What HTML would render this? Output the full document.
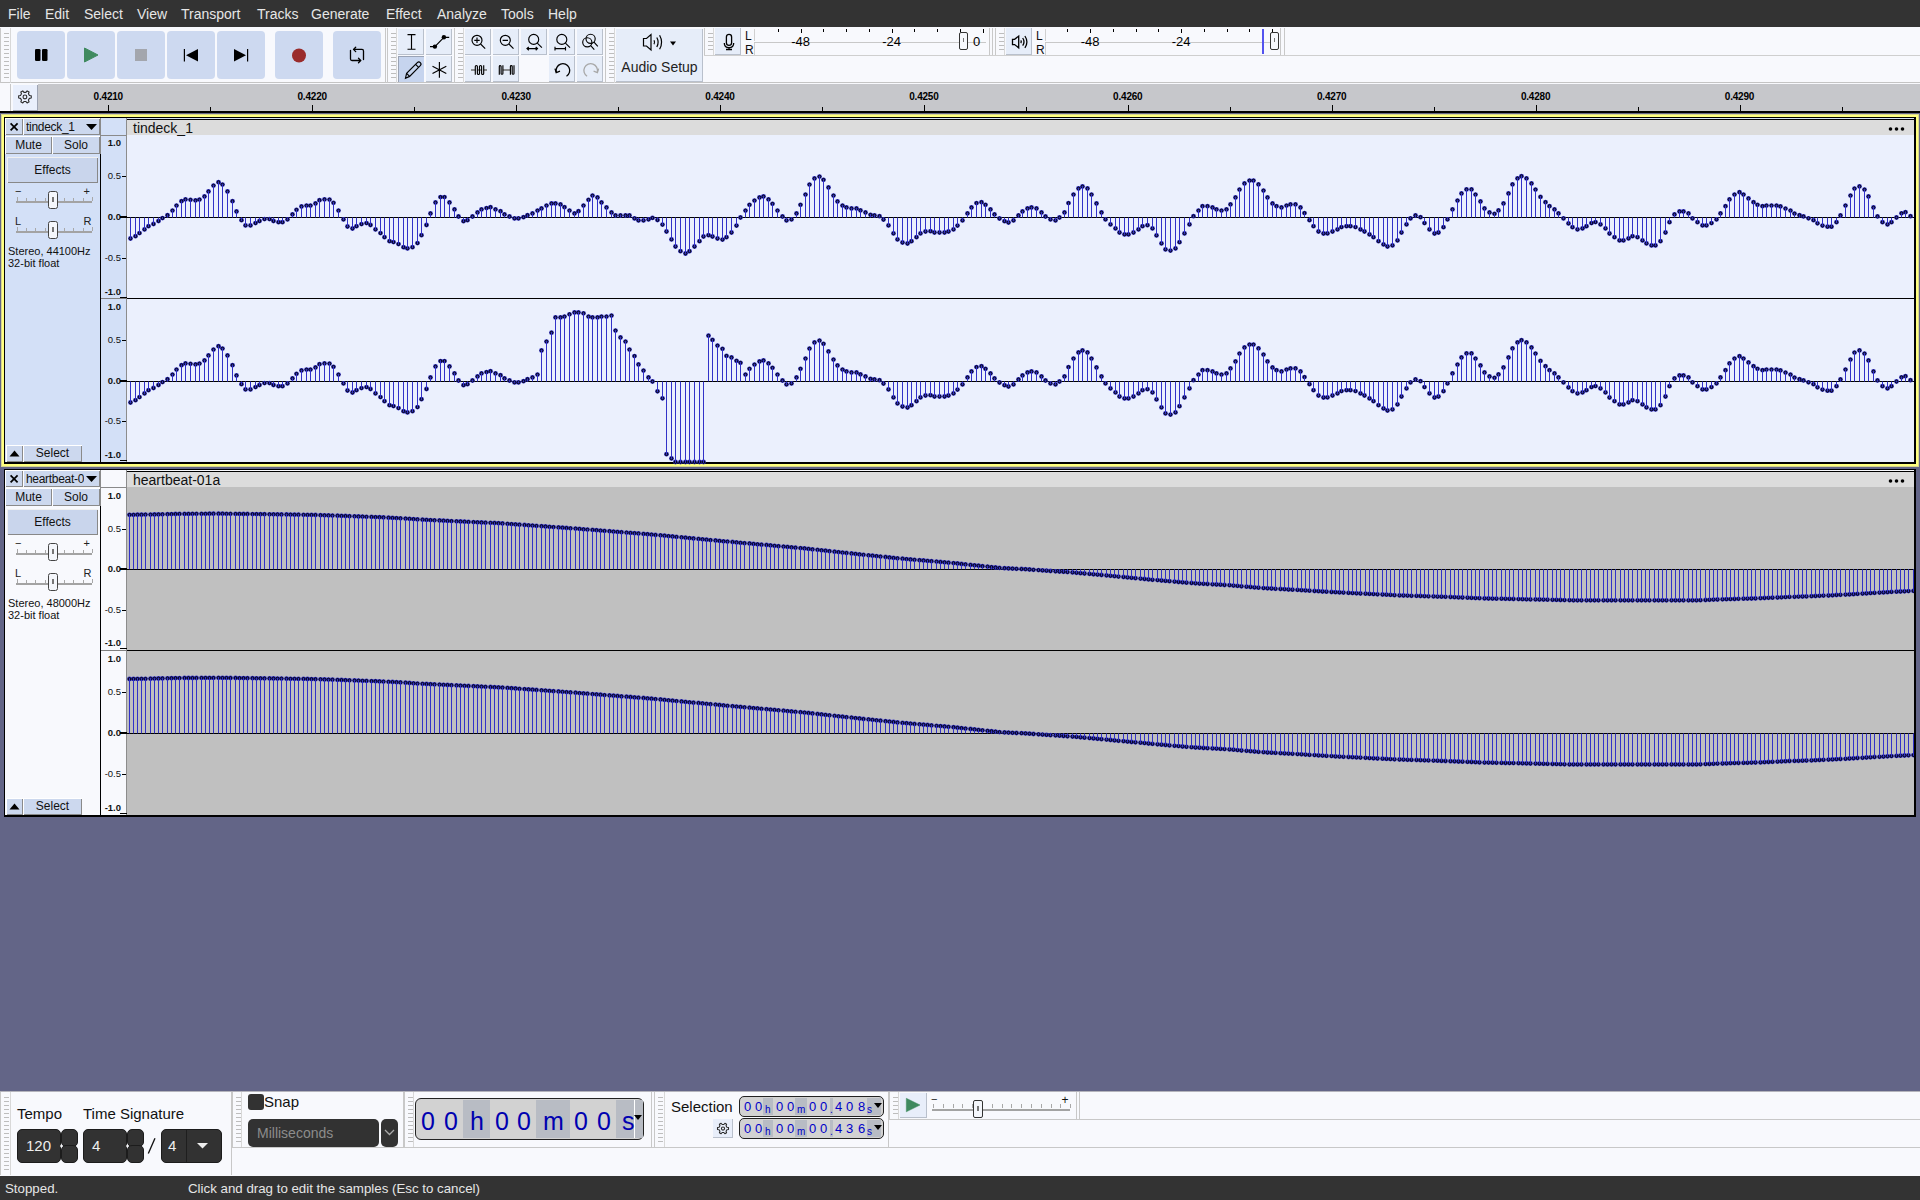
<!DOCTYPE html>
<html><head><meta charset="utf-8"><style>
html,body{margin:0;padding:0;width:1920px;height:1200px;overflow:hidden;background:#636587;position:relative}
body div{position:absolute}
.t{font-family:"Liberation Sans",sans-serif;white-space:nowrap}
svg{position:absolute}
</style></head><body>
<div style="left:0px;top:0px;width:1920px;height:27px;background:#333333"></div>
<div class="t" style="left:8px;top:1px;font-size:14px;color:#e6e6e6;height:27px;line-height:27px;">File</div>
<div class="t" style="left:45px;top:1px;font-size:14px;color:#e6e6e6;height:27px;line-height:27px;">Edit</div>
<div class="t" style="left:84px;top:1px;font-size:14px;color:#e6e6e6;height:27px;line-height:27px;">Select</div>
<div class="t" style="left:137px;top:1px;font-size:14px;color:#e6e6e6;height:27px;line-height:27px;">View</div>
<div class="t" style="left:181px;top:1px;font-size:14px;color:#e6e6e6;height:27px;line-height:27px;">Transport</div>
<div class="t" style="left:257px;top:1px;font-size:14px;color:#e6e6e6;height:27px;line-height:27px;">Tracks</div>
<div class="t" style="left:311px;top:1px;font-size:14px;color:#e6e6e6;height:27px;line-height:27px;">Generate</div>
<div class="t" style="left:386px;top:1px;font-size:14px;color:#e6e6e6;height:27px;line-height:27px;">Effect</div>
<div class="t" style="left:437px;top:1px;font-size:14px;color:#e6e6e6;height:27px;line-height:27px;">Analyze</div>
<div class="t" style="left:501px;top:1px;font-size:14px;color:#e6e6e6;height:27px;line-height:27px;">Tools</div>
<div class="t" style="left:548px;top:1px;font-size:14px;color:#e6e6e6;height:27px;line-height:27px;">Help</div>
<div style="left:0px;top:27px;width:1920px;height:57px;background:#f8f9fd"></div>
<div style="left:0px;top:82px;width:1920px;height:1px;background:#c4c4c4"></div>
<div style="left:0px;top:28px;width:1px;height:55px;background:#c8c8c8"></div>
<div style="left:4px;top:33px;width:5px;height:1px;background:#bdbdbd"></div><div style="left:4px;top:37px;width:5px;height:1px;background:#bdbdbd"></div><div style="left:4px;top:41px;width:5px;height:1px;background:#bdbdbd"></div><div style="left:4px;top:45px;width:5px;height:1px;background:#bdbdbd"></div><div style="left:4px;top:49px;width:5px;height:1px;background:#bdbdbd"></div><div style="left:4px;top:53px;width:5px;height:1px;background:#bdbdbd"></div><div style="left:4px;top:57px;width:5px;height:1px;background:#bdbdbd"></div><div style="left:4px;top:61px;width:5px;height:1px;background:#bdbdbd"></div><div style="left:4px;top:65px;width:5px;height:1px;background:#bdbdbd"></div><div style="left:4px;top:69px;width:5px;height:1px;background:#bdbdbd"></div><div style="left:4px;top:73px;width:5px;height:1px;background:#bdbdbd"></div><div style="left:4px;top:77px;width:5px;height:1px;background:#bdbdbd"></div>
<div style="left:10px;top:28px;width:1px;height:55px;background:#d8d8d8"></div>
<div style="left:17px;top:31px;width:48px;height:48px;background:#cdd9f0;border-radius:4px"></div>
<div style="left:67px;top:31px;width:48px;height:48px;background:#cdd9f0;border-radius:4px"></div>
<div style="left:117px;top:31px;width:48px;height:48px;background:#cdd9f0;border-radius:4px"></div>
<div style="left:167px;top:31px;width:48px;height:48px;background:#cdd9f0;border-radius:4px"></div>
<div style="left:217px;top:31px;width:48px;height:48px;background:#cdd9f0;border-radius:4px"></div>
<div style="left:275px;top:31px;width:48px;height:48px;background:#cdd9f0;border-radius:4px"></div>
<div style="left:333px;top:31px;width:48px;height:48px;background:#cdd9f0;border-radius:4px"></div>
<svg style="position:absolute;left:0;top:0" width="400" height="84">
<rect x="35" y="49" width="5.5" height="12" rx="1.3" fill="#000"/>
<rect x="42" y="49" width="5.5" height="12" rx="1.3" fill="#000"/>
<path d="M84.5 48 L84.5 62 L98 55 Z" fill="#3f8a5f" stroke="#3f8a5f" stroke-width="1" stroke-linejoin="round"/>
<rect x="135" y="49" width="12" height="12" fill="#a3a6ad"/>
<rect x="183.8" y="49" width="1.2" height="12.5" fill="#000"/>
<path d="M186 55.2 L198 49 L198 61.5 Z" fill="#000"/>
<path d="M234 49 L246 55.2 L234 61.5 Z" fill="#000"/>
<rect x="247" y="49" width="1.2" height="12.5" fill="#000"/>
<circle cx="299" cy="55.5" r="7" fill="#9a2c2c"/>
<path d="M350.5 50.3 V59 Q350.5 60.5 352 60.5 H360.8 M358.5 58.3 L360.8 60.5 L358.5 62.7" fill="none" stroke="#000" stroke-width="1.3" stroke-linecap="round" stroke-linejoin="round"/>
<path d="M353.5 49.4 H362 Q363.5 49.4 363.5 51 V59.6 M355.7 47.2 L353.5 49.4 L355.7 51.6" fill="none" stroke="#000" stroke-width="1.3" stroke-linecap="round" stroke-linejoin="round"/>
</svg>
<div style="left:385px;top:28px;width:1px;height:55px;background:#c8c8c8"></div>
<div style="left:387px;top:28px;width:1px;height:55px;background:#c8c8c8"></div>
<div style="left:391px;top:33px;width:5px;height:1px;background:#bdbdbd"></div><div style="left:391px;top:37px;width:5px;height:1px;background:#bdbdbd"></div><div style="left:391px;top:41px;width:5px;height:1px;background:#bdbdbd"></div><div style="left:391px;top:45px;width:5px;height:1px;background:#bdbdbd"></div><div style="left:391px;top:49px;width:5px;height:1px;background:#bdbdbd"></div><div style="left:391px;top:53px;width:5px;height:1px;background:#bdbdbd"></div><div style="left:391px;top:57px;width:5px;height:1px;background:#bdbdbd"></div><div style="left:391px;top:61px;width:5px;height:1px;background:#bdbdbd"></div><div style="left:391px;top:65px;width:5px;height:1px;background:#bdbdbd"></div><div style="left:391px;top:69px;width:5px;height:1px;background:#bdbdbd"></div><div style="left:391px;top:73px;width:5px;height:1px;background:#bdbdbd"></div><div style="left:391px;top:77px;width:5px;height:1px;background:#bdbdbd"></div>
<div style="left:396px;top:28px;width:1px;height:55px;background:#d8d8d8"></div>
<div style="left:398px;top:29px;width:26px;height:26px;background:#e6edf9;box-shadow:inset -1px -1px 0 #b9c0cc"></div>
<div style="left:426px;top:29px;width:26px;height:26px;background:#e6edf9;box-shadow:inset -1px -1px 0 #b9c0cc"></div>
<div style="left:398px;top:56px;width:26px;height:26px;background:#c6d4ee;box-shadow:inset 1px 1px 0 #9aa3b5"></div>
<div style="left:426px;top:56px;width:26px;height:26px;background:#e6edf9;box-shadow:inset -1px -1px 0 #b9c0cc"></div>
<div style="left:454px;top:28px;width:1px;height:55px;background:#c8c8c8"></div>
<div style="left:458px;top:33px;width:5px;height:1px;background:#bdbdbd"></div><div style="left:458px;top:37px;width:5px;height:1px;background:#bdbdbd"></div><div style="left:458px;top:41px;width:5px;height:1px;background:#bdbdbd"></div><div style="left:458px;top:45px;width:5px;height:1px;background:#bdbdbd"></div><div style="left:458px;top:49px;width:5px;height:1px;background:#bdbdbd"></div><div style="left:458px;top:53px;width:5px;height:1px;background:#bdbdbd"></div><div style="left:458px;top:57px;width:5px;height:1px;background:#bdbdbd"></div><div style="left:458px;top:61px;width:5px;height:1px;background:#bdbdbd"></div><div style="left:458px;top:65px;width:5px;height:1px;background:#bdbdbd"></div><div style="left:458px;top:69px;width:5px;height:1px;background:#bdbdbd"></div><div style="left:458px;top:73px;width:5px;height:1px;background:#bdbdbd"></div><div style="left:458px;top:77px;width:5px;height:1px;background:#bdbdbd"></div>
<div style="left:463px;top:28px;width:1px;height:55px;background:#d8d8d8"></div>
<div style="left:465px;top:29px;width:26px;height:26px;background:#e6edf9;box-shadow:inset -1px -1px 0 #b9c0cc"></div>
<div style="left:493px;top:29px;width:26px;height:26px;background:#e6edf9;box-shadow:inset -1px -1px 0 #b9c0cc"></div>
<div style="left:521px;top:29px;width:26px;height:26px;background:#e6edf9;box-shadow:inset -1px -1px 0 #b9c0cc"></div>
<div style="left:549px;top:29px;width:26px;height:26px;background:#e6edf9;box-shadow:inset -1px -1px 0 #b9c0cc"></div>
<div style="left:577px;top:29px;width:26px;height:26px;background:#e6edf9;box-shadow:inset -1px -1px 0 #b9c0cc"></div>
<div style="left:465px;top:56px;width:26px;height:26px;background:#e6edf9;box-shadow:inset -1px -1px 0 #b9c0cc"></div>
<div style="left:493px;top:56px;width:26px;height:26px;background:#e6edf9;box-shadow:inset -1px -1px 0 #b9c0cc"></div>
<div style="left:549px;top:56px;width:26px;height:26px;background:#e6edf9;box-shadow:inset -1px -1px 0 #b9c0cc"></div>
<div style="left:577px;top:56px;width:26px;height:26px;background:#e6edf9;box-shadow:inset -1px -1px 0 #b9c0cc"></div>
<div style="left:605px;top:28px;width:1px;height:55px;background:#c8c8c8"></div>
<div style="left:609px;top:33px;width:5px;height:1px;background:#bdbdbd"></div><div style="left:609px;top:37px;width:5px;height:1px;background:#bdbdbd"></div><div style="left:609px;top:41px;width:5px;height:1px;background:#bdbdbd"></div><div style="left:609px;top:45px;width:5px;height:1px;background:#bdbdbd"></div><div style="left:609px;top:49px;width:5px;height:1px;background:#bdbdbd"></div><div style="left:609px;top:53px;width:5px;height:1px;background:#bdbdbd"></div><div style="left:609px;top:57px;width:5px;height:1px;background:#bdbdbd"></div><div style="left:609px;top:61px;width:5px;height:1px;background:#bdbdbd"></div><div style="left:609px;top:65px;width:5px;height:1px;background:#bdbdbd"></div><div style="left:609px;top:69px;width:5px;height:1px;background:#bdbdbd"></div><div style="left:609px;top:73px;width:5px;height:1px;background:#bdbdbd"></div><div style="left:609px;top:77px;width:5px;height:1px;background:#bdbdbd"></div>
<div style="left:614px;top:28px;width:1px;height:55px;background:#d8d8d8"></div>
<div style="left:616px;top:29px;width:87px;height:53px;background:#e6edf9;box-shadow:inset -1px -1px 0 #b9c0cc"></div>
<div class="t" style="left:616px;top:56px;font-size:14px;color:#222;width:87px;height:22px;line-height:22px;text-align:center">Audio Setup</div>
<svg style="position:absolute;left:0;top:0" width="710" height="84">
<g fill="none" stroke="#000" stroke-width="1.15">
<path d="M407.5 34.6 H415.5 M411.5 34.6 V49.2 M407.5 49.2 H415.5"/>
<path d="M434.9 46.6 L443.9 37.3 M430 46.6 H434.9 M443.9 37.3 H449.2"/>
</g>
<circle cx="434.9" cy="46.6" r="2.2"/><circle cx="443.9" cy="37.3" r="2.2"/>
<g fill="none" stroke="#000" stroke-width="1.15">
<path d="M405.5 78.2 L406.6 73.4 L417.3 62.7 A1.7 1.7 0 0 1 420.3 65.7 L409.6 76.4 Z M406.6 73.4 L409.6 76.4 M415.6 64.4 L418.6 67.4"/>
<path d="M439.4 62 V77.8 M432.5 66.3 L446.3 73.5 M432.5 73.5 L446.3 66.3"/>
</g>
<g fill="none" stroke="#000" stroke-width="1.15">
<circle cx="477" cy="40.3" r="5"/><path d="M480.6 44 L485.2 48.6 M474.3 40.3 H479.7 M477 37.6 V43"/>
<circle cx="505.3" cy="40.3" r="5"/><path d="M508.9 44 L513.5 48.6 M502.6 40.3 H508"/>
<circle cx="533.7" cy="39.4" r="5"/><path d="M537.3 43.1 L541.9 47.7 M527 48.6 H537.5 M528.8 47 L527 48.6 L528.8 50.2 M535.7 47 L537.5 48.6 L535.7 50.2"/>
<circle cx="561.8" cy="39.4" r="5"/><path d="M565.4 43.1 L570 47.7 M555 48.6 H565.5 M555 46.8 V50.4 M565.5 46.8 V50.4"/>
<circle cx="587.3" cy="42.3" r="4.6"/><circle cx="590.6" cy="38.8" r="4.6"/><path d="M594 42.2 L597.8 46.3 M590.7 45.6 L594.3 49.6"/>
</g>
<path d="M471 70 H487" stroke="#6e6e6e" stroke-width="1.5"/>
<path d="M475.3 74.7 V66.5 A1.05 1.05 0 0 1 477.4 66.5 V73.4 A1.05 1.05 0 0 0 479.5 73.4 V66.5 A1.05 1.05 0 0 1 481.6 66.5 V73.4 A1.05 1.05 0 0 0 483.7 73.4 V65.3" fill="#e6edf9" stroke="#000" stroke-width="1.15"/>
<path d="M502.8 70 H510" stroke="#6e6e6e" stroke-width="1.5"/>
<path d="M499.3 74.7 V66.5 A0.9 0.9 0 0 1 501.1 66.5 V73.4 A0.9 0.9 0 0 0 502.9 73.4 V65.3" fill="none" stroke="#000" stroke-width="1.15"/>
<path d="M510.4 74.7 V66.5 A0.9 0.9 0 0 1 512.2 66.5 V73.4 A0.9 0.9 0 0 0 514 73.4 V65.3" fill="none" stroke="#000" stroke-width="1.15"/>
<path d="M556.3 72.2 A6.8 6.8 0 1 1 566.5 76.3" fill="none" stroke="#000" stroke-width="1.3"/>
<path d="M555 68.6 L556.2 72.6 L560 71.2" fill="none" stroke="#000" stroke-width="1.3"/>
<path d="M597.3 72.2 A6.8 6.8 0 1 0 587.1 76.3" fill="none" stroke="#a8a8a8" stroke-width="1.3"/>
<path d="M598.6 68.6 L597.4 72.6 L593.6 71.2" fill="none" stroke="#a8a8a8" stroke-width="1.3"/>
<g fill="none" stroke="#000" stroke-width="1.2">
<path d="M643.5 38.5 H646.5 L651 34.5 V50 L646.5 46 H643.5 Z"/>
<path d="M654 40.3 Q655.2 42.3 654 44.3"/>
<path d="M656.8 37.5 Q659.5 42.3 656.8 47"/>
<path d="M659.6 35.2 Q663.6 42.3 659.6 49.3"/>
</g>
<path d="M670 41.5 H676 L673 45.5 Z" fill="#000"/>
</svg>
<div style="left:704px;top:28px;width:1px;height:27px;background:#c8c8c8"></div>
<div style="left:708px;top:33px;width:5px;height:1px;background:#bdbdbd"></div><div style="left:708px;top:37px;width:5px;height:1px;background:#bdbdbd"></div><div style="left:708px;top:41px;width:5px;height:1px;background:#bdbdbd"></div><div style="left:708px;top:45px;width:5px;height:1px;background:#bdbdbd"></div><div style="left:708px;top:49px;width:5px;height:1px;background:#bdbdbd"></div>
<div style="left:713px;top:28px;width:1px;height:27px;background:#d8d8d8"></div>
<div style="left:715px;top:28px;width:26px;height:27px;background:#e6edf9;box-shadow:inset -1px -1px 0 #b9c0cc"></div>
<svg style="position:absolute;left:715px;top:28px" width="26" height="27"><g fill="none" stroke="#000" stroke-width="1.3"><rect x="11.4" y="6.3" width="5.2" height="11" rx="2.6"/><path d="M9.3 15 Q9.3 19.7 14 19.7 Q18.7 19.7 18.7 15 M14 19.7 V21.5 M11 21.5 H17"/></g></svg>
<div class="t" style="left:745px;top:30px;font-size:12px;color:#111;height:13px;line-height:13px;">L</div>
<div class="t" style="left:745px;top:44px;font-size:12px;color:#111;height:13px;line-height:13px;">R</div>
<div style="left:995px;top:28px;width:1px;height:27px;background:#c8c8c8"></div>
<div style="left:999px;top:33px;width:5px;height:1px;background:#bdbdbd"></div><div style="left:999px;top:37px;width:5px;height:1px;background:#bdbdbd"></div><div style="left:999px;top:41px;width:5px;height:1px;background:#bdbdbd"></div><div style="left:999px;top:45px;width:5px;height:1px;background:#bdbdbd"></div><div style="left:999px;top:49px;width:5px;height:1px;background:#bdbdbd"></div>
<div style="left:1004px;top:28px;width:1px;height:27px;background:#d8d8d8"></div>
<div style="left:1006px;top:28px;width:26px;height:27px;background:#e6edf9;box-shadow:inset -1px -1px 0 #b9c0cc"></div>
<svg style="position:absolute;left:1006px;top:28px" width="26" height="27"><g fill="none" stroke="#000" stroke-width="1.3"><path d="M6.5 11.3 H8.6 L12.7 8.1 V19.8 L8.6 16.6 H6.5 Z"/><path d="M14.8 12.4 Q15.8 13.8 14.8 15.2"/><path d="M16.7 10 Q19.3 13.85 16.7 17.7"/><path d="M18.9 8 Q22.9 13.95 18.9 19.9"/></g></svg>
<div class="t" style="left:1036px;top:30px;font-size:12px;color:#111;height:13px;line-height:13px;">L</div>
<div class="t" style="left:1036px;top:44px;font-size:12px;color:#111;height:13px;line-height:13px;">R</div>
<div style="left:754px;top:29px;width:1px;height:12px;background:#d0d0d0"></div>
<div style="left:754px;top:43px;width:1px;height:12px;background:#d0d0d0"></div>
<div style="left:754px;top:42px;width:232px;height:1px;background:#c8c8c8"></div>
<div style="left:777.8px;top:29px;width:1px;height:3px;background:#000"></div><div style="left:800.6px;top:29px;width:1px;height:4px;background:#000"></div><div style="left:823.3px;top:29px;width:1px;height:3px;background:#000"></div><div style="left:846.1px;top:29px;width:1px;height:3px;background:#000"></div><div style="left:868.8px;top:29px;width:1px;height:3px;background:#000"></div><div style="left:891.5px;top:29px;width:1px;height:4px;background:#000"></div><div style="left:914.3px;top:29px;width:1px;height:3px;background:#000"></div><div style="left:937.0px;top:29px;width:1px;height:3px;background:#000"></div><div style="left:959.8px;top:29px;width:1px;height:3px;background:#000"></div><div style="left:982.5px;top:29px;width:1px;height:4px;background:#000"></div>
<div class="t" style="left:785.5799999999999px;top:34px;font-size:13px;color:#000;width:30px;height:16px;line-height:16px;text-align:center">-48</div>
<div class="t" style="left:876.54px;top:34px;font-size:13px;color:#000;width:30px;height:16px;line-height:16px;text-align:center">-24</div>
<div style="left:959px;top:32px;width:9px;height:18px;background:#f6f8fd;border:1px solid #333;border-radius:2px;box-sizing:border-box"></div>
<div style="left:963px;top:38px;width:1px;height:4px;background:#777"></div>
<div class="t" style="left:973px;top:34px;font-size:13px;color:#000;width:10px;height:16px;line-height:16px;">0</div>
<div style="left:989px;top:28px;width:1px;height:27px;background:#c8c8c8"></div>
<div style="left:992px;top:28px;width:1px;height:27px;background:#c8c8c8"></div>
<div style="left:1045px;top:29px;width:1px;height:12px;background:#d0d0d0"></div>
<div style="left:1045px;top:43px;width:1px;height:12px;background:#d0d0d0"></div>
<div style="left:1045px;top:42px;width:232px;height:1px;background:#c8c8c8"></div>
<div style="left:1067.3px;top:29px;width:1px;height:3px;background:#000"></div><div style="left:1090.1px;top:29px;width:1px;height:4px;background:#000"></div><div style="left:1112.8px;top:29px;width:1px;height:3px;background:#000"></div><div style="left:1135.6px;top:29px;width:1px;height:3px;background:#000"></div><div style="left:1158.3px;top:29px;width:1px;height:3px;background:#000"></div><div style="left:1181.0px;top:29px;width:1px;height:4px;background:#000"></div><div style="left:1203.8px;top:29px;width:1px;height:3px;background:#000"></div><div style="left:1226.5px;top:29px;width:1px;height:3px;background:#000"></div><div style="left:1249.3px;top:29px;width:1px;height:3px;background:#000"></div><div style="left:1272.0px;top:29px;width:1px;height:4px;background:#000"></div>
<div class="t" style="left:1075.08px;top:34px;font-size:13px;color:#000;width:30px;height:16px;line-height:16px;text-align:center">-48</div>
<div class="t" style="left:1166.04px;top:34px;font-size:13px;color:#000;width:30px;height:16px;line-height:16px;text-align:center">-24</div>
<div style="left:1262px;top:29px;width:2px;height:25px;background:#5353ef"></div>
<div style="left:1270px;top:32px;width:9px;height:18px;background:#f6f8fd;border:1px solid #333;border-radius:2px;box-sizing:border-box"></div>
<div style="left:1274px;top:38px;width:1px;height:4px;background:#777"></div>
<div style="left:1280px;top:28px;width:1px;height:27px;background:#c8c8c8"></div>
<div style="left:1284px;top:28px;width:1px;height:27px;background:#c8c8c8"></div>
<div style="left:704px;top:55px;width:1216px;height:1px;background:#cfcfcf"></div>
<div style="left:0px;top:84px;width:1920px;height:29px;background:#f8f9fd"></div>
<div style="left:10px;top:84px;width:1px;height:29px;background:#c8c8c8"></div>
<div style="left:13px;top:85px;width:25px;height:26px;background:#e9effc;box-shadow:inset -1px -1px 0 #9ea4b4"></div>
<svg style="position:absolute;left:13px;top:85px" width="25" height="26"><path d="M16.42 10.50 L18.25 10.82 L18.25 13.08 L16.42 13.40 L15.44 15.09 L16.08 16.84 L14.12 17.97 L12.93 16.55 L10.97 16.55 L9.78 17.97 L7.82 16.84 L8.46 15.09 L7.48 13.40 L5.65 13.08 L5.65 10.82 L7.48 10.50 L8.46 8.81 L7.82 7.06 L9.78 5.93 L10.97 7.35 L12.93 7.35 L14.12 5.93 L16.08 7.06 L15.44 8.81 Z" fill="none" stroke="#2a2a2a" stroke-width="1.1" stroke-linejoin="round"/><circle cx="11.95" cy="11.95" r="1.9" fill="none" stroke="#2a2a2a" stroke-width="1.1"/></svg>
<div style="left:38px;top:84px;width:1882px;height:28px;background:#c6c7cb"></div>
<div style="left:0px;top:111px;width:1920px;height:2px;background:#000"></div>
<div style="left:108.3px;top:105px;width:1px;height:6px;background:#000"></div><div style="left:210.2px;top:107px;width:1px;height:4px;background:#000"></div><div style="left:312.2px;top:105px;width:1px;height:6px;background:#000"></div><div style="left:414.1px;top:107px;width:1px;height:4px;background:#000"></div><div style="left:516.1px;top:105px;width:1px;height:6px;background:#000"></div><div style="left:618.1px;top:107px;width:1px;height:4px;background:#000"></div><div style="left:720.0px;top:105px;width:1px;height:6px;background:#000"></div><div style="left:822.0px;top:107px;width:1px;height:4px;background:#000"></div><div style="left:923.9px;top:105px;width:1px;height:6px;background:#000"></div><div style="left:1025.8px;top:107px;width:1px;height:4px;background:#000"></div><div style="left:1127.8px;top:105px;width:1px;height:6px;background:#000"></div><div style="left:1229.8px;top:107px;width:1px;height:4px;background:#000"></div><div style="left:1331.7px;top:105px;width:1px;height:6px;background:#000"></div><div style="left:1433.7px;top:107px;width:1px;height:4px;background:#000"></div><div style="left:1535.6px;top:105px;width:1px;height:6px;background:#000"></div><div style="left:1637.5px;top:107px;width:1px;height:4px;background:#000"></div><div style="left:1739.5px;top:105px;width:1px;height:6px;background:#000"></div><div style="left:1841.5px;top:107px;width:1px;height:4px;background:#000"></div><div style="left:1943.4px;top:105px;width:1px;height:6px;background:#000"></div>
<div class="t" style="left:88.3px;top:90px;font-size:10px;color:#000;width:40px;height:14px;line-height:14px;text-align:center;font-weight:bold;letter-spacing:-0.2px">0.4210</div>
<div class="t" style="left:292.2px;top:90px;font-size:10px;color:#000;width:40px;height:14px;line-height:14px;text-align:center;font-weight:bold;letter-spacing:-0.2px">0.4220</div>
<div class="t" style="left:496.1px;top:90px;font-size:10px;color:#000;width:40px;height:14px;line-height:14px;text-align:center;font-weight:bold;letter-spacing:-0.2px">0.4230</div>
<div class="t" style="left:700.0px;top:90px;font-size:10px;color:#000;width:40px;height:14px;line-height:14px;text-align:center;font-weight:bold;letter-spacing:-0.2px">0.4240</div>
<div class="t" style="left:903.9px;top:90px;font-size:10px;color:#000;width:40px;height:14px;line-height:14px;text-align:center;font-weight:bold;letter-spacing:-0.2px">0.4250</div>
<div class="t" style="left:1107.8px;top:90px;font-size:10px;color:#000;width:40px;height:14px;line-height:14px;text-align:center;font-weight:bold;letter-spacing:-0.2px">0.4260</div>
<div class="t" style="left:1311.7px;top:90px;font-size:10px;color:#000;width:40px;height:14px;line-height:14px;text-align:center;font-weight:bold;letter-spacing:-0.2px">0.4270</div>
<div class="t" style="left:1515.6px;top:90px;font-size:10px;color:#000;width:40px;height:14px;line-height:14px;text-align:center;font-weight:bold;letter-spacing:-0.2px">0.4280</div>
<div class="t" style="left:1719.5px;top:90px;font-size:10px;color:#000;width:40px;height:14px;line-height:14px;text-align:center;font-weight:bold;letter-spacing:-0.2px">0.4290</div>
<div style="left:0px;top:113px;width:1920px;height:978px;background:#636587"></div>
<div style="left:1px;top:114px;width:1918px;height:353px;background:#d6d68e"></div>
<div style="left:2px;top:115px;width:1916px;height:351px;background:#ffff80"></div>
<div style="left:4px;top:117px;width:1912px;height:347px;background:#000"></div>
<div style="left:5px;top:118px;width:1909px;height:344px;background:#d3e0f7"></div>
<div style="left:101px;top:118px;width:26px;height:344px;background:#d3e0f7"></div>
<div style="left:100px;top:154px;width:1px;height:308px;background:#000"></div>
<div style="left:100px;top:118px;width:1px;height:36px;background:#8a8a8a"></div>
<div style="left:101px;top:135px;width:26px;height:1px;background:#8a8a8a"></div>
<div style="left:126px;top:118px;width:1px;height:344px;background:#8c8c8c"></div>
<div style="left:127px;top:119px;width:1787px;height:1px;background:#000"></div>
<div style="left:127px;top:120px;width:1787px;height:15px;background:#dcdcdc"></div>
<svg style="position:absolute;left:1886px;top:126px" width="20" height="6"><circle cx="4.5" cy="3" r="1.8"/><circle cx="10.5" cy="3" r="1.8"/><circle cx="16.5" cy="3" r="1.8"/></svg>
<div style="left:127px;top:135px;width:1787px;height:327px;background:#ebf0fd"></div>
<div class="t" style="left:133px;top:120px;font-size:14px;color:#111;height:17px;line-height:17px;">tindeck_1</div>
<div style="left:5px;top:118px;width:18px;height:17px;background:#ccd8ee;box-shadow:inset 1px 1px 0 #fff, inset -1px -1px 0 #8a8a8a"></div>
<svg style="position:absolute;left:5px;top:118px" width="18" height="17"><path d="M5.6 5.3 L12.6 12.3 M12.6 5.3 L5.6 12.3" stroke="#000" stroke-width="1.7"/></svg>
<div style="left:23px;top:118px;width:77px;height:17px;background:#ccd8ee;box-shadow:inset 1px 1px 0 #fff, inset -1px -1px 0 #8a8a8a"></div>
<div class="t" style="left:26px;top:119px;font-size:12px;color:#111;width:58px;height:17px;line-height:17px;overflow:hidden;white-space:nowrap;letter-spacing:-0.3px">tindeck_1</div>
<svg style="position:absolute;left:85px;top:123px" width="14" height="8"><path d="M1 1 H12 L6.5 7 Z" fill="#000"/></svg>
<div style="left:5px;top:136px;width:47px;height:18px;background:#ccd8ee;box-shadow:inset 1px 1px 0 #fff, inset -1px -1px 0 #8a8a8a"></div>
<div class="t" style="left:5px;top:136px;font-size:12px;color:#111;width:47px;height:18px;line-height:18px;text-align:center">Mute</div>
<div style="left:52px;top:136px;width:48px;height:18px;background:#ccd8ee;box-shadow:inset 1px 1px 0 #fff, inset -1px -1px 0 #8a8a8a"></div>
<div class="t" style="left:52px;top:136px;font-size:12px;color:#111;width:48px;height:18px;line-height:18px;text-align:center">Solo</div>
<div style="left:7px;top:157px;width:91px;height:26px;background:#c9d5ec;box-shadow:inset 1px 1px 0 #f0f0f0, inset -1px -1px 0 #888, 0 0 0 0 #000"></div>
<div class="t" style="left:7px;top:157px;font-size:12px;color:#111;width:91px;height:26px;line-height:26px;text-align:center">Effects</div>
<div class="t" style="left:15px;top:185px;font-size:11px;color:#222;height:12px;line-height:12px;">&minus;</div>
<div class="t" style="left:83.5px;top:185px;font-size:11px;color:#222;height:12px;line-height:12px;">+</div>
<div style="left:16px;top:201px;width:76px;height:2px;background:#a3a3a3"></div>
<div style="left:16.5px;top:197px;width:1px;height:4px;background:#a8a8a8"></div><div style="left:25.9px;top:198px;width:1px;height:3px;background:#a8a8a8"></div><div style="left:35.4px;top:198px;width:1px;height:3px;background:#a8a8a8"></div><div style="left:44.8px;top:198px;width:1px;height:3px;background:#a8a8a8"></div><div style="left:54.3px;top:198px;width:1px;height:3px;background:#a8a8a8"></div><div style="left:63.8px;top:198px;width:1px;height:3px;background:#a8a8a8"></div><div style="left:73.2px;top:198px;width:1px;height:3px;background:#a8a8a8"></div><div style="left:82.6px;top:198px;width:1px;height:3px;background:#a8a8a8"></div><div style="left:92.1px;top:197px;width:1px;height:4px;background:#a8a8a8"></div>
<div style="left:48px;top:191px;width:10px;height:18px;background:#f4f6fb;border:1px solid #444;border-radius:2.5px;box-sizing:border-box"></div>
<div style="left:52px;top:197px;width:2px;height:5px;background:#777"></div>
<div class="t" style="left:15px;top:215px;font-size:11px;color:#222;height:12px;line-height:12px;">L</div>
<div class="t" style="left:83.5px;top:215px;font-size:11px;color:#222;height:12px;line-height:12px;">R</div>
<div style="left:16px;top:231px;width:76px;height:2px;background:#a3a3a3"></div>
<div style="left:16.5px;top:227px;width:1px;height:4px;background:#a8a8a8"></div><div style="left:25.9px;top:228px;width:1px;height:3px;background:#a8a8a8"></div><div style="left:35.4px;top:228px;width:1px;height:3px;background:#a8a8a8"></div><div style="left:44.8px;top:228px;width:1px;height:3px;background:#a8a8a8"></div><div style="left:54.3px;top:228px;width:1px;height:3px;background:#a8a8a8"></div><div style="left:63.8px;top:228px;width:1px;height:3px;background:#a8a8a8"></div><div style="left:73.2px;top:228px;width:1px;height:3px;background:#a8a8a8"></div><div style="left:82.6px;top:228px;width:1px;height:3px;background:#a8a8a8"></div><div style="left:92.1px;top:227px;width:1px;height:4px;background:#a8a8a8"></div>
<div style="left:48px;top:221px;width:10px;height:18px;background:#f4f6fb;border:1px solid #444;border-radius:2.5px;box-sizing:border-box"></div>
<div style="left:52px;top:227px;width:2px;height:5px;background:#777"></div>
<div class="t" style="left:8px;top:245px;font-size:11px;color:#111;height:13px;line-height:13px;">Stereo, 44100Hz</div>
<div class="t" style="left:8px;top:257px;font-size:11px;color:#111;height:13px;line-height:13px;">32-bit float</div>
<div style="left:6px;top:445px;width:17px;height:17px;background:#ccd8ee;box-shadow:inset 1px 1px 0 #fff, inset -1px -1px 0 #8a8a8a"></div>
<svg style="position:absolute;left:8px;top:448px" width="14" height="10"><path d="M1.5 8.5 L6.5 2.5 L11.5 8.5 Z" fill="#000"/></svg>
<div style="left:23px;top:445px;width:59px;height:17px;background:#ccd8ee;box-shadow:inset 1px 1px 0 #fff, inset -1px -1px 0 #8a8a8a"></div>
<div class="t" style="left:23px;top:445px;font-size:12px;color:#111;width:59px;height:17px;line-height:17px;text-align:center">Select</div>
<div class="t" style="left:99px;top:136.0px;width:22px;height:14px;line-height:14px;font-size:9.5px;text-align:right;font-weight:bold;color:#111">1.0</div><div class="t" style="left:99px;top:169.2px;width:22px;height:14px;line-height:14px;font-size:9.5px;text-align:right;font-weight:normal;color:#111">0.5</div><div style="left:122px;top:176.2px;width:4px;height:1px;background:#000"></div><div class="t" style="left:99px;top:210.0px;width:22px;height:14px;line-height:14px;font-size:9.5px;text-align:right;font-weight:bold;color:#111">0.0</div><div style="left:120px;top:216.0px;width:7px;height:2px;background:#000"></div><div class="t" style="left:99px;top:250.8px;width:22px;height:14px;line-height:14px;font-size:9.5px;text-align:right;font-weight:normal;color:#111">-0.5</div><div style="left:122px;top:257.8px;width:4px;height:1px;background:#000"></div><div class="t" style="left:99px;top:284.5px;width:22px;height:14px;line-height:14px;font-size:9.5px;text-align:right;font-weight:bold;color:#111">-1.0</div><div style="left:120px;top:296.5px;width:7px;height:1px;background:#000"></div>
<div class="t" style="left:99px;top:300.0px;width:22px;height:14px;line-height:14px;font-size:9.5px;text-align:right;font-weight:bold;color:#111">1.0</div><div class="t" style="left:99px;top:333.1px;width:22px;height:14px;line-height:14px;font-size:9.5px;text-align:right;font-weight:normal;color:#111">0.5</div><div style="left:122px;top:340.1px;width:4px;height:1px;background:#000"></div><div class="t" style="left:99px;top:373.8px;width:22px;height:14px;line-height:14px;font-size:9.5px;text-align:right;font-weight:bold;color:#111">0.0</div><div style="left:120px;top:379.8px;width:7px;height:2px;background:#000"></div><div class="t" style="left:99px;top:414.4px;width:22px;height:14px;line-height:14px;font-size:9.5px;text-align:right;font-weight:normal;color:#111">-0.5</div><div style="left:122px;top:421.4px;width:4px;height:1px;background:#000"></div><div class="t" style="left:99px;top:448.0px;width:22px;height:14px;line-height:14px;font-size:9.5px;text-align:right;font-weight:bold;color:#111">-1.0</div><div style="left:120px;top:460.0px;width:7px;height:1px;background:#000"></div>
<div style="left:101px;top:298px;width:26px;height:1px;background:#808080"></div>
<div style="left:127px;top:298px;width:1787px;height:1px;background:#000"></div>
<div style="left:4px;top:469px;width:1912px;height:348px;background:#000"></div>
<div style="left:5px;top:470px;width:1909px;height:345px;background:#f8f9fd"></div>
<div style="left:101px;top:470px;width:26px;height:345px;background:#f8f9fd"></div>
<div style="left:100px;top:506px;width:1px;height:309px;background:#000"></div>
<div style="left:100px;top:470px;width:1px;height:36px;background:#8a8a8a"></div>
<div style="left:101px;top:487px;width:26px;height:1px;background:#8a8a8a"></div>
<div style="left:126px;top:470px;width:1px;height:345px;background:#8c8c8c"></div>
<div style="left:127px;top:471px;width:1787px;height:1px;background:#000"></div>
<div style="left:127px;top:472px;width:1787px;height:15px;background:#dcdcdc"></div>
<svg style="position:absolute;left:1886px;top:478px" width="20" height="6"><circle cx="4.5" cy="3" r="1.8"/><circle cx="10.5" cy="3" r="1.8"/><circle cx="16.5" cy="3" r="1.8"/></svg>
<div style="left:127px;top:487px;width:1787px;height:328px;background:#c0c0c0"></div>
<div class="t" style="left:133px;top:472px;font-size:14px;color:#111;height:17px;line-height:17px;">heartbeat-01a</div>
<div style="left:5px;top:470px;width:18px;height:17px;background:#ccd8ee;box-shadow:inset 1px 1px 0 #fff, inset -1px -1px 0 #8a8a8a"></div>
<svg style="position:absolute;left:5px;top:470px" width="18" height="17"><path d="M5.6 5.3 L12.6 12.3 M12.6 5.3 L5.6 12.3" stroke="#000" stroke-width="1.7"/></svg>
<div style="left:23px;top:470px;width:77px;height:17px;background:#ccd8ee;box-shadow:inset 1px 1px 0 #fff, inset -1px -1px 0 #8a8a8a"></div>
<div class="t" style="left:26px;top:471px;font-size:12px;color:#111;width:58px;height:17px;line-height:17px;overflow:hidden;white-space:nowrap;letter-spacing:-0.3px">heartbeat-01a</div>
<svg style="position:absolute;left:85px;top:475px" width="14" height="8"><path d="M1 1 H12 L6.5 7 Z" fill="#000"/></svg>
<div style="left:5px;top:488px;width:47px;height:18px;background:#ccd8ee;box-shadow:inset 1px 1px 0 #fff, inset -1px -1px 0 #8a8a8a"></div>
<div class="t" style="left:5px;top:488px;font-size:12px;color:#111;width:47px;height:18px;line-height:18px;text-align:center">Mute</div>
<div style="left:52px;top:488px;width:48px;height:18px;background:#ccd8ee;box-shadow:inset 1px 1px 0 #fff, inset -1px -1px 0 #8a8a8a"></div>
<div class="t" style="left:52px;top:488px;font-size:12px;color:#111;width:48px;height:18px;line-height:18px;text-align:center">Solo</div>
<div style="left:7px;top:509px;width:91px;height:26px;background:#c9d5ec;box-shadow:inset 1px 1px 0 #f0f0f0, inset -1px -1px 0 #888, 0 0 0 0 #000"></div>
<div class="t" style="left:7px;top:509px;font-size:12px;color:#111;width:91px;height:26px;line-height:26px;text-align:center">Effects</div>
<div class="t" style="left:15px;top:537px;font-size:11px;color:#222;height:12px;line-height:12px;">&minus;</div>
<div class="t" style="left:83.5px;top:537px;font-size:11px;color:#222;height:12px;line-height:12px;">+</div>
<div style="left:16px;top:553px;width:76px;height:2px;background:#a3a3a3"></div>
<div style="left:16.5px;top:549px;width:1px;height:4px;background:#a8a8a8"></div><div style="left:25.9px;top:550px;width:1px;height:3px;background:#a8a8a8"></div><div style="left:35.4px;top:550px;width:1px;height:3px;background:#a8a8a8"></div><div style="left:44.8px;top:550px;width:1px;height:3px;background:#a8a8a8"></div><div style="left:54.3px;top:550px;width:1px;height:3px;background:#a8a8a8"></div><div style="left:63.8px;top:550px;width:1px;height:3px;background:#a8a8a8"></div><div style="left:73.2px;top:550px;width:1px;height:3px;background:#a8a8a8"></div><div style="left:82.6px;top:550px;width:1px;height:3px;background:#a8a8a8"></div><div style="left:92.1px;top:549px;width:1px;height:4px;background:#a8a8a8"></div>
<div style="left:48px;top:543px;width:10px;height:18px;background:#f4f6fb;border:1px solid #444;border-radius:2.5px;box-sizing:border-box"></div>
<div style="left:52px;top:549px;width:2px;height:5px;background:#777"></div>
<div class="t" style="left:15px;top:567px;font-size:11px;color:#222;height:12px;line-height:12px;">L</div>
<div class="t" style="left:83.5px;top:567px;font-size:11px;color:#222;height:12px;line-height:12px;">R</div>
<div style="left:16px;top:583px;width:76px;height:2px;background:#a3a3a3"></div>
<div style="left:16.5px;top:579px;width:1px;height:4px;background:#a8a8a8"></div><div style="left:25.9px;top:580px;width:1px;height:3px;background:#a8a8a8"></div><div style="left:35.4px;top:580px;width:1px;height:3px;background:#a8a8a8"></div><div style="left:44.8px;top:580px;width:1px;height:3px;background:#a8a8a8"></div><div style="left:54.3px;top:580px;width:1px;height:3px;background:#a8a8a8"></div><div style="left:63.8px;top:580px;width:1px;height:3px;background:#a8a8a8"></div><div style="left:73.2px;top:580px;width:1px;height:3px;background:#a8a8a8"></div><div style="left:82.6px;top:580px;width:1px;height:3px;background:#a8a8a8"></div><div style="left:92.1px;top:579px;width:1px;height:4px;background:#a8a8a8"></div>
<div style="left:48px;top:573px;width:10px;height:18px;background:#f4f6fb;border:1px solid #444;border-radius:2.5px;box-sizing:border-box"></div>
<div style="left:52px;top:579px;width:2px;height:5px;background:#777"></div>
<div class="t" style="left:8px;top:597px;font-size:11px;color:#111;height:13px;line-height:13px;">Stereo, 48000Hz</div>
<div class="t" style="left:8px;top:609px;font-size:11px;color:#111;height:13px;line-height:13px;">32-bit float</div>
<div style="left:6px;top:798px;width:17px;height:17px;background:#ccd8ee;box-shadow:inset 1px 1px 0 #fff, inset -1px -1px 0 #8a8a8a"></div>
<svg style="position:absolute;left:8px;top:801px" width="14" height="10"><path d="M1.5 8.5 L6.5 2.5 L11.5 8.5 Z" fill="#000"/></svg>
<div style="left:23px;top:798px;width:59px;height:17px;background:#ccd8ee;box-shadow:inset 1px 1px 0 #fff, inset -1px -1px 0 #8a8a8a"></div>
<div class="t" style="left:23px;top:798px;font-size:12px;color:#111;width:59px;height:17px;line-height:17px;text-align:center">Select</div>
<div class="t" style="left:99px;top:488.5px;width:22px;height:14px;line-height:14px;font-size:9.5px;text-align:right;font-weight:bold;color:#111">1.0</div><div class="t" style="left:99px;top:521.5px;width:22px;height:14px;line-height:14px;font-size:9.5px;text-align:right;font-weight:normal;color:#111">0.5</div><div style="left:122px;top:528.5px;width:4px;height:1px;background:#000"></div><div class="t" style="left:99px;top:562.0px;width:22px;height:14px;line-height:14px;font-size:9.5px;text-align:right;font-weight:bold;color:#111">0.0</div><div style="left:120px;top:568.0px;width:7px;height:2px;background:#000"></div><div class="t" style="left:99px;top:602.5px;width:22px;height:14px;line-height:14px;font-size:9.5px;text-align:right;font-weight:normal;color:#111">-0.5</div><div style="left:122px;top:609.5px;width:4px;height:1px;background:#000"></div><div class="t" style="left:99px;top:636.0px;width:22px;height:14px;line-height:14px;font-size:9.5px;text-align:right;font-weight:bold;color:#111">-1.0</div><div style="left:120px;top:648.0px;width:7px;height:1px;background:#000"></div>
<div class="t" style="left:99px;top:651.5px;width:22px;height:14px;line-height:14px;font-size:9.5px;text-align:right;font-weight:bold;color:#111">1.0</div><div class="t" style="left:99px;top:685.0px;width:22px;height:14px;line-height:14px;font-size:9.5px;text-align:right;font-weight:normal;color:#111">0.5</div><div style="left:122px;top:692.0px;width:4px;height:1px;background:#000"></div><div class="t" style="left:99px;top:726.0px;width:22px;height:14px;line-height:14px;font-size:9.5px;text-align:right;font-weight:bold;color:#111">0.0</div><div style="left:120px;top:732.0px;width:7px;height:2px;background:#000"></div><div class="t" style="left:99px;top:767.0px;width:22px;height:14px;line-height:14px;font-size:9.5px;text-align:right;font-weight:normal;color:#111">-0.5</div><div style="left:122px;top:774.0px;width:4px;height:1px;background:#000"></div><div class="t" style="left:99px;top:801.0px;width:22px;height:14px;line-height:14px;font-size:9.5px;text-align:right;font-weight:bold;color:#111">-1.0</div><div style="left:120px;top:813.0px;width:7px;height:1px;background:#000"></div>
<div style="left:101px;top:650px;width:26px;height:1px;background:#808080"></div>
<div style="left:127px;top:650px;width:1787px;height:1px;background:#000"></div>
<svg style="position:absolute;left:0;top:0" width="1920" height="830"><defs><clipPath id="wc"><rect x="127" y="118" width="1787" height="700"/></clipPath></defs><g clip-path="url(#wc)"><rect x="127" y="217" width="1787" height="1" fill="#000"/><path d="M128.10 238.5a2.4 2.4 0 1 0 4.8 0a2.4 2.4 0 1 0 -4.8 0M133.10 236.2a2.4 2.4 0 1 0 4.8 0a2.4 2.4 0 1 0 -4.8 0M137.10 233.1a2.4 2.4 0 1 0 4.8 0a2.4 2.4 0 1 0 -4.8 0M142.10 229.4a2.4 2.4 0 1 0 4.8 0a2.4 2.4 0 1 0 -4.8 0M146.10 226.2a2.4 2.4 0 1 0 4.8 0a2.4 2.4 0 1 0 -4.8 0M151.10 224.0a2.4 2.4 0 1 0 4.8 0a2.4 2.4 0 1 0 -4.8 0M156.10 221.0a2.4 2.4 0 1 0 4.8 0a2.4 2.4 0 1 0 -4.8 0M160.10 218.1a2.4 2.4 0 1 0 4.8 0a2.4 2.4 0 1 0 -4.8 0M165.10 215.2a2.4 2.4 0 1 0 4.8 0a2.4 2.4 0 1 0 -4.8 0M170.10 210.6a2.4 2.4 0 1 0 4.8 0a2.4 2.4 0 1 0 -4.8 0M174.10 205.6a2.4 2.4 0 1 0 4.8 0a2.4 2.4 0 1 0 -4.8 0M179.10 201.2a2.4 2.4 0 1 0 4.8 0a2.4 2.4 0 1 0 -4.8 0M183.10 199.4a2.4 2.4 0 1 0 4.8 0a2.4 2.4 0 1 0 -4.8 0M188.10 199.8a2.4 2.4 0 1 0 4.8 0a2.4 2.4 0 1 0 -4.8 0M193.10 200.4a2.4 2.4 0 1 0 4.8 0a2.4 2.4 0 1 0 -4.8 0M197.10 199.6a2.4 2.4 0 1 0 4.8 0a2.4 2.4 0 1 0 -4.8 0M202.10 196.5a2.4 2.4 0 1 0 4.8 0a2.4 2.4 0 1 0 -4.8 0M206.10 191.5a2.4 2.4 0 1 0 4.8 0a2.4 2.4 0 1 0 -4.8 0M211.10 185.6a2.4 2.4 0 1 0 4.8 0a2.4 2.4 0 1 0 -4.8 0M216.10 182.2a2.4 2.4 0 1 0 4.8 0a2.4 2.4 0 1 0 -4.8 0M220.10 184.6a2.4 2.4 0 1 0 4.8 0a2.4 2.4 0 1 0 -4.8 0M225.10 191.5a2.4 2.4 0 1 0 4.8 0a2.4 2.4 0 1 0 -4.8 0M230.10 201.2a2.4 2.4 0 1 0 4.8 0a2.4 2.4 0 1 0 -4.8 0M234.10 211.5a2.4 2.4 0 1 0 4.8 0a2.4 2.4 0 1 0 -4.8 0M239.10 220.2a2.4 2.4 0 1 0 4.8 0a2.4 2.4 0 1 0 -4.8 0M243.10 225.4a2.4 2.4 0 1 0 4.8 0a2.4 2.4 0 1 0 -4.8 0M248.10 225.4a2.4 2.4 0 1 0 4.8 0a2.4 2.4 0 1 0 -4.8 0M253.10 223.1a2.4 2.4 0 1 0 4.8 0a2.4 2.4 0 1 0 -4.8 0M257.10 221.0a2.4 2.4 0 1 0 4.8 0a2.4 2.4 0 1 0 -4.8 0M262.10 219.1a2.4 2.4 0 1 0 4.8 0a2.4 2.4 0 1 0 -4.8 0M267.10 219.1a2.4 2.4 0 1 0 4.8 0a2.4 2.4 0 1 0 -4.8 0M271.10 221.0a2.4 2.4 0 1 0 4.8 0a2.4 2.4 0 1 0 -4.8 0M276.10 222.2a2.4 2.4 0 1 0 4.8 0a2.4 2.4 0 1 0 -4.8 0M280.10 222.2a2.4 2.4 0 1 0 4.8 0a2.4 2.4 0 1 0 -4.8 0M285.10 219.4a2.4 2.4 0 1 0 4.8 0a2.4 2.4 0 1 0 -4.8 0M290.10 214.4a2.4 2.4 0 1 0 4.8 0a2.4 2.4 0 1 0 -4.8 0M294.10 209.8a2.4 2.4 0 1 0 4.8 0a2.4 2.4 0 1 0 -4.8 0M299.10 206.5a2.4 2.4 0 1 0 4.8 0a2.4 2.4 0 1 0 -4.8 0M304.10 205.6a2.4 2.4 0 1 0 4.8 0a2.4 2.4 0 1 0 -4.8 0M308.10 205.6a2.4 2.4 0 1 0 4.8 0a2.4 2.4 0 1 0 -4.8 0M313.10 203.5a2.4 2.4 0 1 0 4.8 0a2.4 2.4 0 1 0 -4.8 0M317.10 200.2a2.4 2.4 0 1 0 4.8 0a2.4 2.4 0 1 0 -4.8 0M322.10 199.4a2.4 2.4 0 1 0 4.8 0a2.4 2.4 0 1 0 -4.8 0M327.10 199.6a2.4 2.4 0 1 0 4.8 0a2.4 2.4 0 1 0 -4.8 0M331.10 202.8a2.4 2.4 0 1 0 4.8 0a2.4 2.4 0 1 0 -4.8 0M336.10 210.6a2.4 2.4 0 1 0 4.8 0a2.4 2.4 0 1 0 -4.8 0M341.10 219.4a2.4 2.4 0 1 0 4.8 0a2.4 2.4 0 1 0 -4.8 0M345.10 226.5a2.4 2.4 0 1 0 4.8 0a2.4 2.4 0 1 0 -4.8 0M350.10 228.5a2.4 2.4 0 1 0 4.8 0a2.4 2.4 0 1 0 -4.8 0M354.10 226.2a2.4 2.4 0 1 0 4.8 0a2.4 2.4 0 1 0 -4.8 0M359.10 224.1a2.4 2.4 0 1 0 4.8 0a2.4 2.4 0 1 0 -4.8 0M364.10 223.1a2.4 2.4 0 1 0 4.8 0a2.4 2.4 0 1 0 -4.8 0M368.10 225.0a2.4 2.4 0 1 0 4.8 0a2.4 2.4 0 1 0 -4.8 0M373.10 229.4a2.4 2.4 0 1 0 4.8 0a2.4 2.4 0 1 0 -4.8 0M378.10 233.1a2.4 2.4 0 1 0 4.8 0a2.4 2.4 0 1 0 -4.8 0M382.10 237.2a2.4 2.4 0 1 0 4.8 0a2.4 2.4 0 1 0 -4.8 0M387.10 241.2a2.4 2.4 0 1 0 4.8 0a2.4 2.4 0 1 0 -4.8 0M391.10 242.1a2.4 2.4 0 1 0 4.8 0a2.4 2.4 0 1 0 -4.8 0M396.10 244.1a2.4 2.4 0 1 0 4.8 0a2.4 2.4 0 1 0 -4.8 0M401.10 247.2a2.4 2.4 0 1 0 4.8 0a2.4 2.4 0 1 0 -4.8 0M405.10 248.4a2.4 2.4 0 1 0 4.8 0a2.4 2.4 0 1 0 -4.8 0M410.10 247.2a2.4 2.4 0 1 0 4.8 0a2.4 2.4 0 1 0 -4.8 0M415.10 243.1a2.4 2.4 0 1 0 4.8 0a2.4 2.4 0 1 0 -4.8 0M419.10 235.2a2.4 2.4 0 1 0 4.8 0a2.4 2.4 0 1 0 -4.8 0M424.10 225.0a2.4 2.4 0 1 0 4.8 0a2.4 2.4 0 1 0 -4.8 0M428.10 213.5a2.4 2.4 0 1 0 4.8 0a2.4 2.4 0 1 0 -4.8 0M433.10 202.5a2.4 2.4 0 1 0 4.8 0a2.4 2.4 0 1 0 -4.8 0M438.10 197.1a2.4 2.4 0 1 0 4.8 0a2.4 2.4 0 1 0 -4.8 0M442.10 197.1a2.4 2.4 0 1 0 4.8 0a2.4 2.4 0 1 0 -4.8 0M447.10 202.5a2.4 2.4 0 1 0 4.8 0a2.4 2.4 0 1 0 -4.8 0M452.10 209.4a2.4 2.4 0 1 0 4.8 0a2.4 2.4 0 1 0 -4.8 0M456.10 216.5a2.4 2.4 0 1 0 4.8 0a2.4 2.4 0 1 0 -4.8 0M461.10 221.2a2.4 2.4 0 1 0 4.8 0a2.4 2.4 0 1 0 -4.8 0M465.10 220.2a2.4 2.4 0 1 0 4.8 0a2.4 2.4 0 1 0 -4.8 0M470.10 216.5a2.4 2.4 0 1 0 4.8 0a2.4 2.4 0 1 0 -4.8 0M475.10 212.5a2.4 2.4 0 1 0 4.8 0a2.4 2.4 0 1 0 -4.8 0M479.10 209.4a2.4 2.4 0 1 0 4.8 0a2.4 2.4 0 1 0 -4.8 0M484.10 208.1a2.4 2.4 0 1 0 4.8 0a2.4 2.4 0 1 0 -4.8 0M488.10 207.2a2.4 2.4 0 1 0 4.8 0a2.4 2.4 0 1 0 -4.8 0M493.10 209.4a2.4 2.4 0 1 0 4.8 0a2.4 2.4 0 1 0 -4.8 0M498.10 211.2a2.4 2.4 0 1 0 4.8 0a2.4 2.4 0 1 0 -4.8 0M502.10 214.4a2.4 2.4 0 1 0 4.8 0a2.4 2.4 0 1 0 -4.8 0M507.10 216.5a2.4 2.4 0 1 0 4.8 0a2.4 2.4 0 1 0 -4.8 0M512.10 218.4a2.4 2.4 0 1 0 4.8 0a2.4 2.4 0 1 0 -4.8 0M516.10 218.4a2.4 2.4 0 1 0 4.8 0a2.4 2.4 0 1 0 -4.8 0M521.10 217.2a2.4 2.4 0 1 0 4.8 0a2.4 2.4 0 1 0 -4.8 0M525.10 215.2a2.4 2.4 0 1 0 4.8 0a2.4 2.4 0 1 0 -4.8 0M530.10 213.5a2.4 2.4 0 1 0 4.8 0a2.4 2.4 0 1 0 -4.8 0M535.10 210.6a2.4 2.4 0 1 0 4.8 0a2.4 2.4 0 1 0 -4.8 0M539.10 208.5a2.4 2.4 0 1 0 4.8 0a2.4 2.4 0 1 0 -4.8 0M544.10 205.6a2.4 2.4 0 1 0 4.8 0a2.4 2.4 0 1 0 -4.8 0M549.10 203.5a2.4 2.4 0 1 0 4.8 0a2.4 2.4 0 1 0 -4.8 0M553.10 203.5a2.4 2.4 0 1 0 4.8 0a2.4 2.4 0 1 0 -4.8 0M558.10 204.4a2.4 2.4 0 1 0 4.8 0a2.4 2.4 0 1 0 -4.8 0M562.10 207.2a2.4 2.4 0 1 0 4.8 0a2.4 2.4 0 1 0 -4.8 0M567.10 210.6a2.4 2.4 0 1 0 4.8 0a2.4 2.4 0 1 0 -4.8 0M572.10 213.5a2.4 2.4 0 1 0 4.8 0a2.4 2.4 0 1 0 -4.8 0M576.10 211.2a2.4 2.4 0 1 0 4.8 0a2.4 2.4 0 1 0 -4.8 0M581.10 205.6a2.4 2.4 0 1 0 4.8 0a2.4 2.4 0 1 0 -4.8 0M586.10 199.8a2.4 2.4 0 1 0 4.8 0a2.4 2.4 0 1 0 -4.8 0M590.10 195.6a2.4 2.4 0 1 0 4.8 0a2.4 2.4 0 1 0 -4.8 0M595.10 197.5a2.4 2.4 0 1 0 4.8 0a2.4 2.4 0 1 0 -4.8 0M599.10 202.5a2.4 2.4 0 1 0 4.8 0a2.4 2.4 0 1 0 -4.8 0M604.10 207.5a2.4 2.4 0 1 0 4.8 0a2.4 2.4 0 1 0 -4.8 0M609.10 212.5a2.4 2.4 0 1 0 4.8 0a2.4 2.4 0 1 0 -4.8 0M613.10 215.4a2.4 2.4 0 1 0 4.8 0a2.4 2.4 0 1 0 -4.8 0M618.10 215.4a2.4 2.4 0 1 0 4.8 0a2.4 2.4 0 1 0 -4.8 0M623.10 215.4a2.4 2.4 0 1 0 4.8 0a2.4 2.4 0 1 0 -4.8 0M627.10 215.4a2.4 2.4 0 1 0 4.8 0a2.4 2.4 0 1 0 -4.8 0M632.10 218.4a2.4 2.4 0 1 0 4.8 0a2.4 2.4 0 1 0 -4.8 0M636.10 220.4a2.4 2.4 0 1 0 4.8 0a2.4 2.4 0 1 0 -4.8 0M641.10 220.4a2.4 2.4 0 1 0 4.8 0a2.4 2.4 0 1 0 -4.8 0M646.10 219.4a2.4 2.4 0 1 0 4.8 0a2.4 2.4 0 1 0 -4.8 0M650.10 217.9a2.4 2.4 0 1 0 4.8 0a2.4 2.4 0 1 0 -4.8 0M655.10 220.0a2.4 2.4 0 1 0 4.8 0a2.4 2.4 0 1 0 -4.8 0M660.10 224.6a2.4 2.4 0 1 0 4.8 0a2.4 2.4 0 1 0 -4.8 0M664.10 231.5a2.4 2.4 0 1 0 4.8 0a2.4 2.4 0 1 0 -4.8 0M669.10 239.4a2.4 2.4 0 1 0 4.8 0a2.4 2.4 0 1 0 -4.8 0M673.10 246.5a2.4 2.4 0 1 0 4.8 0a2.4 2.4 0 1 0 -4.8 0M678.10 251.2a2.4 2.4 0 1 0 4.8 0a2.4 2.4 0 1 0 -4.8 0M683.10 253.5a2.4 2.4 0 1 0 4.8 0a2.4 2.4 0 1 0 -4.8 0M687.10 251.2a2.4 2.4 0 1 0 4.8 0a2.4 2.4 0 1 0 -4.8 0M692.10 246.5a2.4 2.4 0 1 0 4.8 0a2.4 2.4 0 1 0 -4.8 0M697.10 241.2a2.4 2.4 0 1 0 4.8 0a2.4 2.4 0 1 0 -4.8 0M701.10 236.5a2.4 2.4 0 1 0 4.8 0a2.4 2.4 0 1 0 -4.8 0M706.10 235.2a2.4 2.4 0 1 0 4.8 0a2.4 2.4 0 1 0 -4.8 0M710.10 236.5a2.4 2.4 0 1 0 4.8 0a2.4 2.4 0 1 0 -4.8 0M715.10 238.5a2.4 2.4 0 1 0 4.8 0a2.4 2.4 0 1 0 -4.8 0M720.10 239.6a2.4 2.4 0 1 0 4.8 0a2.4 2.4 0 1 0 -4.8 0M724.10 237.2a2.4 2.4 0 1 0 4.8 0a2.4 2.4 0 1 0 -4.8 0M729.10 232.5a2.4 2.4 0 1 0 4.8 0a2.4 2.4 0 1 0 -4.8 0M734.10 225.6a2.4 2.4 0 1 0 4.8 0a2.4 2.4 0 1 0 -4.8 0M738.10 217.5a2.4 2.4 0 1 0 4.8 0a2.4 2.4 0 1 0 -4.8 0M743.10 210.6a2.4 2.4 0 1 0 4.8 0a2.4 2.4 0 1 0 -4.8 0M747.10 204.8a2.4 2.4 0 1 0 4.8 0a2.4 2.4 0 1 0 -4.8 0M752.10 200.6a2.4 2.4 0 1 0 4.8 0a2.4 2.4 0 1 0 -4.8 0M757.10 197.5a2.4 2.4 0 1 0 4.8 0a2.4 2.4 0 1 0 -4.8 0M761.10 196.5a2.4 2.4 0 1 0 4.8 0a2.4 2.4 0 1 0 -4.8 0M766.10 199.4a2.4 2.4 0 1 0 4.8 0a2.4 2.4 0 1 0 -4.8 0M770.10 203.8a2.4 2.4 0 1 0 4.8 0a2.4 2.4 0 1 0 -4.8 0M775.10 210.6a2.4 2.4 0 1 0 4.8 0a2.4 2.4 0 1 0 -4.8 0M780.10 216.5a2.4 2.4 0 1 0 4.8 0a2.4 2.4 0 1 0 -4.8 0M784.10 220.4a2.4 2.4 0 1 0 4.8 0a2.4 2.4 0 1 0 -4.8 0M789.10 219.4a2.4 2.4 0 1 0 4.8 0a2.4 2.4 0 1 0 -4.8 0M794.10 213.5a2.4 2.4 0 1 0 4.8 0a2.4 2.4 0 1 0 -4.8 0M798.10 204.8a2.4 2.4 0 1 0 4.8 0a2.4 2.4 0 1 0 -4.8 0M803.10 194.6a2.4 2.4 0 1 0 4.8 0a2.4 2.4 0 1 0 -4.8 0M807.10 184.6a2.4 2.4 0 1 0 4.8 0a2.4 2.4 0 1 0 -4.8 0M812.10 178.5a2.4 2.4 0 1 0 4.8 0a2.4 2.4 0 1 0 -4.8 0M817.10 176.6a2.4 2.4 0 1 0 4.8 0a2.4 2.4 0 1 0 -4.8 0M821.10 179.8a2.4 2.4 0 1 0 4.8 0a2.4 2.4 0 1 0 -4.8 0M826.10 187.5a2.4 2.4 0 1 0 4.8 0a2.4 2.4 0 1 0 -4.8 0M831.10 195.6a2.4 2.4 0 1 0 4.8 0a2.4 2.4 0 1 0 -4.8 0M835.10 201.5a2.4 2.4 0 1 0 4.8 0a2.4 2.4 0 1 0 -4.8 0M840.10 205.6a2.4 2.4 0 1 0 4.8 0a2.4 2.4 0 1 0 -4.8 0M844.10 207.5a2.4 2.4 0 1 0 4.8 0a2.4 2.4 0 1 0 -4.8 0M849.10 208.5a2.4 2.4 0 1 0 4.8 0a2.4 2.4 0 1 0 -4.8 0M854.10 208.5a2.4 2.4 0 1 0 4.8 0a2.4 2.4 0 1 0 -4.8 0M858.10 210.4a2.4 2.4 0 1 0 4.8 0a2.4 2.4 0 1 0 -4.8 0M863.10 212.5a2.4 2.4 0 1 0 4.8 0a2.4 2.4 0 1 0 -4.8 0M868.10 214.8a2.4 2.4 0 1 0 4.8 0a2.4 2.4 0 1 0 -4.8 0M872.10 215.4a2.4 2.4 0 1 0 4.8 0a2.4 2.4 0 1 0 -4.8 0M877.10 216.2a2.4 2.4 0 1 0 4.8 0a2.4 2.4 0 1 0 -4.8 0M881.10 219.6a2.4 2.4 0 1 0 4.8 0a2.4 2.4 0 1 0 -4.8 0M886.10 225.4a2.4 2.4 0 1 0 4.8 0a2.4 2.4 0 1 0 -4.8 0M891.10 233.4a2.4 2.4 0 1 0 4.8 0a2.4 2.4 0 1 0 -4.8 0M895.10 239.4a2.4 2.4 0 1 0 4.8 0a2.4 2.4 0 1 0 -4.8 0M900.10 242.5a2.4 2.4 0 1 0 4.8 0a2.4 2.4 0 1 0 -4.8 0M905.10 243.5a2.4 2.4 0 1 0 4.8 0a2.4 2.4 0 1 0 -4.8 0M909.10 241.2a2.4 2.4 0 1 0 4.8 0a2.4 2.4 0 1 0 -4.8 0M914.10 237.2a2.4 2.4 0 1 0 4.8 0a2.4 2.4 0 1 0 -4.8 0M918.10 233.4a2.4 2.4 0 1 0 4.8 0a2.4 2.4 0 1 0 -4.8 0M923.10 231.5a2.4 2.4 0 1 0 4.8 0a2.4 2.4 0 1 0 -4.8 0M928.10 231.2a2.4 2.4 0 1 0 4.8 0a2.4 2.4 0 1 0 -4.8 0M932.10 232.5a2.4 2.4 0 1 0 4.8 0a2.4 2.4 0 1 0 -4.8 0M937.10 232.5a2.4 2.4 0 1 0 4.8 0a2.4 2.4 0 1 0 -4.8 0M942.10 232.5a2.4 2.4 0 1 0 4.8 0a2.4 2.4 0 1 0 -4.8 0M946.10 231.5a2.4 2.4 0 1 0 4.8 0a2.4 2.4 0 1 0 -4.8 0M951.10 229.4a2.4 2.4 0 1 0 4.8 0a2.4 2.4 0 1 0 -4.8 0M955.10 225.6a2.4 2.4 0 1 0 4.8 0a2.4 2.4 0 1 0 -4.8 0M960.10 220.4a2.4 2.4 0 1 0 4.8 0a2.4 2.4 0 1 0 -4.8 0M965.10 213.4a2.4 2.4 0 1 0 4.8 0a2.4 2.4 0 1 0 -4.8 0M969.10 207.5a2.4 2.4 0 1 0 4.8 0a2.4 2.4 0 1 0 -4.8 0M974.10 203.1a2.4 2.4 0 1 0 4.8 0a2.4 2.4 0 1 0 -4.8 0M979.10 202.2a2.4 2.4 0 1 0 4.8 0a2.4 2.4 0 1 0 -4.8 0M983.10 204.8a2.4 2.4 0 1 0 4.8 0a2.4 2.4 0 1 0 -4.8 0M988.10 209.4a2.4 2.4 0 1 0 4.8 0a2.4 2.4 0 1 0 -4.8 0M992.10 214.4a2.4 2.4 0 1 0 4.8 0a2.4 2.4 0 1 0 -4.8 0M997.10 218.5a2.4 2.4 0 1 0 4.8 0a2.4 2.4 0 1 0 -4.8 0M1002.10 221.2a2.4 2.4 0 1 0 4.8 0a2.4 2.4 0 1 0 -4.8 0M1006.10 222.5a2.4 2.4 0 1 0 4.8 0a2.4 2.4 0 1 0 -4.8 0M1011.10 220.4a2.4 2.4 0 1 0 4.8 0a2.4 2.4 0 1 0 -4.8 0M1016.10 215.4a2.4 2.4 0 1 0 4.8 0a2.4 2.4 0 1 0 -4.8 0M1020.10 211.5a2.4 2.4 0 1 0 4.8 0a2.4 2.4 0 1 0 -4.8 0M1025.10 208.5a2.4 2.4 0 1 0 4.8 0a2.4 2.4 0 1 0 -4.8 0M1029.10 207.5a2.4 2.4 0 1 0 4.8 0a2.4 2.4 0 1 0 -4.8 0M1034.10 208.5a2.4 2.4 0 1 0 4.8 0a2.4 2.4 0 1 0 -4.8 0M1039.10 212.5a2.4 2.4 0 1 0 4.8 0a2.4 2.4 0 1 0 -4.8 0M1043.10 216.5a2.4 2.4 0 1 0 4.8 0a2.4 2.4 0 1 0 -4.8 0M1048.10 219.4a2.4 2.4 0 1 0 4.8 0a2.4 2.4 0 1 0 -4.8 0M1053.10 220.4a2.4 2.4 0 1 0 4.8 0a2.4 2.4 0 1 0 -4.8 0M1057.10 217.5a2.4 2.4 0 1 0 4.8 0a2.4 2.4 0 1 0 -4.8 0M1062.10 212.5a2.4 2.4 0 1 0 4.8 0a2.4 2.4 0 1 0 -4.8 0M1066.10 203.1a2.4 2.4 0 1 0 4.8 0a2.4 2.4 0 1 0 -4.8 0M1071.10 194.6a2.4 2.4 0 1 0 4.8 0a2.4 2.4 0 1 0 -4.8 0M1076.10 188.5a2.4 2.4 0 1 0 4.8 0a2.4 2.4 0 1 0 -4.8 0M1080.10 186.5a2.4 2.4 0 1 0 4.8 0a2.4 2.4 0 1 0 -4.8 0M1085.10 188.5a2.4 2.4 0 1 0 4.8 0a2.4 2.4 0 1 0 -4.8 0M1089.10 194.6a2.4 2.4 0 1 0 4.8 0a2.4 2.4 0 1 0 -4.8 0M1094.10 203.5a2.4 2.4 0 1 0 4.8 0a2.4 2.4 0 1 0 -4.8 0M1099.10 212.5a2.4 2.4 0 1 0 4.8 0a2.4 2.4 0 1 0 -4.8 0M1103.10 219.4a2.4 2.4 0 1 0 4.8 0a2.4 2.4 0 1 0 -4.8 0M1108.10 224.4a2.4 2.4 0 1 0 4.8 0a2.4 2.4 0 1 0 -4.8 0M1113.10 228.4a2.4 2.4 0 1 0 4.8 0a2.4 2.4 0 1 0 -4.8 0M1117.10 232.5a2.4 2.4 0 1 0 4.8 0a2.4 2.4 0 1 0 -4.8 0M1122.10 234.4a2.4 2.4 0 1 0 4.8 0a2.4 2.4 0 1 0 -4.8 0M1126.10 234.4a2.4 2.4 0 1 0 4.8 0a2.4 2.4 0 1 0 -4.8 0M1131.10 232.5a2.4 2.4 0 1 0 4.8 0a2.4 2.4 0 1 0 -4.8 0M1136.10 229.4a2.4 2.4 0 1 0 4.8 0a2.4 2.4 0 1 0 -4.8 0M1140.10 226.2a2.4 2.4 0 1 0 4.8 0a2.4 2.4 0 1 0 -4.8 0M1145.10 225.2a2.4 2.4 0 1 0 4.8 0a2.4 2.4 0 1 0 -4.8 0M1150.10 228.4a2.4 2.4 0 1 0 4.8 0a2.4 2.4 0 1 0 -4.8 0M1154.10 235.4a2.4 2.4 0 1 0 4.8 0a2.4 2.4 0 1 0 -4.8 0M1159.10 243.4a2.4 2.4 0 1 0 4.8 0a2.4 2.4 0 1 0 -4.8 0M1163.10 249.4a2.4 2.4 0 1 0 4.8 0a2.4 2.4 0 1 0 -4.8 0M1168.10 250.6a2.4 2.4 0 1 0 4.8 0a2.4 2.4 0 1 0 -4.8 0M1173.10 248.4a2.4 2.4 0 1 0 4.8 0a2.4 2.4 0 1 0 -4.8 0M1177.10 242.2a2.4 2.4 0 1 0 4.8 0a2.4 2.4 0 1 0 -4.8 0M1182.10 233.4a2.4 2.4 0 1 0 4.8 0a2.4 2.4 0 1 0 -4.8 0M1187.10 224.4a2.4 2.4 0 1 0 4.8 0a2.4 2.4 0 1 0 -4.8 0M1191.10 216.2a2.4 2.4 0 1 0 4.8 0a2.4 2.4 0 1 0 -4.8 0M1196.10 210.6a2.4 2.4 0 1 0 4.8 0a2.4 2.4 0 1 0 -4.8 0M1200.10 206.2a2.4 2.4 0 1 0 4.8 0a2.4 2.4 0 1 0 -4.8 0M1205.10 206.2a2.4 2.4 0 1 0 4.8 0a2.4 2.4 0 1 0 -4.8 0M1210.10 207.5a2.4 2.4 0 1 0 4.8 0a2.4 2.4 0 1 0 -4.8 0M1214.10 209.4a2.4 2.4 0 1 0 4.8 0a2.4 2.4 0 1 0 -4.8 0M1219.10 210.6a2.4 2.4 0 1 0 4.8 0a2.4 2.4 0 1 0 -4.8 0M1224.10 209.4a2.4 2.4 0 1 0 4.8 0a2.4 2.4 0 1 0 -4.8 0M1228.10 204.4a2.4 2.4 0 1 0 4.8 0a2.4 2.4 0 1 0 -4.8 0M1233.10 197.5a2.4 2.4 0 1 0 4.8 0a2.4 2.4 0 1 0 -4.8 0M1237.10 189.6a2.4 2.4 0 1 0 4.8 0a2.4 2.4 0 1 0 -4.8 0M1242.10 183.5a2.4 2.4 0 1 0 4.8 0a2.4 2.4 0 1 0 -4.8 0M1247.10 180.6a2.4 2.4 0 1 0 4.8 0a2.4 2.4 0 1 0 -4.8 0M1251.10 180.6a2.4 2.4 0 1 0 4.8 0a2.4 2.4 0 1 0 -4.8 0M1256.10 184.4a2.4 2.4 0 1 0 4.8 0a2.4 2.4 0 1 0 -4.8 0M1261.10 190.6a2.4 2.4 0 1 0 4.8 0a2.4 2.4 0 1 0 -4.8 0M1265.10 197.5a2.4 2.4 0 1 0 4.8 0a2.4 2.4 0 1 0 -4.8 0M1270.10 203.5a2.4 2.4 0 1 0 4.8 0a2.4 2.4 0 1 0 -4.8 0M1274.10 206.2a2.4 2.4 0 1 0 4.8 0a2.4 2.4 0 1 0 -4.8 0M1279.10 207.5a2.4 2.4 0 1 0 4.8 0a2.4 2.4 0 1 0 -4.8 0M1284.10 205.6a2.4 2.4 0 1 0 4.8 0a2.4 2.4 0 1 0 -4.8 0M1288.10 204.4a2.4 2.4 0 1 0 4.8 0a2.4 2.4 0 1 0 -4.8 0M1293.10 204.4a2.4 2.4 0 1 0 4.8 0a2.4 2.4 0 1 0 -4.8 0M1298.10 207.5a2.4 2.4 0 1 0 4.8 0a2.4 2.4 0 1 0 -4.8 0M1302.10 213.1a2.4 2.4 0 1 0 4.8 0a2.4 2.4 0 1 0 -4.8 0M1307.10 220.2a2.4 2.4 0 1 0 4.8 0a2.4 2.4 0 1 0 -4.8 0M1311.10 226.2a2.4 2.4 0 1 0 4.8 0a2.4 2.4 0 1 0 -4.8 0M1316.10 231.5a2.4 2.4 0 1 0 4.8 0a2.4 2.4 0 1 0 -4.8 0M1321.10 233.5a2.4 2.4 0 1 0 4.8 0a2.4 2.4 0 1 0 -4.8 0M1325.10 233.4a2.4 2.4 0 1 0 4.8 0a2.4 2.4 0 1 0 -4.8 0M1330.10 231.5a2.4 2.4 0 1 0 4.8 0a2.4 2.4 0 1 0 -4.8 0M1335.10 229.4a2.4 2.4 0 1 0 4.8 0a2.4 2.4 0 1 0 -4.8 0M1339.10 227.1a2.4 2.4 0 1 0 4.8 0a2.4 2.4 0 1 0 -4.8 0M1344.10 226.2a2.4 2.4 0 1 0 4.8 0a2.4 2.4 0 1 0 -4.8 0M1348.10 226.2a2.4 2.4 0 1 0 4.8 0a2.4 2.4 0 1 0 -4.8 0M1353.10 227.1a2.4 2.4 0 1 0 4.8 0a2.4 2.4 0 1 0 -4.8 0M1358.10 229.4a2.4 2.4 0 1 0 4.8 0a2.4 2.4 0 1 0 -4.8 0M1362.10 231.5a2.4 2.4 0 1 0 4.8 0a2.4 2.4 0 1 0 -4.8 0M1367.10 234.4a2.4 2.4 0 1 0 4.8 0a2.4 2.4 0 1 0 -4.8 0M1371.10 237.2a2.4 2.4 0 1 0 4.8 0a2.4 2.4 0 1 0 -4.8 0M1376.10 241.2a2.4 2.4 0 1 0 4.8 0a2.4 2.4 0 1 0 -4.8 0M1381.10 244.4a2.4 2.4 0 1 0 4.8 0a2.4 2.4 0 1 0 -4.8 0M1385.10 246.5a2.4 2.4 0 1 0 4.8 0a2.4 2.4 0 1 0 -4.8 0M1390.10 245.4a2.4 2.4 0 1 0 4.8 0a2.4 2.4 0 1 0 -4.8 0M1395.10 240.4a2.4 2.4 0 1 0 4.8 0a2.4 2.4 0 1 0 -4.8 0M1399.10 232.5a2.4 2.4 0 1 0 4.8 0a2.4 2.4 0 1 0 -4.8 0M1404.10 224.4a2.4 2.4 0 1 0 4.8 0a2.4 2.4 0 1 0 -4.8 0M1408.10 218.4a2.4 2.4 0 1 0 4.8 0a2.4 2.4 0 1 0 -4.8 0M1413.10 215.4a2.4 2.4 0 1 0 4.8 0a2.4 2.4 0 1 0 -4.8 0M1418.10 217.2a2.4 2.4 0 1 0 4.8 0a2.4 2.4 0 1 0 -4.8 0M1422.10 223.1a2.4 2.4 0 1 0 4.8 0a2.4 2.4 0 1 0 -4.8 0M1427.10 229.4a2.4 2.4 0 1 0 4.8 0a2.4 2.4 0 1 0 -4.8 0M1432.10 233.5a2.4 2.4 0 1 0 4.8 0a2.4 2.4 0 1 0 -4.8 0M1436.10 232.5a2.4 2.4 0 1 0 4.8 0a2.4 2.4 0 1 0 -4.8 0M1441.10 227.2a2.4 2.4 0 1 0 4.8 0a2.4 2.4 0 1 0 -4.8 0M1445.10 219.4a2.4 2.4 0 1 0 4.8 0a2.4 2.4 0 1 0 -4.8 0M1450.10 209.4a2.4 2.4 0 1 0 4.8 0a2.4 2.4 0 1 0 -4.8 0M1455.10 200.6a2.4 2.4 0 1 0 4.8 0a2.4 2.4 0 1 0 -4.8 0M1459.10 193.5a2.4 2.4 0 1 0 4.8 0a2.4 2.4 0 1 0 -4.8 0M1464.10 189.4a2.4 2.4 0 1 0 4.8 0a2.4 2.4 0 1 0 -4.8 0M1469.10 189.4a2.4 2.4 0 1 0 4.8 0a2.4 2.4 0 1 0 -4.8 0M1473.10 194.6a2.4 2.4 0 1 0 4.8 0a2.4 2.4 0 1 0 -4.8 0M1478.10 201.5a2.4 2.4 0 1 0 4.8 0a2.4 2.4 0 1 0 -4.8 0M1482.10 208.5a2.4 2.4 0 1 0 4.8 0a2.4 2.4 0 1 0 -4.8 0M1487.10 212.5a2.4 2.4 0 1 0 4.8 0a2.4 2.4 0 1 0 -4.8 0M1492.10 213.8a2.4 2.4 0 1 0 4.8 0a2.4 2.4 0 1 0 -4.8 0M1496.10 210.4a2.4 2.4 0 1 0 4.8 0a2.4 2.4 0 1 0 -4.8 0M1501.10 203.5a2.4 2.4 0 1 0 4.8 0a2.4 2.4 0 1 0 -4.8 0M1506.10 193.5a2.4 2.4 0 1 0 4.8 0a2.4 2.4 0 1 0 -4.8 0M1510.10 184.4a2.4 2.4 0 1 0 4.8 0a2.4 2.4 0 1 0 -4.8 0M1515.10 178.4a2.4 2.4 0 1 0 4.8 0a2.4 2.4 0 1 0 -4.8 0M1519.10 176.2a2.4 2.4 0 1 0 4.8 0a2.4 2.4 0 1 0 -4.8 0M1524.10 178.4a2.4 2.4 0 1 0 4.8 0a2.4 2.4 0 1 0 -4.8 0M1529.10 183.5a2.4 2.4 0 1 0 4.8 0a2.4 2.4 0 1 0 -4.8 0M1533.10 189.6a2.4 2.4 0 1 0 4.8 0a2.4 2.4 0 1 0 -4.8 0M1538.10 196.9a2.4 2.4 0 1 0 4.8 0a2.4 2.4 0 1 0 -4.8 0M1543.10 202.2a2.4 2.4 0 1 0 4.8 0a2.4 2.4 0 1 0 -4.8 0M1547.10 206.2a2.4 2.4 0 1 0 4.8 0a2.4 2.4 0 1 0 -4.8 0M1552.10 209.4a2.4 2.4 0 1 0 4.8 0a2.4 2.4 0 1 0 -4.8 0M1556.10 213.4a2.4 2.4 0 1 0 4.8 0a2.4 2.4 0 1 0 -4.8 0M1561.10 218.4a2.4 2.4 0 1 0 4.8 0a2.4 2.4 0 1 0 -4.8 0M1566.10 223.4a2.4 2.4 0 1 0 4.8 0a2.4 2.4 0 1 0 -4.8 0M1570.10 227.2a2.4 2.4 0 1 0 4.8 0a2.4 2.4 0 1 0 -4.8 0M1575.10 229.4a2.4 2.4 0 1 0 4.8 0a2.4 2.4 0 1 0 -4.8 0M1580.10 228.4a2.4 2.4 0 1 0 4.8 0a2.4 2.4 0 1 0 -4.8 0M1584.10 226.2a2.4 2.4 0 1 0 4.8 0a2.4 2.4 0 1 0 -4.8 0M1589.10 223.1a2.4 2.4 0 1 0 4.8 0a2.4 2.4 0 1 0 -4.8 0M1593.10 222.1a2.4 2.4 0 1 0 4.8 0a2.4 2.4 0 1 0 -4.8 0M1598.10 224.4a2.4 2.4 0 1 0 4.8 0a2.4 2.4 0 1 0 -4.8 0M1603.10 228.4a2.4 2.4 0 1 0 4.8 0a2.4 2.4 0 1 0 -4.8 0M1607.10 233.5a2.4 2.4 0 1 0 4.8 0a2.4 2.4 0 1 0 -4.8 0M1612.10 237.2a2.4 2.4 0 1 0 4.8 0a2.4 2.4 0 1 0 -4.8 0M1617.10 240.4a2.4 2.4 0 1 0 4.8 0a2.4 2.4 0 1 0 -4.8 0M1621.10 240.4a2.4 2.4 0 1 0 4.8 0a2.4 2.4 0 1 0 -4.8 0M1626.10 238.4a2.4 2.4 0 1 0 4.8 0a2.4 2.4 0 1 0 -4.8 0M1630.10 236.2a2.4 2.4 0 1 0 4.8 0a2.4 2.4 0 1 0 -4.8 0M1635.10 237.2a2.4 2.4 0 1 0 4.8 0a2.4 2.4 0 1 0 -4.8 0M1640.10 240.4a2.4 2.4 0 1 0 4.8 0a2.4 2.4 0 1 0 -4.8 0M1644.10 243.4a2.4 2.4 0 1 0 4.8 0a2.4 2.4 0 1 0 -4.8 0M1649.10 245.4a2.4 2.4 0 1 0 4.8 0a2.4 2.4 0 1 0 -4.8 0M1653.10 245.4a2.4 2.4 0 1 0 4.8 0a2.4 2.4 0 1 0 -4.8 0M1658.10 241.2a2.4 2.4 0 1 0 4.8 0a2.4 2.4 0 1 0 -4.8 0M1663.10 232.5a2.4 2.4 0 1 0 4.8 0a2.4 2.4 0 1 0 -4.8 0M1667.10 222.2a2.4 2.4 0 1 0 4.8 0a2.4 2.4 0 1 0 -4.8 0M1672.10 214.4a2.4 2.4 0 1 0 4.8 0a2.4 2.4 0 1 0 -4.8 0M1677.10 211.5a2.4 2.4 0 1 0 4.8 0a2.4 2.4 0 1 0 -4.8 0M1681.10 211.5a2.4 2.4 0 1 0 4.8 0a2.4 2.4 0 1 0 -4.8 0M1686.10 213.4a2.4 2.4 0 1 0 4.8 0a2.4 2.4 0 1 0 -4.8 0M1690.10 218.4a2.4 2.4 0 1 0 4.8 0a2.4 2.4 0 1 0 -4.8 0M1695.10 222.2a2.4 2.4 0 1 0 4.8 0a2.4 2.4 0 1 0 -4.8 0M1700.10 225.4a2.4 2.4 0 1 0 4.8 0a2.4 2.4 0 1 0 -4.8 0M1704.10 225.4a2.4 2.4 0 1 0 4.8 0a2.4 2.4 0 1 0 -4.8 0M1709.10 223.1a2.4 2.4 0 1 0 4.8 0a2.4 2.4 0 1 0 -4.8 0M1714.10 219.4a2.4 2.4 0 1 0 4.8 0a2.4 2.4 0 1 0 -4.8 0M1718.10 213.4a2.4 2.4 0 1 0 4.8 0a2.4 2.4 0 1 0 -4.8 0M1723.10 206.2a2.4 2.4 0 1 0 4.8 0a2.4 2.4 0 1 0 -4.8 0M1727.10 199.4a2.4 2.4 0 1 0 4.8 0a2.4 2.4 0 1 0 -4.8 0M1732.10 194.6a2.4 2.4 0 1 0 4.8 0a2.4 2.4 0 1 0 -4.8 0M1737.10 192.2a2.4 2.4 0 1 0 4.8 0a2.4 2.4 0 1 0 -4.8 0M1741.10 194.6a2.4 2.4 0 1 0 4.8 0a2.4 2.4 0 1 0 -4.8 0M1746.10 198.5a2.4 2.4 0 1 0 4.8 0a2.4 2.4 0 1 0 -4.8 0M1751.10 202.2a2.4 2.4 0 1 0 4.8 0a2.4 2.4 0 1 0 -4.8 0M1755.10 204.8a2.4 2.4 0 1 0 4.8 0a2.4 2.4 0 1 0 -4.8 0M1760.10 206.2a2.4 2.4 0 1 0 4.8 0a2.4 2.4 0 1 0 -4.8 0M1764.10 205.6a2.4 2.4 0 1 0 4.8 0a2.4 2.4 0 1 0 -4.8 0M1769.10 205.6a2.4 2.4 0 1 0 4.8 0a2.4 2.4 0 1 0 -4.8 0M1774.10 205.6a2.4 2.4 0 1 0 4.8 0a2.4 2.4 0 1 0 -4.8 0M1778.10 206.4a2.4 2.4 0 1 0 4.8 0a2.4 2.4 0 1 0 -4.8 0M1783.10 208.6a2.4 2.4 0 1 0 4.8 0a2.4 2.4 0 1 0 -4.8 0M1788.10 210.6a2.4 2.4 0 1 0 4.8 0a2.4 2.4 0 1 0 -4.8 0M1792.10 213.6a2.4 2.4 0 1 0 4.8 0a2.4 2.4 0 1 0 -4.8 0M1797.10 215.2a2.4 2.4 0 1 0 4.8 0a2.4 2.4 0 1 0 -4.8 0M1801.10 216.4a2.4 2.4 0 1 0 4.8 0a2.4 2.4 0 1 0 -4.8 0M1806.10 218.3a2.4 2.4 0 1 0 4.8 0a2.4 2.4 0 1 0 -4.8 0M1811.10 220.2a2.4 2.4 0 1 0 4.8 0a2.4 2.4 0 1 0 -4.8 0M1815.10 223.3a2.4 2.4 0 1 0 4.8 0a2.4 2.4 0 1 0 -4.8 0M1820.10 225.6a2.4 2.4 0 1 0 4.8 0a2.4 2.4 0 1 0 -4.8 0M1825.10 226.7a2.4 2.4 0 1 0 4.8 0a2.4 2.4 0 1 0 -4.8 0M1829.10 226.7a2.4 2.4 0 1 0 4.8 0a2.4 2.4 0 1 0 -4.8 0M1834.10 222.2a2.4 2.4 0 1 0 4.8 0a2.4 2.4 0 1 0 -4.8 0M1838.10 215.4a2.4 2.4 0 1 0 4.8 0a2.4 2.4 0 1 0 -4.8 0M1843.10 205.6a2.4 2.4 0 1 0 4.8 0a2.4 2.4 0 1 0 -4.8 0M1848.10 195.6a2.4 2.4 0 1 0 4.8 0a2.4 2.4 0 1 0 -4.8 0M1852.10 188.6a2.4 2.4 0 1 0 4.8 0a2.4 2.4 0 1 0 -4.8 0M1857.10 186.4a2.4 2.4 0 1 0 4.8 0a2.4 2.4 0 1 0 -4.8 0M1862.10 189.6a2.4 2.4 0 1 0 4.8 0a2.4 2.4 0 1 0 -4.8 0M1866.10 196.5a2.4 2.4 0 1 0 4.8 0a2.4 2.4 0 1 0 -4.8 0M1871.10 207.5a2.4 2.4 0 1 0 4.8 0a2.4 2.4 0 1 0 -4.8 0M1875.10 216.4a2.4 2.4 0 1 0 4.8 0a2.4 2.4 0 1 0 -4.8 0M1880.10 222.2a2.4 2.4 0 1 0 4.8 0a2.4 2.4 0 1 0 -4.8 0M1885.10 224.4a2.4 2.4 0 1 0 4.8 0a2.4 2.4 0 1 0 -4.8 0M1889.10 222.2a2.4 2.4 0 1 0 4.8 0a2.4 2.4 0 1 0 -4.8 0M1894.10 217.5a2.4 2.4 0 1 0 4.8 0a2.4 2.4 0 1 0 -4.8 0M1899.10 213.3a2.4 2.4 0 1 0 4.8 0a2.4 2.4 0 1 0 -4.8 0M1903.10 212.2a2.4 2.4 0 1 0 4.8 0a2.4 2.4 0 1 0 -4.8 0M1908.10 216.2a2.4 2.4 0 1 0 4.8 0a2.4 2.4 0 1 0 -4.8 0" fill="#3232c8"/><path d="M129.10 238.5a1.4 1.4 0 1 0 2.8 0a1.4 1.4 0 1 0 -2.8 0M134.10 236.2a1.4 1.4 0 1 0 2.8 0a1.4 1.4 0 1 0 -2.8 0M138.10 233.1a1.4 1.4 0 1 0 2.8 0a1.4 1.4 0 1 0 -2.8 0M143.10 229.4a1.4 1.4 0 1 0 2.8 0a1.4 1.4 0 1 0 -2.8 0M147.10 226.2a1.4 1.4 0 1 0 2.8 0a1.4 1.4 0 1 0 -2.8 0M152.10 224.0a1.4 1.4 0 1 0 2.8 0a1.4 1.4 0 1 0 -2.8 0M157.10 221.0a1.4 1.4 0 1 0 2.8 0a1.4 1.4 0 1 0 -2.8 0M161.10 218.1a1.4 1.4 0 1 0 2.8 0a1.4 1.4 0 1 0 -2.8 0M166.10 215.2a1.4 1.4 0 1 0 2.8 0a1.4 1.4 0 1 0 -2.8 0M171.10 210.6a1.4 1.4 0 1 0 2.8 0a1.4 1.4 0 1 0 -2.8 0M175.10 205.6a1.4 1.4 0 1 0 2.8 0a1.4 1.4 0 1 0 -2.8 0M180.10 201.2a1.4 1.4 0 1 0 2.8 0a1.4 1.4 0 1 0 -2.8 0M184.10 199.4a1.4 1.4 0 1 0 2.8 0a1.4 1.4 0 1 0 -2.8 0M189.10 199.8a1.4 1.4 0 1 0 2.8 0a1.4 1.4 0 1 0 -2.8 0M194.10 200.4a1.4 1.4 0 1 0 2.8 0a1.4 1.4 0 1 0 -2.8 0M198.10 199.6a1.4 1.4 0 1 0 2.8 0a1.4 1.4 0 1 0 -2.8 0M203.10 196.5a1.4 1.4 0 1 0 2.8 0a1.4 1.4 0 1 0 -2.8 0M207.10 191.5a1.4 1.4 0 1 0 2.8 0a1.4 1.4 0 1 0 -2.8 0M212.10 185.6a1.4 1.4 0 1 0 2.8 0a1.4 1.4 0 1 0 -2.8 0M217.10 182.2a1.4 1.4 0 1 0 2.8 0a1.4 1.4 0 1 0 -2.8 0M221.10 184.6a1.4 1.4 0 1 0 2.8 0a1.4 1.4 0 1 0 -2.8 0M226.10 191.5a1.4 1.4 0 1 0 2.8 0a1.4 1.4 0 1 0 -2.8 0M231.10 201.2a1.4 1.4 0 1 0 2.8 0a1.4 1.4 0 1 0 -2.8 0M235.10 211.5a1.4 1.4 0 1 0 2.8 0a1.4 1.4 0 1 0 -2.8 0M240.10 220.2a1.4 1.4 0 1 0 2.8 0a1.4 1.4 0 1 0 -2.8 0M244.10 225.4a1.4 1.4 0 1 0 2.8 0a1.4 1.4 0 1 0 -2.8 0M249.10 225.4a1.4 1.4 0 1 0 2.8 0a1.4 1.4 0 1 0 -2.8 0M254.10 223.1a1.4 1.4 0 1 0 2.8 0a1.4 1.4 0 1 0 -2.8 0M258.10 221.0a1.4 1.4 0 1 0 2.8 0a1.4 1.4 0 1 0 -2.8 0M263.10 219.1a1.4 1.4 0 1 0 2.8 0a1.4 1.4 0 1 0 -2.8 0M268.10 219.1a1.4 1.4 0 1 0 2.8 0a1.4 1.4 0 1 0 -2.8 0M272.10 221.0a1.4 1.4 0 1 0 2.8 0a1.4 1.4 0 1 0 -2.8 0M277.10 222.2a1.4 1.4 0 1 0 2.8 0a1.4 1.4 0 1 0 -2.8 0M281.10 222.2a1.4 1.4 0 1 0 2.8 0a1.4 1.4 0 1 0 -2.8 0M286.10 219.4a1.4 1.4 0 1 0 2.8 0a1.4 1.4 0 1 0 -2.8 0M291.10 214.4a1.4 1.4 0 1 0 2.8 0a1.4 1.4 0 1 0 -2.8 0M295.10 209.8a1.4 1.4 0 1 0 2.8 0a1.4 1.4 0 1 0 -2.8 0M300.10 206.5a1.4 1.4 0 1 0 2.8 0a1.4 1.4 0 1 0 -2.8 0M305.10 205.6a1.4 1.4 0 1 0 2.8 0a1.4 1.4 0 1 0 -2.8 0M309.10 205.6a1.4 1.4 0 1 0 2.8 0a1.4 1.4 0 1 0 -2.8 0M314.10 203.5a1.4 1.4 0 1 0 2.8 0a1.4 1.4 0 1 0 -2.8 0M318.10 200.2a1.4 1.4 0 1 0 2.8 0a1.4 1.4 0 1 0 -2.8 0M323.10 199.4a1.4 1.4 0 1 0 2.8 0a1.4 1.4 0 1 0 -2.8 0M328.10 199.6a1.4 1.4 0 1 0 2.8 0a1.4 1.4 0 1 0 -2.8 0M332.10 202.8a1.4 1.4 0 1 0 2.8 0a1.4 1.4 0 1 0 -2.8 0M337.10 210.6a1.4 1.4 0 1 0 2.8 0a1.4 1.4 0 1 0 -2.8 0M342.10 219.4a1.4 1.4 0 1 0 2.8 0a1.4 1.4 0 1 0 -2.8 0M346.10 226.5a1.4 1.4 0 1 0 2.8 0a1.4 1.4 0 1 0 -2.8 0M351.10 228.5a1.4 1.4 0 1 0 2.8 0a1.4 1.4 0 1 0 -2.8 0M355.10 226.2a1.4 1.4 0 1 0 2.8 0a1.4 1.4 0 1 0 -2.8 0M360.10 224.1a1.4 1.4 0 1 0 2.8 0a1.4 1.4 0 1 0 -2.8 0M365.10 223.1a1.4 1.4 0 1 0 2.8 0a1.4 1.4 0 1 0 -2.8 0M369.10 225.0a1.4 1.4 0 1 0 2.8 0a1.4 1.4 0 1 0 -2.8 0M374.10 229.4a1.4 1.4 0 1 0 2.8 0a1.4 1.4 0 1 0 -2.8 0M379.10 233.1a1.4 1.4 0 1 0 2.8 0a1.4 1.4 0 1 0 -2.8 0M383.10 237.2a1.4 1.4 0 1 0 2.8 0a1.4 1.4 0 1 0 -2.8 0M388.10 241.2a1.4 1.4 0 1 0 2.8 0a1.4 1.4 0 1 0 -2.8 0M392.10 242.1a1.4 1.4 0 1 0 2.8 0a1.4 1.4 0 1 0 -2.8 0M397.10 244.1a1.4 1.4 0 1 0 2.8 0a1.4 1.4 0 1 0 -2.8 0M402.10 247.2a1.4 1.4 0 1 0 2.8 0a1.4 1.4 0 1 0 -2.8 0M406.10 248.4a1.4 1.4 0 1 0 2.8 0a1.4 1.4 0 1 0 -2.8 0M411.10 247.2a1.4 1.4 0 1 0 2.8 0a1.4 1.4 0 1 0 -2.8 0M416.10 243.1a1.4 1.4 0 1 0 2.8 0a1.4 1.4 0 1 0 -2.8 0M420.10 235.2a1.4 1.4 0 1 0 2.8 0a1.4 1.4 0 1 0 -2.8 0M425.10 225.0a1.4 1.4 0 1 0 2.8 0a1.4 1.4 0 1 0 -2.8 0M429.10 213.5a1.4 1.4 0 1 0 2.8 0a1.4 1.4 0 1 0 -2.8 0M434.10 202.5a1.4 1.4 0 1 0 2.8 0a1.4 1.4 0 1 0 -2.8 0M439.10 197.1a1.4 1.4 0 1 0 2.8 0a1.4 1.4 0 1 0 -2.8 0M443.10 197.1a1.4 1.4 0 1 0 2.8 0a1.4 1.4 0 1 0 -2.8 0M448.10 202.5a1.4 1.4 0 1 0 2.8 0a1.4 1.4 0 1 0 -2.8 0M453.10 209.4a1.4 1.4 0 1 0 2.8 0a1.4 1.4 0 1 0 -2.8 0M457.10 216.5a1.4 1.4 0 1 0 2.8 0a1.4 1.4 0 1 0 -2.8 0M462.10 221.2a1.4 1.4 0 1 0 2.8 0a1.4 1.4 0 1 0 -2.8 0M466.10 220.2a1.4 1.4 0 1 0 2.8 0a1.4 1.4 0 1 0 -2.8 0M471.10 216.5a1.4 1.4 0 1 0 2.8 0a1.4 1.4 0 1 0 -2.8 0M476.10 212.5a1.4 1.4 0 1 0 2.8 0a1.4 1.4 0 1 0 -2.8 0M480.10 209.4a1.4 1.4 0 1 0 2.8 0a1.4 1.4 0 1 0 -2.8 0M485.10 208.1a1.4 1.4 0 1 0 2.8 0a1.4 1.4 0 1 0 -2.8 0M489.10 207.2a1.4 1.4 0 1 0 2.8 0a1.4 1.4 0 1 0 -2.8 0M494.10 209.4a1.4 1.4 0 1 0 2.8 0a1.4 1.4 0 1 0 -2.8 0M499.10 211.2a1.4 1.4 0 1 0 2.8 0a1.4 1.4 0 1 0 -2.8 0M503.10 214.4a1.4 1.4 0 1 0 2.8 0a1.4 1.4 0 1 0 -2.8 0M508.10 216.5a1.4 1.4 0 1 0 2.8 0a1.4 1.4 0 1 0 -2.8 0M513.10 218.4a1.4 1.4 0 1 0 2.8 0a1.4 1.4 0 1 0 -2.8 0M517.10 218.4a1.4 1.4 0 1 0 2.8 0a1.4 1.4 0 1 0 -2.8 0M522.10 217.2a1.4 1.4 0 1 0 2.8 0a1.4 1.4 0 1 0 -2.8 0M526.10 215.2a1.4 1.4 0 1 0 2.8 0a1.4 1.4 0 1 0 -2.8 0M531.10 213.5a1.4 1.4 0 1 0 2.8 0a1.4 1.4 0 1 0 -2.8 0M536.10 210.6a1.4 1.4 0 1 0 2.8 0a1.4 1.4 0 1 0 -2.8 0M540.10 208.5a1.4 1.4 0 1 0 2.8 0a1.4 1.4 0 1 0 -2.8 0M545.10 205.6a1.4 1.4 0 1 0 2.8 0a1.4 1.4 0 1 0 -2.8 0M550.10 203.5a1.4 1.4 0 1 0 2.8 0a1.4 1.4 0 1 0 -2.8 0M554.10 203.5a1.4 1.4 0 1 0 2.8 0a1.4 1.4 0 1 0 -2.8 0M559.10 204.4a1.4 1.4 0 1 0 2.8 0a1.4 1.4 0 1 0 -2.8 0M563.10 207.2a1.4 1.4 0 1 0 2.8 0a1.4 1.4 0 1 0 -2.8 0M568.10 210.6a1.4 1.4 0 1 0 2.8 0a1.4 1.4 0 1 0 -2.8 0M573.10 213.5a1.4 1.4 0 1 0 2.8 0a1.4 1.4 0 1 0 -2.8 0M577.10 211.2a1.4 1.4 0 1 0 2.8 0a1.4 1.4 0 1 0 -2.8 0M582.10 205.6a1.4 1.4 0 1 0 2.8 0a1.4 1.4 0 1 0 -2.8 0M587.10 199.8a1.4 1.4 0 1 0 2.8 0a1.4 1.4 0 1 0 -2.8 0M591.10 195.6a1.4 1.4 0 1 0 2.8 0a1.4 1.4 0 1 0 -2.8 0M596.10 197.5a1.4 1.4 0 1 0 2.8 0a1.4 1.4 0 1 0 -2.8 0M600.10 202.5a1.4 1.4 0 1 0 2.8 0a1.4 1.4 0 1 0 -2.8 0M605.10 207.5a1.4 1.4 0 1 0 2.8 0a1.4 1.4 0 1 0 -2.8 0M610.10 212.5a1.4 1.4 0 1 0 2.8 0a1.4 1.4 0 1 0 -2.8 0M614.10 215.4a1.4 1.4 0 1 0 2.8 0a1.4 1.4 0 1 0 -2.8 0M619.10 215.4a1.4 1.4 0 1 0 2.8 0a1.4 1.4 0 1 0 -2.8 0M624.10 215.4a1.4 1.4 0 1 0 2.8 0a1.4 1.4 0 1 0 -2.8 0M628.10 215.4a1.4 1.4 0 1 0 2.8 0a1.4 1.4 0 1 0 -2.8 0M633.10 218.4a1.4 1.4 0 1 0 2.8 0a1.4 1.4 0 1 0 -2.8 0M637.10 220.4a1.4 1.4 0 1 0 2.8 0a1.4 1.4 0 1 0 -2.8 0M642.10 220.4a1.4 1.4 0 1 0 2.8 0a1.4 1.4 0 1 0 -2.8 0M647.10 219.4a1.4 1.4 0 1 0 2.8 0a1.4 1.4 0 1 0 -2.8 0M651.10 217.9a1.4 1.4 0 1 0 2.8 0a1.4 1.4 0 1 0 -2.8 0M656.10 220.0a1.4 1.4 0 1 0 2.8 0a1.4 1.4 0 1 0 -2.8 0M661.10 224.6a1.4 1.4 0 1 0 2.8 0a1.4 1.4 0 1 0 -2.8 0M665.10 231.5a1.4 1.4 0 1 0 2.8 0a1.4 1.4 0 1 0 -2.8 0M670.10 239.4a1.4 1.4 0 1 0 2.8 0a1.4 1.4 0 1 0 -2.8 0M674.10 246.5a1.4 1.4 0 1 0 2.8 0a1.4 1.4 0 1 0 -2.8 0M679.10 251.2a1.4 1.4 0 1 0 2.8 0a1.4 1.4 0 1 0 -2.8 0M684.10 253.5a1.4 1.4 0 1 0 2.8 0a1.4 1.4 0 1 0 -2.8 0M688.10 251.2a1.4 1.4 0 1 0 2.8 0a1.4 1.4 0 1 0 -2.8 0M693.10 246.5a1.4 1.4 0 1 0 2.8 0a1.4 1.4 0 1 0 -2.8 0M698.10 241.2a1.4 1.4 0 1 0 2.8 0a1.4 1.4 0 1 0 -2.8 0M702.10 236.5a1.4 1.4 0 1 0 2.8 0a1.4 1.4 0 1 0 -2.8 0M707.10 235.2a1.4 1.4 0 1 0 2.8 0a1.4 1.4 0 1 0 -2.8 0M711.10 236.5a1.4 1.4 0 1 0 2.8 0a1.4 1.4 0 1 0 -2.8 0M716.10 238.5a1.4 1.4 0 1 0 2.8 0a1.4 1.4 0 1 0 -2.8 0M721.10 239.6a1.4 1.4 0 1 0 2.8 0a1.4 1.4 0 1 0 -2.8 0M725.10 237.2a1.4 1.4 0 1 0 2.8 0a1.4 1.4 0 1 0 -2.8 0M730.10 232.5a1.4 1.4 0 1 0 2.8 0a1.4 1.4 0 1 0 -2.8 0M735.10 225.6a1.4 1.4 0 1 0 2.8 0a1.4 1.4 0 1 0 -2.8 0M739.10 217.5a1.4 1.4 0 1 0 2.8 0a1.4 1.4 0 1 0 -2.8 0M744.10 210.6a1.4 1.4 0 1 0 2.8 0a1.4 1.4 0 1 0 -2.8 0M748.10 204.8a1.4 1.4 0 1 0 2.8 0a1.4 1.4 0 1 0 -2.8 0M753.10 200.6a1.4 1.4 0 1 0 2.8 0a1.4 1.4 0 1 0 -2.8 0M758.10 197.5a1.4 1.4 0 1 0 2.8 0a1.4 1.4 0 1 0 -2.8 0M762.10 196.5a1.4 1.4 0 1 0 2.8 0a1.4 1.4 0 1 0 -2.8 0M767.10 199.4a1.4 1.4 0 1 0 2.8 0a1.4 1.4 0 1 0 -2.8 0M771.10 203.8a1.4 1.4 0 1 0 2.8 0a1.4 1.4 0 1 0 -2.8 0M776.10 210.6a1.4 1.4 0 1 0 2.8 0a1.4 1.4 0 1 0 -2.8 0M781.10 216.5a1.4 1.4 0 1 0 2.8 0a1.4 1.4 0 1 0 -2.8 0M785.10 220.4a1.4 1.4 0 1 0 2.8 0a1.4 1.4 0 1 0 -2.8 0M790.10 219.4a1.4 1.4 0 1 0 2.8 0a1.4 1.4 0 1 0 -2.8 0M795.10 213.5a1.4 1.4 0 1 0 2.8 0a1.4 1.4 0 1 0 -2.8 0M799.10 204.8a1.4 1.4 0 1 0 2.8 0a1.4 1.4 0 1 0 -2.8 0M804.10 194.6a1.4 1.4 0 1 0 2.8 0a1.4 1.4 0 1 0 -2.8 0M808.10 184.6a1.4 1.4 0 1 0 2.8 0a1.4 1.4 0 1 0 -2.8 0M813.10 178.5a1.4 1.4 0 1 0 2.8 0a1.4 1.4 0 1 0 -2.8 0M818.10 176.6a1.4 1.4 0 1 0 2.8 0a1.4 1.4 0 1 0 -2.8 0M822.10 179.8a1.4 1.4 0 1 0 2.8 0a1.4 1.4 0 1 0 -2.8 0M827.10 187.5a1.4 1.4 0 1 0 2.8 0a1.4 1.4 0 1 0 -2.8 0M832.10 195.6a1.4 1.4 0 1 0 2.8 0a1.4 1.4 0 1 0 -2.8 0M836.10 201.5a1.4 1.4 0 1 0 2.8 0a1.4 1.4 0 1 0 -2.8 0M841.10 205.6a1.4 1.4 0 1 0 2.8 0a1.4 1.4 0 1 0 -2.8 0M845.10 207.5a1.4 1.4 0 1 0 2.8 0a1.4 1.4 0 1 0 -2.8 0M850.10 208.5a1.4 1.4 0 1 0 2.8 0a1.4 1.4 0 1 0 -2.8 0M855.10 208.5a1.4 1.4 0 1 0 2.8 0a1.4 1.4 0 1 0 -2.8 0M859.10 210.4a1.4 1.4 0 1 0 2.8 0a1.4 1.4 0 1 0 -2.8 0M864.10 212.5a1.4 1.4 0 1 0 2.8 0a1.4 1.4 0 1 0 -2.8 0M869.10 214.8a1.4 1.4 0 1 0 2.8 0a1.4 1.4 0 1 0 -2.8 0M873.10 215.4a1.4 1.4 0 1 0 2.8 0a1.4 1.4 0 1 0 -2.8 0M878.10 216.2a1.4 1.4 0 1 0 2.8 0a1.4 1.4 0 1 0 -2.8 0M882.10 219.6a1.4 1.4 0 1 0 2.8 0a1.4 1.4 0 1 0 -2.8 0M887.10 225.4a1.4 1.4 0 1 0 2.8 0a1.4 1.4 0 1 0 -2.8 0M892.10 233.4a1.4 1.4 0 1 0 2.8 0a1.4 1.4 0 1 0 -2.8 0M896.10 239.4a1.4 1.4 0 1 0 2.8 0a1.4 1.4 0 1 0 -2.8 0M901.10 242.5a1.4 1.4 0 1 0 2.8 0a1.4 1.4 0 1 0 -2.8 0M906.10 243.5a1.4 1.4 0 1 0 2.8 0a1.4 1.4 0 1 0 -2.8 0M910.10 241.2a1.4 1.4 0 1 0 2.8 0a1.4 1.4 0 1 0 -2.8 0M915.10 237.2a1.4 1.4 0 1 0 2.8 0a1.4 1.4 0 1 0 -2.8 0M919.10 233.4a1.4 1.4 0 1 0 2.8 0a1.4 1.4 0 1 0 -2.8 0M924.10 231.5a1.4 1.4 0 1 0 2.8 0a1.4 1.4 0 1 0 -2.8 0M929.10 231.2a1.4 1.4 0 1 0 2.8 0a1.4 1.4 0 1 0 -2.8 0M933.10 232.5a1.4 1.4 0 1 0 2.8 0a1.4 1.4 0 1 0 -2.8 0M938.10 232.5a1.4 1.4 0 1 0 2.8 0a1.4 1.4 0 1 0 -2.8 0M943.10 232.5a1.4 1.4 0 1 0 2.8 0a1.4 1.4 0 1 0 -2.8 0M947.10 231.5a1.4 1.4 0 1 0 2.8 0a1.4 1.4 0 1 0 -2.8 0M952.10 229.4a1.4 1.4 0 1 0 2.8 0a1.4 1.4 0 1 0 -2.8 0M956.10 225.6a1.4 1.4 0 1 0 2.8 0a1.4 1.4 0 1 0 -2.8 0M961.10 220.4a1.4 1.4 0 1 0 2.8 0a1.4 1.4 0 1 0 -2.8 0M966.10 213.4a1.4 1.4 0 1 0 2.8 0a1.4 1.4 0 1 0 -2.8 0M970.10 207.5a1.4 1.4 0 1 0 2.8 0a1.4 1.4 0 1 0 -2.8 0M975.10 203.1a1.4 1.4 0 1 0 2.8 0a1.4 1.4 0 1 0 -2.8 0M980.10 202.2a1.4 1.4 0 1 0 2.8 0a1.4 1.4 0 1 0 -2.8 0M984.10 204.8a1.4 1.4 0 1 0 2.8 0a1.4 1.4 0 1 0 -2.8 0M989.10 209.4a1.4 1.4 0 1 0 2.8 0a1.4 1.4 0 1 0 -2.8 0M993.10 214.4a1.4 1.4 0 1 0 2.8 0a1.4 1.4 0 1 0 -2.8 0M998.10 218.5a1.4 1.4 0 1 0 2.8 0a1.4 1.4 0 1 0 -2.8 0M1003.10 221.2a1.4 1.4 0 1 0 2.8 0a1.4 1.4 0 1 0 -2.8 0M1007.10 222.5a1.4 1.4 0 1 0 2.8 0a1.4 1.4 0 1 0 -2.8 0M1012.10 220.4a1.4 1.4 0 1 0 2.8 0a1.4 1.4 0 1 0 -2.8 0M1017.10 215.4a1.4 1.4 0 1 0 2.8 0a1.4 1.4 0 1 0 -2.8 0M1021.10 211.5a1.4 1.4 0 1 0 2.8 0a1.4 1.4 0 1 0 -2.8 0M1026.10 208.5a1.4 1.4 0 1 0 2.8 0a1.4 1.4 0 1 0 -2.8 0M1030.10 207.5a1.4 1.4 0 1 0 2.8 0a1.4 1.4 0 1 0 -2.8 0M1035.10 208.5a1.4 1.4 0 1 0 2.8 0a1.4 1.4 0 1 0 -2.8 0M1040.10 212.5a1.4 1.4 0 1 0 2.8 0a1.4 1.4 0 1 0 -2.8 0M1044.10 216.5a1.4 1.4 0 1 0 2.8 0a1.4 1.4 0 1 0 -2.8 0M1049.10 219.4a1.4 1.4 0 1 0 2.8 0a1.4 1.4 0 1 0 -2.8 0M1054.10 220.4a1.4 1.4 0 1 0 2.8 0a1.4 1.4 0 1 0 -2.8 0M1058.10 217.5a1.4 1.4 0 1 0 2.8 0a1.4 1.4 0 1 0 -2.8 0M1063.10 212.5a1.4 1.4 0 1 0 2.8 0a1.4 1.4 0 1 0 -2.8 0M1067.10 203.1a1.4 1.4 0 1 0 2.8 0a1.4 1.4 0 1 0 -2.8 0M1072.10 194.6a1.4 1.4 0 1 0 2.8 0a1.4 1.4 0 1 0 -2.8 0M1077.10 188.5a1.4 1.4 0 1 0 2.8 0a1.4 1.4 0 1 0 -2.8 0M1081.10 186.5a1.4 1.4 0 1 0 2.8 0a1.4 1.4 0 1 0 -2.8 0M1086.10 188.5a1.4 1.4 0 1 0 2.8 0a1.4 1.4 0 1 0 -2.8 0M1090.10 194.6a1.4 1.4 0 1 0 2.8 0a1.4 1.4 0 1 0 -2.8 0M1095.10 203.5a1.4 1.4 0 1 0 2.8 0a1.4 1.4 0 1 0 -2.8 0M1100.10 212.5a1.4 1.4 0 1 0 2.8 0a1.4 1.4 0 1 0 -2.8 0M1104.10 219.4a1.4 1.4 0 1 0 2.8 0a1.4 1.4 0 1 0 -2.8 0M1109.10 224.4a1.4 1.4 0 1 0 2.8 0a1.4 1.4 0 1 0 -2.8 0M1114.10 228.4a1.4 1.4 0 1 0 2.8 0a1.4 1.4 0 1 0 -2.8 0M1118.10 232.5a1.4 1.4 0 1 0 2.8 0a1.4 1.4 0 1 0 -2.8 0M1123.10 234.4a1.4 1.4 0 1 0 2.8 0a1.4 1.4 0 1 0 -2.8 0M1127.10 234.4a1.4 1.4 0 1 0 2.8 0a1.4 1.4 0 1 0 -2.8 0M1132.10 232.5a1.4 1.4 0 1 0 2.8 0a1.4 1.4 0 1 0 -2.8 0M1137.10 229.4a1.4 1.4 0 1 0 2.8 0a1.4 1.4 0 1 0 -2.8 0M1141.10 226.2a1.4 1.4 0 1 0 2.8 0a1.4 1.4 0 1 0 -2.8 0M1146.10 225.2a1.4 1.4 0 1 0 2.8 0a1.4 1.4 0 1 0 -2.8 0M1151.10 228.4a1.4 1.4 0 1 0 2.8 0a1.4 1.4 0 1 0 -2.8 0M1155.10 235.4a1.4 1.4 0 1 0 2.8 0a1.4 1.4 0 1 0 -2.8 0M1160.10 243.4a1.4 1.4 0 1 0 2.8 0a1.4 1.4 0 1 0 -2.8 0M1164.10 249.4a1.4 1.4 0 1 0 2.8 0a1.4 1.4 0 1 0 -2.8 0M1169.10 250.6a1.4 1.4 0 1 0 2.8 0a1.4 1.4 0 1 0 -2.8 0M1174.10 248.4a1.4 1.4 0 1 0 2.8 0a1.4 1.4 0 1 0 -2.8 0M1178.10 242.2a1.4 1.4 0 1 0 2.8 0a1.4 1.4 0 1 0 -2.8 0M1183.10 233.4a1.4 1.4 0 1 0 2.8 0a1.4 1.4 0 1 0 -2.8 0M1188.10 224.4a1.4 1.4 0 1 0 2.8 0a1.4 1.4 0 1 0 -2.8 0M1192.10 216.2a1.4 1.4 0 1 0 2.8 0a1.4 1.4 0 1 0 -2.8 0M1197.10 210.6a1.4 1.4 0 1 0 2.8 0a1.4 1.4 0 1 0 -2.8 0M1201.10 206.2a1.4 1.4 0 1 0 2.8 0a1.4 1.4 0 1 0 -2.8 0M1206.10 206.2a1.4 1.4 0 1 0 2.8 0a1.4 1.4 0 1 0 -2.8 0M1211.10 207.5a1.4 1.4 0 1 0 2.8 0a1.4 1.4 0 1 0 -2.8 0M1215.10 209.4a1.4 1.4 0 1 0 2.8 0a1.4 1.4 0 1 0 -2.8 0M1220.10 210.6a1.4 1.4 0 1 0 2.8 0a1.4 1.4 0 1 0 -2.8 0M1225.10 209.4a1.4 1.4 0 1 0 2.8 0a1.4 1.4 0 1 0 -2.8 0M1229.10 204.4a1.4 1.4 0 1 0 2.8 0a1.4 1.4 0 1 0 -2.8 0M1234.10 197.5a1.4 1.4 0 1 0 2.8 0a1.4 1.4 0 1 0 -2.8 0M1238.10 189.6a1.4 1.4 0 1 0 2.8 0a1.4 1.4 0 1 0 -2.8 0M1243.10 183.5a1.4 1.4 0 1 0 2.8 0a1.4 1.4 0 1 0 -2.8 0M1248.10 180.6a1.4 1.4 0 1 0 2.8 0a1.4 1.4 0 1 0 -2.8 0M1252.10 180.6a1.4 1.4 0 1 0 2.8 0a1.4 1.4 0 1 0 -2.8 0M1257.10 184.4a1.4 1.4 0 1 0 2.8 0a1.4 1.4 0 1 0 -2.8 0M1262.10 190.6a1.4 1.4 0 1 0 2.8 0a1.4 1.4 0 1 0 -2.8 0M1266.10 197.5a1.4 1.4 0 1 0 2.8 0a1.4 1.4 0 1 0 -2.8 0M1271.10 203.5a1.4 1.4 0 1 0 2.8 0a1.4 1.4 0 1 0 -2.8 0M1275.10 206.2a1.4 1.4 0 1 0 2.8 0a1.4 1.4 0 1 0 -2.8 0M1280.10 207.5a1.4 1.4 0 1 0 2.8 0a1.4 1.4 0 1 0 -2.8 0M1285.10 205.6a1.4 1.4 0 1 0 2.8 0a1.4 1.4 0 1 0 -2.8 0M1289.10 204.4a1.4 1.4 0 1 0 2.8 0a1.4 1.4 0 1 0 -2.8 0M1294.10 204.4a1.4 1.4 0 1 0 2.8 0a1.4 1.4 0 1 0 -2.8 0M1299.10 207.5a1.4 1.4 0 1 0 2.8 0a1.4 1.4 0 1 0 -2.8 0M1303.10 213.1a1.4 1.4 0 1 0 2.8 0a1.4 1.4 0 1 0 -2.8 0M1308.10 220.2a1.4 1.4 0 1 0 2.8 0a1.4 1.4 0 1 0 -2.8 0M1312.10 226.2a1.4 1.4 0 1 0 2.8 0a1.4 1.4 0 1 0 -2.8 0M1317.10 231.5a1.4 1.4 0 1 0 2.8 0a1.4 1.4 0 1 0 -2.8 0M1322.10 233.5a1.4 1.4 0 1 0 2.8 0a1.4 1.4 0 1 0 -2.8 0M1326.10 233.4a1.4 1.4 0 1 0 2.8 0a1.4 1.4 0 1 0 -2.8 0M1331.10 231.5a1.4 1.4 0 1 0 2.8 0a1.4 1.4 0 1 0 -2.8 0M1336.10 229.4a1.4 1.4 0 1 0 2.8 0a1.4 1.4 0 1 0 -2.8 0M1340.10 227.1a1.4 1.4 0 1 0 2.8 0a1.4 1.4 0 1 0 -2.8 0M1345.10 226.2a1.4 1.4 0 1 0 2.8 0a1.4 1.4 0 1 0 -2.8 0M1349.10 226.2a1.4 1.4 0 1 0 2.8 0a1.4 1.4 0 1 0 -2.8 0M1354.10 227.1a1.4 1.4 0 1 0 2.8 0a1.4 1.4 0 1 0 -2.8 0M1359.10 229.4a1.4 1.4 0 1 0 2.8 0a1.4 1.4 0 1 0 -2.8 0M1363.10 231.5a1.4 1.4 0 1 0 2.8 0a1.4 1.4 0 1 0 -2.8 0M1368.10 234.4a1.4 1.4 0 1 0 2.8 0a1.4 1.4 0 1 0 -2.8 0M1372.10 237.2a1.4 1.4 0 1 0 2.8 0a1.4 1.4 0 1 0 -2.8 0M1377.10 241.2a1.4 1.4 0 1 0 2.8 0a1.4 1.4 0 1 0 -2.8 0M1382.10 244.4a1.4 1.4 0 1 0 2.8 0a1.4 1.4 0 1 0 -2.8 0M1386.10 246.5a1.4 1.4 0 1 0 2.8 0a1.4 1.4 0 1 0 -2.8 0M1391.10 245.4a1.4 1.4 0 1 0 2.8 0a1.4 1.4 0 1 0 -2.8 0M1396.10 240.4a1.4 1.4 0 1 0 2.8 0a1.4 1.4 0 1 0 -2.8 0M1400.10 232.5a1.4 1.4 0 1 0 2.8 0a1.4 1.4 0 1 0 -2.8 0M1405.10 224.4a1.4 1.4 0 1 0 2.8 0a1.4 1.4 0 1 0 -2.8 0M1409.10 218.4a1.4 1.4 0 1 0 2.8 0a1.4 1.4 0 1 0 -2.8 0M1414.10 215.4a1.4 1.4 0 1 0 2.8 0a1.4 1.4 0 1 0 -2.8 0M1419.10 217.2a1.4 1.4 0 1 0 2.8 0a1.4 1.4 0 1 0 -2.8 0M1423.10 223.1a1.4 1.4 0 1 0 2.8 0a1.4 1.4 0 1 0 -2.8 0M1428.10 229.4a1.4 1.4 0 1 0 2.8 0a1.4 1.4 0 1 0 -2.8 0M1433.10 233.5a1.4 1.4 0 1 0 2.8 0a1.4 1.4 0 1 0 -2.8 0M1437.10 232.5a1.4 1.4 0 1 0 2.8 0a1.4 1.4 0 1 0 -2.8 0M1442.10 227.2a1.4 1.4 0 1 0 2.8 0a1.4 1.4 0 1 0 -2.8 0M1446.10 219.4a1.4 1.4 0 1 0 2.8 0a1.4 1.4 0 1 0 -2.8 0M1451.10 209.4a1.4 1.4 0 1 0 2.8 0a1.4 1.4 0 1 0 -2.8 0M1456.10 200.6a1.4 1.4 0 1 0 2.8 0a1.4 1.4 0 1 0 -2.8 0M1460.10 193.5a1.4 1.4 0 1 0 2.8 0a1.4 1.4 0 1 0 -2.8 0M1465.10 189.4a1.4 1.4 0 1 0 2.8 0a1.4 1.4 0 1 0 -2.8 0M1470.10 189.4a1.4 1.4 0 1 0 2.8 0a1.4 1.4 0 1 0 -2.8 0M1474.10 194.6a1.4 1.4 0 1 0 2.8 0a1.4 1.4 0 1 0 -2.8 0M1479.10 201.5a1.4 1.4 0 1 0 2.8 0a1.4 1.4 0 1 0 -2.8 0M1483.10 208.5a1.4 1.4 0 1 0 2.8 0a1.4 1.4 0 1 0 -2.8 0M1488.10 212.5a1.4 1.4 0 1 0 2.8 0a1.4 1.4 0 1 0 -2.8 0M1493.10 213.8a1.4 1.4 0 1 0 2.8 0a1.4 1.4 0 1 0 -2.8 0M1497.10 210.4a1.4 1.4 0 1 0 2.8 0a1.4 1.4 0 1 0 -2.8 0M1502.10 203.5a1.4 1.4 0 1 0 2.8 0a1.4 1.4 0 1 0 -2.8 0M1507.10 193.5a1.4 1.4 0 1 0 2.8 0a1.4 1.4 0 1 0 -2.8 0M1511.10 184.4a1.4 1.4 0 1 0 2.8 0a1.4 1.4 0 1 0 -2.8 0M1516.10 178.4a1.4 1.4 0 1 0 2.8 0a1.4 1.4 0 1 0 -2.8 0M1520.10 176.2a1.4 1.4 0 1 0 2.8 0a1.4 1.4 0 1 0 -2.8 0M1525.10 178.4a1.4 1.4 0 1 0 2.8 0a1.4 1.4 0 1 0 -2.8 0M1530.10 183.5a1.4 1.4 0 1 0 2.8 0a1.4 1.4 0 1 0 -2.8 0M1534.10 189.6a1.4 1.4 0 1 0 2.8 0a1.4 1.4 0 1 0 -2.8 0M1539.10 196.9a1.4 1.4 0 1 0 2.8 0a1.4 1.4 0 1 0 -2.8 0M1544.10 202.2a1.4 1.4 0 1 0 2.8 0a1.4 1.4 0 1 0 -2.8 0M1548.10 206.2a1.4 1.4 0 1 0 2.8 0a1.4 1.4 0 1 0 -2.8 0M1553.10 209.4a1.4 1.4 0 1 0 2.8 0a1.4 1.4 0 1 0 -2.8 0M1557.10 213.4a1.4 1.4 0 1 0 2.8 0a1.4 1.4 0 1 0 -2.8 0M1562.10 218.4a1.4 1.4 0 1 0 2.8 0a1.4 1.4 0 1 0 -2.8 0M1567.10 223.4a1.4 1.4 0 1 0 2.8 0a1.4 1.4 0 1 0 -2.8 0M1571.10 227.2a1.4 1.4 0 1 0 2.8 0a1.4 1.4 0 1 0 -2.8 0M1576.10 229.4a1.4 1.4 0 1 0 2.8 0a1.4 1.4 0 1 0 -2.8 0M1581.10 228.4a1.4 1.4 0 1 0 2.8 0a1.4 1.4 0 1 0 -2.8 0M1585.10 226.2a1.4 1.4 0 1 0 2.8 0a1.4 1.4 0 1 0 -2.8 0M1590.10 223.1a1.4 1.4 0 1 0 2.8 0a1.4 1.4 0 1 0 -2.8 0M1594.10 222.1a1.4 1.4 0 1 0 2.8 0a1.4 1.4 0 1 0 -2.8 0M1599.10 224.4a1.4 1.4 0 1 0 2.8 0a1.4 1.4 0 1 0 -2.8 0M1604.10 228.4a1.4 1.4 0 1 0 2.8 0a1.4 1.4 0 1 0 -2.8 0M1608.10 233.5a1.4 1.4 0 1 0 2.8 0a1.4 1.4 0 1 0 -2.8 0M1613.10 237.2a1.4 1.4 0 1 0 2.8 0a1.4 1.4 0 1 0 -2.8 0M1618.10 240.4a1.4 1.4 0 1 0 2.8 0a1.4 1.4 0 1 0 -2.8 0M1622.10 240.4a1.4 1.4 0 1 0 2.8 0a1.4 1.4 0 1 0 -2.8 0M1627.10 238.4a1.4 1.4 0 1 0 2.8 0a1.4 1.4 0 1 0 -2.8 0M1631.10 236.2a1.4 1.4 0 1 0 2.8 0a1.4 1.4 0 1 0 -2.8 0M1636.10 237.2a1.4 1.4 0 1 0 2.8 0a1.4 1.4 0 1 0 -2.8 0M1641.10 240.4a1.4 1.4 0 1 0 2.8 0a1.4 1.4 0 1 0 -2.8 0M1645.10 243.4a1.4 1.4 0 1 0 2.8 0a1.4 1.4 0 1 0 -2.8 0M1650.10 245.4a1.4 1.4 0 1 0 2.8 0a1.4 1.4 0 1 0 -2.8 0M1654.10 245.4a1.4 1.4 0 1 0 2.8 0a1.4 1.4 0 1 0 -2.8 0M1659.10 241.2a1.4 1.4 0 1 0 2.8 0a1.4 1.4 0 1 0 -2.8 0M1664.10 232.5a1.4 1.4 0 1 0 2.8 0a1.4 1.4 0 1 0 -2.8 0M1668.10 222.2a1.4 1.4 0 1 0 2.8 0a1.4 1.4 0 1 0 -2.8 0M1673.10 214.4a1.4 1.4 0 1 0 2.8 0a1.4 1.4 0 1 0 -2.8 0M1678.10 211.5a1.4 1.4 0 1 0 2.8 0a1.4 1.4 0 1 0 -2.8 0M1682.10 211.5a1.4 1.4 0 1 0 2.8 0a1.4 1.4 0 1 0 -2.8 0M1687.10 213.4a1.4 1.4 0 1 0 2.8 0a1.4 1.4 0 1 0 -2.8 0M1691.10 218.4a1.4 1.4 0 1 0 2.8 0a1.4 1.4 0 1 0 -2.8 0M1696.10 222.2a1.4 1.4 0 1 0 2.8 0a1.4 1.4 0 1 0 -2.8 0M1701.10 225.4a1.4 1.4 0 1 0 2.8 0a1.4 1.4 0 1 0 -2.8 0M1705.10 225.4a1.4 1.4 0 1 0 2.8 0a1.4 1.4 0 1 0 -2.8 0M1710.10 223.1a1.4 1.4 0 1 0 2.8 0a1.4 1.4 0 1 0 -2.8 0M1715.10 219.4a1.4 1.4 0 1 0 2.8 0a1.4 1.4 0 1 0 -2.8 0M1719.10 213.4a1.4 1.4 0 1 0 2.8 0a1.4 1.4 0 1 0 -2.8 0M1724.10 206.2a1.4 1.4 0 1 0 2.8 0a1.4 1.4 0 1 0 -2.8 0M1728.10 199.4a1.4 1.4 0 1 0 2.8 0a1.4 1.4 0 1 0 -2.8 0M1733.10 194.6a1.4 1.4 0 1 0 2.8 0a1.4 1.4 0 1 0 -2.8 0M1738.10 192.2a1.4 1.4 0 1 0 2.8 0a1.4 1.4 0 1 0 -2.8 0M1742.10 194.6a1.4 1.4 0 1 0 2.8 0a1.4 1.4 0 1 0 -2.8 0M1747.10 198.5a1.4 1.4 0 1 0 2.8 0a1.4 1.4 0 1 0 -2.8 0M1752.10 202.2a1.4 1.4 0 1 0 2.8 0a1.4 1.4 0 1 0 -2.8 0M1756.10 204.8a1.4 1.4 0 1 0 2.8 0a1.4 1.4 0 1 0 -2.8 0M1761.10 206.2a1.4 1.4 0 1 0 2.8 0a1.4 1.4 0 1 0 -2.8 0M1765.10 205.6a1.4 1.4 0 1 0 2.8 0a1.4 1.4 0 1 0 -2.8 0M1770.10 205.6a1.4 1.4 0 1 0 2.8 0a1.4 1.4 0 1 0 -2.8 0M1775.10 205.6a1.4 1.4 0 1 0 2.8 0a1.4 1.4 0 1 0 -2.8 0M1779.10 206.4a1.4 1.4 0 1 0 2.8 0a1.4 1.4 0 1 0 -2.8 0M1784.10 208.6a1.4 1.4 0 1 0 2.8 0a1.4 1.4 0 1 0 -2.8 0M1789.10 210.6a1.4 1.4 0 1 0 2.8 0a1.4 1.4 0 1 0 -2.8 0M1793.10 213.6a1.4 1.4 0 1 0 2.8 0a1.4 1.4 0 1 0 -2.8 0M1798.10 215.2a1.4 1.4 0 1 0 2.8 0a1.4 1.4 0 1 0 -2.8 0M1802.10 216.4a1.4 1.4 0 1 0 2.8 0a1.4 1.4 0 1 0 -2.8 0M1807.10 218.3a1.4 1.4 0 1 0 2.8 0a1.4 1.4 0 1 0 -2.8 0M1812.10 220.2a1.4 1.4 0 1 0 2.8 0a1.4 1.4 0 1 0 -2.8 0M1816.10 223.3a1.4 1.4 0 1 0 2.8 0a1.4 1.4 0 1 0 -2.8 0M1821.10 225.6a1.4 1.4 0 1 0 2.8 0a1.4 1.4 0 1 0 -2.8 0M1826.10 226.7a1.4 1.4 0 1 0 2.8 0a1.4 1.4 0 1 0 -2.8 0M1830.10 226.7a1.4 1.4 0 1 0 2.8 0a1.4 1.4 0 1 0 -2.8 0M1835.10 222.2a1.4 1.4 0 1 0 2.8 0a1.4 1.4 0 1 0 -2.8 0M1839.10 215.4a1.4 1.4 0 1 0 2.8 0a1.4 1.4 0 1 0 -2.8 0M1844.10 205.6a1.4 1.4 0 1 0 2.8 0a1.4 1.4 0 1 0 -2.8 0M1849.10 195.6a1.4 1.4 0 1 0 2.8 0a1.4 1.4 0 1 0 -2.8 0M1853.10 188.6a1.4 1.4 0 1 0 2.8 0a1.4 1.4 0 1 0 -2.8 0M1858.10 186.4a1.4 1.4 0 1 0 2.8 0a1.4 1.4 0 1 0 -2.8 0M1863.10 189.6a1.4 1.4 0 1 0 2.8 0a1.4 1.4 0 1 0 -2.8 0M1867.10 196.5a1.4 1.4 0 1 0 2.8 0a1.4 1.4 0 1 0 -2.8 0M1872.10 207.5a1.4 1.4 0 1 0 2.8 0a1.4 1.4 0 1 0 -2.8 0M1876.10 216.4a1.4 1.4 0 1 0 2.8 0a1.4 1.4 0 1 0 -2.8 0M1881.10 222.2a1.4 1.4 0 1 0 2.8 0a1.4 1.4 0 1 0 -2.8 0M1886.10 224.4a1.4 1.4 0 1 0 2.8 0a1.4 1.4 0 1 0 -2.8 0M1890.10 222.2a1.4 1.4 0 1 0 2.8 0a1.4 1.4 0 1 0 -2.8 0M1895.10 217.5a1.4 1.4 0 1 0 2.8 0a1.4 1.4 0 1 0 -2.8 0M1900.10 213.3a1.4 1.4 0 1 0 2.8 0a1.4 1.4 0 1 0 -2.8 0M1904.10 212.2a1.4 1.4 0 1 0 2.8 0a1.4 1.4 0 1 0 -2.8 0M1909.10 216.2a1.4 1.4 0 1 0 2.8 0a1.4 1.4 0 1 0 -2.8 0" fill="none" stroke="#000" stroke-width="1"/><path d="M130.5 217.5V238.5M135.5 217.5V236.2M139.5 217.5V233.1M144.5 217.5V229.4M148.5 217.5V226.2M153.5 217.5V224.0M158.5 217.5V221.0M162.5 217.5V218.1M167.5 215.2V217.5M172.5 210.6V217.5M176.5 205.6V217.5M181.5 201.2V217.5M185.5 199.4V217.5M190.5 199.8V217.5M195.5 200.4V217.5M199.5 199.6V217.5M204.5 196.5V217.5M208.5 191.5V217.5M213.5 185.6V217.5M218.5 182.2V217.5M222.5 184.6V217.5M227.5 191.5V217.5M232.5 201.2V217.5M236.5 211.5V217.5M241.5 217.5V220.2M245.5 217.5V225.4M250.5 217.5V225.4M255.5 217.5V223.1M259.5 217.5V221.0M264.5 217.5V219.1M269.5 217.5V219.1M273.5 217.5V221.0M278.5 217.5V222.2M282.5 217.5V222.2M287.5 217.5V219.4M292.5 214.4V217.5M296.5 209.8V217.5M301.5 206.5V217.5M306.5 205.6V217.5M310.5 205.6V217.5M315.5 203.5V217.5M319.5 200.2V217.5M324.5 199.4V217.5M329.5 199.6V217.5M333.5 202.8V217.5M338.5 210.6V217.5M343.5 217.5V219.4M347.5 217.5V226.5M352.5 217.5V228.5M356.5 217.5V226.2M361.5 217.5V224.1M366.5 217.5V223.1M370.5 217.5V225.0M375.5 217.5V229.4M380.5 217.5V233.1M384.5 217.5V237.2M389.5 217.5V241.2M393.5 217.5V242.1M398.5 217.5V244.1M403.5 217.5V247.2M407.5 217.5V248.4M412.5 217.5V247.2M417.5 217.5V243.1M421.5 217.5V235.2M426.5 217.5V225.0M430.5 213.5V217.5M435.5 202.5V217.5M440.5 197.1V217.5M444.5 197.1V217.5M449.5 202.5V217.5M454.5 209.4V217.5M458.5 216.5V217.5M463.5 217.5V221.2M467.5 217.5V220.2M472.5 216.5V217.5M477.5 212.5V217.5M481.5 209.4V217.5M486.5 208.1V217.5M490.5 207.2V217.5M495.5 209.4V217.5M500.5 211.2V217.5M504.5 214.4V217.5M509.5 216.5V217.5M514.5 217.5V218.4M518.5 217.5V218.4M523.5 217.2V217.5M527.5 215.2V217.5M532.5 213.5V217.5M537.5 210.6V217.5M541.5 208.5V217.5M546.5 205.6V217.5M551.5 203.5V217.5M555.5 203.5V217.5M560.5 204.4V217.5M564.5 207.2V217.5M569.5 210.6V217.5M574.5 213.5V217.5M578.5 211.2V217.5M583.5 205.6V217.5M588.5 199.8V217.5M592.5 195.6V217.5M597.5 197.5V217.5M601.5 202.5V217.5M606.5 207.5V217.5M611.5 212.5V217.5M615.5 215.4V217.5M620.5 215.4V217.5M625.5 215.4V217.5M629.5 215.4V217.5M634.5 217.5V218.4M638.5 217.5V220.4M643.5 217.5V220.4M648.5 217.5V219.4M652.5 217.5V217.9M657.5 217.5V220.0M662.5 217.5V224.6M666.5 217.5V231.5M671.5 217.5V239.4M675.5 217.5V246.5M680.5 217.5V251.2M685.5 217.5V253.5M689.5 217.5V251.2M694.5 217.5V246.5M699.5 217.5V241.2M703.5 217.5V236.5M708.5 217.5V235.2M712.5 217.5V236.5M717.5 217.5V238.5M722.5 217.5V239.6M726.5 217.5V237.2M731.5 217.5V232.5M736.5 217.5V225.6M740.5 217.5V217.5M745.5 210.6V217.5M749.5 204.8V217.5M754.5 200.6V217.5M759.5 197.5V217.5M763.5 196.5V217.5M768.5 199.4V217.5M772.5 203.8V217.5M777.5 210.6V217.5M782.5 216.5V217.5M786.5 217.5V220.4M791.5 217.5V219.4M796.5 213.5V217.5M800.5 204.8V217.5M805.5 194.6V217.5M809.5 184.6V217.5M814.5 178.5V217.5M819.5 176.6V217.5M823.5 179.8V217.5M828.5 187.5V217.5M833.5 195.6V217.5M837.5 201.5V217.5M842.5 205.6V217.5M846.5 207.5V217.5M851.5 208.5V217.5M856.5 208.5V217.5M860.5 210.4V217.5M865.5 212.5V217.5M870.5 214.8V217.5M874.5 215.4V217.5M879.5 216.2V217.5M883.5 217.5V219.6M888.5 217.5V225.4M893.5 217.5V233.4M897.5 217.5V239.4M902.5 217.5V242.5M907.5 217.5V243.5M911.5 217.5V241.2M916.5 217.5V237.2M920.5 217.5V233.4M925.5 217.5V231.5M930.5 217.5V231.2M934.5 217.5V232.5M939.5 217.5V232.5M944.5 217.5V232.5M948.5 217.5V231.5M953.5 217.5V229.4M957.5 217.5V225.6M962.5 217.5V220.4M967.5 213.4V217.5M971.5 207.5V217.5M976.5 203.1V217.5M981.5 202.2V217.5M985.5 204.8V217.5M990.5 209.4V217.5M994.5 214.4V217.5M999.5 217.5V218.5M1004.5 217.5V221.2M1008.5 217.5V222.5M1013.5 217.5V220.4M1018.5 215.4V217.5M1022.5 211.5V217.5M1027.5 208.5V217.5M1031.5 207.5V217.5M1036.5 208.5V217.5M1041.5 212.5V217.5M1045.5 216.5V217.5M1050.5 217.5V219.4M1055.5 217.5V220.4M1059.5 217.5V217.5M1064.5 212.5V217.5M1068.5 203.1V217.5M1073.5 194.6V217.5M1078.5 188.5V217.5M1082.5 186.5V217.5M1087.5 188.5V217.5M1091.5 194.6V217.5M1096.5 203.5V217.5M1101.5 212.5V217.5M1105.5 217.5V219.4M1110.5 217.5V224.4M1115.5 217.5V228.4M1119.5 217.5V232.5M1124.5 217.5V234.4M1128.5 217.5V234.4M1133.5 217.5V232.5M1138.5 217.5V229.4M1142.5 217.5V226.2M1147.5 217.5V225.2M1152.5 217.5V228.4M1156.5 217.5V235.4M1161.5 217.5V243.4M1165.5 217.5V249.4M1170.5 217.5V250.6M1175.5 217.5V248.4M1179.5 217.5V242.2M1184.5 217.5V233.4M1189.5 217.5V224.4M1193.5 216.2V217.5M1198.5 210.6V217.5M1202.5 206.2V217.5M1207.5 206.2V217.5M1212.5 207.5V217.5M1216.5 209.4V217.5M1221.5 210.6V217.5M1226.5 209.4V217.5M1230.5 204.4V217.5M1235.5 197.5V217.5M1239.5 189.6V217.5M1244.5 183.5V217.5M1249.5 180.6V217.5M1253.5 180.6V217.5M1258.5 184.4V217.5M1263.5 190.6V217.5M1267.5 197.5V217.5M1272.5 203.5V217.5M1276.5 206.2V217.5M1281.5 207.5V217.5M1286.5 205.6V217.5M1290.5 204.4V217.5M1295.5 204.4V217.5M1300.5 207.5V217.5M1304.5 213.1V217.5M1309.5 217.5V220.2M1313.5 217.5V226.2M1318.5 217.5V231.5M1323.5 217.5V233.5M1327.5 217.5V233.4M1332.5 217.5V231.5M1337.5 217.5V229.4M1341.5 217.5V227.1M1346.5 217.5V226.2M1350.5 217.5V226.2M1355.5 217.5V227.1M1360.5 217.5V229.4M1364.5 217.5V231.5M1369.5 217.5V234.4M1373.5 217.5V237.2M1378.5 217.5V241.2M1383.5 217.5V244.4M1387.5 217.5V246.5M1392.5 217.5V245.4M1397.5 217.5V240.4M1401.5 217.5V232.5M1406.5 217.5V224.4M1410.5 217.5V218.4M1415.5 215.4V217.5M1420.5 217.2V217.5M1424.5 217.5V223.1M1429.5 217.5V229.4M1434.5 217.5V233.5M1438.5 217.5V232.5M1443.5 217.5V227.2M1447.5 217.5V219.4M1452.5 209.4V217.5M1457.5 200.6V217.5M1461.5 193.5V217.5M1466.5 189.4V217.5M1471.5 189.4V217.5M1475.5 194.6V217.5M1480.5 201.5V217.5M1484.5 208.5V217.5M1489.5 212.5V217.5M1494.5 213.8V217.5M1498.5 210.4V217.5M1503.5 203.5V217.5M1508.5 193.5V217.5M1512.5 184.4V217.5M1517.5 178.4V217.5M1521.5 176.2V217.5M1526.5 178.4V217.5M1531.5 183.5V217.5M1535.5 189.6V217.5M1540.5 196.9V217.5M1545.5 202.2V217.5M1549.5 206.2V217.5M1554.5 209.4V217.5M1558.5 213.4V217.5M1563.5 217.5V218.4M1568.5 217.5V223.4M1572.5 217.5V227.2M1577.5 217.5V229.4M1582.5 217.5V228.4M1586.5 217.5V226.2M1591.5 217.5V223.1M1595.5 217.5V222.1M1600.5 217.5V224.4M1605.5 217.5V228.4M1609.5 217.5V233.5M1614.5 217.5V237.2M1619.5 217.5V240.4M1623.5 217.5V240.4M1628.5 217.5V238.4M1632.5 217.5V236.2M1637.5 217.5V237.2M1642.5 217.5V240.4M1646.5 217.5V243.4M1651.5 217.5V245.4M1655.5 217.5V245.4M1660.5 217.5V241.2M1665.5 217.5V232.5M1669.5 217.5V222.2M1674.5 214.4V217.5M1679.5 211.5V217.5M1683.5 211.5V217.5M1688.5 213.4V217.5M1692.5 217.5V218.4M1697.5 217.5V222.2M1702.5 217.5V225.4M1706.5 217.5V225.4M1711.5 217.5V223.1M1716.5 217.5V219.4M1720.5 213.4V217.5M1725.5 206.2V217.5M1729.5 199.4V217.5M1734.5 194.6V217.5M1739.5 192.2V217.5M1743.5 194.6V217.5M1748.5 198.5V217.5M1753.5 202.2V217.5M1757.5 204.8V217.5M1762.5 206.2V217.5M1766.5 205.6V217.5M1771.5 205.6V217.5M1776.5 205.6V217.5M1780.5 206.4V217.5M1785.5 208.6V217.5M1790.5 210.6V217.5M1794.5 213.6V217.5M1799.5 215.2V217.5M1803.5 216.4V217.5M1808.5 217.5V218.3M1813.5 217.5V220.2M1817.5 217.5V223.3M1822.5 217.5V225.6M1827.5 217.5V226.7M1831.5 217.5V226.7M1836.5 217.5V222.2M1840.5 215.4V217.5M1845.5 205.6V217.5M1850.5 195.6V217.5M1854.5 188.6V217.5M1859.5 186.4V217.5M1864.5 189.6V217.5M1868.5 196.5V217.5M1873.5 207.5V217.5M1877.5 216.4V217.5M1882.5 217.5V222.2M1887.5 217.5V224.4M1891.5 217.5V222.2M1896.5 217.5V217.5M1901.5 213.3V217.5M1905.5 212.2V217.5M1910.5 216.2V217.5" stroke="#3232c8" stroke-width="1" fill="none"/><rect x="127" y="381" width="1787" height="1" fill="#000"/><path d="M128.10 402.5a2.4 2.4 0 1 0 4.8 0a2.4 2.4 0 1 0 -4.8 0M133.10 400.2a2.4 2.4 0 1 0 4.8 0a2.4 2.4 0 1 0 -4.8 0M137.10 397.1a2.4 2.4 0 1 0 4.8 0a2.4 2.4 0 1 0 -4.8 0M142.10 393.4a2.4 2.4 0 1 0 4.8 0a2.4 2.4 0 1 0 -4.8 0M146.10 390.2a2.4 2.4 0 1 0 4.8 0a2.4 2.4 0 1 0 -4.8 0M151.10 388.0a2.4 2.4 0 1 0 4.8 0a2.4 2.4 0 1 0 -4.8 0M156.10 385.0a2.4 2.4 0 1 0 4.8 0a2.4 2.4 0 1 0 -4.8 0M160.10 382.1a2.4 2.4 0 1 0 4.8 0a2.4 2.4 0 1 0 -4.8 0M165.10 379.2a2.4 2.4 0 1 0 4.8 0a2.4 2.4 0 1 0 -4.8 0M170.10 374.6a2.4 2.4 0 1 0 4.8 0a2.4 2.4 0 1 0 -4.8 0M174.10 369.6a2.4 2.4 0 1 0 4.8 0a2.4 2.4 0 1 0 -4.8 0M179.10 365.2a2.4 2.4 0 1 0 4.8 0a2.4 2.4 0 1 0 -4.8 0M183.10 363.4a2.4 2.4 0 1 0 4.8 0a2.4 2.4 0 1 0 -4.8 0M188.10 363.8a2.4 2.4 0 1 0 4.8 0a2.4 2.4 0 1 0 -4.8 0M193.10 364.4a2.4 2.4 0 1 0 4.8 0a2.4 2.4 0 1 0 -4.8 0M197.10 363.6a2.4 2.4 0 1 0 4.8 0a2.4 2.4 0 1 0 -4.8 0M202.10 360.5a2.4 2.4 0 1 0 4.8 0a2.4 2.4 0 1 0 -4.8 0M206.10 355.5a2.4 2.4 0 1 0 4.8 0a2.4 2.4 0 1 0 -4.8 0M211.10 349.6a2.4 2.4 0 1 0 4.8 0a2.4 2.4 0 1 0 -4.8 0M216.10 346.2a2.4 2.4 0 1 0 4.8 0a2.4 2.4 0 1 0 -4.8 0M220.10 348.6a2.4 2.4 0 1 0 4.8 0a2.4 2.4 0 1 0 -4.8 0M225.10 355.5a2.4 2.4 0 1 0 4.8 0a2.4 2.4 0 1 0 -4.8 0M230.10 365.2a2.4 2.4 0 1 0 4.8 0a2.4 2.4 0 1 0 -4.8 0M234.10 375.5a2.4 2.4 0 1 0 4.8 0a2.4 2.4 0 1 0 -4.8 0M239.10 384.2a2.4 2.4 0 1 0 4.8 0a2.4 2.4 0 1 0 -4.8 0M243.10 389.4a2.4 2.4 0 1 0 4.8 0a2.4 2.4 0 1 0 -4.8 0M248.10 389.4a2.4 2.4 0 1 0 4.8 0a2.4 2.4 0 1 0 -4.8 0M253.10 387.1a2.4 2.4 0 1 0 4.8 0a2.4 2.4 0 1 0 -4.8 0M257.10 385.0a2.4 2.4 0 1 0 4.8 0a2.4 2.4 0 1 0 -4.8 0M262.10 383.1a2.4 2.4 0 1 0 4.8 0a2.4 2.4 0 1 0 -4.8 0M267.10 383.1a2.4 2.4 0 1 0 4.8 0a2.4 2.4 0 1 0 -4.8 0M271.10 385.0a2.4 2.4 0 1 0 4.8 0a2.4 2.4 0 1 0 -4.8 0M276.10 386.2a2.4 2.4 0 1 0 4.8 0a2.4 2.4 0 1 0 -4.8 0M280.10 386.2a2.4 2.4 0 1 0 4.8 0a2.4 2.4 0 1 0 -4.8 0M285.10 383.4a2.4 2.4 0 1 0 4.8 0a2.4 2.4 0 1 0 -4.8 0M290.10 378.4a2.4 2.4 0 1 0 4.8 0a2.4 2.4 0 1 0 -4.8 0M294.10 373.8a2.4 2.4 0 1 0 4.8 0a2.4 2.4 0 1 0 -4.8 0M299.10 370.5a2.4 2.4 0 1 0 4.8 0a2.4 2.4 0 1 0 -4.8 0M304.10 369.6a2.4 2.4 0 1 0 4.8 0a2.4 2.4 0 1 0 -4.8 0M308.10 369.6a2.4 2.4 0 1 0 4.8 0a2.4 2.4 0 1 0 -4.8 0M313.10 367.5a2.4 2.4 0 1 0 4.8 0a2.4 2.4 0 1 0 -4.8 0M317.10 364.2a2.4 2.4 0 1 0 4.8 0a2.4 2.4 0 1 0 -4.8 0M322.10 363.4a2.4 2.4 0 1 0 4.8 0a2.4 2.4 0 1 0 -4.8 0M327.10 363.6a2.4 2.4 0 1 0 4.8 0a2.4 2.4 0 1 0 -4.8 0M331.10 366.8a2.4 2.4 0 1 0 4.8 0a2.4 2.4 0 1 0 -4.8 0M336.10 374.6a2.4 2.4 0 1 0 4.8 0a2.4 2.4 0 1 0 -4.8 0M341.10 383.4a2.4 2.4 0 1 0 4.8 0a2.4 2.4 0 1 0 -4.8 0M345.10 390.5a2.4 2.4 0 1 0 4.8 0a2.4 2.4 0 1 0 -4.8 0M350.10 392.5a2.4 2.4 0 1 0 4.8 0a2.4 2.4 0 1 0 -4.8 0M354.10 390.2a2.4 2.4 0 1 0 4.8 0a2.4 2.4 0 1 0 -4.8 0M359.10 388.1a2.4 2.4 0 1 0 4.8 0a2.4 2.4 0 1 0 -4.8 0M364.10 387.1a2.4 2.4 0 1 0 4.8 0a2.4 2.4 0 1 0 -4.8 0M368.10 389.0a2.4 2.4 0 1 0 4.8 0a2.4 2.4 0 1 0 -4.8 0M373.10 393.4a2.4 2.4 0 1 0 4.8 0a2.4 2.4 0 1 0 -4.8 0M378.10 397.1a2.4 2.4 0 1 0 4.8 0a2.4 2.4 0 1 0 -4.8 0M382.10 401.2a2.4 2.4 0 1 0 4.8 0a2.4 2.4 0 1 0 -4.8 0M387.10 405.2a2.4 2.4 0 1 0 4.8 0a2.4 2.4 0 1 0 -4.8 0M391.10 406.1a2.4 2.4 0 1 0 4.8 0a2.4 2.4 0 1 0 -4.8 0M396.10 408.1a2.4 2.4 0 1 0 4.8 0a2.4 2.4 0 1 0 -4.8 0M401.10 411.2a2.4 2.4 0 1 0 4.8 0a2.4 2.4 0 1 0 -4.8 0M405.10 412.4a2.4 2.4 0 1 0 4.8 0a2.4 2.4 0 1 0 -4.8 0M410.10 411.2a2.4 2.4 0 1 0 4.8 0a2.4 2.4 0 1 0 -4.8 0M415.10 407.1a2.4 2.4 0 1 0 4.8 0a2.4 2.4 0 1 0 -4.8 0M419.10 399.2a2.4 2.4 0 1 0 4.8 0a2.4 2.4 0 1 0 -4.8 0M424.10 389.0a2.4 2.4 0 1 0 4.8 0a2.4 2.4 0 1 0 -4.8 0M428.10 377.5a2.4 2.4 0 1 0 4.8 0a2.4 2.4 0 1 0 -4.8 0M433.10 366.5a2.4 2.4 0 1 0 4.8 0a2.4 2.4 0 1 0 -4.8 0M438.10 361.1a2.4 2.4 0 1 0 4.8 0a2.4 2.4 0 1 0 -4.8 0M442.10 361.1a2.4 2.4 0 1 0 4.8 0a2.4 2.4 0 1 0 -4.8 0M447.10 366.5a2.4 2.4 0 1 0 4.8 0a2.4 2.4 0 1 0 -4.8 0M452.10 373.4a2.4 2.4 0 1 0 4.8 0a2.4 2.4 0 1 0 -4.8 0M456.10 380.5a2.4 2.4 0 1 0 4.8 0a2.4 2.4 0 1 0 -4.8 0M461.10 385.2a2.4 2.4 0 1 0 4.8 0a2.4 2.4 0 1 0 -4.8 0M465.10 384.2a2.4 2.4 0 1 0 4.8 0a2.4 2.4 0 1 0 -4.8 0M470.10 380.5a2.4 2.4 0 1 0 4.8 0a2.4 2.4 0 1 0 -4.8 0M475.10 376.5a2.4 2.4 0 1 0 4.8 0a2.4 2.4 0 1 0 -4.8 0M479.10 373.4a2.4 2.4 0 1 0 4.8 0a2.4 2.4 0 1 0 -4.8 0M484.10 372.1a2.4 2.4 0 1 0 4.8 0a2.4 2.4 0 1 0 -4.8 0M488.10 371.2a2.4 2.4 0 1 0 4.8 0a2.4 2.4 0 1 0 -4.8 0M493.10 373.4a2.4 2.4 0 1 0 4.8 0a2.4 2.4 0 1 0 -4.8 0M498.10 375.2a2.4 2.4 0 1 0 4.8 0a2.4 2.4 0 1 0 -4.8 0M502.10 378.4a2.4 2.4 0 1 0 4.8 0a2.4 2.4 0 1 0 -4.8 0M507.10 380.5a2.4 2.4 0 1 0 4.8 0a2.4 2.4 0 1 0 -4.8 0M512.10 382.4a2.4 2.4 0 1 0 4.8 0a2.4 2.4 0 1 0 -4.8 0M516.10 382.4a2.4 2.4 0 1 0 4.8 0a2.4 2.4 0 1 0 -4.8 0M521.10 381.2a2.4 2.4 0 1 0 4.8 0a2.4 2.4 0 1 0 -4.8 0M525.10 379.2a2.4 2.4 0 1 0 4.8 0a2.4 2.4 0 1 0 -4.8 0M530.10 377.5a2.4 2.4 0 1 0 4.8 0a2.4 2.4 0 1 0 -4.8 0M535.10 374.6a2.4 2.4 0 1 0 4.8 0a2.4 2.4 0 1 0 -4.8 0M539.10 350.5a2.4 2.4 0 1 0 4.8 0a2.4 2.4 0 1 0 -4.8 0M544.10 341.6a2.4 2.4 0 1 0 4.8 0a2.4 2.4 0 1 0 -4.8 0M549.10 332.7a2.4 2.4 0 1 0 4.8 0a2.4 2.4 0 1 0 -4.8 0M553.10 317.4a2.4 2.4 0 1 0 4.8 0a2.4 2.4 0 1 0 -4.8 0M558.10 317.4a2.4 2.4 0 1 0 4.8 0a2.4 2.4 0 1 0 -4.8 0M562.10 316.6a2.4 2.4 0 1 0 4.8 0a2.4 2.4 0 1 0 -4.8 0M567.10 314.3a2.4 2.4 0 1 0 4.8 0a2.4 2.4 0 1 0 -4.8 0M572.10 312.5a2.4 2.4 0 1 0 4.8 0a2.4 2.4 0 1 0 -4.8 0M576.10 312.5a2.4 2.4 0 1 0 4.8 0a2.4 2.4 0 1 0 -4.8 0M581.10 313.3a2.4 2.4 0 1 0 4.8 0a2.4 2.4 0 1 0 -4.8 0M586.10 316.6a2.4 2.4 0 1 0 4.8 0a2.4 2.4 0 1 0 -4.8 0M590.10 317.4a2.4 2.4 0 1 0 4.8 0a2.4 2.4 0 1 0 -4.8 0M595.10 317.4a2.4 2.4 0 1 0 4.8 0a2.4 2.4 0 1 0 -4.8 0M599.10 316.6a2.4 2.4 0 1 0 4.8 0a2.4 2.4 0 1 0 -4.8 0M604.10 316.6a2.4 2.4 0 1 0 4.8 0a2.4 2.4 0 1 0 -4.8 0M609.10 315.6a2.4 2.4 0 1 0 4.8 0a2.4 2.4 0 1 0 -4.8 0M613.10 330.6a2.4 2.4 0 1 0 4.8 0a2.4 2.4 0 1 0 -4.8 0M618.10 337.5a2.4 2.4 0 1 0 4.8 0a2.4 2.4 0 1 0 -4.8 0M623.10 341.6a2.4 2.4 0 1 0 4.8 0a2.4 2.4 0 1 0 -4.8 0M627.10 349.6a2.4 2.4 0 1 0 4.8 0a2.4 2.4 0 1 0 -4.8 0M632.10 356.1a2.4 2.4 0 1 0 4.8 0a2.4 2.4 0 1 0 -4.8 0M636.10 364.5a2.4 2.4 0 1 0 4.8 0a2.4 2.4 0 1 0 -4.8 0M641.10 370.6a2.4 2.4 0 1 0 4.8 0a2.4 2.4 0 1 0 -4.8 0M646.10 377.4a2.4 2.4 0 1 0 4.8 0a2.4 2.4 0 1 0 -4.8 0M650.10 381.5a2.4 2.4 0 1 0 4.8 0a2.4 2.4 0 1 0 -4.8 0M655.10 391.3a2.4 2.4 0 1 0 4.8 0a2.4 2.4 0 1 0 -4.8 0M660.10 398.3a2.4 2.4 0 1 0 4.8 0a2.4 2.4 0 1 0 -4.8 0M664.10 454.2a2.4 2.4 0 1 0 4.8 0a2.4 2.4 0 1 0 -4.8 0M669.10 458.4a2.4 2.4 0 1 0 4.8 0a2.4 2.4 0 1 0 -4.8 0M673.10 462.0a2.4 2.4 0 1 0 4.8 0a2.4 2.4 0 1 0 -4.8 0M678.10 462.0a2.4 2.4 0 1 0 4.8 0a2.4 2.4 0 1 0 -4.8 0M683.10 462.0a2.4 2.4 0 1 0 4.8 0a2.4 2.4 0 1 0 -4.8 0M687.10 462.0a2.4 2.4 0 1 0 4.8 0a2.4 2.4 0 1 0 -4.8 0M692.10 462.0a2.4 2.4 0 1 0 4.8 0a2.4 2.4 0 1 0 -4.8 0M697.10 462.0a2.4 2.4 0 1 0 4.8 0a2.4 2.4 0 1 0 -4.8 0M701.10 462.0a2.4 2.4 0 1 0 4.8 0a2.4 2.4 0 1 0 -4.8 0M706.10 335.7a2.4 2.4 0 1 0 4.8 0a2.4 2.4 0 1 0 -4.8 0M710.10 339.9a2.4 2.4 0 1 0 4.8 0a2.4 2.4 0 1 0 -4.8 0M715.10 345.6a2.4 2.4 0 1 0 4.8 0a2.4 2.4 0 1 0 -4.8 0M720.10 348.8a2.4 2.4 0 1 0 4.8 0a2.4 2.4 0 1 0 -4.8 0M724.10 355.9a2.4 2.4 0 1 0 4.8 0a2.4 2.4 0 1 0 -4.8 0M729.10 357.5a2.4 2.4 0 1 0 4.8 0a2.4 2.4 0 1 0 -4.8 0M734.10 360.8a2.4 2.4 0 1 0 4.8 0a2.4 2.4 0 1 0 -4.8 0M738.10 362.8a2.4 2.4 0 1 0 4.8 0a2.4 2.4 0 1 0 -4.8 0M743.10 374.6a2.4 2.4 0 1 0 4.8 0a2.4 2.4 0 1 0 -4.8 0M747.10 368.8a2.4 2.4 0 1 0 4.8 0a2.4 2.4 0 1 0 -4.8 0M752.10 364.6a2.4 2.4 0 1 0 4.8 0a2.4 2.4 0 1 0 -4.8 0M757.10 361.5a2.4 2.4 0 1 0 4.8 0a2.4 2.4 0 1 0 -4.8 0M761.10 360.5a2.4 2.4 0 1 0 4.8 0a2.4 2.4 0 1 0 -4.8 0M766.10 363.4a2.4 2.4 0 1 0 4.8 0a2.4 2.4 0 1 0 -4.8 0M770.10 367.8a2.4 2.4 0 1 0 4.8 0a2.4 2.4 0 1 0 -4.8 0M775.10 374.6a2.4 2.4 0 1 0 4.8 0a2.4 2.4 0 1 0 -4.8 0M780.10 380.5a2.4 2.4 0 1 0 4.8 0a2.4 2.4 0 1 0 -4.8 0M784.10 384.4a2.4 2.4 0 1 0 4.8 0a2.4 2.4 0 1 0 -4.8 0M789.10 383.4a2.4 2.4 0 1 0 4.8 0a2.4 2.4 0 1 0 -4.8 0M794.10 377.5a2.4 2.4 0 1 0 4.8 0a2.4 2.4 0 1 0 -4.8 0M798.10 368.8a2.4 2.4 0 1 0 4.8 0a2.4 2.4 0 1 0 -4.8 0M803.10 358.6a2.4 2.4 0 1 0 4.8 0a2.4 2.4 0 1 0 -4.8 0M807.10 348.6a2.4 2.4 0 1 0 4.8 0a2.4 2.4 0 1 0 -4.8 0M812.10 342.5a2.4 2.4 0 1 0 4.8 0a2.4 2.4 0 1 0 -4.8 0M817.10 340.6a2.4 2.4 0 1 0 4.8 0a2.4 2.4 0 1 0 -4.8 0M821.10 343.8a2.4 2.4 0 1 0 4.8 0a2.4 2.4 0 1 0 -4.8 0M826.10 351.5a2.4 2.4 0 1 0 4.8 0a2.4 2.4 0 1 0 -4.8 0M831.10 359.6a2.4 2.4 0 1 0 4.8 0a2.4 2.4 0 1 0 -4.8 0M835.10 365.5a2.4 2.4 0 1 0 4.8 0a2.4 2.4 0 1 0 -4.8 0M840.10 369.6a2.4 2.4 0 1 0 4.8 0a2.4 2.4 0 1 0 -4.8 0M844.10 371.5a2.4 2.4 0 1 0 4.8 0a2.4 2.4 0 1 0 -4.8 0M849.10 372.5a2.4 2.4 0 1 0 4.8 0a2.4 2.4 0 1 0 -4.8 0M854.10 372.5a2.4 2.4 0 1 0 4.8 0a2.4 2.4 0 1 0 -4.8 0M858.10 374.4a2.4 2.4 0 1 0 4.8 0a2.4 2.4 0 1 0 -4.8 0M863.10 376.5a2.4 2.4 0 1 0 4.8 0a2.4 2.4 0 1 0 -4.8 0M868.10 378.8a2.4 2.4 0 1 0 4.8 0a2.4 2.4 0 1 0 -4.8 0M872.10 379.4a2.4 2.4 0 1 0 4.8 0a2.4 2.4 0 1 0 -4.8 0M877.10 380.2a2.4 2.4 0 1 0 4.8 0a2.4 2.4 0 1 0 -4.8 0M881.10 383.6a2.4 2.4 0 1 0 4.8 0a2.4 2.4 0 1 0 -4.8 0M886.10 389.4a2.4 2.4 0 1 0 4.8 0a2.4 2.4 0 1 0 -4.8 0M891.10 397.4a2.4 2.4 0 1 0 4.8 0a2.4 2.4 0 1 0 -4.8 0M895.10 403.4a2.4 2.4 0 1 0 4.8 0a2.4 2.4 0 1 0 -4.8 0M900.10 406.5a2.4 2.4 0 1 0 4.8 0a2.4 2.4 0 1 0 -4.8 0M905.10 407.5a2.4 2.4 0 1 0 4.8 0a2.4 2.4 0 1 0 -4.8 0M909.10 405.2a2.4 2.4 0 1 0 4.8 0a2.4 2.4 0 1 0 -4.8 0M914.10 401.2a2.4 2.4 0 1 0 4.8 0a2.4 2.4 0 1 0 -4.8 0M918.10 397.4a2.4 2.4 0 1 0 4.8 0a2.4 2.4 0 1 0 -4.8 0M923.10 395.5a2.4 2.4 0 1 0 4.8 0a2.4 2.4 0 1 0 -4.8 0M928.10 395.2a2.4 2.4 0 1 0 4.8 0a2.4 2.4 0 1 0 -4.8 0M932.10 396.5a2.4 2.4 0 1 0 4.8 0a2.4 2.4 0 1 0 -4.8 0M937.10 396.5a2.4 2.4 0 1 0 4.8 0a2.4 2.4 0 1 0 -4.8 0M942.10 396.5a2.4 2.4 0 1 0 4.8 0a2.4 2.4 0 1 0 -4.8 0M946.10 395.5a2.4 2.4 0 1 0 4.8 0a2.4 2.4 0 1 0 -4.8 0M951.10 393.4a2.4 2.4 0 1 0 4.8 0a2.4 2.4 0 1 0 -4.8 0M955.10 389.6a2.4 2.4 0 1 0 4.8 0a2.4 2.4 0 1 0 -4.8 0M960.10 384.4a2.4 2.4 0 1 0 4.8 0a2.4 2.4 0 1 0 -4.8 0M965.10 377.4a2.4 2.4 0 1 0 4.8 0a2.4 2.4 0 1 0 -4.8 0M969.10 371.5a2.4 2.4 0 1 0 4.8 0a2.4 2.4 0 1 0 -4.8 0M974.10 367.1a2.4 2.4 0 1 0 4.8 0a2.4 2.4 0 1 0 -4.8 0M979.10 366.2a2.4 2.4 0 1 0 4.8 0a2.4 2.4 0 1 0 -4.8 0M983.10 368.8a2.4 2.4 0 1 0 4.8 0a2.4 2.4 0 1 0 -4.8 0M988.10 373.4a2.4 2.4 0 1 0 4.8 0a2.4 2.4 0 1 0 -4.8 0M992.10 378.4a2.4 2.4 0 1 0 4.8 0a2.4 2.4 0 1 0 -4.8 0M997.10 382.5a2.4 2.4 0 1 0 4.8 0a2.4 2.4 0 1 0 -4.8 0M1002.10 385.2a2.4 2.4 0 1 0 4.8 0a2.4 2.4 0 1 0 -4.8 0M1006.10 386.5a2.4 2.4 0 1 0 4.8 0a2.4 2.4 0 1 0 -4.8 0M1011.10 384.4a2.4 2.4 0 1 0 4.8 0a2.4 2.4 0 1 0 -4.8 0M1016.10 379.4a2.4 2.4 0 1 0 4.8 0a2.4 2.4 0 1 0 -4.8 0M1020.10 375.5a2.4 2.4 0 1 0 4.8 0a2.4 2.4 0 1 0 -4.8 0M1025.10 372.5a2.4 2.4 0 1 0 4.8 0a2.4 2.4 0 1 0 -4.8 0M1029.10 371.5a2.4 2.4 0 1 0 4.8 0a2.4 2.4 0 1 0 -4.8 0M1034.10 372.5a2.4 2.4 0 1 0 4.8 0a2.4 2.4 0 1 0 -4.8 0M1039.10 376.5a2.4 2.4 0 1 0 4.8 0a2.4 2.4 0 1 0 -4.8 0M1043.10 380.5a2.4 2.4 0 1 0 4.8 0a2.4 2.4 0 1 0 -4.8 0M1048.10 383.4a2.4 2.4 0 1 0 4.8 0a2.4 2.4 0 1 0 -4.8 0M1053.10 384.4a2.4 2.4 0 1 0 4.8 0a2.4 2.4 0 1 0 -4.8 0M1057.10 381.5a2.4 2.4 0 1 0 4.8 0a2.4 2.4 0 1 0 -4.8 0M1062.10 376.5a2.4 2.4 0 1 0 4.8 0a2.4 2.4 0 1 0 -4.8 0M1066.10 367.1a2.4 2.4 0 1 0 4.8 0a2.4 2.4 0 1 0 -4.8 0M1071.10 358.6a2.4 2.4 0 1 0 4.8 0a2.4 2.4 0 1 0 -4.8 0M1076.10 352.5a2.4 2.4 0 1 0 4.8 0a2.4 2.4 0 1 0 -4.8 0M1080.10 350.5a2.4 2.4 0 1 0 4.8 0a2.4 2.4 0 1 0 -4.8 0M1085.10 352.5a2.4 2.4 0 1 0 4.8 0a2.4 2.4 0 1 0 -4.8 0M1089.10 358.6a2.4 2.4 0 1 0 4.8 0a2.4 2.4 0 1 0 -4.8 0M1094.10 367.5a2.4 2.4 0 1 0 4.8 0a2.4 2.4 0 1 0 -4.8 0M1099.10 376.5a2.4 2.4 0 1 0 4.8 0a2.4 2.4 0 1 0 -4.8 0M1103.10 383.4a2.4 2.4 0 1 0 4.8 0a2.4 2.4 0 1 0 -4.8 0M1108.10 388.4a2.4 2.4 0 1 0 4.8 0a2.4 2.4 0 1 0 -4.8 0M1113.10 392.4a2.4 2.4 0 1 0 4.8 0a2.4 2.4 0 1 0 -4.8 0M1117.10 396.5a2.4 2.4 0 1 0 4.8 0a2.4 2.4 0 1 0 -4.8 0M1122.10 398.4a2.4 2.4 0 1 0 4.8 0a2.4 2.4 0 1 0 -4.8 0M1126.10 398.4a2.4 2.4 0 1 0 4.8 0a2.4 2.4 0 1 0 -4.8 0M1131.10 396.5a2.4 2.4 0 1 0 4.8 0a2.4 2.4 0 1 0 -4.8 0M1136.10 393.4a2.4 2.4 0 1 0 4.8 0a2.4 2.4 0 1 0 -4.8 0M1140.10 390.2a2.4 2.4 0 1 0 4.8 0a2.4 2.4 0 1 0 -4.8 0M1145.10 389.2a2.4 2.4 0 1 0 4.8 0a2.4 2.4 0 1 0 -4.8 0M1150.10 392.4a2.4 2.4 0 1 0 4.8 0a2.4 2.4 0 1 0 -4.8 0M1154.10 399.4a2.4 2.4 0 1 0 4.8 0a2.4 2.4 0 1 0 -4.8 0M1159.10 407.4a2.4 2.4 0 1 0 4.8 0a2.4 2.4 0 1 0 -4.8 0M1163.10 413.4a2.4 2.4 0 1 0 4.8 0a2.4 2.4 0 1 0 -4.8 0M1168.10 414.6a2.4 2.4 0 1 0 4.8 0a2.4 2.4 0 1 0 -4.8 0M1173.10 412.4a2.4 2.4 0 1 0 4.8 0a2.4 2.4 0 1 0 -4.8 0M1177.10 406.2a2.4 2.4 0 1 0 4.8 0a2.4 2.4 0 1 0 -4.8 0M1182.10 397.4a2.4 2.4 0 1 0 4.8 0a2.4 2.4 0 1 0 -4.8 0M1187.10 388.4a2.4 2.4 0 1 0 4.8 0a2.4 2.4 0 1 0 -4.8 0M1191.10 380.2a2.4 2.4 0 1 0 4.8 0a2.4 2.4 0 1 0 -4.8 0M1196.10 374.6a2.4 2.4 0 1 0 4.8 0a2.4 2.4 0 1 0 -4.8 0M1200.10 370.2a2.4 2.4 0 1 0 4.8 0a2.4 2.4 0 1 0 -4.8 0M1205.10 370.2a2.4 2.4 0 1 0 4.8 0a2.4 2.4 0 1 0 -4.8 0M1210.10 371.5a2.4 2.4 0 1 0 4.8 0a2.4 2.4 0 1 0 -4.8 0M1214.10 373.4a2.4 2.4 0 1 0 4.8 0a2.4 2.4 0 1 0 -4.8 0M1219.10 374.6a2.4 2.4 0 1 0 4.8 0a2.4 2.4 0 1 0 -4.8 0M1224.10 373.4a2.4 2.4 0 1 0 4.8 0a2.4 2.4 0 1 0 -4.8 0M1228.10 368.4a2.4 2.4 0 1 0 4.8 0a2.4 2.4 0 1 0 -4.8 0M1233.10 361.5a2.4 2.4 0 1 0 4.8 0a2.4 2.4 0 1 0 -4.8 0M1237.10 353.6a2.4 2.4 0 1 0 4.8 0a2.4 2.4 0 1 0 -4.8 0M1242.10 347.5a2.4 2.4 0 1 0 4.8 0a2.4 2.4 0 1 0 -4.8 0M1247.10 344.6a2.4 2.4 0 1 0 4.8 0a2.4 2.4 0 1 0 -4.8 0M1251.10 344.6a2.4 2.4 0 1 0 4.8 0a2.4 2.4 0 1 0 -4.8 0M1256.10 348.4a2.4 2.4 0 1 0 4.8 0a2.4 2.4 0 1 0 -4.8 0M1261.10 354.6a2.4 2.4 0 1 0 4.8 0a2.4 2.4 0 1 0 -4.8 0M1265.10 361.5a2.4 2.4 0 1 0 4.8 0a2.4 2.4 0 1 0 -4.8 0M1270.10 367.5a2.4 2.4 0 1 0 4.8 0a2.4 2.4 0 1 0 -4.8 0M1274.10 370.2a2.4 2.4 0 1 0 4.8 0a2.4 2.4 0 1 0 -4.8 0M1279.10 371.5a2.4 2.4 0 1 0 4.8 0a2.4 2.4 0 1 0 -4.8 0M1284.10 369.6a2.4 2.4 0 1 0 4.8 0a2.4 2.4 0 1 0 -4.8 0M1288.10 368.4a2.4 2.4 0 1 0 4.8 0a2.4 2.4 0 1 0 -4.8 0M1293.10 368.4a2.4 2.4 0 1 0 4.8 0a2.4 2.4 0 1 0 -4.8 0M1298.10 371.5a2.4 2.4 0 1 0 4.8 0a2.4 2.4 0 1 0 -4.8 0M1302.10 377.1a2.4 2.4 0 1 0 4.8 0a2.4 2.4 0 1 0 -4.8 0M1307.10 384.2a2.4 2.4 0 1 0 4.8 0a2.4 2.4 0 1 0 -4.8 0M1311.10 390.2a2.4 2.4 0 1 0 4.8 0a2.4 2.4 0 1 0 -4.8 0M1316.10 395.5a2.4 2.4 0 1 0 4.8 0a2.4 2.4 0 1 0 -4.8 0M1321.10 397.5a2.4 2.4 0 1 0 4.8 0a2.4 2.4 0 1 0 -4.8 0M1325.10 397.4a2.4 2.4 0 1 0 4.8 0a2.4 2.4 0 1 0 -4.8 0M1330.10 395.5a2.4 2.4 0 1 0 4.8 0a2.4 2.4 0 1 0 -4.8 0M1335.10 393.4a2.4 2.4 0 1 0 4.8 0a2.4 2.4 0 1 0 -4.8 0M1339.10 391.1a2.4 2.4 0 1 0 4.8 0a2.4 2.4 0 1 0 -4.8 0M1344.10 390.2a2.4 2.4 0 1 0 4.8 0a2.4 2.4 0 1 0 -4.8 0M1348.10 390.2a2.4 2.4 0 1 0 4.8 0a2.4 2.4 0 1 0 -4.8 0M1353.10 391.1a2.4 2.4 0 1 0 4.8 0a2.4 2.4 0 1 0 -4.8 0M1358.10 393.4a2.4 2.4 0 1 0 4.8 0a2.4 2.4 0 1 0 -4.8 0M1362.10 395.5a2.4 2.4 0 1 0 4.8 0a2.4 2.4 0 1 0 -4.8 0M1367.10 398.4a2.4 2.4 0 1 0 4.8 0a2.4 2.4 0 1 0 -4.8 0M1371.10 401.2a2.4 2.4 0 1 0 4.8 0a2.4 2.4 0 1 0 -4.8 0M1376.10 405.2a2.4 2.4 0 1 0 4.8 0a2.4 2.4 0 1 0 -4.8 0M1381.10 408.4a2.4 2.4 0 1 0 4.8 0a2.4 2.4 0 1 0 -4.8 0M1385.10 410.5a2.4 2.4 0 1 0 4.8 0a2.4 2.4 0 1 0 -4.8 0M1390.10 409.4a2.4 2.4 0 1 0 4.8 0a2.4 2.4 0 1 0 -4.8 0M1395.10 404.4a2.4 2.4 0 1 0 4.8 0a2.4 2.4 0 1 0 -4.8 0M1399.10 396.5a2.4 2.4 0 1 0 4.8 0a2.4 2.4 0 1 0 -4.8 0M1404.10 388.4a2.4 2.4 0 1 0 4.8 0a2.4 2.4 0 1 0 -4.8 0M1408.10 382.4a2.4 2.4 0 1 0 4.8 0a2.4 2.4 0 1 0 -4.8 0M1413.10 379.4a2.4 2.4 0 1 0 4.8 0a2.4 2.4 0 1 0 -4.8 0M1418.10 381.2a2.4 2.4 0 1 0 4.8 0a2.4 2.4 0 1 0 -4.8 0M1422.10 387.1a2.4 2.4 0 1 0 4.8 0a2.4 2.4 0 1 0 -4.8 0M1427.10 393.4a2.4 2.4 0 1 0 4.8 0a2.4 2.4 0 1 0 -4.8 0M1432.10 397.5a2.4 2.4 0 1 0 4.8 0a2.4 2.4 0 1 0 -4.8 0M1436.10 396.5a2.4 2.4 0 1 0 4.8 0a2.4 2.4 0 1 0 -4.8 0M1441.10 391.2a2.4 2.4 0 1 0 4.8 0a2.4 2.4 0 1 0 -4.8 0M1445.10 383.4a2.4 2.4 0 1 0 4.8 0a2.4 2.4 0 1 0 -4.8 0M1450.10 373.4a2.4 2.4 0 1 0 4.8 0a2.4 2.4 0 1 0 -4.8 0M1455.10 364.6a2.4 2.4 0 1 0 4.8 0a2.4 2.4 0 1 0 -4.8 0M1459.10 357.5a2.4 2.4 0 1 0 4.8 0a2.4 2.4 0 1 0 -4.8 0M1464.10 353.4a2.4 2.4 0 1 0 4.8 0a2.4 2.4 0 1 0 -4.8 0M1469.10 353.4a2.4 2.4 0 1 0 4.8 0a2.4 2.4 0 1 0 -4.8 0M1473.10 358.6a2.4 2.4 0 1 0 4.8 0a2.4 2.4 0 1 0 -4.8 0M1478.10 365.5a2.4 2.4 0 1 0 4.8 0a2.4 2.4 0 1 0 -4.8 0M1482.10 372.5a2.4 2.4 0 1 0 4.8 0a2.4 2.4 0 1 0 -4.8 0M1487.10 376.5a2.4 2.4 0 1 0 4.8 0a2.4 2.4 0 1 0 -4.8 0M1492.10 377.8a2.4 2.4 0 1 0 4.8 0a2.4 2.4 0 1 0 -4.8 0M1496.10 374.4a2.4 2.4 0 1 0 4.8 0a2.4 2.4 0 1 0 -4.8 0M1501.10 367.5a2.4 2.4 0 1 0 4.8 0a2.4 2.4 0 1 0 -4.8 0M1506.10 357.5a2.4 2.4 0 1 0 4.8 0a2.4 2.4 0 1 0 -4.8 0M1510.10 348.4a2.4 2.4 0 1 0 4.8 0a2.4 2.4 0 1 0 -4.8 0M1515.10 342.4a2.4 2.4 0 1 0 4.8 0a2.4 2.4 0 1 0 -4.8 0M1519.10 340.2a2.4 2.4 0 1 0 4.8 0a2.4 2.4 0 1 0 -4.8 0M1524.10 342.4a2.4 2.4 0 1 0 4.8 0a2.4 2.4 0 1 0 -4.8 0M1529.10 347.5a2.4 2.4 0 1 0 4.8 0a2.4 2.4 0 1 0 -4.8 0M1533.10 353.6a2.4 2.4 0 1 0 4.8 0a2.4 2.4 0 1 0 -4.8 0M1538.10 360.9a2.4 2.4 0 1 0 4.8 0a2.4 2.4 0 1 0 -4.8 0M1543.10 366.2a2.4 2.4 0 1 0 4.8 0a2.4 2.4 0 1 0 -4.8 0M1547.10 370.2a2.4 2.4 0 1 0 4.8 0a2.4 2.4 0 1 0 -4.8 0M1552.10 373.4a2.4 2.4 0 1 0 4.8 0a2.4 2.4 0 1 0 -4.8 0M1556.10 377.4a2.4 2.4 0 1 0 4.8 0a2.4 2.4 0 1 0 -4.8 0M1561.10 382.4a2.4 2.4 0 1 0 4.8 0a2.4 2.4 0 1 0 -4.8 0M1566.10 387.4a2.4 2.4 0 1 0 4.8 0a2.4 2.4 0 1 0 -4.8 0M1570.10 391.2a2.4 2.4 0 1 0 4.8 0a2.4 2.4 0 1 0 -4.8 0M1575.10 393.4a2.4 2.4 0 1 0 4.8 0a2.4 2.4 0 1 0 -4.8 0M1580.10 392.4a2.4 2.4 0 1 0 4.8 0a2.4 2.4 0 1 0 -4.8 0M1584.10 390.2a2.4 2.4 0 1 0 4.8 0a2.4 2.4 0 1 0 -4.8 0M1589.10 387.1a2.4 2.4 0 1 0 4.8 0a2.4 2.4 0 1 0 -4.8 0M1593.10 386.1a2.4 2.4 0 1 0 4.8 0a2.4 2.4 0 1 0 -4.8 0M1598.10 388.4a2.4 2.4 0 1 0 4.8 0a2.4 2.4 0 1 0 -4.8 0M1603.10 392.4a2.4 2.4 0 1 0 4.8 0a2.4 2.4 0 1 0 -4.8 0M1607.10 397.5a2.4 2.4 0 1 0 4.8 0a2.4 2.4 0 1 0 -4.8 0M1612.10 401.2a2.4 2.4 0 1 0 4.8 0a2.4 2.4 0 1 0 -4.8 0M1617.10 404.4a2.4 2.4 0 1 0 4.8 0a2.4 2.4 0 1 0 -4.8 0M1621.10 404.4a2.4 2.4 0 1 0 4.8 0a2.4 2.4 0 1 0 -4.8 0M1626.10 402.4a2.4 2.4 0 1 0 4.8 0a2.4 2.4 0 1 0 -4.8 0M1630.10 400.2a2.4 2.4 0 1 0 4.8 0a2.4 2.4 0 1 0 -4.8 0M1635.10 401.2a2.4 2.4 0 1 0 4.8 0a2.4 2.4 0 1 0 -4.8 0M1640.10 404.4a2.4 2.4 0 1 0 4.8 0a2.4 2.4 0 1 0 -4.8 0M1644.10 407.4a2.4 2.4 0 1 0 4.8 0a2.4 2.4 0 1 0 -4.8 0M1649.10 409.4a2.4 2.4 0 1 0 4.8 0a2.4 2.4 0 1 0 -4.8 0M1653.10 409.4a2.4 2.4 0 1 0 4.8 0a2.4 2.4 0 1 0 -4.8 0M1658.10 405.2a2.4 2.4 0 1 0 4.8 0a2.4 2.4 0 1 0 -4.8 0M1663.10 396.5a2.4 2.4 0 1 0 4.8 0a2.4 2.4 0 1 0 -4.8 0M1667.10 386.2a2.4 2.4 0 1 0 4.8 0a2.4 2.4 0 1 0 -4.8 0M1672.10 378.4a2.4 2.4 0 1 0 4.8 0a2.4 2.4 0 1 0 -4.8 0M1677.10 375.5a2.4 2.4 0 1 0 4.8 0a2.4 2.4 0 1 0 -4.8 0M1681.10 375.5a2.4 2.4 0 1 0 4.8 0a2.4 2.4 0 1 0 -4.8 0M1686.10 377.4a2.4 2.4 0 1 0 4.8 0a2.4 2.4 0 1 0 -4.8 0M1690.10 382.4a2.4 2.4 0 1 0 4.8 0a2.4 2.4 0 1 0 -4.8 0M1695.10 386.2a2.4 2.4 0 1 0 4.8 0a2.4 2.4 0 1 0 -4.8 0M1700.10 389.4a2.4 2.4 0 1 0 4.8 0a2.4 2.4 0 1 0 -4.8 0M1704.10 389.4a2.4 2.4 0 1 0 4.8 0a2.4 2.4 0 1 0 -4.8 0M1709.10 387.1a2.4 2.4 0 1 0 4.8 0a2.4 2.4 0 1 0 -4.8 0M1714.10 383.4a2.4 2.4 0 1 0 4.8 0a2.4 2.4 0 1 0 -4.8 0M1718.10 377.4a2.4 2.4 0 1 0 4.8 0a2.4 2.4 0 1 0 -4.8 0M1723.10 370.2a2.4 2.4 0 1 0 4.8 0a2.4 2.4 0 1 0 -4.8 0M1727.10 363.4a2.4 2.4 0 1 0 4.8 0a2.4 2.4 0 1 0 -4.8 0M1732.10 358.6a2.4 2.4 0 1 0 4.8 0a2.4 2.4 0 1 0 -4.8 0M1737.10 356.2a2.4 2.4 0 1 0 4.8 0a2.4 2.4 0 1 0 -4.8 0M1741.10 358.6a2.4 2.4 0 1 0 4.8 0a2.4 2.4 0 1 0 -4.8 0M1746.10 362.5a2.4 2.4 0 1 0 4.8 0a2.4 2.4 0 1 0 -4.8 0M1751.10 366.2a2.4 2.4 0 1 0 4.8 0a2.4 2.4 0 1 0 -4.8 0M1755.10 368.8a2.4 2.4 0 1 0 4.8 0a2.4 2.4 0 1 0 -4.8 0M1760.10 370.2a2.4 2.4 0 1 0 4.8 0a2.4 2.4 0 1 0 -4.8 0M1764.10 369.6a2.4 2.4 0 1 0 4.8 0a2.4 2.4 0 1 0 -4.8 0M1769.10 369.6a2.4 2.4 0 1 0 4.8 0a2.4 2.4 0 1 0 -4.8 0M1774.10 369.6a2.4 2.4 0 1 0 4.8 0a2.4 2.4 0 1 0 -4.8 0M1778.10 370.4a2.4 2.4 0 1 0 4.8 0a2.4 2.4 0 1 0 -4.8 0M1783.10 372.6a2.4 2.4 0 1 0 4.8 0a2.4 2.4 0 1 0 -4.8 0M1788.10 374.6a2.4 2.4 0 1 0 4.8 0a2.4 2.4 0 1 0 -4.8 0M1792.10 377.6a2.4 2.4 0 1 0 4.8 0a2.4 2.4 0 1 0 -4.8 0M1797.10 379.2a2.4 2.4 0 1 0 4.8 0a2.4 2.4 0 1 0 -4.8 0M1801.10 380.4a2.4 2.4 0 1 0 4.8 0a2.4 2.4 0 1 0 -4.8 0M1806.10 382.3a2.4 2.4 0 1 0 4.8 0a2.4 2.4 0 1 0 -4.8 0M1811.10 384.2a2.4 2.4 0 1 0 4.8 0a2.4 2.4 0 1 0 -4.8 0M1815.10 387.3a2.4 2.4 0 1 0 4.8 0a2.4 2.4 0 1 0 -4.8 0M1820.10 389.6a2.4 2.4 0 1 0 4.8 0a2.4 2.4 0 1 0 -4.8 0M1825.10 390.7a2.4 2.4 0 1 0 4.8 0a2.4 2.4 0 1 0 -4.8 0M1829.10 390.7a2.4 2.4 0 1 0 4.8 0a2.4 2.4 0 1 0 -4.8 0M1834.10 386.2a2.4 2.4 0 1 0 4.8 0a2.4 2.4 0 1 0 -4.8 0M1838.10 379.4a2.4 2.4 0 1 0 4.8 0a2.4 2.4 0 1 0 -4.8 0M1843.10 369.6a2.4 2.4 0 1 0 4.8 0a2.4 2.4 0 1 0 -4.8 0M1848.10 359.6a2.4 2.4 0 1 0 4.8 0a2.4 2.4 0 1 0 -4.8 0M1852.10 352.6a2.4 2.4 0 1 0 4.8 0a2.4 2.4 0 1 0 -4.8 0M1857.10 350.4a2.4 2.4 0 1 0 4.8 0a2.4 2.4 0 1 0 -4.8 0M1862.10 353.6a2.4 2.4 0 1 0 4.8 0a2.4 2.4 0 1 0 -4.8 0M1866.10 360.5a2.4 2.4 0 1 0 4.8 0a2.4 2.4 0 1 0 -4.8 0M1871.10 371.5a2.4 2.4 0 1 0 4.8 0a2.4 2.4 0 1 0 -4.8 0M1875.10 380.4a2.4 2.4 0 1 0 4.8 0a2.4 2.4 0 1 0 -4.8 0M1880.10 386.2a2.4 2.4 0 1 0 4.8 0a2.4 2.4 0 1 0 -4.8 0M1885.10 388.4a2.4 2.4 0 1 0 4.8 0a2.4 2.4 0 1 0 -4.8 0M1889.10 386.2a2.4 2.4 0 1 0 4.8 0a2.4 2.4 0 1 0 -4.8 0M1894.10 381.5a2.4 2.4 0 1 0 4.8 0a2.4 2.4 0 1 0 -4.8 0M1899.10 377.3a2.4 2.4 0 1 0 4.8 0a2.4 2.4 0 1 0 -4.8 0M1903.10 376.2a2.4 2.4 0 1 0 4.8 0a2.4 2.4 0 1 0 -4.8 0M1908.10 380.2a2.4 2.4 0 1 0 4.8 0a2.4 2.4 0 1 0 -4.8 0" fill="#3232c8"/><path d="M129.10 402.5a1.4 1.4 0 1 0 2.8 0a1.4 1.4 0 1 0 -2.8 0M134.10 400.2a1.4 1.4 0 1 0 2.8 0a1.4 1.4 0 1 0 -2.8 0M138.10 397.1a1.4 1.4 0 1 0 2.8 0a1.4 1.4 0 1 0 -2.8 0M143.10 393.4a1.4 1.4 0 1 0 2.8 0a1.4 1.4 0 1 0 -2.8 0M147.10 390.2a1.4 1.4 0 1 0 2.8 0a1.4 1.4 0 1 0 -2.8 0M152.10 388.0a1.4 1.4 0 1 0 2.8 0a1.4 1.4 0 1 0 -2.8 0M157.10 385.0a1.4 1.4 0 1 0 2.8 0a1.4 1.4 0 1 0 -2.8 0M161.10 382.1a1.4 1.4 0 1 0 2.8 0a1.4 1.4 0 1 0 -2.8 0M166.10 379.2a1.4 1.4 0 1 0 2.8 0a1.4 1.4 0 1 0 -2.8 0M171.10 374.6a1.4 1.4 0 1 0 2.8 0a1.4 1.4 0 1 0 -2.8 0M175.10 369.6a1.4 1.4 0 1 0 2.8 0a1.4 1.4 0 1 0 -2.8 0M180.10 365.2a1.4 1.4 0 1 0 2.8 0a1.4 1.4 0 1 0 -2.8 0M184.10 363.4a1.4 1.4 0 1 0 2.8 0a1.4 1.4 0 1 0 -2.8 0M189.10 363.8a1.4 1.4 0 1 0 2.8 0a1.4 1.4 0 1 0 -2.8 0M194.10 364.4a1.4 1.4 0 1 0 2.8 0a1.4 1.4 0 1 0 -2.8 0M198.10 363.6a1.4 1.4 0 1 0 2.8 0a1.4 1.4 0 1 0 -2.8 0M203.10 360.5a1.4 1.4 0 1 0 2.8 0a1.4 1.4 0 1 0 -2.8 0M207.10 355.5a1.4 1.4 0 1 0 2.8 0a1.4 1.4 0 1 0 -2.8 0M212.10 349.6a1.4 1.4 0 1 0 2.8 0a1.4 1.4 0 1 0 -2.8 0M217.10 346.2a1.4 1.4 0 1 0 2.8 0a1.4 1.4 0 1 0 -2.8 0M221.10 348.6a1.4 1.4 0 1 0 2.8 0a1.4 1.4 0 1 0 -2.8 0M226.10 355.5a1.4 1.4 0 1 0 2.8 0a1.4 1.4 0 1 0 -2.8 0M231.10 365.2a1.4 1.4 0 1 0 2.8 0a1.4 1.4 0 1 0 -2.8 0M235.10 375.5a1.4 1.4 0 1 0 2.8 0a1.4 1.4 0 1 0 -2.8 0M240.10 384.2a1.4 1.4 0 1 0 2.8 0a1.4 1.4 0 1 0 -2.8 0M244.10 389.4a1.4 1.4 0 1 0 2.8 0a1.4 1.4 0 1 0 -2.8 0M249.10 389.4a1.4 1.4 0 1 0 2.8 0a1.4 1.4 0 1 0 -2.8 0M254.10 387.1a1.4 1.4 0 1 0 2.8 0a1.4 1.4 0 1 0 -2.8 0M258.10 385.0a1.4 1.4 0 1 0 2.8 0a1.4 1.4 0 1 0 -2.8 0M263.10 383.1a1.4 1.4 0 1 0 2.8 0a1.4 1.4 0 1 0 -2.8 0M268.10 383.1a1.4 1.4 0 1 0 2.8 0a1.4 1.4 0 1 0 -2.8 0M272.10 385.0a1.4 1.4 0 1 0 2.8 0a1.4 1.4 0 1 0 -2.8 0M277.10 386.2a1.4 1.4 0 1 0 2.8 0a1.4 1.4 0 1 0 -2.8 0M281.10 386.2a1.4 1.4 0 1 0 2.8 0a1.4 1.4 0 1 0 -2.8 0M286.10 383.4a1.4 1.4 0 1 0 2.8 0a1.4 1.4 0 1 0 -2.8 0M291.10 378.4a1.4 1.4 0 1 0 2.8 0a1.4 1.4 0 1 0 -2.8 0M295.10 373.8a1.4 1.4 0 1 0 2.8 0a1.4 1.4 0 1 0 -2.8 0M300.10 370.5a1.4 1.4 0 1 0 2.8 0a1.4 1.4 0 1 0 -2.8 0M305.10 369.6a1.4 1.4 0 1 0 2.8 0a1.4 1.4 0 1 0 -2.8 0M309.10 369.6a1.4 1.4 0 1 0 2.8 0a1.4 1.4 0 1 0 -2.8 0M314.10 367.5a1.4 1.4 0 1 0 2.8 0a1.4 1.4 0 1 0 -2.8 0M318.10 364.2a1.4 1.4 0 1 0 2.8 0a1.4 1.4 0 1 0 -2.8 0M323.10 363.4a1.4 1.4 0 1 0 2.8 0a1.4 1.4 0 1 0 -2.8 0M328.10 363.6a1.4 1.4 0 1 0 2.8 0a1.4 1.4 0 1 0 -2.8 0M332.10 366.8a1.4 1.4 0 1 0 2.8 0a1.4 1.4 0 1 0 -2.8 0M337.10 374.6a1.4 1.4 0 1 0 2.8 0a1.4 1.4 0 1 0 -2.8 0M342.10 383.4a1.4 1.4 0 1 0 2.8 0a1.4 1.4 0 1 0 -2.8 0M346.10 390.5a1.4 1.4 0 1 0 2.8 0a1.4 1.4 0 1 0 -2.8 0M351.10 392.5a1.4 1.4 0 1 0 2.8 0a1.4 1.4 0 1 0 -2.8 0M355.10 390.2a1.4 1.4 0 1 0 2.8 0a1.4 1.4 0 1 0 -2.8 0M360.10 388.1a1.4 1.4 0 1 0 2.8 0a1.4 1.4 0 1 0 -2.8 0M365.10 387.1a1.4 1.4 0 1 0 2.8 0a1.4 1.4 0 1 0 -2.8 0M369.10 389.0a1.4 1.4 0 1 0 2.8 0a1.4 1.4 0 1 0 -2.8 0M374.10 393.4a1.4 1.4 0 1 0 2.8 0a1.4 1.4 0 1 0 -2.8 0M379.10 397.1a1.4 1.4 0 1 0 2.8 0a1.4 1.4 0 1 0 -2.8 0M383.10 401.2a1.4 1.4 0 1 0 2.8 0a1.4 1.4 0 1 0 -2.8 0M388.10 405.2a1.4 1.4 0 1 0 2.8 0a1.4 1.4 0 1 0 -2.8 0M392.10 406.1a1.4 1.4 0 1 0 2.8 0a1.4 1.4 0 1 0 -2.8 0M397.10 408.1a1.4 1.4 0 1 0 2.8 0a1.4 1.4 0 1 0 -2.8 0M402.10 411.2a1.4 1.4 0 1 0 2.8 0a1.4 1.4 0 1 0 -2.8 0M406.10 412.4a1.4 1.4 0 1 0 2.8 0a1.4 1.4 0 1 0 -2.8 0M411.10 411.2a1.4 1.4 0 1 0 2.8 0a1.4 1.4 0 1 0 -2.8 0M416.10 407.1a1.4 1.4 0 1 0 2.8 0a1.4 1.4 0 1 0 -2.8 0M420.10 399.2a1.4 1.4 0 1 0 2.8 0a1.4 1.4 0 1 0 -2.8 0M425.10 389.0a1.4 1.4 0 1 0 2.8 0a1.4 1.4 0 1 0 -2.8 0M429.10 377.5a1.4 1.4 0 1 0 2.8 0a1.4 1.4 0 1 0 -2.8 0M434.10 366.5a1.4 1.4 0 1 0 2.8 0a1.4 1.4 0 1 0 -2.8 0M439.10 361.1a1.4 1.4 0 1 0 2.8 0a1.4 1.4 0 1 0 -2.8 0M443.10 361.1a1.4 1.4 0 1 0 2.8 0a1.4 1.4 0 1 0 -2.8 0M448.10 366.5a1.4 1.4 0 1 0 2.8 0a1.4 1.4 0 1 0 -2.8 0M453.10 373.4a1.4 1.4 0 1 0 2.8 0a1.4 1.4 0 1 0 -2.8 0M457.10 380.5a1.4 1.4 0 1 0 2.8 0a1.4 1.4 0 1 0 -2.8 0M462.10 385.2a1.4 1.4 0 1 0 2.8 0a1.4 1.4 0 1 0 -2.8 0M466.10 384.2a1.4 1.4 0 1 0 2.8 0a1.4 1.4 0 1 0 -2.8 0M471.10 380.5a1.4 1.4 0 1 0 2.8 0a1.4 1.4 0 1 0 -2.8 0M476.10 376.5a1.4 1.4 0 1 0 2.8 0a1.4 1.4 0 1 0 -2.8 0M480.10 373.4a1.4 1.4 0 1 0 2.8 0a1.4 1.4 0 1 0 -2.8 0M485.10 372.1a1.4 1.4 0 1 0 2.8 0a1.4 1.4 0 1 0 -2.8 0M489.10 371.2a1.4 1.4 0 1 0 2.8 0a1.4 1.4 0 1 0 -2.8 0M494.10 373.4a1.4 1.4 0 1 0 2.8 0a1.4 1.4 0 1 0 -2.8 0M499.10 375.2a1.4 1.4 0 1 0 2.8 0a1.4 1.4 0 1 0 -2.8 0M503.10 378.4a1.4 1.4 0 1 0 2.8 0a1.4 1.4 0 1 0 -2.8 0M508.10 380.5a1.4 1.4 0 1 0 2.8 0a1.4 1.4 0 1 0 -2.8 0M513.10 382.4a1.4 1.4 0 1 0 2.8 0a1.4 1.4 0 1 0 -2.8 0M517.10 382.4a1.4 1.4 0 1 0 2.8 0a1.4 1.4 0 1 0 -2.8 0M522.10 381.2a1.4 1.4 0 1 0 2.8 0a1.4 1.4 0 1 0 -2.8 0M526.10 379.2a1.4 1.4 0 1 0 2.8 0a1.4 1.4 0 1 0 -2.8 0M531.10 377.5a1.4 1.4 0 1 0 2.8 0a1.4 1.4 0 1 0 -2.8 0M536.10 374.6a1.4 1.4 0 1 0 2.8 0a1.4 1.4 0 1 0 -2.8 0M540.10 350.5a1.4 1.4 0 1 0 2.8 0a1.4 1.4 0 1 0 -2.8 0M545.10 341.6a1.4 1.4 0 1 0 2.8 0a1.4 1.4 0 1 0 -2.8 0M550.10 332.7a1.4 1.4 0 1 0 2.8 0a1.4 1.4 0 1 0 -2.8 0M554.10 317.4a1.4 1.4 0 1 0 2.8 0a1.4 1.4 0 1 0 -2.8 0M559.10 317.4a1.4 1.4 0 1 0 2.8 0a1.4 1.4 0 1 0 -2.8 0M563.10 316.6a1.4 1.4 0 1 0 2.8 0a1.4 1.4 0 1 0 -2.8 0M568.10 314.3a1.4 1.4 0 1 0 2.8 0a1.4 1.4 0 1 0 -2.8 0M573.10 312.5a1.4 1.4 0 1 0 2.8 0a1.4 1.4 0 1 0 -2.8 0M577.10 312.5a1.4 1.4 0 1 0 2.8 0a1.4 1.4 0 1 0 -2.8 0M582.10 313.3a1.4 1.4 0 1 0 2.8 0a1.4 1.4 0 1 0 -2.8 0M587.10 316.6a1.4 1.4 0 1 0 2.8 0a1.4 1.4 0 1 0 -2.8 0M591.10 317.4a1.4 1.4 0 1 0 2.8 0a1.4 1.4 0 1 0 -2.8 0M596.10 317.4a1.4 1.4 0 1 0 2.8 0a1.4 1.4 0 1 0 -2.8 0M600.10 316.6a1.4 1.4 0 1 0 2.8 0a1.4 1.4 0 1 0 -2.8 0M605.10 316.6a1.4 1.4 0 1 0 2.8 0a1.4 1.4 0 1 0 -2.8 0M610.10 315.6a1.4 1.4 0 1 0 2.8 0a1.4 1.4 0 1 0 -2.8 0M614.10 330.6a1.4 1.4 0 1 0 2.8 0a1.4 1.4 0 1 0 -2.8 0M619.10 337.5a1.4 1.4 0 1 0 2.8 0a1.4 1.4 0 1 0 -2.8 0M624.10 341.6a1.4 1.4 0 1 0 2.8 0a1.4 1.4 0 1 0 -2.8 0M628.10 349.6a1.4 1.4 0 1 0 2.8 0a1.4 1.4 0 1 0 -2.8 0M633.10 356.1a1.4 1.4 0 1 0 2.8 0a1.4 1.4 0 1 0 -2.8 0M637.10 364.5a1.4 1.4 0 1 0 2.8 0a1.4 1.4 0 1 0 -2.8 0M642.10 370.6a1.4 1.4 0 1 0 2.8 0a1.4 1.4 0 1 0 -2.8 0M647.10 377.4a1.4 1.4 0 1 0 2.8 0a1.4 1.4 0 1 0 -2.8 0M651.10 381.5a1.4 1.4 0 1 0 2.8 0a1.4 1.4 0 1 0 -2.8 0M656.10 391.3a1.4 1.4 0 1 0 2.8 0a1.4 1.4 0 1 0 -2.8 0M661.10 398.3a1.4 1.4 0 1 0 2.8 0a1.4 1.4 0 1 0 -2.8 0M665.10 454.2a1.4 1.4 0 1 0 2.8 0a1.4 1.4 0 1 0 -2.8 0M670.10 458.4a1.4 1.4 0 1 0 2.8 0a1.4 1.4 0 1 0 -2.8 0M674.10 462.0a1.4 1.4 0 1 0 2.8 0a1.4 1.4 0 1 0 -2.8 0M679.10 462.0a1.4 1.4 0 1 0 2.8 0a1.4 1.4 0 1 0 -2.8 0M684.10 462.0a1.4 1.4 0 1 0 2.8 0a1.4 1.4 0 1 0 -2.8 0M688.10 462.0a1.4 1.4 0 1 0 2.8 0a1.4 1.4 0 1 0 -2.8 0M693.10 462.0a1.4 1.4 0 1 0 2.8 0a1.4 1.4 0 1 0 -2.8 0M698.10 462.0a1.4 1.4 0 1 0 2.8 0a1.4 1.4 0 1 0 -2.8 0M702.10 462.0a1.4 1.4 0 1 0 2.8 0a1.4 1.4 0 1 0 -2.8 0M707.10 335.7a1.4 1.4 0 1 0 2.8 0a1.4 1.4 0 1 0 -2.8 0M711.10 339.9a1.4 1.4 0 1 0 2.8 0a1.4 1.4 0 1 0 -2.8 0M716.10 345.6a1.4 1.4 0 1 0 2.8 0a1.4 1.4 0 1 0 -2.8 0M721.10 348.8a1.4 1.4 0 1 0 2.8 0a1.4 1.4 0 1 0 -2.8 0M725.10 355.9a1.4 1.4 0 1 0 2.8 0a1.4 1.4 0 1 0 -2.8 0M730.10 357.5a1.4 1.4 0 1 0 2.8 0a1.4 1.4 0 1 0 -2.8 0M735.10 360.8a1.4 1.4 0 1 0 2.8 0a1.4 1.4 0 1 0 -2.8 0M739.10 362.8a1.4 1.4 0 1 0 2.8 0a1.4 1.4 0 1 0 -2.8 0M744.10 374.6a1.4 1.4 0 1 0 2.8 0a1.4 1.4 0 1 0 -2.8 0M748.10 368.8a1.4 1.4 0 1 0 2.8 0a1.4 1.4 0 1 0 -2.8 0M753.10 364.6a1.4 1.4 0 1 0 2.8 0a1.4 1.4 0 1 0 -2.8 0M758.10 361.5a1.4 1.4 0 1 0 2.8 0a1.4 1.4 0 1 0 -2.8 0M762.10 360.5a1.4 1.4 0 1 0 2.8 0a1.4 1.4 0 1 0 -2.8 0M767.10 363.4a1.4 1.4 0 1 0 2.8 0a1.4 1.4 0 1 0 -2.8 0M771.10 367.8a1.4 1.4 0 1 0 2.8 0a1.4 1.4 0 1 0 -2.8 0M776.10 374.6a1.4 1.4 0 1 0 2.8 0a1.4 1.4 0 1 0 -2.8 0M781.10 380.5a1.4 1.4 0 1 0 2.8 0a1.4 1.4 0 1 0 -2.8 0M785.10 384.4a1.4 1.4 0 1 0 2.8 0a1.4 1.4 0 1 0 -2.8 0M790.10 383.4a1.4 1.4 0 1 0 2.8 0a1.4 1.4 0 1 0 -2.8 0M795.10 377.5a1.4 1.4 0 1 0 2.8 0a1.4 1.4 0 1 0 -2.8 0M799.10 368.8a1.4 1.4 0 1 0 2.8 0a1.4 1.4 0 1 0 -2.8 0M804.10 358.6a1.4 1.4 0 1 0 2.8 0a1.4 1.4 0 1 0 -2.8 0M808.10 348.6a1.4 1.4 0 1 0 2.8 0a1.4 1.4 0 1 0 -2.8 0M813.10 342.5a1.4 1.4 0 1 0 2.8 0a1.4 1.4 0 1 0 -2.8 0M818.10 340.6a1.4 1.4 0 1 0 2.8 0a1.4 1.4 0 1 0 -2.8 0M822.10 343.8a1.4 1.4 0 1 0 2.8 0a1.4 1.4 0 1 0 -2.8 0M827.10 351.5a1.4 1.4 0 1 0 2.8 0a1.4 1.4 0 1 0 -2.8 0M832.10 359.6a1.4 1.4 0 1 0 2.8 0a1.4 1.4 0 1 0 -2.8 0M836.10 365.5a1.4 1.4 0 1 0 2.8 0a1.4 1.4 0 1 0 -2.8 0M841.10 369.6a1.4 1.4 0 1 0 2.8 0a1.4 1.4 0 1 0 -2.8 0M845.10 371.5a1.4 1.4 0 1 0 2.8 0a1.4 1.4 0 1 0 -2.8 0M850.10 372.5a1.4 1.4 0 1 0 2.8 0a1.4 1.4 0 1 0 -2.8 0M855.10 372.5a1.4 1.4 0 1 0 2.8 0a1.4 1.4 0 1 0 -2.8 0M859.10 374.4a1.4 1.4 0 1 0 2.8 0a1.4 1.4 0 1 0 -2.8 0M864.10 376.5a1.4 1.4 0 1 0 2.8 0a1.4 1.4 0 1 0 -2.8 0M869.10 378.8a1.4 1.4 0 1 0 2.8 0a1.4 1.4 0 1 0 -2.8 0M873.10 379.4a1.4 1.4 0 1 0 2.8 0a1.4 1.4 0 1 0 -2.8 0M878.10 380.2a1.4 1.4 0 1 0 2.8 0a1.4 1.4 0 1 0 -2.8 0M882.10 383.6a1.4 1.4 0 1 0 2.8 0a1.4 1.4 0 1 0 -2.8 0M887.10 389.4a1.4 1.4 0 1 0 2.8 0a1.4 1.4 0 1 0 -2.8 0M892.10 397.4a1.4 1.4 0 1 0 2.8 0a1.4 1.4 0 1 0 -2.8 0M896.10 403.4a1.4 1.4 0 1 0 2.8 0a1.4 1.4 0 1 0 -2.8 0M901.10 406.5a1.4 1.4 0 1 0 2.8 0a1.4 1.4 0 1 0 -2.8 0M906.10 407.5a1.4 1.4 0 1 0 2.8 0a1.4 1.4 0 1 0 -2.8 0M910.10 405.2a1.4 1.4 0 1 0 2.8 0a1.4 1.4 0 1 0 -2.8 0M915.10 401.2a1.4 1.4 0 1 0 2.8 0a1.4 1.4 0 1 0 -2.8 0M919.10 397.4a1.4 1.4 0 1 0 2.8 0a1.4 1.4 0 1 0 -2.8 0M924.10 395.5a1.4 1.4 0 1 0 2.8 0a1.4 1.4 0 1 0 -2.8 0M929.10 395.2a1.4 1.4 0 1 0 2.8 0a1.4 1.4 0 1 0 -2.8 0M933.10 396.5a1.4 1.4 0 1 0 2.8 0a1.4 1.4 0 1 0 -2.8 0M938.10 396.5a1.4 1.4 0 1 0 2.8 0a1.4 1.4 0 1 0 -2.8 0M943.10 396.5a1.4 1.4 0 1 0 2.8 0a1.4 1.4 0 1 0 -2.8 0M947.10 395.5a1.4 1.4 0 1 0 2.8 0a1.4 1.4 0 1 0 -2.8 0M952.10 393.4a1.4 1.4 0 1 0 2.8 0a1.4 1.4 0 1 0 -2.8 0M956.10 389.6a1.4 1.4 0 1 0 2.8 0a1.4 1.4 0 1 0 -2.8 0M961.10 384.4a1.4 1.4 0 1 0 2.8 0a1.4 1.4 0 1 0 -2.8 0M966.10 377.4a1.4 1.4 0 1 0 2.8 0a1.4 1.4 0 1 0 -2.8 0M970.10 371.5a1.4 1.4 0 1 0 2.8 0a1.4 1.4 0 1 0 -2.8 0M975.10 367.1a1.4 1.4 0 1 0 2.8 0a1.4 1.4 0 1 0 -2.8 0M980.10 366.2a1.4 1.4 0 1 0 2.8 0a1.4 1.4 0 1 0 -2.8 0M984.10 368.8a1.4 1.4 0 1 0 2.8 0a1.4 1.4 0 1 0 -2.8 0M989.10 373.4a1.4 1.4 0 1 0 2.8 0a1.4 1.4 0 1 0 -2.8 0M993.10 378.4a1.4 1.4 0 1 0 2.8 0a1.4 1.4 0 1 0 -2.8 0M998.10 382.5a1.4 1.4 0 1 0 2.8 0a1.4 1.4 0 1 0 -2.8 0M1003.10 385.2a1.4 1.4 0 1 0 2.8 0a1.4 1.4 0 1 0 -2.8 0M1007.10 386.5a1.4 1.4 0 1 0 2.8 0a1.4 1.4 0 1 0 -2.8 0M1012.10 384.4a1.4 1.4 0 1 0 2.8 0a1.4 1.4 0 1 0 -2.8 0M1017.10 379.4a1.4 1.4 0 1 0 2.8 0a1.4 1.4 0 1 0 -2.8 0M1021.10 375.5a1.4 1.4 0 1 0 2.8 0a1.4 1.4 0 1 0 -2.8 0M1026.10 372.5a1.4 1.4 0 1 0 2.8 0a1.4 1.4 0 1 0 -2.8 0M1030.10 371.5a1.4 1.4 0 1 0 2.8 0a1.4 1.4 0 1 0 -2.8 0M1035.10 372.5a1.4 1.4 0 1 0 2.8 0a1.4 1.4 0 1 0 -2.8 0M1040.10 376.5a1.4 1.4 0 1 0 2.8 0a1.4 1.4 0 1 0 -2.8 0M1044.10 380.5a1.4 1.4 0 1 0 2.8 0a1.4 1.4 0 1 0 -2.8 0M1049.10 383.4a1.4 1.4 0 1 0 2.8 0a1.4 1.4 0 1 0 -2.8 0M1054.10 384.4a1.4 1.4 0 1 0 2.8 0a1.4 1.4 0 1 0 -2.8 0M1058.10 381.5a1.4 1.4 0 1 0 2.8 0a1.4 1.4 0 1 0 -2.8 0M1063.10 376.5a1.4 1.4 0 1 0 2.8 0a1.4 1.4 0 1 0 -2.8 0M1067.10 367.1a1.4 1.4 0 1 0 2.8 0a1.4 1.4 0 1 0 -2.8 0M1072.10 358.6a1.4 1.4 0 1 0 2.8 0a1.4 1.4 0 1 0 -2.8 0M1077.10 352.5a1.4 1.4 0 1 0 2.8 0a1.4 1.4 0 1 0 -2.8 0M1081.10 350.5a1.4 1.4 0 1 0 2.8 0a1.4 1.4 0 1 0 -2.8 0M1086.10 352.5a1.4 1.4 0 1 0 2.8 0a1.4 1.4 0 1 0 -2.8 0M1090.10 358.6a1.4 1.4 0 1 0 2.8 0a1.4 1.4 0 1 0 -2.8 0M1095.10 367.5a1.4 1.4 0 1 0 2.8 0a1.4 1.4 0 1 0 -2.8 0M1100.10 376.5a1.4 1.4 0 1 0 2.8 0a1.4 1.4 0 1 0 -2.8 0M1104.10 383.4a1.4 1.4 0 1 0 2.8 0a1.4 1.4 0 1 0 -2.8 0M1109.10 388.4a1.4 1.4 0 1 0 2.8 0a1.4 1.4 0 1 0 -2.8 0M1114.10 392.4a1.4 1.4 0 1 0 2.8 0a1.4 1.4 0 1 0 -2.8 0M1118.10 396.5a1.4 1.4 0 1 0 2.8 0a1.4 1.4 0 1 0 -2.8 0M1123.10 398.4a1.4 1.4 0 1 0 2.8 0a1.4 1.4 0 1 0 -2.8 0M1127.10 398.4a1.4 1.4 0 1 0 2.8 0a1.4 1.4 0 1 0 -2.8 0M1132.10 396.5a1.4 1.4 0 1 0 2.8 0a1.4 1.4 0 1 0 -2.8 0M1137.10 393.4a1.4 1.4 0 1 0 2.8 0a1.4 1.4 0 1 0 -2.8 0M1141.10 390.2a1.4 1.4 0 1 0 2.8 0a1.4 1.4 0 1 0 -2.8 0M1146.10 389.2a1.4 1.4 0 1 0 2.8 0a1.4 1.4 0 1 0 -2.8 0M1151.10 392.4a1.4 1.4 0 1 0 2.8 0a1.4 1.4 0 1 0 -2.8 0M1155.10 399.4a1.4 1.4 0 1 0 2.8 0a1.4 1.4 0 1 0 -2.8 0M1160.10 407.4a1.4 1.4 0 1 0 2.8 0a1.4 1.4 0 1 0 -2.8 0M1164.10 413.4a1.4 1.4 0 1 0 2.8 0a1.4 1.4 0 1 0 -2.8 0M1169.10 414.6a1.4 1.4 0 1 0 2.8 0a1.4 1.4 0 1 0 -2.8 0M1174.10 412.4a1.4 1.4 0 1 0 2.8 0a1.4 1.4 0 1 0 -2.8 0M1178.10 406.2a1.4 1.4 0 1 0 2.8 0a1.4 1.4 0 1 0 -2.8 0M1183.10 397.4a1.4 1.4 0 1 0 2.8 0a1.4 1.4 0 1 0 -2.8 0M1188.10 388.4a1.4 1.4 0 1 0 2.8 0a1.4 1.4 0 1 0 -2.8 0M1192.10 380.2a1.4 1.4 0 1 0 2.8 0a1.4 1.4 0 1 0 -2.8 0M1197.10 374.6a1.4 1.4 0 1 0 2.8 0a1.4 1.4 0 1 0 -2.8 0M1201.10 370.2a1.4 1.4 0 1 0 2.8 0a1.4 1.4 0 1 0 -2.8 0M1206.10 370.2a1.4 1.4 0 1 0 2.8 0a1.4 1.4 0 1 0 -2.8 0M1211.10 371.5a1.4 1.4 0 1 0 2.8 0a1.4 1.4 0 1 0 -2.8 0M1215.10 373.4a1.4 1.4 0 1 0 2.8 0a1.4 1.4 0 1 0 -2.8 0M1220.10 374.6a1.4 1.4 0 1 0 2.8 0a1.4 1.4 0 1 0 -2.8 0M1225.10 373.4a1.4 1.4 0 1 0 2.8 0a1.4 1.4 0 1 0 -2.8 0M1229.10 368.4a1.4 1.4 0 1 0 2.8 0a1.4 1.4 0 1 0 -2.8 0M1234.10 361.5a1.4 1.4 0 1 0 2.8 0a1.4 1.4 0 1 0 -2.8 0M1238.10 353.6a1.4 1.4 0 1 0 2.8 0a1.4 1.4 0 1 0 -2.8 0M1243.10 347.5a1.4 1.4 0 1 0 2.8 0a1.4 1.4 0 1 0 -2.8 0M1248.10 344.6a1.4 1.4 0 1 0 2.8 0a1.4 1.4 0 1 0 -2.8 0M1252.10 344.6a1.4 1.4 0 1 0 2.8 0a1.4 1.4 0 1 0 -2.8 0M1257.10 348.4a1.4 1.4 0 1 0 2.8 0a1.4 1.4 0 1 0 -2.8 0M1262.10 354.6a1.4 1.4 0 1 0 2.8 0a1.4 1.4 0 1 0 -2.8 0M1266.10 361.5a1.4 1.4 0 1 0 2.8 0a1.4 1.4 0 1 0 -2.8 0M1271.10 367.5a1.4 1.4 0 1 0 2.8 0a1.4 1.4 0 1 0 -2.8 0M1275.10 370.2a1.4 1.4 0 1 0 2.8 0a1.4 1.4 0 1 0 -2.8 0M1280.10 371.5a1.4 1.4 0 1 0 2.8 0a1.4 1.4 0 1 0 -2.8 0M1285.10 369.6a1.4 1.4 0 1 0 2.8 0a1.4 1.4 0 1 0 -2.8 0M1289.10 368.4a1.4 1.4 0 1 0 2.8 0a1.4 1.4 0 1 0 -2.8 0M1294.10 368.4a1.4 1.4 0 1 0 2.8 0a1.4 1.4 0 1 0 -2.8 0M1299.10 371.5a1.4 1.4 0 1 0 2.8 0a1.4 1.4 0 1 0 -2.8 0M1303.10 377.1a1.4 1.4 0 1 0 2.8 0a1.4 1.4 0 1 0 -2.8 0M1308.10 384.2a1.4 1.4 0 1 0 2.8 0a1.4 1.4 0 1 0 -2.8 0M1312.10 390.2a1.4 1.4 0 1 0 2.8 0a1.4 1.4 0 1 0 -2.8 0M1317.10 395.5a1.4 1.4 0 1 0 2.8 0a1.4 1.4 0 1 0 -2.8 0M1322.10 397.5a1.4 1.4 0 1 0 2.8 0a1.4 1.4 0 1 0 -2.8 0M1326.10 397.4a1.4 1.4 0 1 0 2.8 0a1.4 1.4 0 1 0 -2.8 0M1331.10 395.5a1.4 1.4 0 1 0 2.8 0a1.4 1.4 0 1 0 -2.8 0M1336.10 393.4a1.4 1.4 0 1 0 2.8 0a1.4 1.4 0 1 0 -2.8 0M1340.10 391.1a1.4 1.4 0 1 0 2.8 0a1.4 1.4 0 1 0 -2.8 0M1345.10 390.2a1.4 1.4 0 1 0 2.8 0a1.4 1.4 0 1 0 -2.8 0M1349.10 390.2a1.4 1.4 0 1 0 2.8 0a1.4 1.4 0 1 0 -2.8 0M1354.10 391.1a1.4 1.4 0 1 0 2.8 0a1.4 1.4 0 1 0 -2.8 0M1359.10 393.4a1.4 1.4 0 1 0 2.8 0a1.4 1.4 0 1 0 -2.8 0M1363.10 395.5a1.4 1.4 0 1 0 2.8 0a1.4 1.4 0 1 0 -2.8 0M1368.10 398.4a1.4 1.4 0 1 0 2.8 0a1.4 1.4 0 1 0 -2.8 0M1372.10 401.2a1.4 1.4 0 1 0 2.8 0a1.4 1.4 0 1 0 -2.8 0M1377.10 405.2a1.4 1.4 0 1 0 2.8 0a1.4 1.4 0 1 0 -2.8 0M1382.10 408.4a1.4 1.4 0 1 0 2.8 0a1.4 1.4 0 1 0 -2.8 0M1386.10 410.5a1.4 1.4 0 1 0 2.8 0a1.4 1.4 0 1 0 -2.8 0M1391.10 409.4a1.4 1.4 0 1 0 2.8 0a1.4 1.4 0 1 0 -2.8 0M1396.10 404.4a1.4 1.4 0 1 0 2.8 0a1.4 1.4 0 1 0 -2.8 0M1400.10 396.5a1.4 1.4 0 1 0 2.8 0a1.4 1.4 0 1 0 -2.8 0M1405.10 388.4a1.4 1.4 0 1 0 2.8 0a1.4 1.4 0 1 0 -2.8 0M1409.10 382.4a1.4 1.4 0 1 0 2.8 0a1.4 1.4 0 1 0 -2.8 0M1414.10 379.4a1.4 1.4 0 1 0 2.8 0a1.4 1.4 0 1 0 -2.8 0M1419.10 381.2a1.4 1.4 0 1 0 2.8 0a1.4 1.4 0 1 0 -2.8 0M1423.10 387.1a1.4 1.4 0 1 0 2.8 0a1.4 1.4 0 1 0 -2.8 0M1428.10 393.4a1.4 1.4 0 1 0 2.8 0a1.4 1.4 0 1 0 -2.8 0M1433.10 397.5a1.4 1.4 0 1 0 2.8 0a1.4 1.4 0 1 0 -2.8 0M1437.10 396.5a1.4 1.4 0 1 0 2.8 0a1.4 1.4 0 1 0 -2.8 0M1442.10 391.2a1.4 1.4 0 1 0 2.8 0a1.4 1.4 0 1 0 -2.8 0M1446.10 383.4a1.4 1.4 0 1 0 2.8 0a1.4 1.4 0 1 0 -2.8 0M1451.10 373.4a1.4 1.4 0 1 0 2.8 0a1.4 1.4 0 1 0 -2.8 0M1456.10 364.6a1.4 1.4 0 1 0 2.8 0a1.4 1.4 0 1 0 -2.8 0M1460.10 357.5a1.4 1.4 0 1 0 2.8 0a1.4 1.4 0 1 0 -2.8 0M1465.10 353.4a1.4 1.4 0 1 0 2.8 0a1.4 1.4 0 1 0 -2.8 0M1470.10 353.4a1.4 1.4 0 1 0 2.8 0a1.4 1.4 0 1 0 -2.8 0M1474.10 358.6a1.4 1.4 0 1 0 2.8 0a1.4 1.4 0 1 0 -2.8 0M1479.10 365.5a1.4 1.4 0 1 0 2.8 0a1.4 1.4 0 1 0 -2.8 0M1483.10 372.5a1.4 1.4 0 1 0 2.8 0a1.4 1.4 0 1 0 -2.8 0M1488.10 376.5a1.4 1.4 0 1 0 2.8 0a1.4 1.4 0 1 0 -2.8 0M1493.10 377.8a1.4 1.4 0 1 0 2.8 0a1.4 1.4 0 1 0 -2.8 0M1497.10 374.4a1.4 1.4 0 1 0 2.8 0a1.4 1.4 0 1 0 -2.8 0M1502.10 367.5a1.4 1.4 0 1 0 2.8 0a1.4 1.4 0 1 0 -2.8 0M1507.10 357.5a1.4 1.4 0 1 0 2.8 0a1.4 1.4 0 1 0 -2.8 0M1511.10 348.4a1.4 1.4 0 1 0 2.8 0a1.4 1.4 0 1 0 -2.8 0M1516.10 342.4a1.4 1.4 0 1 0 2.8 0a1.4 1.4 0 1 0 -2.8 0M1520.10 340.2a1.4 1.4 0 1 0 2.8 0a1.4 1.4 0 1 0 -2.8 0M1525.10 342.4a1.4 1.4 0 1 0 2.8 0a1.4 1.4 0 1 0 -2.8 0M1530.10 347.5a1.4 1.4 0 1 0 2.8 0a1.4 1.4 0 1 0 -2.8 0M1534.10 353.6a1.4 1.4 0 1 0 2.8 0a1.4 1.4 0 1 0 -2.8 0M1539.10 360.9a1.4 1.4 0 1 0 2.8 0a1.4 1.4 0 1 0 -2.8 0M1544.10 366.2a1.4 1.4 0 1 0 2.8 0a1.4 1.4 0 1 0 -2.8 0M1548.10 370.2a1.4 1.4 0 1 0 2.8 0a1.4 1.4 0 1 0 -2.8 0M1553.10 373.4a1.4 1.4 0 1 0 2.8 0a1.4 1.4 0 1 0 -2.8 0M1557.10 377.4a1.4 1.4 0 1 0 2.8 0a1.4 1.4 0 1 0 -2.8 0M1562.10 382.4a1.4 1.4 0 1 0 2.8 0a1.4 1.4 0 1 0 -2.8 0M1567.10 387.4a1.4 1.4 0 1 0 2.8 0a1.4 1.4 0 1 0 -2.8 0M1571.10 391.2a1.4 1.4 0 1 0 2.8 0a1.4 1.4 0 1 0 -2.8 0M1576.10 393.4a1.4 1.4 0 1 0 2.8 0a1.4 1.4 0 1 0 -2.8 0M1581.10 392.4a1.4 1.4 0 1 0 2.8 0a1.4 1.4 0 1 0 -2.8 0M1585.10 390.2a1.4 1.4 0 1 0 2.8 0a1.4 1.4 0 1 0 -2.8 0M1590.10 387.1a1.4 1.4 0 1 0 2.8 0a1.4 1.4 0 1 0 -2.8 0M1594.10 386.1a1.4 1.4 0 1 0 2.8 0a1.4 1.4 0 1 0 -2.8 0M1599.10 388.4a1.4 1.4 0 1 0 2.8 0a1.4 1.4 0 1 0 -2.8 0M1604.10 392.4a1.4 1.4 0 1 0 2.8 0a1.4 1.4 0 1 0 -2.8 0M1608.10 397.5a1.4 1.4 0 1 0 2.8 0a1.4 1.4 0 1 0 -2.8 0M1613.10 401.2a1.4 1.4 0 1 0 2.8 0a1.4 1.4 0 1 0 -2.8 0M1618.10 404.4a1.4 1.4 0 1 0 2.8 0a1.4 1.4 0 1 0 -2.8 0M1622.10 404.4a1.4 1.4 0 1 0 2.8 0a1.4 1.4 0 1 0 -2.8 0M1627.10 402.4a1.4 1.4 0 1 0 2.8 0a1.4 1.4 0 1 0 -2.8 0M1631.10 400.2a1.4 1.4 0 1 0 2.8 0a1.4 1.4 0 1 0 -2.8 0M1636.10 401.2a1.4 1.4 0 1 0 2.8 0a1.4 1.4 0 1 0 -2.8 0M1641.10 404.4a1.4 1.4 0 1 0 2.8 0a1.4 1.4 0 1 0 -2.8 0M1645.10 407.4a1.4 1.4 0 1 0 2.8 0a1.4 1.4 0 1 0 -2.8 0M1650.10 409.4a1.4 1.4 0 1 0 2.8 0a1.4 1.4 0 1 0 -2.8 0M1654.10 409.4a1.4 1.4 0 1 0 2.8 0a1.4 1.4 0 1 0 -2.8 0M1659.10 405.2a1.4 1.4 0 1 0 2.8 0a1.4 1.4 0 1 0 -2.8 0M1664.10 396.5a1.4 1.4 0 1 0 2.8 0a1.4 1.4 0 1 0 -2.8 0M1668.10 386.2a1.4 1.4 0 1 0 2.8 0a1.4 1.4 0 1 0 -2.8 0M1673.10 378.4a1.4 1.4 0 1 0 2.8 0a1.4 1.4 0 1 0 -2.8 0M1678.10 375.5a1.4 1.4 0 1 0 2.8 0a1.4 1.4 0 1 0 -2.8 0M1682.10 375.5a1.4 1.4 0 1 0 2.8 0a1.4 1.4 0 1 0 -2.8 0M1687.10 377.4a1.4 1.4 0 1 0 2.8 0a1.4 1.4 0 1 0 -2.8 0M1691.10 382.4a1.4 1.4 0 1 0 2.8 0a1.4 1.4 0 1 0 -2.8 0M1696.10 386.2a1.4 1.4 0 1 0 2.8 0a1.4 1.4 0 1 0 -2.8 0M1701.10 389.4a1.4 1.4 0 1 0 2.8 0a1.4 1.4 0 1 0 -2.8 0M1705.10 389.4a1.4 1.4 0 1 0 2.8 0a1.4 1.4 0 1 0 -2.8 0M1710.10 387.1a1.4 1.4 0 1 0 2.8 0a1.4 1.4 0 1 0 -2.8 0M1715.10 383.4a1.4 1.4 0 1 0 2.8 0a1.4 1.4 0 1 0 -2.8 0M1719.10 377.4a1.4 1.4 0 1 0 2.8 0a1.4 1.4 0 1 0 -2.8 0M1724.10 370.2a1.4 1.4 0 1 0 2.8 0a1.4 1.4 0 1 0 -2.8 0M1728.10 363.4a1.4 1.4 0 1 0 2.8 0a1.4 1.4 0 1 0 -2.8 0M1733.10 358.6a1.4 1.4 0 1 0 2.8 0a1.4 1.4 0 1 0 -2.8 0M1738.10 356.2a1.4 1.4 0 1 0 2.8 0a1.4 1.4 0 1 0 -2.8 0M1742.10 358.6a1.4 1.4 0 1 0 2.8 0a1.4 1.4 0 1 0 -2.8 0M1747.10 362.5a1.4 1.4 0 1 0 2.8 0a1.4 1.4 0 1 0 -2.8 0M1752.10 366.2a1.4 1.4 0 1 0 2.8 0a1.4 1.4 0 1 0 -2.8 0M1756.10 368.8a1.4 1.4 0 1 0 2.8 0a1.4 1.4 0 1 0 -2.8 0M1761.10 370.2a1.4 1.4 0 1 0 2.8 0a1.4 1.4 0 1 0 -2.8 0M1765.10 369.6a1.4 1.4 0 1 0 2.8 0a1.4 1.4 0 1 0 -2.8 0M1770.10 369.6a1.4 1.4 0 1 0 2.8 0a1.4 1.4 0 1 0 -2.8 0M1775.10 369.6a1.4 1.4 0 1 0 2.8 0a1.4 1.4 0 1 0 -2.8 0M1779.10 370.4a1.4 1.4 0 1 0 2.8 0a1.4 1.4 0 1 0 -2.8 0M1784.10 372.6a1.4 1.4 0 1 0 2.8 0a1.4 1.4 0 1 0 -2.8 0M1789.10 374.6a1.4 1.4 0 1 0 2.8 0a1.4 1.4 0 1 0 -2.8 0M1793.10 377.6a1.4 1.4 0 1 0 2.8 0a1.4 1.4 0 1 0 -2.8 0M1798.10 379.2a1.4 1.4 0 1 0 2.8 0a1.4 1.4 0 1 0 -2.8 0M1802.10 380.4a1.4 1.4 0 1 0 2.8 0a1.4 1.4 0 1 0 -2.8 0M1807.10 382.3a1.4 1.4 0 1 0 2.8 0a1.4 1.4 0 1 0 -2.8 0M1812.10 384.2a1.4 1.4 0 1 0 2.8 0a1.4 1.4 0 1 0 -2.8 0M1816.10 387.3a1.4 1.4 0 1 0 2.8 0a1.4 1.4 0 1 0 -2.8 0M1821.10 389.6a1.4 1.4 0 1 0 2.8 0a1.4 1.4 0 1 0 -2.8 0M1826.10 390.7a1.4 1.4 0 1 0 2.8 0a1.4 1.4 0 1 0 -2.8 0M1830.10 390.7a1.4 1.4 0 1 0 2.8 0a1.4 1.4 0 1 0 -2.8 0M1835.10 386.2a1.4 1.4 0 1 0 2.8 0a1.4 1.4 0 1 0 -2.8 0M1839.10 379.4a1.4 1.4 0 1 0 2.8 0a1.4 1.4 0 1 0 -2.8 0M1844.10 369.6a1.4 1.4 0 1 0 2.8 0a1.4 1.4 0 1 0 -2.8 0M1849.10 359.6a1.4 1.4 0 1 0 2.8 0a1.4 1.4 0 1 0 -2.8 0M1853.10 352.6a1.4 1.4 0 1 0 2.8 0a1.4 1.4 0 1 0 -2.8 0M1858.10 350.4a1.4 1.4 0 1 0 2.8 0a1.4 1.4 0 1 0 -2.8 0M1863.10 353.6a1.4 1.4 0 1 0 2.8 0a1.4 1.4 0 1 0 -2.8 0M1867.10 360.5a1.4 1.4 0 1 0 2.8 0a1.4 1.4 0 1 0 -2.8 0M1872.10 371.5a1.4 1.4 0 1 0 2.8 0a1.4 1.4 0 1 0 -2.8 0M1876.10 380.4a1.4 1.4 0 1 0 2.8 0a1.4 1.4 0 1 0 -2.8 0M1881.10 386.2a1.4 1.4 0 1 0 2.8 0a1.4 1.4 0 1 0 -2.8 0M1886.10 388.4a1.4 1.4 0 1 0 2.8 0a1.4 1.4 0 1 0 -2.8 0M1890.10 386.2a1.4 1.4 0 1 0 2.8 0a1.4 1.4 0 1 0 -2.8 0M1895.10 381.5a1.4 1.4 0 1 0 2.8 0a1.4 1.4 0 1 0 -2.8 0M1900.10 377.3a1.4 1.4 0 1 0 2.8 0a1.4 1.4 0 1 0 -2.8 0M1904.10 376.2a1.4 1.4 0 1 0 2.8 0a1.4 1.4 0 1 0 -2.8 0M1909.10 380.2a1.4 1.4 0 1 0 2.8 0a1.4 1.4 0 1 0 -2.8 0" fill="none" stroke="#000" stroke-width="1"/><path d="M130.5 381.5V402.5M135.5 381.5V400.2M139.5 381.5V397.1M144.5 381.5V393.4M148.5 381.5V390.2M153.5 381.5V388.0M158.5 381.5V385.0M162.5 381.5V382.1M167.5 379.2V381.5M172.5 374.6V381.5M176.5 369.6V381.5M181.5 365.2V381.5M185.5 363.4V381.5M190.5 363.8V381.5M195.5 364.4V381.5M199.5 363.6V381.5M204.5 360.5V381.5M208.5 355.5V381.5M213.5 349.6V381.5M218.5 346.2V381.5M222.5 348.6V381.5M227.5 355.5V381.5M232.5 365.2V381.5M236.5 375.5V381.5M241.5 381.5V384.2M245.5 381.5V389.4M250.5 381.5V389.4M255.5 381.5V387.1M259.5 381.5V385.0M264.5 381.5V383.1M269.5 381.5V383.1M273.5 381.5V385.0M278.5 381.5V386.2M282.5 381.5V386.2M287.5 381.5V383.4M292.5 378.4V381.5M296.5 373.8V381.5M301.5 370.5V381.5M306.5 369.6V381.5M310.5 369.6V381.5M315.5 367.5V381.5M319.5 364.2V381.5M324.5 363.4V381.5M329.5 363.6V381.5M333.5 366.8V381.5M338.5 374.6V381.5M343.5 381.5V383.4M347.5 381.5V390.5M352.5 381.5V392.5M356.5 381.5V390.2M361.5 381.5V388.1M366.5 381.5V387.1M370.5 381.5V389.0M375.5 381.5V393.4M380.5 381.5V397.1M384.5 381.5V401.2M389.5 381.5V405.2M393.5 381.5V406.1M398.5 381.5V408.1M403.5 381.5V411.2M407.5 381.5V412.4M412.5 381.5V411.2M417.5 381.5V407.1M421.5 381.5V399.2M426.5 381.5V389.0M430.5 377.5V381.5M435.5 366.5V381.5M440.5 361.1V381.5M444.5 361.1V381.5M449.5 366.5V381.5M454.5 373.4V381.5M458.5 380.5V381.5M463.5 381.5V385.2M467.5 381.5V384.2M472.5 380.5V381.5M477.5 376.5V381.5M481.5 373.4V381.5M486.5 372.1V381.5M490.5 371.2V381.5M495.5 373.4V381.5M500.5 375.2V381.5M504.5 378.4V381.5M509.5 380.5V381.5M514.5 381.5V382.4M518.5 381.5V382.4M523.5 381.2V381.5M527.5 379.2V381.5M532.5 377.5V381.5M537.5 374.6V381.5M541.5 350.5V381.5M546.5 341.6V381.5M551.5 332.7V381.5M555.5 317.4V381.5M560.5 317.4V381.5M564.5 316.6V381.5M569.5 314.3V381.5M574.5 312.5V381.5M578.5 312.5V381.5M583.5 313.3V381.5M588.5 316.6V381.5M592.5 317.4V381.5M597.5 317.4V381.5M601.5 316.6V381.5M606.5 316.6V381.5M611.5 315.6V381.5M615.5 330.6V381.5M620.5 337.5V381.5M625.5 341.6V381.5M629.5 349.6V381.5M634.5 356.1V381.5M638.5 364.5V381.5M643.5 370.6V381.5M648.5 377.4V381.5M652.5 381.5V381.5M657.5 381.5V391.3M662.5 381.5V398.3M666.5 381.5V454.2M671.5 381.5V458.4M675.5 381.5V462.0M680.5 381.5V462.0M685.5 381.5V462.0M689.5 381.5V462.0M694.5 381.5V462.0M699.5 381.5V462.0M703.5 381.5V462.0M708.5 335.7V381.5M712.5 339.9V381.5M717.5 345.6V381.5M722.5 348.8V381.5M726.5 355.9V381.5M731.5 357.5V381.5M736.5 360.8V381.5M740.5 362.8V381.5M745.5 374.6V381.5M749.5 368.8V381.5M754.5 364.6V381.5M759.5 361.5V381.5M763.5 360.5V381.5M768.5 363.4V381.5M772.5 367.8V381.5M777.5 374.6V381.5M782.5 380.5V381.5M786.5 381.5V384.4M791.5 381.5V383.4M796.5 377.5V381.5M800.5 368.8V381.5M805.5 358.6V381.5M809.5 348.6V381.5M814.5 342.5V381.5M819.5 340.6V381.5M823.5 343.8V381.5M828.5 351.5V381.5M833.5 359.6V381.5M837.5 365.5V381.5M842.5 369.6V381.5M846.5 371.5V381.5M851.5 372.5V381.5M856.5 372.5V381.5M860.5 374.4V381.5M865.5 376.5V381.5M870.5 378.8V381.5M874.5 379.4V381.5M879.5 380.2V381.5M883.5 381.5V383.6M888.5 381.5V389.4M893.5 381.5V397.4M897.5 381.5V403.4M902.5 381.5V406.5M907.5 381.5V407.5M911.5 381.5V405.2M916.5 381.5V401.2M920.5 381.5V397.4M925.5 381.5V395.5M930.5 381.5V395.2M934.5 381.5V396.5M939.5 381.5V396.5M944.5 381.5V396.5M948.5 381.5V395.5M953.5 381.5V393.4M957.5 381.5V389.6M962.5 381.5V384.4M967.5 377.4V381.5M971.5 371.5V381.5M976.5 367.1V381.5M981.5 366.2V381.5M985.5 368.8V381.5M990.5 373.4V381.5M994.5 378.4V381.5M999.5 381.5V382.5M1004.5 381.5V385.2M1008.5 381.5V386.5M1013.5 381.5V384.4M1018.5 379.4V381.5M1022.5 375.5V381.5M1027.5 372.5V381.5M1031.5 371.5V381.5M1036.5 372.5V381.5M1041.5 376.5V381.5M1045.5 380.5V381.5M1050.5 381.5V383.4M1055.5 381.5V384.4M1059.5 381.5V381.5M1064.5 376.5V381.5M1068.5 367.1V381.5M1073.5 358.6V381.5M1078.5 352.5V381.5M1082.5 350.5V381.5M1087.5 352.5V381.5M1091.5 358.6V381.5M1096.5 367.5V381.5M1101.5 376.5V381.5M1105.5 381.5V383.4M1110.5 381.5V388.4M1115.5 381.5V392.4M1119.5 381.5V396.5M1124.5 381.5V398.4M1128.5 381.5V398.4M1133.5 381.5V396.5M1138.5 381.5V393.4M1142.5 381.5V390.2M1147.5 381.5V389.2M1152.5 381.5V392.4M1156.5 381.5V399.4M1161.5 381.5V407.4M1165.5 381.5V413.4M1170.5 381.5V414.6M1175.5 381.5V412.4M1179.5 381.5V406.2M1184.5 381.5V397.4M1189.5 381.5V388.4M1193.5 380.2V381.5M1198.5 374.6V381.5M1202.5 370.2V381.5M1207.5 370.2V381.5M1212.5 371.5V381.5M1216.5 373.4V381.5M1221.5 374.6V381.5M1226.5 373.4V381.5M1230.5 368.4V381.5M1235.5 361.5V381.5M1239.5 353.6V381.5M1244.5 347.5V381.5M1249.5 344.6V381.5M1253.5 344.6V381.5M1258.5 348.4V381.5M1263.5 354.6V381.5M1267.5 361.5V381.5M1272.5 367.5V381.5M1276.5 370.2V381.5M1281.5 371.5V381.5M1286.5 369.6V381.5M1290.5 368.4V381.5M1295.5 368.4V381.5M1300.5 371.5V381.5M1304.5 377.1V381.5M1309.5 381.5V384.2M1313.5 381.5V390.2M1318.5 381.5V395.5M1323.5 381.5V397.5M1327.5 381.5V397.4M1332.5 381.5V395.5M1337.5 381.5V393.4M1341.5 381.5V391.1M1346.5 381.5V390.2M1350.5 381.5V390.2M1355.5 381.5V391.1M1360.5 381.5V393.4M1364.5 381.5V395.5M1369.5 381.5V398.4M1373.5 381.5V401.2M1378.5 381.5V405.2M1383.5 381.5V408.4M1387.5 381.5V410.5M1392.5 381.5V409.4M1397.5 381.5V404.4M1401.5 381.5V396.5M1406.5 381.5V388.4M1410.5 381.5V382.4M1415.5 379.4V381.5M1420.5 381.2V381.5M1424.5 381.5V387.1M1429.5 381.5V393.4M1434.5 381.5V397.5M1438.5 381.5V396.5M1443.5 381.5V391.2M1447.5 381.5V383.4M1452.5 373.4V381.5M1457.5 364.6V381.5M1461.5 357.5V381.5M1466.5 353.4V381.5M1471.5 353.4V381.5M1475.5 358.6V381.5M1480.5 365.5V381.5M1484.5 372.5V381.5M1489.5 376.5V381.5M1494.5 377.8V381.5M1498.5 374.4V381.5M1503.5 367.5V381.5M1508.5 357.5V381.5M1512.5 348.4V381.5M1517.5 342.4V381.5M1521.5 340.2V381.5M1526.5 342.4V381.5M1531.5 347.5V381.5M1535.5 353.6V381.5M1540.5 360.9V381.5M1545.5 366.2V381.5M1549.5 370.2V381.5M1554.5 373.4V381.5M1558.5 377.4V381.5M1563.5 381.5V382.4M1568.5 381.5V387.4M1572.5 381.5V391.2M1577.5 381.5V393.4M1582.5 381.5V392.4M1586.5 381.5V390.2M1591.5 381.5V387.1M1595.5 381.5V386.1M1600.5 381.5V388.4M1605.5 381.5V392.4M1609.5 381.5V397.5M1614.5 381.5V401.2M1619.5 381.5V404.4M1623.5 381.5V404.4M1628.5 381.5V402.4M1632.5 381.5V400.2M1637.5 381.5V401.2M1642.5 381.5V404.4M1646.5 381.5V407.4M1651.5 381.5V409.4M1655.5 381.5V409.4M1660.5 381.5V405.2M1665.5 381.5V396.5M1669.5 381.5V386.2M1674.5 378.4V381.5M1679.5 375.5V381.5M1683.5 375.5V381.5M1688.5 377.4V381.5M1692.5 381.5V382.4M1697.5 381.5V386.2M1702.5 381.5V389.4M1706.5 381.5V389.4M1711.5 381.5V387.1M1716.5 381.5V383.4M1720.5 377.4V381.5M1725.5 370.2V381.5M1729.5 363.4V381.5M1734.5 358.6V381.5M1739.5 356.2V381.5M1743.5 358.6V381.5M1748.5 362.5V381.5M1753.5 366.2V381.5M1757.5 368.8V381.5M1762.5 370.2V381.5M1766.5 369.6V381.5M1771.5 369.6V381.5M1776.5 369.6V381.5M1780.5 370.4V381.5M1785.5 372.6V381.5M1790.5 374.6V381.5M1794.5 377.6V381.5M1799.5 379.2V381.5M1803.5 380.4V381.5M1808.5 381.5V382.3M1813.5 381.5V384.2M1817.5 381.5V387.3M1822.5 381.5V389.6M1827.5 381.5V390.7M1831.5 381.5V390.7M1836.5 381.5V386.2M1840.5 379.4V381.5M1845.5 369.6V381.5M1850.5 359.6V381.5M1854.5 352.6V381.5M1859.5 350.4V381.5M1864.5 353.6V381.5M1868.5 360.5V381.5M1873.5 371.5V381.5M1877.5 380.4V381.5M1882.5 381.5V386.2M1887.5 381.5V388.4M1891.5 381.5V386.2M1896.5 381.5V381.5M1901.5 377.3V381.5M1905.5 376.2V381.5M1910.5 380.2V381.5" stroke="#3232c8" stroke-width="1" fill="none"/><rect x="127" y="569" width="1787" height="1" fill="#000"/><path d="M127.10 514.8a2.4 2.4 0 1 0 4.8 0a2.4 2.4 0 1 0 -4.8 0M131.10 514.8a2.4 2.4 0 1 0 4.8 0a2.4 2.4 0 1 0 -4.8 0M135.10 514.7a2.4 2.4 0 1 0 4.8 0a2.4 2.4 0 1 0 -4.8 0M139.10 514.7a2.4 2.4 0 1 0 4.8 0a2.4 2.4 0 1 0 -4.8 0M143.10 514.6a2.4 2.4 0 1 0 4.8 0a2.4 2.4 0 1 0 -4.8 0M148.10 514.6a2.4 2.4 0 1 0 4.8 0a2.4 2.4 0 1 0 -4.8 0M152.10 514.5a2.4 2.4 0 1 0 4.8 0a2.4 2.4 0 1 0 -4.8 0M156.10 514.4a2.4 2.4 0 1 0 4.8 0a2.4 2.4 0 1 0 -4.8 0M160.10 514.3a2.4 2.4 0 1 0 4.8 0a2.4 2.4 0 1 0 -4.8 0M165.10 514.2a2.4 2.4 0 1 0 4.8 0a2.4 2.4 0 1 0 -4.8 0M169.10 514.1a2.4 2.4 0 1 0 4.8 0a2.4 2.4 0 1 0 -4.8 0M173.10 514.0a2.4 2.4 0 1 0 4.8 0a2.4 2.4 0 1 0 -4.8 0M177.10 513.9a2.4 2.4 0 1 0 4.8 0a2.4 2.4 0 1 0 -4.8 0M182.10 513.9a2.4 2.4 0 1 0 4.8 0a2.4 2.4 0 1 0 -4.8 0M186.10 513.9a2.4 2.4 0 1 0 4.8 0a2.4 2.4 0 1 0 -4.8 0M190.10 513.8a2.4 2.4 0 1 0 4.8 0a2.4 2.4 0 1 0 -4.8 0M194.10 513.8a2.4 2.4 0 1 0 4.8 0a2.4 2.4 0 1 0 -4.8 0M199.10 513.8a2.4 2.4 0 1 0 4.8 0a2.4 2.4 0 1 0 -4.8 0M203.10 513.8a2.4 2.4 0 1 0 4.8 0a2.4 2.4 0 1 0 -4.8 0M207.10 513.7a2.4 2.4 0 1 0 4.8 0a2.4 2.4 0 1 0 -4.8 0M211.10 513.7a2.4 2.4 0 1 0 4.8 0a2.4 2.4 0 1 0 -4.8 0M216.10 513.7a2.4 2.4 0 1 0 4.8 0a2.4 2.4 0 1 0 -4.8 0M220.10 513.7a2.4 2.4 0 1 0 4.8 0a2.4 2.4 0 1 0 -4.8 0M224.10 513.8a2.4 2.4 0 1 0 4.8 0a2.4 2.4 0 1 0 -4.8 0M228.10 513.8a2.4 2.4 0 1 0 4.8 0a2.4 2.4 0 1 0 -4.8 0M233.10 513.9a2.4 2.4 0 1 0 4.8 0a2.4 2.4 0 1 0 -4.8 0M237.10 513.9a2.4 2.4 0 1 0 4.8 0a2.4 2.4 0 1 0 -4.8 0M241.10 514.0a2.4 2.4 0 1 0 4.8 0a2.4 2.4 0 1 0 -4.8 0M245.10 514.0a2.4 2.4 0 1 0 4.8 0a2.4 2.4 0 1 0 -4.8 0M250.10 514.1a2.4 2.4 0 1 0 4.8 0a2.4 2.4 0 1 0 -4.8 0M254.10 514.1a2.4 2.4 0 1 0 4.8 0a2.4 2.4 0 1 0 -4.8 0M258.10 514.2a2.4 2.4 0 1 0 4.8 0a2.4 2.4 0 1 0 -4.8 0M262.10 514.2a2.4 2.4 0 1 0 4.8 0a2.4 2.4 0 1 0 -4.8 0M267.10 514.3a2.4 2.4 0 1 0 4.8 0a2.4 2.4 0 1 0 -4.8 0M271.10 514.3a2.4 2.4 0 1 0 4.8 0a2.4 2.4 0 1 0 -4.8 0M275.10 514.4a2.4 2.4 0 1 0 4.8 0a2.4 2.4 0 1 0 -4.8 0M279.10 514.5a2.4 2.4 0 1 0 4.8 0a2.4 2.4 0 1 0 -4.8 0M284.10 514.5a2.4 2.4 0 1 0 4.8 0a2.4 2.4 0 1 0 -4.8 0M288.10 514.6a2.4 2.4 0 1 0 4.8 0a2.4 2.4 0 1 0 -4.8 0M292.10 514.7a2.4 2.4 0 1 0 4.8 0a2.4 2.4 0 1 0 -4.8 0M296.10 514.7a2.4 2.4 0 1 0 4.8 0a2.4 2.4 0 1 0 -4.8 0M301.10 514.8a2.4 2.4 0 1 0 4.8 0a2.4 2.4 0 1 0 -4.8 0M305.10 514.9a2.4 2.4 0 1 0 4.8 0a2.4 2.4 0 1 0 -4.8 0M309.10 514.9a2.4 2.4 0 1 0 4.8 0a2.4 2.4 0 1 0 -4.8 0M313.10 515.0a2.4 2.4 0 1 0 4.8 0a2.4 2.4 0 1 0 -4.8 0M318.10 515.2a2.4 2.4 0 1 0 4.8 0a2.4 2.4 0 1 0 -4.8 0M322.10 515.3a2.4 2.4 0 1 0 4.8 0a2.4 2.4 0 1 0 -4.8 0M326.10 515.4a2.4 2.4 0 1 0 4.8 0a2.4 2.4 0 1 0 -4.8 0M330.10 515.6a2.4 2.4 0 1 0 4.8 0a2.4 2.4 0 1 0 -4.8 0M335.10 515.7a2.4 2.4 0 1 0 4.8 0a2.4 2.4 0 1 0 -4.8 0M339.10 515.9a2.4 2.4 0 1 0 4.8 0a2.4 2.4 0 1 0 -4.8 0M343.10 516.0a2.4 2.4 0 1 0 4.8 0a2.4 2.4 0 1 0 -4.8 0M347.10 516.2a2.4 2.4 0 1 0 4.8 0a2.4 2.4 0 1 0 -4.8 0M352.10 516.3a2.4 2.4 0 1 0 4.8 0a2.4 2.4 0 1 0 -4.8 0M356.10 516.5a2.4 2.4 0 1 0 4.8 0a2.4 2.4 0 1 0 -4.8 0M360.10 516.6a2.4 2.4 0 1 0 4.8 0a2.4 2.4 0 1 0 -4.8 0M364.10 516.8a2.4 2.4 0 1 0 4.8 0a2.4 2.4 0 1 0 -4.8 0M369.10 516.9a2.4 2.4 0 1 0 4.8 0a2.4 2.4 0 1 0 -4.8 0M373.10 517.1a2.4 2.4 0 1 0 4.8 0a2.4 2.4 0 1 0 -4.8 0M377.10 517.2a2.4 2.4 0 1 0 4.8 0a2.4 2.4 0 1 0 -4.8 0M381.10 517.4a2.4 2.4 0 1 0 4.8 0a2.4 2.4 0 1 0 -4.8 0M386.10 517.7a2.4 2.4 0 1 0 4.8 0a2.4 2.4 0 1 0 -4.8 0M390.10 517.9a2.4 2.4 0 1 0 4.8 0a2.4 2.4 0 1 0 -4.8 0M394.10 518.1a2.4 2.4 0 1 0 4.8 0a2.4 2.4 0 1 0 -4.8 0M398.10 518.3a2.4 2.4 0 1 0 4.8 0a2.4 2.4 0 1 0 -4.8 0M403.10 518.6a2.4 2.4 0 1 0 4.8 0a2.4 2.4 0 1 0 -4.8 0M407.10 518.8a2.4 2.4 0 1 0 4.8 0a2.4 2.4 0 1 0 -4.8 0M411.10 519.1a2.4 2.4 0 1 0 4.8 0a2.4 2.4 0 1 0 -4.8 0M415.10 519.4a2.4 2.4 0 1 0 4.8 0a2.4 2.4 0 1 0 -4.8 0M420.10 519.7a2.4 2.4 0 1 0 4.8 0a2.4 2.4 0 1 0 -4.8 0M424.10 519.9a2.4 2.4 0 1 0 4.8 0a2.4 2.4 0 1 0 -4.8 0M428.10 520.1a2.4 2.4 0 1 0 4.8 0a2.4 2.4 0 1 0 -4.8 0M432.10 520.3a2.4 2.4 0 1 0 4.8 0a2.4 2.4 0 1 0 -4.8 0M437.10 520.5a2.4 2.4 0 1 0 4.8 0a2.4 2.4 0 1 0 -4.8 0M441.10 520.7a2.4 2.4 0 1 0 4.8 0a2.4 2.4 0 1 0 -4.8 0M445.10 520.9a2.4 2.4 0 1 0 4.8 0a2.4 2.4 0 1 0 -4.8 0M449.10 521.1a2.4 2.4 0 1 0 4.8 0a2.4 2.4 0 1 0 -4.8 0M454.10 521.3a2.4 2.4 0 1 0 4.8 0a2.4 2.4 0 1 0 -4.8 0M458.10 521.5a2.4 2.4 0 1 0 4.8 0a2.4 2.4 0 1 0 -4.8 0M462.10 521.7a2.4 2.4 0 1 0 4.8 0a2.4 2.4 0 1 0 -4.8 0M466.10 521.9a2.4 2.4 0 1 0 4.8 0a2.4 2.4 0 1 0 -4.8 0M471.10 522.1a2.4 2.4 0 1 0 4.8 0a2.4 2.4 0 1 0 -4.8 0M475.10 522.3a2.4 2.4 0 1 0 4.8 0a2.4 2.4 0 1 0 -4.8 0M479.10 522.5a2.4 2.4 0 1 0 4.8 0a2.4 2.4 0 1 0 -4.8 0M483.10 522.7a2.4 2.4 0 1 0 4.8 0a2.4 2.4 0 1 0 -4.8 0M488.10 522.8a2.4 2.4 0 1 0 4.8 0a2.4 2.4 0 1 0 -4.8 0M492.10 523.0a2.4 2.4 0 1 0 4.8 0a2.4 2.4 0 1 0 -4.8 0M496.10 523.2a2.4 2.4 0 1 0 4.8 0a2.4 2.4 0 1 0 -4.8 0M500.10 523.5a2.4 2.4 0 1 0 4.8 0a2.4 2.4 0 1 0 -4.8 0M505.10 523.8a2.4 2.4 0 1 0 4.8 0a2.4 2.4 0 1 0 -4.8 0M509.10 524.1a2.4 2.4 0 1 0 4.8 0a2.4 2.4 0 1 0 -4.8 0M513.10 524.4a2.4 2.4 0 1 0 4.8 0a2.4 2.4 0 1 0 -4.8 0M517.10 524.7a2.4 2.4 0 1 0 4.8 0a2.4 2.4 0 1 0 -4.8 0M522.10 525.0a2.4 2.4 0 1 0 4.8 0a2.4 2.4 0 1 0 -4.8 0M526.10 525.3a2.4 2.4 0 1 0 4.8 0a2.4 2.4 0 1 0 -4.8 0M530.10 525.6a2.4 2.4 0 1 0 4.8 0a2.4 2.4 0 1 0 -4.8 0M534.10 525.9a2.4 2.4 0 1 0 4.8 0a2.4 2.4 0 1 0 -4.8 0M539.10 526.2a2.4 2.4 0 1 0 4.8 0a2.4 2.4 0 1 0 -4.8 0M543.10 526.5a2.4 2.4 0 1 0 4.8 0a2.4 2.4 0 1 0 -4.8 0M547.10 526.8a2.4 2.4 0 1 0 4.8 0a2.4 2.4 0 1 0 -4.8 0M551.10 527.1a2.4 2.4 0 1 0 4.8 0a2.4 2.4 0 1 0 -4.8 0M556.10 527.4a2.4 2.4 0 1 0 4.8 0a2.4 2.4 0 1 0 -4.8 0M560.10 527.7a2.4 2.4 0 1 0 4.8 0a2.4 2.4 0 1 0 -4.8 0M564.10 528.0a2.4 2.4 0 1 0 4.8 0a2.4 2.4 0 1 0 -4.8 0M568.10 528.3a2.4 2.4 0 1 0 4.8 0a2.4 2.4 0 1 0 -4.8 0M573.10 528.6a2.4 2.4 0 1 0 4.8 0a2.4 2.4 0 1 0 -4.8 0M577.10 528.9a2.4 2.4 0 1 0 4.8 0a2.4 2.4 0 1 0 -4.8 0M581.10 529.3a2.4 2.4 0 1 0 4.8 0a2.4 2.4 0 1 0 -4.8 0M585.10 529.6a2.4 2.4 0 1 0 4.8 0a2.4 2.4 0 1 0 -4.8 0M590.10 529.9a2.4 2.4 0 1 0 4.8 0a2.4 2.4 0 1 0 -4.8 0M594.10 530.2a2.4 2.4 0 1 0 4.8 0a2.4 2.4 0 1 0 -4.8 0M598.10 530.6a2.4 2.4 0 1 0 4.8 0a2.4 2.4 0 1 0 -4.8 0M602.10 530.9a2.4 2.4 0 1 0 4.8 0a2.4 2.4 0 1 0 -4.8 0M607.10 531.2a2.4 2.4 0 1 0 4.8 0a2.4 2.4 0 1 0 -4.8 0M611.10 531.6a2.4 2.4 0 1 0 4.8 0a2.4 2.4 0 1 0 -4.8 0M615.10 531.9a2.4 2.4 0 1 0 4.8 0a2.4 2.4 0 1 0 -4.8 0M619.10 532.2a2.4 2.4 0 1 0 4.8 0a2.4 2.4 0 1 0 -4.8 0M624.10 532.6a2.4 2.4 0 1 0 4.8 0a2.4 2.4 0 1 0 -4.8 0M628.10 532.9a2.4 2.4 0 1 0 4.8 0a2.4 2.4 0 1 0 -4.8 0M632.10 533.2a2.4 2.4 0 1 0 4.8 0a2.4 2.4 0 1 0 -4.8 0M636.10 533.5a2.4 2.4 0 1 0 4.8 0a2.4 2.4 0 1 0 -4.8 0M641.10 533.9a2.4 2.4 0 1 0 4.8 0a2.4 2.4 0 1 0 -4.8 0M645.10 534.2a2.4 2.4 0 1 0 4.8 0a2.4 2.4 0 1 0 -4.8 0M649.10 534.6a2.4 2.4 0 1 0 4.8 0a2.4 2.4 0 1 0 -4.8 0M653.10 535.0a2.4 2.4 0 1 0 4.8 0a2.4 2.4 0 1 0 -4.8 0M658.10 535.3a2.4 2.4 0 1 0 4.8 0a2.4 2.4 0 1 0 -4.8 0M662.10 535.7a2.4 2.4 0 1 0 4.8 0a2.4 2.4 0 1 0 -4.8 0M666.10 536.1a2.4 2.4 0 1 0 4.8 0a2.4 2.4 0 1 0 -4.8 0M670.10 536.5a2.4 2.4 0 1 0 4.8 0a2.4 2.4 0 1 0 -4.8 0M674.10 536.9a2.4 2.4 0 1 0 4.8 0a2.4 2.4 0 1 0 -4.8 0M679.10 537.3a2.4 2.4 0 1 0 4.8 0a2.4 2.4 0 1 0 -4.8 0M683.10 537.7a2.4 2.4 0 1 0 4.8 0a2.4 2.4 0 1 0 -4.8 0M687.10 538.1a2.4 2.4 0 1 0 4.8 0a2.4 2.4 0 1 0 -4.8 0M691.10 538.5a2.4 2.4 0 1 0 4.8 0a2.4 2.4 0 1 0 -4.8 0M696.10 538.9a2.4 2.4 0 1 0 4.8 0a2.4 2.4 0 1 0 -4.8 0M700.10 539.3a2.4 2.4 0 1 0 4.8 0a2.4 2.4 0 1 0 -4.8 0M704.10 539.7a2.4 2.4 0 1 0 4.8 0a2.4 2.4 0 1 0 -4.8 0M708.10 540.1a2.4 2.4 0 1 0 4.8 0a2.4 2.4 0 1 0 -4.8 0M713.10 540.5a2.4 2.4 0 1 0 4.8 0a2.4 2.4 0 1 0 -4.8 0M717.10 540.9a2.4 2.4 0 1 0 4.8 0a2.4 2.4 0 1 0 -4.8 0M721.10 541.3a2.4 2.4 0 1 0 4.8 0a2.4 2.4 0 1 0 -4.8 0M725.10 541.6a2.4 2.4 0 1 0 4.8 0a2.4 2.4 0 1 0 -4.8 0M730.10 542.0a2.4 2.4 0 1 0 4.8 0a2.4 2.4 0 1 0 -4.8 0M734.10 542.4a2.4 2.4 0 1 0 4.8 0a2.4 2.4 0 1 0 -4.8 0M738.10 542.8a2.4 2.4 0 1 0 4.8 0a2.4 2.4 0 1 0 -4.8 0M742.10 543.2a2.4 2.4 0 1 0 4.8 0a2.4 2.4 0 1 0 -4.8 0M747.10 543.5a2.4 2.4 0 1 0 4.8 0a2.4 2.4 0 1 0 -4.8 0M751.10 543.9a2.4 2.4 0 1 0 4.8 0a2.4 2.4 0 1 0 -4.8 0M755.10 544.3a2.4 2.4 0 1 0 4.8 0a2.4 2.4 0 1 0 -4.8 0M759.10 544.7a2.4 2.4 0 1 0 4.8 0a2.4 2.4 0 1 0 -4.8 0M764.10 545.0a2.4 2.4 0 1 0 4.8 0a2.4 2.4 0 1 0 -4.8 0M768.10 545.4a2.4 2.4 0 1 0 4.8 0a2.4 2.4 0 1 0 -4.8 0M772.10 545.8a2.4 2.4 0 1 0 4.8 0a2.4 2.4 0 1 0 -4.8 0M776.10 546.2a2.4 2.4 0 1 0 4.8 0a2.4 2.4 0 1 0 -4.8 0M781.10 546.6a2.4 2.4 0 1 0 4.8 0a2.4 2.4 0 1 0 -4.8 0M785.10 546.9a2.4 2.4 0 1 0 4.8 0a2.4 2.4 0 1 0 -4.8 0M789.10 547.3a2.4 2.4 0 1 0 4.8 0a2.4 2.4 0 1 0 -4.8 0M793.10 547.7a2.4 2.4 0 1 0 4.8 0a2.4 2.4 0 1 0 -4.8 0M798.10 548.1a2.4 2.4 0 1 0 4.8 0a2.4 2.4 0 1 0 -4.8 0M802.10 548.4a2.4 2.4 0 1 0 4.8 0a2.4 2.4 0 1 0 -4.8 0M806.10 548.9a2.4 2.4 0 1 0 4.8 0a2.4 2.4 0 1 0 -4.8 0M810.10 549.4a2.4 2.4 0 1 0 4.8 0a2.4 2.4 0 1 0 -4.8 0M815.10 549.8a2.4 2.4 0 1 0 4.8 0a2.4 2.4 0 1 0 -4.8 0M819.10 550.3a2.4 2.4 0 1 0 4.8 0a2.4 2.4 0 1 0 -4.8 0M823.10 550.7a2.4 2.4 0 1 0 4.8 0a2.4 2.4 0 1 0 -4.8 0M827.10 551.2a2.4 2.4 0 1 0 4.8 0a2.4 2.4 0 1 0 -4.8 0M832.10 551.7a2.4 2.4 0 1 0 4.8 0a2.4 2.4 0 1 0 -4.8 0M836.10 552.1a2.4 2.4 0 1 0 4.8 0a2.4 2.4 0 1 0 -4.8 0M840.10 552.6a2.4 2.4 0 1 0 4.8 0a2.4 2.4 0 1 0 -4.8 0M844.10 553.0a2.4 2.4 0 1 0 4.8 0a2.4 2.4 0 1 0 -4.8 0M849.10 553.5a2.4 2.4 0 1 0 4.8 0a2.4 2.4 0 1 0 -4.8 0M853.10 553.9a2.4 2.4 0 1 0 4.8 0a2.4 2.4 0 1 0 -4.8 0M857.10 554.4a2.4 2.4 0 1 0 4.8 0a2.4 2.4 0 1 0 -4.8 0M861.10 554.8a2.4 2.4 0 1 0 4.8 0a2.4 2.4 0 1 0 -4.8 0M866.10 555.3a2.4 2.4 0 1 0 4.8 0a2.4 2.4 0 1 0 -4.8 0M870.10 555.7a2.4 2.4 0 1 0 4.8 0a2.4 2.4 0 1 0 -4.8 0M874.10 556.1a2.4 2.4 0 1 0 4.8 0a2.4 2.4 0 1 0 -4.8 0M878.10 556.6a2.4 2.4 0 1 0 4.8 0a2.4 2.4 0 1 0 -4.8 0M883.10 557.0a2.4 2.4 0 1 0 4.8 0a2.4 2.4 0 1 0 -4.8 0M887.10 557.5a2.4 2.4 0 1 0 4.8 0a2.4 2.4 0 1 0 -4.8 0M891.10 557.9a2.4 2.4 0 1 0 4.8 0a2.4 2.4 0 1 0 -4.8 0M895.10 558.3a2.4 2.4 0 1 0 4.8 0a2.4 2.4 0 1 0 -4.8 0M900.10 558.7a2.4 2.4 0 1 0 4.8 0a2.4 2.4 0 1 0 -4.8 0M904.10 559.1a2.4 2.4 0 1 0 4.8 0a2.4 2.4 0 1 0 -4.8 0M908.10 559.5a2.4 2.4 0 1 0 4.8 0a2.4 2.4 0 1 0 -4.8 0M912.10 559.8a2.4 2.4 0 1 0 4.8 0a2.4 2.4 0 1 0 -4.8 0M917.10 560.2a2.4 2.4 0 1 0 4.8 0a2.4 2.4 0 1 0 -4.8 0M921.10 560.5a2.4 2.4 0 1 0 4.8 0a2.4 2.4 0 1 0 -4.8 0M925.10 560.9a2.4 2.4 0 1 0 4.8 0a2.4 2.4 0 1 0 -4.8 0M929.10 561.2a2.4 2.4 0 1 0 4.8 0a2.4 2.4 0 1 0 -4.8 0M934.10 561.6a2.4 2.4 0 1 0 4.8 0a2.4 2.4 0 1 0 -4.8 0M938.10 562.0a2.4 2.4 0 1 0 4.8 0a2.4 2.4 0 1 0 -4.8 0M942.10 562.3a2.4 2.4 0 1 0 4.8 0a2.4 2.4 0 1 0 -4.8 0M946.10 562.7a2.4 2.4 0 1 0 4.8 0a2.4 2.4 0 1 0 -4.8 0M951.10 563.1a2.4 2.4 0 1 0 4.8 0a2.4 2.4 0 1 0 -4.8 0M955.10 563.5a2.4 2.4 0 1 0 4.8 0a2.4 2.4 0 1 0 -4.8 0M959.10 564.0a2.4 2.4 0 1 0 4.8 0a2.4 2.4 0 1 0 -4.8 0M963.10 564.4a2.4 2.4 0 1 0 4.8 0a2.4 2.4 0 1 0 -4.8 0M968.10 564.9a2.4 2.4 0 1 0 4.8 0a2.4 2.4 0 1 0 -4.8 0M972.10 565.3a2.4 2.4 0 1 0 4.8 0a2.4 2.4 0 1 0 -4.8 0M976.10 565.7a2.4 2.4 0 1 0 4.8 0a2.4 2.4 0 1 0 -4.8 0M980.10 566.2a2.4 2.4 0 1 0 4.8 0a2.4 2.4 0 1 0 -4.8 0M985.10 566.6a2.4 2.4 0 1 0 4.8 0a2.4 2.4 0 1 0 -4.8 0M989.10 567.1a2.4 2.4 0 1 0 4.8 0a2.4 2.4 0 1 0 -4.8 0M993.10 567.5a2.4 2.4 0 1 0 4.8 0a2.4 2.4 0 1 0 -4.8 0M997.10 567.9a2.4 2.4 0 1 0 4.8 0a2.4 2.4 0 1 0 -4.8 0M1002.10 568.2a2.4 2.4 0 1 0 4.8 0a2.4 2.4 0 1 0 -4.8 0M1006.10 568.4a2.4 2.4 0 1 0 4.8 0a2.4 2.4 0 1 0 -4.8 0M1010.10 568.6a2.4 2.4 0 1 0 4.8 0a2.4 2.4 0 1 0 -4.8 0M1014.10 568.8a2.4 2.4 0 1 0 4.8 0a2.4 2.4 0 1 0 -4.8 0M1019.10 569.0a2.4 2.4 0 1 0 4.8 0a2.4 2.4 0 1 0 -4.8 0M1023.10 569.2a2.4 2.4 0 1 0 4.8 0a2.4 2.4 0 1 0 -4.8 0M1027.10 569.5a2.4 2.4 0 1 0 4.8 0a2.4 2.4 0 1 0 -4.8 0M1031.10 569.8a2.4 2.4 0 1 0 4.8 0a2.4 2.4 0 1 0 -4.8 0M1036.10 570.1a2.4 2.4 0 1 0 4.8 0a2.4 2.4 0 1 0 -4.8 0M1040.10 570.4a2.4 2.4 0 1 0 4.8 0a2.4 2.4 0 1 0 -4.8 0M1044.10 570.7a2.4 2.4 0 1 0 4.8 0a2.4 2.4 0 1 0 -4.8 0M1048.10 571.0a2.4 2.4 0 1 0 4.8 0a2.4 2.4 0 1 0 -4.8 0M1053.10 571.3a2.4 2.4 0 1 0 4.8 0a2.4 2.4 0 1 0 -4.8 0M1057.10 571.6a2.4 2.4 0 1 0 4.8 0a2.4 2.4 0 1 0 -4.8 0M1061.10 571.8a2.4 2.4 0 1 0 4.8 0a2.4 2.4 0 1 0 -4.8 0M1065.10 572.1a2.4 2.4 0 1 0 4.8 0a2.4 2.4 0 1 0 -4.8 0M1070.10 572.4a2.4 2.4 0 1 0 4.8 0a2.4 2.4 0 1 0 -4.8 0M1074.10 572.8a2.4 2.4 0 1 0 4.8 0a2.4 2.4 0 1 0 -4.8 0M1078.10 573.2a2.4 2.4 0 1 0 4.8 0a2.4 2.4 0 1 0 -4.8 0M1082.10 573.5a2.4 2.4 0 1 0 4.8 0a2.4 2.4 0 1 0 -4.8 0M1087.10 573.9a2.4 2.4 0 1 0 4.8 0a2.4 2.4 0 1 0 -4.8 0M1091.10 574.3a2.4 2.4 0 1 0 4.8 0a2.4 2.4 0 1 0 -4.8 0M1095.10 574.6a2.4 2.4 0 1 0 4.8 0a2.4 2.4 0 1 0 -4.8 0M1099.10 575.0a2.4 2.4 0 1 0 4.8 0a2.4 2.4 0 1 0 -4.8 0M1104.10 575.4a2.4 2.4 0 1 0 4.8 0a2.4 2.4 0 1 0 -4.8 0M1108.10 575.8a2.4 2.4 0 1 0 4.8 0a2.4 2.4 0 1 0 -4.8 0M1112.10 576.2a2.4 2.4 0 1 0 4.8 0a2.4 2.4 0 1 0 -4.8 0M1116.10 576.6a2.4 2.4 0 1 0 4.8 0a2.4 2.4 0 1 0 -4.8 0M1121.10 577.0a2.4 2.4 0 1 0 4.8 0a2.4 2.4 0 1 0 -4.8 0M1125.10 577.4a2.4 2.4 0 1 0 4.8 0a2.4 2.4 0 1 0 -4.8 0M1129.10 577.8a2.4 2.4 0 1 0 4.8 0a2.4 2.4 0 1 0 -4.8 0M1133.10 578.2a2.4 2.4 0 1 0 4.8 0a2.4 2.4 0 1 0 -4.8 0M1138.10 578.6a2.4 2.4 0 1 0 4.8 0a2.4 2.4 0 1 0 -4.8 0M1142.10 579.0a2.4 2.4 0 1 0 4.8 0a2.4 2.4 0 1 0 -4.8 0M1146.10 579.4a2.4 2.4 0 1 0 4.8 0a2.4 2.4 0 1 0 -4.8 0M1150.10 579.8a2.4 2.4 0 1 0 4.8 0a2.4 2.4 0 1 0 -4.8 0M1155.10 580.1a2.4 2.4 0 1 0 4.8 0a2.4 2.4 0 1 0 -4.8 0M1159.10 580.5a2.4 2.4 0 1 0 4.8 0a2.4 2.4 0 1 0 -4.8 0M1163.10 580.9a2.4 2.4 0 1 0 4.8 0a2.4 2.4 0 1 0 -4.8 0M1167.10 581.2a2.4 2.4 0 1 0 4.8 0a2.4 2.4 0 1 0 -4.8 0M1172.10 581.6a2.4 2.4 0 1 0 4.8 0a2.4 2.4 0 1 0 -4.8 0M1176.10 582.0a2.4 2.4 0 1 0 4.8 0a2.4 2.4 0 1 0 -4.8 0M1180.10 582.3a2.4 2.4 0 1 0 4.8 0a2.4 2.4 0 1 0 -4.8 0M1184.10 582.7a2.4 2.4 0 1 0 4.8 0a2.4 2.4 0 1 0 -4.8 0M1189.10 583.0a2.4 2.4 0 1 0 4.8 0a2.4 2.4 0 1 0 -4.8 0M1193.10 583.3a2.4 2.4 0 1 0 4.8 0a2.4 2.4 0 1 0 -4.8 0M1197.10 583.6a2.4 2.4 0 1 0 4.8 0a2.4 2.4 0 1 0 -4.8 0M1201.10 583.8a2.4 2.4 0 1 0 4.8 0a2.4 2.4 0 1 0 -4.8 0M1205.10 584.0a2.4 2.4 0 1 0 4.8 0a2.4 2.4 0 1 0 -4.8 0M1210.10 584.3a2.4 2.4 0 1 0 4.8 0a2.4 2.4 0 1 0 -4.8 0M1214.10 584.5a2.4 2.4 0 1 0 4.8 0a2.4 2.4 0 1 0 -4.8 0M1218.10 584.7a2.4 2.4 0 1 0 4.8 0a2.4 2.4 0 1 0 -4.8 0M1222.10 585.0a2.4 2.4 0 1 0 4.8 0a2.4 2.4 0 1 0 -4.8 0M1227.10 585.2a2.4 2.4 0 1 0 4.8 0a2.4 2.4 0 1 0 -4.8 0M1231.10 585.6a2.4 2.4 0 1 0 4.8 0a2.4 2.4 0 1 0 -4.8 0M1235.10 585.9a2.4 2.4 0 1 0 4.8 0a2.4 2.4 0 1 0 -4.8 0M1239.10 586.3a2.4 2.4 0 1 0 4.8 0a2.4 2.4 0 1 0 -4.8 0M1244.10 586.7a2.4 2.4 0 1 0 4.8 0a2.4 2.4 0 1 0 -4.8 0M1248.10 587.0a2.4 2.4 0 1 0 4.8 0a2.4 2.4 0 1 0 -4.8 0M1252.10 587.4a2.4 2.4 0 1 0 4.8 0a2.4 2.4 0 1 0 -4.8 0M1256.10 587.7a2.4 2.4 0 1 0 4.8 0a2.4 2.4 0 1 0 -4.8 0M1261.10 588.1a2.4 2.4 0 1 0 4.8 0a2.4 2.4 0 1 0 -4.8 0M1265.10 588.3a2.4 2.4 0 1 0 4.8 0a2.4 2.4 0 1 0 -4.8 0M1269.10 588.5a2.4 2.4 0 1 0 4.8 0a2.4 2.4 0 1 0 -4.8 0M1273.10 588.8a2.4 2.4 0 1 0 4.8 0a2.4 2.4 0 1 0 -4.8 0M1278.10 589.0a2.4 2.4 0 1 0 4.8 0a2.4 2.4 0 1 0 -4.8 0M1282.10 589.2a2.4 2.4 0 1 0 4.8 0a2.4 2.4 0 1 0 -4.8 0M1286.10 589.5a2.4 2.4 0 1 0 4.8 0a2.4 2.4 0 1 0 -4.8 0M1290.10 589.7a2.4 2.4 0 1 0 4.8 0a2.4 2.4 0 1 0 -4.8 0M1295.10 589.9a2.4 2.4 0 1 0 4.8 0a2.4 2.4 0 1 0 -4.8 0M1299.10 590.2a2.4 2.4 0 1 0 4.8 0a2.4 2.4 0 1 0 -4.8 0M1303.10 590.4a2.4 2.4 0 1 0 4.8 0a2.4 2.4 0 1 0 -4.8 0M1307.10 590.7a2.4 2.4 0 1 0 4.8 0a2.4 2.4 0 1 0 -4.8 0M1312.10 591.0a2.4 2.4 0 1 0 4.8 0a2.4 2.4 0 1 0 -4.8 0M1316.10 591.2a2.4 2.4 0 1 0 4.8 0a2.4 2.4 0 1 0 -4.8 0M1320.10 591.5a2.4 2.4 0 1 0 4.8 0a2.4 2.4 0 1 0 -4.8 0M1324.10 591.7a2.4 2.4 0 1 0 4.8 0a2.4 2.4 0 1 0 -4.8 0M1329.10 592.0a2.4 2.4 0 1 0 4.8 0a2.4 2.4 0 1 0 -4.8 0M1333.10 592.2a2.4 2.4 0 1 0 4.8 0a2.4 2.4 0 1 0 -4.8 0M1337.10 592.4a2.4 2.4 0 1 0 4.8 0a2.4 2.4 0 1 0 -4.8 0M1341.10 592.6a2.4 2.4 0 1 0 4.8 0a2.4 2.4 0 1 0 -4.8 0M1346.10 592.9a2.4 2.4 0 1 0 4.8 0a2.4 2.4 0 1 0 -4.8 0M1350.10 593.1a2.4 2.4 0 1 0 4.8 0a2.4 2.4 0 1 0 -4.8 0M1354.10 593.3a2.4 2.4 0 1 0 4.8 0a2.4 2.4 0 1 0 -4.8 0M1358.10 593.5a2.4 2.4 0 1 0 4.8 0a2.4 2.4 0 1 0 -4.8 0M1363.10 593.7a2.4 2.4 0 1 0 4.8 0a2.4 2.4 0 1 0 -4.8 0M1367.10 593.9a2.4 2.4 0 1 0 4.8 0a2.4 2.4 0 1 0 -4.8 0M1371.10 594.1a2.4 2.4 0 1 0 4.8 0a2.4 2.4 0 1 0 -4.8 0M1375.10 594.3a2.4 2.4 0 1 0 4.8 0a2.4 2.4 0 1 0 -4.8 0M1380.10 594.5a2.4 2.4 0 1 0 4.8 0a2.4 2.4 0 1 0 -4.8 0M1384.10 594.7a2.4 2.4 0 1 0 4.8 0a2.4 2.4 0 1 0 -4.8 0M1388.10 594.9a2.4 2.4 0 1 0 4.8 0a2.4 2.4 0 1 0 -4.8 0M1392.10 595.2a2.4 2.4 0 1 0 4.8 0a2.4 2.4 0 1 0 -4.8 0M1397.10 595.4a2.4 2.4 0 1 0 4.8 0a2.4 2.4 0 1 0 -4.8 0M1401.10 595.5a2.4 2.4 0 1 0 4.8 0a2.4 2.4 0 1 0 -4.8 0M1405.10 595.6a2.4 2.4 0 1 0 4.8 0a2.4 2.4 0 1 0 -4.8 0M1409.10 595.8a2.4 2.4 0 1 0 4.8 0a2.4 2.4 0 1 0 -4.8 0M1414.10 595.9a2.4 2.4 0 1 0 4.8 0a2.4 2.4 0 1 0 -4.8 0M1418.10 596.0a2.4 2.4 0 1 0 4.8 0a2.4 2.4 0 1 0 -4.8 0M1422.10 596.2a2.4 2.4 0 1 0 4.8 0a2.4 2.4 0 1 0 -4.8 0M1426.10 596.3a2.4 2.4 0 1 0 4.8 0a2.4 2.4 0 1 0 -4.8 0M1431.10 596.4a2.4 2.4 0 1 0 4.8 0a2.4 2.4 0 1 0 -4.8 0M1435.10 596.6a2.4 2.4 0 1 0 4.8 0a2.4 2.4 0 1 0 -4.8 0M1439.10 596.7a2.4 2.4 0 1 0 4.8 0a2.4 2.4 0 1 0 -4.8 0M1443.10 596.8a2.4 2.4 0 1 0 4.8 0a2.4 2.4 0 1 0 -4.8 0M1448.10 597.0a2.4 2.4 0 1 0 4.8 0a2.4 2.4 0 1 0 -4.8 0M1452.10 597.2a2.4 2.4 0 1 0 4.8 0a2.4 2.4 0 1 0 -4.8 0M1456.10 597.4a2.4 2.4 0 1 0 4.8 0a2.4 2.4 0 1 0 -4.8 0M1460.10 597.5a2.4 2.4 0 1 0 4.8 0a2.4 2.4 0 1 0 -4.8 0M1465.10 597.7a2.4 2.4 0 1 0 4.8 0a2.4 2.4 0 1 0 -4.8 0M1469.10 597.9a2.4 2.4 0 1 0 4.8 0a2.4 2.4 0 1 0 -4.8 0M1473.10 598.1a2.4 2.4 0 1 0 4.8 0a2.4 2.4 0 1 0 -4.8 0M1477.10 598.2a2.4 2.4 0 1 0 4.8 0a2.4 2.4 0 1 0 -4.8 0M1482.10 598.4a2.4 2.4 0 1 0 4.8 0a2.4 2.4 0 1 0 -4.8 0M1486.10 598.5a2.4 2.4 0 1 0 4.8 0a2.4 2.4 0 1 0 -4.8 0M1490.10 598.6a2.4 2.4 0 1 0 4.8 0a2.4 2.4 0 1 0 -4.8 0M1494.10 598.7a2.4 2.4 0 1 0 4.8 0a2.4 2.4 0 1 0 -4.8 0M1499.10 598.7a2.4 2.4 0 1 0 4.8 0a2.4 2.4 0 1 0 -4.8 0M1503.10 598.8a2.4 2.4 0 1 0 4.8 0a2.4 2.4 0 1 0 -4.8 0M1507.10 598.9a2.4 2.4 0 1 0 4.8 0a2.4 2.4 0 1 0 -4.8 0M1511.10 599.0a2.4 2.4 0 1 0 4.8 0a2.4 2.4 0 1 0 -4.8 0M1516.10 599.1a2.4 2.4 0 1 0 4.8 0a2.4 2.4 0 1 0 -4.8 0M1520.10 599.2a2.4 2.4 0 1 0 4.8 0a2.4 2.4 0 1 0 -4.8 0M1524.10 599.3a2.4 2.4 0 1 0 4.8 0a2.4 2.4 0 1 0 -4.8 0M1528.10 599.4a2.4 2.4 0 1 0 4.8 0a2.4 2.4 0 1 0 -4.8 0M1533.10 599.4a2.4 2.4 0 1 0 4.8 0a2.4 2.4 0 1 0 -4.8 0M1537.10 599.5a2.4 2.4 0 1 0 4.8 0a2.4 2.4 0 1 0 -4.8 0M1541.10 599.6a2.4 2.4 0 1 0 4.8 0a2.4 2.4 0 1 0 -4.8 0M1545.10 599.7a2.4 2.4 0 1 0 4.8 0a2.4 2.4 0 1 0 -4.8 0M1550.10 599.8a2.4 2.4 0 1 0 4.8 0a2.4 2.4 0 1 0 -4.8 0M1554.10 599.9a2.4 2.4 0 1 0 4.8 0a2.4 2.4 0 1 0 -4.8 0M1558.10 600.0a2.4 2.4 0 1 0 4.8 0a2.4 2.4 0 1 0 -4.8 0M1562.10 600.1a2.4 2.4 0 1 0 4.8 0a2.4 2.4 0 1 0 -4.8 0M1567.10 600.2a2.4 2.4 0 1 0 4.8 0a2.4 2.4 0 1 0 -4.8 0M1571.10 600.3a2.4 2.4 0 1 0 4.8 0a2.4 2.4 0 1 0 -4.8 0M1575.10 600.3a2.4 2.4 0 1 0 4.8 0a2.4 2.4 0 1 0 -4.8 0M1579.10 600.3a2.4 2.4 0 1 0 4.8 0a2.4 2.4 0 1 0 -4.8 0M1584.10 600.3a2.4 2.4 0 1 0 4.8 0a2.4 2.4 0 1 0 -4.8 0M1588.10 600.3a2.4 2.4 0 1 0 4.8 0a2.4 2.4 0 1 0 -4.8 0M1592.10 600.3a2.4 2.4 0 1 0 4.8 0a2.4 2.4 0 1 0 -4.8 0M1596.10 600.3a2.4 2.4 0 1 0 4.8 0a2.4 2.4 0 1 0 -4.8 0M1601.10 600.3a2.4 2.4 0 1 0 4.8 0a2.4 2.4 0 1 0 -4.8 0M1605.10 600.3a2.4 2.4 0 1 0 4.8 0a2.4 2.4 0 1 0 -4.8 0M1609.10 600.3a2.4 2.4 0 1 0 4.8 0a2.4 2.4 0 1 0 -4.8 0M1613.10 600.3a2.4 2.4 0 1 0 4.8 0a2.4 2.4 0 1 0 -4.8 0M1618.10 600.3a2.4 2.4 0 1 0 4.8 0a2.4 2.4 0 1 0 -4.8 0M1622.10 600.3a2.4 2.4 0 1 0 4.8 0a2.4 2.4 0 1 0 -4.8 0M1626.10 600.3a2.4 2.4 0 1 0 4.8 0a2.4 2.4 0 1 0 -4.8 0M1630.10 600.3a2.4 2.4 0 1 0 4.8 0a2.4 2.4 0 1 0 -4.8 0M1635.10 600.3a2.4 2.4 0 1 0 4.8 0a2.4 2.4 0 1 0 -4.8 0M1639.10 600.3a2.4 2.4 0 1 0 4.8 0a2.4 2.4 0 1 0 -4.8 0M1643.10 600.3a2.4 2.4 0 1 0 4.8 0a2.4 2.4 0 1 0 -4.8 0M1647.10 600.3a2.4 2.4 0 1 0 4.8 0a2.4 2.4 0 1 0 -4.8 0M1652.10 600.3a2.4 2.4 0 1 0 4.8 0a2.4 2.4 0 1 0 -4.8 0M1656.10 600.3a2.4 2.4 0 1 0 4.8 0a2.4 2.4 0 1 0 -4.8 0M1660.10 600.3a2.4 2.4 0 1 0 4.8 0a2.4 2.4 0 1 0 -4.8 0M1664.10 600.3a2.4 2.4 0 1 0 4.8 0a2.4 2.4 0 1 0 -4.8 0M1669.10 600.3a2.4 2.4 0 1 0 4.8 0a2.4 2.4 0 1 0 -4.8 0M1673.10 600.3a2.4 2.4 0 1 0 4.8 0a2.4 2.4 0 1 0 -4.8 0M1677.10 600.3a2.4 2.4 0 1 0 4.8 0a2.4 2.4 0 1 0 -4.8 0M1681.10 600.3a2.4 2.4 0 1 0 4.8 0a2.4 2.4 0 1 0 -4.8 0M1686.10 600.3a2.4 2.4 0 1 0 4.8 0a2.4 2.4 0 1 0 -4.8 0M1690.10 600.3a2.4 2.4 0 1 0 4.8 0a2.4 2.4 0 1 0 -4.8 0M1694.10 600.3a2.4 2.4 0 1 0 4.8 0a2.4 2.4 0 1 0 -4.8 0M1698.10 600.2a2.4 2.4 0 1 0 4.8 0a2.4 2.4 0 1 0 -4.8 0M1703.10 600.0a2.4 2.4 0 1 0 4.8 0a2.4 2.4 0 1 0 -4.8 0M1707.10 599.8a2.4 2.4 0 1 0 4.8 0a2.4 2.4 0 1 0 -4.8 0M1711.10 599.6a2.4 2.4 0 1 0 4.8 0a2.4 2.4 0 1 0 -4.8 0M1715.10 599.5a2.4 2.4 0 1 0 4.8 0a2.4 2.4 0 1 0 -4.8 0M1720.10 599.3a2.4 2.4 0 1 0 4.8 0a2.4 2.4 0 1 0 -4.8 0M1724.10 599.2a2.4 2.4 0 1 0 4.8 0a2.4 2.4 0 1 0 -4.8 0M1728.10 599.1a2.4 2.4 0 1 0 4.8 0a2.4 2.4 0 1 0 -4.8 0M1732.10 599.0a2.4 2.4 0 1 0 4.8 0a2.4 2.4 0 1 0 -4.8 0M1736.10 598.8a2.4 2.4 0 1 0 4.8 0a2.4 2.4 0 1 0 -4.8 0M1741.10 598.7a2.4 2.4 0 1 0 4.8 0a2.4 2.4 0 1 0 -4.8 0M1745.10 598.6a2.4 2.4 0 1 0 4.8 0a2.4 2.4 0 1 0 -4.8 0M1749.10 598.5a2.4 2.4 0 1 0 4.8 0a2.4 2.4 0 1 0 -4.8 0M1753.10 598.4a2.4 2.4 0 1 0 4.8 0a2.4 2.4 0 1 0 -4.8 0M1758.10 598.2a2.4 2.4 0 1 0 4.8 0a2.4 2.4 0 1 0 -4.8 0M1762.10 598.0a2.4 2.4 0 1 0 4.8 0a2.4 2.4 0 1 0 -4.8 0M1766.10 597.8a2.4 2.4 0 1 0 4.8 0a2.4 2.4 0 1 0 -4.8 0M1770.10 597.7a2.4 2.4 0 1 0 4.8 0a2.4 2.4 0 1 0 -4.8 0M1775.10 597.5a2.4 2.4 0 1 0 4.8 0a2.4 2.4 0 1 0 -4.8 0M1779.10 597.3a2.4 2.4 0 1 0 4.8 0a2.4 2.4 0 1 0 -4.8 0M1783.10 597.1a2.4 2.4 0 1 0 4.8 0a2.4 2.4 0 1 0 -4.8 0M1787.10 596.9a2.4 2.4 0 1 0 4.8 0a2.4 2.4 0 1 0 -4.8 0M1792.10 596.8a2.4 2.4 0 1 0 4.8 0a2.4 2.4 0 1 0 -4.8 0M1796.10 596.6a2.4 2.4 0 1 0 4.8 0a2.4 2.4 0 1 0 -4.8 0M1800.10 596.5a2.4 2.4 0 1 0 4.8 0a2.4 2.4 0 1 0 -4.8 0M1804.10 596.4a2.4 2.4 0 1 0 4.8 0a2.4 2.4 0 1 0 -4.8 0M1809.10 596.2a2.4 2.4 0 1 0 4.8 0a2.4 2.4 0 1 0 -4.8 0M1813.10 596.0a2.4 2.4 0 1 0 4.8 0a2.4 2.4 0 1 0 -4.8 0M1817.10 595.8a2.4 2.4 0 1 0 4.8 0a2.4 2.4 0 1 0 -4.8 0M1821.10 595.6a2.4 2.4 0 1 0 4.8 0a2.4 2.4 0 1 0 -4.8 0M1826.10 595.5a2.4 2.4 0 1 0 4.8 0a2.4 2.4 0 1 0 -4.8 0M1830.10 595.3a2.4 2.4 0 1 0 4.8 0a2.4 2.4 0 1 0 -4.8 0M1834.10 595.0a2.4 2.4 0 1 0 4.8 0a2.4 2.4 0 1 0 -4.8 0M1838.10 594.8a2.4 2.4 0 1 0 4.8 0a2.4 2.4 0 1 0 -4.8 0M1843.10 594.6a2.4 2.4 0 1 0 4.8 0a2.4 2.4 0 1 0 -4.8 0M1847.10 594.4a2.4 2.4 0 1 0 4.8 0a2.4 2.4 0 1 0 -4.8 0M1851.10 594.2a2.4 2.4 0 1 0 4.8 0a2.4 2.4 0 1 0 -4.8 0M1855.10 593.9a2.4 2.4 0 1 0 4.8 0a2.4 2.4 0 1 0 -4.8 0M1860.10 593.6a2.4 2.4 0 1 0 4.8 0a2.4 2.4 0 1 0 -4.8 0M1864.10 593.4a2.4 2.4 0 1 0 4.8 0a2.4 2.4 0 1 0 -4.8 0M1868.10 593.1a2.4 2.4 0 1 0 4.8 0a2.4 2.4 0 1 0 -4.8 0M1872.10 592.9a2.4 2.4 0 1 0 4.8 0a2.4 2.4 0 1 0 -4.8 0M1877.10 592.6a2.4 2.4 0 1 0 4.8 0a2.4 2.4 0 1 0 -4.8 0M1881.10 592.4a2.4 2.4 0 1 0 4.8 0a2.4 2.4 0 1 0 -4.8 0M1885.10 592.2a2.4 2.4 0 1 0 4.8 0a2.4 2.4 0 1 0 -4.8 0M1889.10 591.9a2.4 2.4 0 1 0 4.8 0a2.4 2.4 0 1 0 -4.8 0M1894.10 591.7a2.4 2.4 0 1 0 4.8 0a2.4 2.4 0 1 0 -4.8 0M1898.10 591.5a2.4 2.4 0 1 0 4.8 0a2.4 2.4 0 1 0 -4.8 0M1902.10 591.3a2.4 2.4 0 1 0 4.8 0a2.4 2.4 0 1 0 -4.8 0M1906.10 591.1a2.4 2.4 0 1 0 4.8 0a2.4 2.4 0 1 0 -4.8 0M1911.10 590.9a2.4 2.4 0 1 0 4.8 0a2.4 2.4 0 1 0 -4.8 0" fill="#3232c8"/><path d="M128.10 514.8a1.4 1.4 0 1 0 2.8 0a1.4 1.4 0 1 0 -2.8 0M132.10 514.8a1.4 1.4 0 1 0 2.8 0a1.4 1.4 0 1 0 -2.8 0M136.10 514.7a1.4 1.4 0 1 0 2.8 0a1.4 1.4 0 1 0 -2.8 0M140.10 514.7a1.4 1.4 0 1 0 2.8 0a1.4 1.4 0 1 0 -2.8 0M144.10 514.6a1.4 1.4 0 1 0 2.8 0a1.4 1.4 0 1 0 -2.8 0M149.10 514.6a1.4 1.4 0 1 0 2.8 0a1.4 1.4 0 1 0 -2.8 0M153.10 514.5a1.4 1.4 0 1 0 2.8 0a1.4 1.4 0 1 0 -2.8 0M157.10 514.4a1.4 1.4 0 1 0 2.8 0a1.4 1.4 0 1 0 -2.8 0M161.10 514.3a1.4 1.4 0 1 0 2.8 0a1.4 1.4 0 1 0 -2.8 0M166.10 514.2a1.4 1.4 0 1 0 2.8 0a1.4 1.4 0 1 0 -2.8 0M170.10 514.1a1.4 1.4 0 1 0 2.8 0a1.4 1.4 0 1 0 -2.8 0M174.10 514.0a1.4 1.4 0 1 0 2.8 0a1.4 1.4 0 1 0 -2.8 0M178.10 513.9a1.4 1.4 0 1 0 2.8 0a1.4 1.4 0 1 0 -2.8 0M183.10 513.9a1.4 1.4 0 1 0 2.8 0a1.4 1.4 0 1 0 -2.8 0M187.10 513.9a1.4 1.4 0 1 0 2.8 0a1.4 1.4 0 1 0 -2.8 0M191.10 513.8a1.4 1.4 0 1 0 2.8 0a1.4 1.4 0 1 0 -2.8 0M195.10 513.8a1.4 1.4 0 1 0 2.8 0a1.4 1.4 0 1 0 -2.8 0M200.10 513.8a1.4 1.4 0 1 0 2.8 0a1.4 1.4 0 1 0 -2.8 0M204.10 513.8a1.4 1.4 0 1 0 2.8 0a1.4 1.4 0 1 0 -2.8 0M208.10 513.7a1.4 1.4 0 1 0 2.8 0a1.4 1.4 0 1 0 -2.8 0M212.10 513.7a1.4 1.4 0 1 0 2.8 0a1.4 1.4 0 1 0 -2.8 0M217.10 513.7a1.4 1.4 0 1 0 2.8 0a1.4 1.4 0 1 0 -2.8 0M221.10 513.7a1.4 1.4 0 1 0 2.8 0a1.4 1.4 0 1 0 -2.8 0M225.10 513.8a1.4 1.4 0 1 0 2.8 0a1.4 1.4 0 1 0 -2.8 0M229.10 513.8a1.4 1.4 0 1 0 2.8 0a1.4 1.4 0 1 0 -2.8 0M234.10 513.9a1.4 1.4 0 1 0 2.8 0a1.4 1.4 0 1 0 -2.8 0M238.10 513.9a1.4 1.4 0 1 0 2.8 0a1.4 1.4 0 1 0 -2.8 0M242.10 514.0a1.4 1.4 0 1 0 2.8 0a1.4 1.4 0 1 0 -2.8 0M246.10 514.0a1.4 1.4 0 1 0 2.8 0a1.4 1.4 0 1 0 -2.8 0M251.10 514.1a1.4 1.4 0 1 0 2.8 0a1.4 1.4 0 1 0 -2.8 0M255.10 514.1a1.4 1.4 0 1 0 2.8 0a1.4 1.4 0 1 0 -2.8 0M259.10 514.2a1.4 1.4 0 1 0 2.8 0a1.4 1.4 0 1 0 -2.8 0M263.10 514.2a1.4 1.4 0 1 0 2.8 0a1.4 1.4 0 1 0 -2.8 0M268.10 514.3a1.4 1.4 0 1 0 2.8 0a1.4 1.4 0 1 0 -2.8 0M272.10 514.3a1.4 1.4 0 1 0 2.8 0a1.4 1.4 0 1 0 -2.8 0M276.10 514.4a1.4 1.4 0 1 0 2.8 0a1.4 1.4 0 1 0 -2.8 0M280.10 514.5a1.4 1.4 0 1 0 2.8 0a1.4 1.4 0 1 0 -2.8 0M285.10 514.5a1.4 1.4 0 1 0 2.8 0a1.4 1.4 0 1 0 -2.8 0M289.10 514.6a1.4 1.4 0 1 0 2.8 0a1.4 1.4 0 1 0 -2.8 0M293.10 514.7a1.4 1.4 0 1 0 2.8 0a1.4 1.4 0 1 0 -2.8 0M297.10 514.7a1.4 1.4 0 1 0 2.8 0a1.4 1.4 0 1 0 -2.8 0M302.10 514.8a1.4 1.4 0 1 0 2.8 0a1.4 1.4 0 1 0 -2.8 0M306.10 514.9a1.4 1.4 0 1 0 2.8 0a1.4 1.4 0 1 0 -2.8 0M310.10 514.9a1.4 1.4 0 1 0 2.8 0a1.4 1.4 0 1 0 -2.8 0M314.10 515.0a1.4 1.4 0 1 0 2.8 0a1.4 1.4 0 1 0 -2.8 0M319.10 515.2a1.4 1.4 0 1 0 2.8 0a1.4 1.4 0 1 0 -2.8 0M323.10 515.3a1.4 1.4 0 1 0 2.8 0a1.4 1.4 0 1 0 -2.8 0M327.10 515.4a1.4 1.4 0 1 0 2.8 0a1.4 1.4 0 1 0 -2.8 0M331.10 515.6a1.4 1.4 0 1 0 2.8 0a1.4 1.4 0 1 0 -2.8 0M336.10 515.7a1.4 1.4 0 1 0 2.8 0a1.4 1.4 0 1 0 -2.8 0M340.10 515.9a1.4 1.4 0 1 0 2.8 0a1.4 1.4 0 1 0 -2.8 0M344.10 516.0a1.4 1.4 0 1 0 2.8 0a1.4 1.4 0 1 0 -2.8 0M348.10 516.2a1.4 1.4 0 1 0 2.8 0a1.4 1.4 0 1 0 -2.8 0M353.10 516.3a1.4 1.4 0 1 0 2.8 0a1.4 1.4 0 1 0 -2.8 0M357.10 516.5a1.4 1.4 0 1 0 2.8 0a1.4 1.4 0 1 0 -2.8 0M361.10 516.6a1.4 1.4 0 1 0 2.8 0a1.4 1.4 0 1 0 -2.8 0M365.10 516.8a1.4 1.4 0 1 0 2.8 0a1.4 1.4 0 1 0 -2.8 0M370.10 516.9a1.4 1.4 0 1 0 2.8 0a1.4 1.4 0 1 0 -2.8 0M374.10 517.1a1.4 1.4 0 1 0 2.8 0a1.4 1.4 0 1 0 -2.8 0M378.10 517.2a1.4 1.4 0 1 0 2.8 0a1.4 1.4 0 1 0 -2.8 0M382.10 517.4a1.4 1.4 0 1 0 2.8 0a1.4 1.4 0 1 0 -2.8 0M387.10 517.7a1.4 1.4 0 1 0 2.8 0a1.4 1.4 0 1 0 -2.8 0M391.10 517.9a1.4 1.4 0 1 0 2.8 0a1.4 1.4 0 1 0 -2.8 0M395.10 518.1a1.4 1.4 0 1 0 2.8 0a1.4 1.4 0 1 0 -2.8 0M399.10 518.3a1.4 1.4 0 1 0 2.8 0a1.4 1.4 0 1 0 -2.8 0M404.10 518.6a1.4 1.4 0 1 0 2.8 0a1.4 1.4 0 1 0 -2.8 0M408.10 518.8a1.4 1.4 0 1 0 2.8 0a1.4 1.4 0 1 0 -2.8 0M412.10 519.1a1.4 1.4 0 1 0 2.8 0a1.4 1.4 0 1 0 -2.8 0M416.10 519.4a1.4 1.4 0 1 0 2.8 0a1.4 1.4 0 1 0 -2.8 0M421.10 519.7a1.4 1.4 0 1 0 2.8 0a1.4 1.4 0 1 0 -2.8 0M425.10 519.9a1.4 1.4 0 1 0 2.8 0a1.4 1.4 0 1 0 -2.8 0M429.10 520.1a1.4 1.4 0 1 0 2.8 0a1.4 1.4 0 1 0 -2.8 0M433.10 520.3a1.4 1.4 0 1 0 2.8 0a1.4 1.4 0 1 0 -2.8 0M438.10 520.5a1.4 1.4 0 1 0 2.8 0a1.4 1.4 0 1 0 -2.8 0M442.10 520.7a1.4 1.4 0 1 0 2.8 0a1.4 1.4 0 1 0 -2.8 0M446.10 520.9a1.4 1.4 0 1 0 2.8 0a1.4 1.4 0 1 0 -2.8 0M450.10 521.1a1.4 1.4 0 1 0 2.8 0a1.4 1.4 0 1 0 -2.8 0M455.10 521.3a1.4 1.4 0 1 0 2.8 0a1.4 1.4 0 1 0 -2.8 0M459.10 521.5a1.4 1.4 0 1 0 2.8 0a1.4 1.4 0 1 0 -2.8 0M463.10 521.7a1.4 1.4 0 1 0 2.8 0a1.4 1.4 0 1 0 -2.8 0M467.10 521.9a1.4 1.4 0 1 0 2.8 0a1.4 1.4 0 1 0 -2.8 0M472.10 522.1a1.4 1.4 0 1 0 2.8 0a1.4 1.4 0 1 0 -2.8 0M476.10 522.3a1.4 1.4 0 1 0 2.8 0a1.4 1.4 0 1 0 -2.8 0M480.10 522.5a1.4 1.4 0 1 0 2.8 0a1.4 1.4 0 1 0 -2.8 0M484.10 522.7a1.4 1.4 0 1 0 2.8 0a1.4 1.4 0 1 0 -2.8 0M489.10 522.8a1.4 1.4 0 1 0 2.8 0a1.4 1.4 0 1 0 -2.8 0M493.10 523.0a1.4 1.4 0 1 0 2.8 0a1.4 1.4 0 1 0 -2.8 0M497.10 523.2a1.4 1.4 0 1 0 2.8 0a1.4 1.4 0 1 0 -2.8 0M501.10 523.5a1.4 1.4 0 1 0 2.8 0a1.4 1.4 0 1 0 -2.8 0M506.10 523.8a1.4 1.4 0 1 0 2.8 0a1.4 1.4 0 1 0 -2.8 0M510.10 524.1a1.4 1.4 0 1 0 2.8 0a1.4 1.4 0 1 0 -2.8 0M514.10 524.4a1.4 1.4 0 1 0 2.8 0a1.4 1.4 0 1 0 -2.8 0M518.10 524.7a1.4 1.4 0 1 0 2.8 0a1.4 1.4 0 1 0 -2.8 0M523.10 525.0a1.4 1.4 0 1 0 2.8 0a1.4 1.4 0 1 0 -2.8 0M527.10 525.3a1.4 1.4 0 1 0 2.8 0a1.4 1.4 0 1 0 -2.8 0M531.10 525.6a1.4 1.4 0 1 0 2.8 0a1.4 1.4 0 1 0 -2.8 0M535.10 525.9a1.4 1.4 0 1 0 2.8 0a1.4 1.4 0 1 0 -2.8 0M540.10 526.2a1.4 1.4 0 1 0 2.8 0a1.4 1.4 0 1 0 -2.8 0M544.10 526.5a1.4 1.4 0 1 0 2.8 0a1.4 1.4 0 1 0 -2.8 0M548.10 526.8a1.4 1.4 0 1 0 2.8 0a1.4 1.4 0 1 0 -2.8 0M552.10 527.1a1.4 1.4 0 1 0 2.8 0a1.4 1.4 0 1 0 -2.8 0M557.10 527.4a1.4 1.4 0 1 0 2.8 0a1.4 1.4 0 1 0 -2.8 0M561.10 527.7a1.4 1.4 0 1 0 2.8 0a1.4 1.4 0 1 0 -2.8 0M565.10 528.0a1.4 1.4 0 1 0 2.8 0a1.4 1.4 0 1 0 -2.8 0M569.10 528.3a1.4 1.4 0 1 0 2.8 0a1.4 1.4 0 1 0 -2.8 0M574.10 528.6a1.4 1.4 0 1 0 2.8 0a1.4 1.4 0 1 0 -2.8 0M578.10 528.9a1.4 1.4 0 1 0 2.8 0a1.4 1.4 0 1 0 -2.8 0M582.10 529.3a1.4 1.4 0 1 0 2.8 0a1.4 1.4 0 1 0 -2.8 0M586.10 529.6a1.4 1.4 0 1 0 2.8 0a1.4 1.4 0 1 0 -2.8 0M591.10 529.9a1.4 1.4 0 1 0 2.8 0a1.4 1.4 0 1 0 -2.8 0M595.10 530.2a1.4 1.4 0 1 0 2.8 0a1.4 1.4 0 1 0 -2.8 0M599.10 530.6a1.4 1.4 0 1 0 2.8 0a1.4 1.4 0 1 0 -2.8 0M603.10 530.9a1.4 1.4 0 1 0 2.8 0a1.4 1.4 0 1 0 -2.8 0M608.10 531.2a1.4 1.4 0 1 0 2.8 0a1.4 1.4 0 1 0 -2.8 0M612.10 531.6a1.4 1.4 0 1 0 2.8 0a1.4 1.4 0 1 0 -2.8 0M616.10 531.9a1.4 1.4 0 1 0 2.8 0a1.4 1.4 0 1 0 -2.8 0M620.10 532.2a1.4 1.4 0 1 0 2.8 0a1.4 1.4 0 1 0 -2.8 0M625.10 532.6a1.4 1.4 0 1 0 2.8 0a1.4 1.4 0 1 0 -2.8 0M629.10 532.9a1.4 1.4 0 1 0 2.8 0a1.4 1.4 0 1 0 -2.8 0M633.10 533.2a1.4 1.4 0 1 0 2.8 0a1.4 1.4 0 1 0 -2.8 0M637.10 533.5a1.4 1.4 0 1 0 2.8 0a1.4 1.4 0 1 0 -2.8 0M642.10 533.9a1.4 1.4 0 1 0 2.8 0a1.4 1.4 0 1 0 -2.8 0M646.10 534.2a1.4 1.4 0 1 0 2.8 0a1.4 1.4 0 1 0 -2.8 0M650.10 534.6a1.4 1.4 0 1 0 2.8 0a1.4 1.4 0 1 0 -2.8 0M654.10 535.0a1.4 1.4 0 1 0 2.8 0a1.4 1.4 0 1 0 -2.8 0M659.10 535.3a1.4 1.4 0 1 0 2.8 0a1.4 1.4 0 1 0 -2.8 0M663.10 535.7a1.4 1.4 0 1 0 2.8 0a1.4 1.4 0 1 0 -2.8 0M667.10 536.1a1.4 1.4 0 1 0 2.8 0a1.4 1.4 0 1 0 -2.8 0M671.10 536.5a1.4 1.4 0 1 0 2.8 0a1.4 1.4 0 1 0 -2.8 0M675.10 536.9a1.4 1.4 0 1 0 2.8 0a1.4 1.4 0 1 0 -2.8 0M680.10 537.3a1.4 1.4 0 1 0 2.8 0a1.4 1.4 0 1 0 -2.8 0M684.10 537.7a1.4 1.4 0 1 0 2.8 0a1.4 1.4 0 1 0 -2.8 0M688.10 538.1a1.4 1.4 0 1 0 2.8 0a1.4 1.4 0 1 0 -2.8 0M692.10 538.5a1.4 1.4 0 1 0 2.8 0a1.4 1.4 0 1 0 -2.8 0M697.10 538.9a1.4 1.4 0 1 0 2.8 0a1.4 1.4 0 1 0 -2.8 0M701.10 539.3a1.4 1.4 0 1 0 2.8 0a1.4 1.4 0 1 0 -2.8 0M705.10 539.7a1.4 1.4 0 1 0 2.8 0a1.4 1.4 0 1 0 -2.8 0M709.10 540.1a1.4 1.4 0 1 0 2.8 0a1.4 1.4 0 1 0 -2.8 0M714.10 540.5a1.4 1.4 0 1 0 2.8 0a1.4 1.4 0 1 0 -2.8 0M718.10 540.9a1.4 1.4 0 1 0 2.8 0a1.4 1.4 0 1 0 -2.8 0M722.10 541.3a1.4 1.4 0 1 0 2.8 0a1.4 1.4 0 1 0 -2.8 0M726.10 541.6a1.4 1.4 0 1 0 2.8 0a1.4 1.4 0 1 0 -2.8 0M731.10 542.0a1.4 1.4 0 1 0 2.8 0a1.4 1.4 0 1 0 -2.8 0M735.10 542.4a1.4 1.4 0 1 0 2.8 0a1.4 1.4 0 1 0 -2.8 0M739.10 542.8a1.4 1.4 0 1 0 2.8 0a1.4 1.4 0 1 0 -2.8 0M743.10 543.2a1.4 1.4 0 1 0 2.8 0a1.4 1.4 0 1 0 -2.8 0M748.10 543.5a1.4 1.4 0 1 0 2.8 0a1.4 1.4 0 1 0 -2.8 0M752.10 543.9a1.4 1.4 0 1 0 2.8 0a1.4 1.4 0 1 0 -2.8 0M756.10 544.3a1.4 1.4 0 1 0 2.8 0a1.4 1.4 0 1 0 -2.8 0M760.10 544.7a1.4 1.4 0 1 0 2.8 0a1.4 1.4 0 1 0 -2.8 0M765.10 545.0a1.4 1.4 0 1 0 2.8 0a1.4 1.4 0 1 0 -2.8 0M769.10 545.4a1.4 1.4 0 1 0 2.8 0a1.4 1.4 0 1 0 -2.8 0M773.10 545.8a1.4 1.4 0 1 0 2.8 0a1.4 1.4 0 1 0 -2.8 0M777.10 546.2a1.4 1.4 0 1 0 2.8 0a1.4 1.4 0 1 0 -2.8 0M782.10 546.6a1.4 1.4 0 1 0 2.8 0a1.4 1.4 0 1 0 -2.8 0M786.10 546.9a1.4 1.4 0 1 0 2.8 0a1.4 1.4 0 1 0 -2.8 0M790.10 547.3a1.4 1.4 0 1 0 2.8 0a1.4 1.4 0 1 0 -2.8 0M794.10 547.7a1.4 1.4 0 1 0 2.8 0a1.4 1.4 0 1 0 -2.8 0M799.10 548.1a1.4 1.4 0 1 0 2.8 0a1.4 1.4 0 1 0 -2.8 0M803.10 548.4a1.4 1.4 0 1 0 2.8 0a1.4 1.4 0 1 0 -2.8 0M807.10 548.9a1.4 1.4 0 1 0 2.8 0a1.4 1.4 0 1 0 -2.8 0M811.10 549.4a1.4 1.4 0 1 0 2.8 0a1.4 1.4 0 1 0 -2.8 0M816.10 549.8a1.4 1.4 0 1 0 2.8 0a1.4 1.4 0 1 0 -2.8 0M820.10 550.3a1.4 1.4 0 1 0 2.8 0a1.4 1.4 0 1 0 -2.8 0M824.10 550.7a1.4 1.4 0 1 0 2.8 0a1.4 1.4 0 1 0 -2.8 0M828.10 551.2a1.4 1.4 0 1 0 2.8 0a1.4 1.4 0 1 0 -2.8 0M833.10 551.7a1.4 1.4 0 1 0 2.8 0a1.4 1.4 0 1 0 -2.8 0M837.10 552.1a1.4 1.4 0 1 0 2.8 0a1.4 1.4 0 1 0 -2.8 0M841.10 552.6a1.4 1.4 0 1 0 2.8 0a1.4 1.4 0 1 0 -2.8 0M845.10 553.0a1.4 1.4 0 1 0 2.8 0a1.4 1.4 0 1 0 -2.8 0M850.10 553.5a1.4 1.4 0 1 0 2.8 0a1.4 1.4 0 1 0 -2.8 0M854.10 553.9a1.4 1.4 0 1 0 2.8 0a1.4 1.4 0 1 0 -2.8 0M858.10 554.4a1.4 1.4 0 1 0 2.8 0a1.4 1.4 0 1 0 -2.8 0M862.10 554.8a1.4 1.4 0 1 0 2.8 0a1.4 1.4 0 1 0 -2.8 0M867.10 555.3a1.4 1.4 0 1 0 2.8 0a1.4 1.4 0 1 0 -2.8 0M871.10 555.7a1.4 1.4 0 1 0 2.8 0a1.4 1.4 0 1 0 -2.8 0M875.10 556.1a1.4 1.4 0 1 0 2.8 0a1.4 1.4 0 1 0 -2.8 0M879.10 556.6a1.4 1.4 0 1 0 2.8 0a1.4 1.4 0 1 0 -2.8 0M884.10 557.0a1.4 1.4 0 1 0 2.8 0a1.4 1.4 0 1 0 -2.8 0M888.10 557.5a1.4 1.4 0 1 0 2.8 0a1.4 1.4 0 1 0 -2.8 0M892.10 557.9a1.4 1.4 0 1 0 2.8 0a1.4 1.4 0 1 0 -2.8 0M896.10 558.3a1.4 1.4 0 1 0 2.8 0a1.4 1.4 0 1 0 -2.8 0M901.10 558.7a1.4 1.4 0 1 0 2.8 0a1.4 1.4 0 1 0 -2.8 0M905.10 559.1a1.4 1.4 0 1 0 2.8 0a1.4 1.4 0 1 0 -2.8 0M909.10 559.5a1.4 1.4 0 1 0 2.8 0a1.4 1.4 0 1 0 -2.8 0M913.10 559.8a1.4 1.4 0 1 0 2.8 0a1.4 1.4 0 1 0 -2.8 0M918.10 560.2a1.4 1.4 0 1 0 2.8 0a1.4 1.4 0 1 0 -2.8 0M922.10 560.5a1.4 1.4 0 1 0 2.8 0a1.4 1.4 0 1 0 -2.8 0M926.10 560.9a1.4 1.4 0 1 0 2.8 0a1.4 1.4 0 1 0 -2.8 0M930.10 561.2a1.4 1.4 0 1 0 2.8 0a1.4 1.4 0 1 0 -2.8 0M935.10 561.6a1.4 1.4 0 1 0 2.8 0a1.4 1.4 0 1 0 -2.8 0M939.10 562.0a1.4 1.4 0 1 0 2.8 0a1.4 1.4 0 1 0 -2.8 0M943.10 562.3a1.4 1.4 0 1 0 2.8 0a1.4 1.4 0 1 0 -2.8 0M947.10 562.7a1.4 1.4 0 1 0 2.8 0a1.4 1.4 0 1 0 -2.8 0M952.10 563.1a1.4 1.4 0 1 0 2.8 0a1.4 1.4 0 1 0 -2.8 0M956.10 563.5a1.4 1.4 0 1 0 2.8 0a1.4 1.4 0 1 0 -2.8 0M960.10 564.0a1.4 1.4 0 1 0 2.8 0a1.4 1.4 0 1 0 -2.8 0M964.10 564.4a1.4 1.4 0 1 0 2.8 0a1.4 1.4 0 1 0 -2.8 0M969.10 564.9a1.4 1.4 0 1 0 2.8 0a1.4 1.4 0 1 0 -2.8 0M973.10 565.3a1.4 1.4 0 1 0 2.8 0a1.4 1.4 0 1 0 -2.8 0M977.10 565.7a1.4 1.4 0 1 0 2.8 0a1.4 1.4 0 1 0 -2.8 0M981.10 566.2a1.4 1.4 0 1 0 2.8 0a1.4 1.4 0 1 0 -2.8 0M986.10 566.6a1.4 1.4 0 1 0 2.8 0a1.4 1.4 0 1 0 -2.8 0M990.10 567.1a1.4 1.4 0 1 0 2.8 0a1.4 1.4 0 1 0 -2.8 0M994.10 567.5a1.4 1.4 0 1 0 2.8 0a1.4 1.4 0 1 0 -2.8 0M998.10 567.9a1.4 1.4 0 1 0 2.8 0a1.4 1.4 0 1 0 -2.8 0M1003.10 568.2a1.4 1.4 0 1 0 2.8 0a1.4 1.4 0 1 0 -2.8 0M1007.10 568.4a1.4 1.4 0 1 0 2.8 0a1.4 1.4 0 1 0 -2.8 0M1011.10 568.6a1.4 1.4 0 1 0 2.8 0a1.4 1.4 0 1 0 -2.8 0M1015.10 568.8a1.4 1.4 0 1 0 2.8 0a1.4 1.4 0 1 0 -2.8 0M1020.10 569.0a1.4 1.4 0 1 0 2.8 0a1.4 1.4 0 1 0 -2.8 0M1024.10 569.2a1.4 1.4 0 1 0 2.8 0a1.4 1.4 0 1 0 -2.8 0M1028.10 569.5a1.4 1.4 0 1 0 2.8 0a1.4 1.4 0 1 0 -2.8 0M1032.10 569.8a1.4 1.4 0 1 0 2.8 0a1.4 1.4 0 1 0 -2.8 0M1037.10 570.1a1.4 1.4 0 1 0 2.8 0a1.4 1.4 0 1 0 -2.8 0M1041.10 570.4a1.4 1.4 0 1 0 2.8 0a1.4 1.4 0 1 0 -2.8 0M1045.10 570.7a1.4 1.4 0 1 0 2.8 0a1.4 1.4 0 1 0 -2.8 0M1049.10 571.0a1.4 1.4 0 1 0 2.8 0a1.4 1.4 0 1 0 -2.8 0M1054.10 571.3a1.4 1.4 0 1 0 2.8 0a1.4 1.4 0 1 0 -2.8 0M1058.10 571.6a1.4 1.4 0 1 0 2.8 0a1.4 1.4 0 1 0 -2.8 0M1062.10 571.8a1.4 1.4 0 1 0 2.8 0a1.4 1.4 0 1 0 -2.8 0M1066.10 572.1a1.4 1.4 0 1 0 2.8 0a1.4 1.4 0 1 0 -2.8 0M1071.10 572.4a1.4 1.4 0 1 0 2.8 0a1.4 1.4 0 1 0 -2.8 0M1075.10 572.8a1.4 1.4 0 1 0 2.8 0a1.4 1.4 0 1 0 -2.8 0M1079.10 573.2a1.4 1.4 0 1 0 2.8 0a1.4 1.4 0 1 0 -2.8 0M1083.10 573.5a1.4 1.4 0 1 0 2.8 0a1.4 1.4 0 1 0 -2.8 0M1088.10 573.9a1.4 1.4 0 1 0 2.8 0a1.4 1.4 0 1 0 -2.8 0M1092.10 574.3a1.4 1.4 0 1 0 2.8 0a1.4 1.4 0 1 0 -2.8 0M1096.10 574.6a1.4 1.4 0 1 0 2.8 0a1.4 1.4 0 1 0 -2.8 0M1100.10 575.0a1.4 1.4 0 1 0 2.8 0a1.4 1.4 0 1 0 -2.8 0M1105.10 575.4a1.4 1.4 0 1 0 2.8 0a1.4 1.4 0 1 0 -2.8 0M1109.10 575.8a1.4 1.4 0 1 0 2.8 0a1.4 1.4 0 1 0 -2.8 0M1113.10 576.2a1.4 1.4 0 1 0 2.8 0a1.4 1.4 0 1 0 -2.8 0M1117.10 576.6a1.4 1.4 0 1 0 2.8 0a1.4 1.4 0 1 0 -2.8 0M1122.10 577.0a1.4 1.4 0 1 0 2.8 0a1.4 1.4 0 1 0 -2.8 0M1126.10 577.4a1.4 1.4 0 1 0 2.8 0a1.4 1.4 0 1 0 -2.8 0M1130.10 577.8a1.4 1.4 0 1 0 2.8 0a1.4 1.4 0 1 0 -2.8 0M1134.10 578.2a1.4 1.4 0 1 0 2.8 0a1.4 1.4 0 1 0 -2.8 0M1139.10 578.6a1.4 1.4 0 1 0 2.8 0a1.4 1.4 0 1 0 -2.8 0M1143.10 579.0a1.4 1.4 0 1 0 2.8 0a1.4 1.4 0 1 0 -2.8 0M1147.10 579.4a1.4 1.4 0 1 0 2.8 0a1.4 1.4 0 1 0 -2.8 0M1151.10 579.8a1.4 1.4 0 1 0 2.8 0a1.4 1.4 0 1 0 -2.8 0M1156.10 580.1a1.4 1.4 0 1 0 2.8 0a1.4 1.4 0 1 0 -2.8 0M1160.10 580.5a1.4 1.4 0 1 0 2.8 0a1.4 1.4 0 1 0 -2.8 0M1164.10 580.9a1.4 1.4 0 1 0 2.8 0a1.4 1.4 0 1 0 -2.8 0M1168.10 581.2a1.4 1.4 0 1 0 2.8 0a1.4 1.4 0 1 0 -2.8 0M1173.10 581.6a1.4 1.4 0 1 0 2.8 0a1.4 1.4 0 1 0 -2.8 0M1177.10 582.0a1.4 1.4 0 1 0 2.8 0a1.4 1.4 0 1 0 -2.8 0M1181.10 582.3a1.4 1.4 0 1 0 2.8 0a1.4 1.4 0 1 0 -2.8 0M1185.10 582.7a1.4 1.4 0 1 0 2.8 0a1.4 1.4 0 1 0 -2.8 0M1190.10 583.0a1.4 1.4 0 1 0 2.8 0a1.4 1.4 0 1 0 -2.8 0M1194.10 583.3a1.4 1.4 0 1 0 2.8 0a1.4 1.4 0 1 0 -2.8 0M1198.10 583.6a1.4 1.4 0 1 0 2.8 0a1.4 1.4 0 1 0 -2.8 0M1202.10 583.8a1.4 1.4 0 1 0 2.8 0a1.4 1.4 0 1 0 -2.8 0M1206.10 584.0a1.4 1.4 0 1 0 2.8 0a1.4 1.4 0 1 0 -2.8 0M1211.10 584.3a1.4 1.4 0 1 0 2.8 0a1.4 1.4 0 1 0 -2.8 0M1215.10 584.5a1.4 1.4 0 1 0 2.8 0a1.4 1.4 0 1 0 -2.8 0M1219.10 584.7a1.4 1.4 0 1 0 2.8 0a1.4 1.4 0 1 0 -2.8 0M1223.10 585.0a1.4 1.4 0 1 0 2.8 0a1.4 1.4 0 1 0 -2.8 0M1228.10 585.2a1.4 1.4 0 1 0 2.8 0a1.4 1.4 0 1 0 -2.8 0M1232.10 585.6a1.4 1.4 0 1 0 2.8 0a1.4 1.4 0 1 0 -2.8 0M1236.10 585.9a1.4 1.4 0 1 0 2.8 0a1.4 1.4 0 1 0 -2.8 0M1240.10 586.3a1.4 1.4 0 1 0 2.8 0a1.4 1.4 0 1 0 -2.8 0M1245.10 586.7a1.4 1.4 0 1 0 2.8 0a1.4 1.4 0 1 0 -2.8 0M1249.10 587.0a1.4 1.4 0 1 0 2.8 0a1.4 1.4 0 1 0 -2.8 0M1253.10 587.4a1.4 1.4 0 1 0 2.8 0a1.4 1.4 0 1 0 -2.8 0M1257.10 587.7a1.4 1.4 0 1 0 2.8 0a1.4 1.4 0 1 0 -2.8 0M1262.10 588.1a1.4 1.4 0 1 0 2.8 0a1.4 1.4 0 1 0 -2.8 0M1266.10 588.3a1.4 1.4 0 1 0 2.8 0a1.4 1.4 0 1 0 -2.8 0M1270.10 588.5a1.4 1.4 0 1 0 2.8 0a1.4 1.4 0 1 0 -2.8 0M1274.10 588.8a1.4 1.4 0 1 0 2.8 0a1.4 1.4 0 1 0 -2.8 0M1279.10 589.0a1.4 1.4 0 1 0 2.8 0a1.4 1.4 0 1 0 -2.8 0M1283.10 589.2a1.4 1.4 0 1 0 2.8 0a1.4 1.4 0 1 0 -2.8 0M1287.10 589.5a1.4 1.4 0 1 0 2.8 0a1.4 1.4 0 1 0 -2.8 0M1291.10 589.7a1.4 1.4 0 1 0 2.8 0a1.4 1.4 0 1 0 -2.8 0M1296.10 589.9a1.4 1.4 0 1 0 2.8 0a1.4 1.4 0 1 0 -2.8 0M1300.10 590.2a1.4 1.4 0 1 0 2.8 0a1.4 1.4 0 1 0 -2.8 0M1304.10 590.4a1.4 1.4 0 1 0 2.8 0a1.4 1.4 0 1 0 -2.8 0M1308.10 590.7a1.4 1.4 0 1 0 2.8 0a1.4 1.4 0 1 0 -2.8 0M1313.10 591.0a1.4 1.4 0 1 0 2.8 0a1.4 1.4 0 1 0 -2.8 0M1317.10 591.2a1.4 1.4 0 1 0 2.8 0a1.4 1.4 0 1 0 -2.8 0M1321.10 591.5a1.4 1.4 0 1 0 2.8 0a1.4 1.4 0 1 0 -2.8 0M1325.10 591.7a1.4 1.4 0 1 0 2.8 0a1.4 1.4 0 1 0 -2.8 0M1330.10 592.0a1.4 1.4 0 1 0 2.8 0a1.4 1.4 0 1 0 -2.8 0M1334.10 592.2a1.4 1.4 0 1 0 2.8 0a1.4 1.4 0 1 0 -2.8 0M1338.10 592.4a1.4 1.4 0 1 0 2.8 0a1.4 1.4 0 1 0 -2.8 0M1342.10 592.6a1.4 1.4 0 1 0 2.8 0a1.4 1.4 0 1 0 -2.8 0M1347.10 592.9a1.4 1.4 0 1 0 2.8 0a1.4 1.4 0 1 0 -2.8 0M1351.10 593.1a1.4 1.4 0 1 0 2.8 0a1.4 1.4 0 1 0 -2.8 0M1355.10 593.3a1.4 1.4 0 1 0 2.8 0a1.4 1.4 0 1 0 -2.8 0M1359.10 593.5a1.4 1.4 0 1 0 2.8 0a1.4 1.4 0 1 0 -2.8 0M1364.10 593.7a1.4 1.4 0 1 0 2.8 0a1.4 1.4 0 1 0 -2.8 0M1368.10 593.9a1.4 1.4 0 1 0 2.8 0a1.4 1.4 0 1 0 -2.8 0M1372.10 594.1a1.4 1.4 0 1 0 2.8 0a1.4 1.4 0 1 0 -2.8 0M1376.10 594.3a1.4 1.4 0 1 0 2.8 0a1.4 1.4 0 1 0 -2.8 0M1381.10 594.5a1.4 1.4 0 1 0 2.8 0a1.4 1.4 0 1 0 -2.8 0M1385.10 594.7a1.4 1.4 0 1 0 2.8 0a1.4 1.4 0 1 0 -2.8 0M1389.10 594.9a1.4 1.4 0 1 0 2.8 0a1.4 1.4 0 1 0 -2.8 0M1393.10 595.2a1.4 1.4 0 1 0 2.8 0a1.4 1.4 0 1 0 -2.8 0M1398.10 595.4a1.4 1.4 0 1 0 2.8 0a1.4 1.4 0 1 0 -2.8 0M1402.10 595.5a1.4 1.4 0 1 0 2.8 0a1.4 1.4 0 1 0 -2.8 0M1406.10 595.6a1.4 1.4 0 1 0 2.8 0a1.4 1.4 0 1 0 -2.8 0M1410.10 595.8a1.4 1.4 0 1 0 2.8 0a1.4 1.4 0 1 0 -2.8 0M1415.10 595.9a1.4 1.4 0 1 0 2.8 0a1.4 1.4 0 1 0 -2.8 0M1419.10 596.0a1.4 1.4 0 1 0 2.8 0a1.4 1.4 0 1 0 -2.8 0M1423.10 596.2a1.4 1.4 0 1 0 2.8 0a1.4 1.4 0 1 0 -2.8 0M1427.10 596.3a1.4 1.4 0 1 0 2.8 0a1.4 1.4 0 1 0 -2.8 0M1432.10 596.4a1.4 1.4 0 1 0 2.8 0a1.4 1.4 0 1 0 -2.8 0M1436.10 596.6a1.4 1.4 0 1 0 2.8 0a1.4 1.4 0 1 0 -2.8 0M1440.10 596.7a1.4 1.4 0 1 0 2.8 0a1.4 1.4 0 1 0 -2.8 0M1444.10 596.8a1.4 1.4 0 1 0 2.8 0a1.4 1.4 0 1 0 -2.8 0M1449.10 597.0a1.4 1.4 0 1 0 2.8 0a1.4 1.4 0 1 0 -2.8 0M1453.10 597.2a1.4 1.4 0 1 0 2.8 0a1.4 1.4 0 1 0 -2.8 0M1457.10 597.4a1.4 1.4 0 1 0 2.8 0a1.4 1.4 0 1 0 -2.8 0M1461.10 597.5a1.4 1.4 0 1 0 2.8 0a1.4 1.4 0 1 0 -2.8 0M1466.10 597.7a1.4 1.4 0 1 0 2.8 0a1.4 1.4 0 1 0 -2.8 0M1470.10 597.9a1.4 1.4 0 1 0 2.8 0a1.4 1.4 0 1 0 -2.8 0M1474.10 598.1a1.4 1.4 0 1 0 2.8 0a1.4 1.4 0 1 0 -2.8 0M1478.10 598.2a1.4 1.4 0 1 0 2.8 0a1.4 1.4 0 1 0 -2.8 0M1483.10 598.4a1.4 1.4 0 1 0 2.8 0a1.4 1.4 0 1 0 -2.8 0M1487.10 598.5a1.4 1.4 0 1 0 2.8 0a1.4 1.4 0 1 0 -2.8 0M1491.10 598.6a1.4 1.4 0 1 0 2.8 0a1.4 1.4 0 1 0 -2.8 0M1495.10 598.7a1.4 1.4 0 1 0 2.8 0a1.4 1.4 0 1 0 -2.8 0M1500.10 598.7a1.4 1.4 0 1 0 2.8 0a1.4 1.4 0 1 0 -2.8 0M1504.10 598.8a1.4 1.4 0 1 0 2.8 0a1.4 1.4 0 1 0 -2.8 0M1508.10 598.9a1.4 1.4 0 1 0 2.8 0a1.4 1.4 0 1 0 -2.8 0M1512.10 599.0a1.4 1.4 0 1 0 2.8 0a1.4 1.4 0 1 0 -2.8 0M1517.10 599.1a1.4 1.4 0 1 0 2.8 0a1.4 1.4 0 1 0 -2.8 0M1521.10 599.2a1.4 1.4 0 1 0 2.8 0a1.4 1.4 0 1 0 -2.8 0M1525.10 599.3a1.4 1.4 0 1 0 2.8 0a1.4 1.4 0 1 0 -2.8 0M1529.10 599.4a1.4 1.4 0 1 0 2.8 0a1.4 1.4 0 1 0 -2.8 0M1534.10 599.4a1.4 1.4 0 1 0 2.8 0a1.4 1.4 0 1 0 -2.8 0M1538.10 599.5a1.4 1.4 0 1 0 2.8 0a1.4 1.4 0 1 0 -2.8 0M1542.10 599.6a1.4 1.4 0 1 0 2.8 0a1.4 1.4 0 1 0 -2.8 0M1546.10 599.7a1.4 1.4 0 1 0 2.8 0a1.4 1.4 0 1 0 -2.8 0M1551.10 599.8a1.4 1.4 0 1 0 2.8 0a1.4 1.4 0 1 0 -2.8 0M1555.10 599.9a1.4 1.4 0 1 0 2.8 0a1.4 1.4 0 1 0 -2.8 0M1559.10 600.0a1.4 1.4 0 1 0 2.8 0a1.4 1.4 0 1 0 -2.8 0M1563.10 600.1a1.4 1.4 0 1 0 2.8 0a1.4 1.4 0 1 0 -2.8 0M1568.10 600.2a1.4 1.4 0 1 0 2.8 0a1.4 1.4 0 1 0 -2.8 0M1572.10 600.3a1.4 1.4 0 1 0 2.8 0a1.4 1.4 0 1 0 -2.8 0M1576.10 600.3a1.4 1.4 0 1 0 2.8 0a1.4 1.4 0 1 0 -2.8 0M1580.10 600.3a1.4 1.4 0 1 0 2.8 0a1.4 1.4 0 1 0 -2.8 0M1585.10 600.3a1.4 1.4 0 1 0 2.8 0a1.4 1.4 0 1 0 -2.8 0M1589.10 600.3a1.4 1.4 0 1 0 2.8 0a1.4 1.4 0 1 0 -2.8 0M1593.10 600.3a1.4 1.4 0 1 0 2.8 0a1.4 1.4 0 1 0 -2.8 0M1597.10 600.3a1.4 1.4 0 1 0 2.8 0a1.4 1.4 0 1 0 -2.8 0M1602.10 600.3a1.4 1.4 0 1 0 2.8 0a1.4 1.4 0 1 0 -2.8 0M1606.10 600.3a1.4 1.4 0 1 0 2.8 0a1.4 1.4 0 1 0 -2.8 0M1610.10 600.3a1.4 1.4 0 1 0 2.8 0a1.4 1.4 0 1 0 -2.8 0M1614.10 600.3a1.4 1.4 0 1 0 2.8 0a1.4 1.4 0 1 0 -2.8 0M1619.10 600.3a1.4 1.4 0 1 0 2.8 0a1.4 1.4 0 1 0 -2.8 0M1623.10 600.3a1.4 1.4 0 1 0 2.8 0a1.4 1.4 0 1 0 -2.8 0M1627.10 600.3a1.4 1.4 0 1 0 2.8 0a1.4 1.4 0 1 0 -2.8 0M1631.10 600.3a1.4 1.4 0 1 0 2.8 0a1.4 1.4 0 1 0 -2.8 0M1636.10 600.3a1.4 1.4 0 1 0 2.8 0a1.4 1.4 0 1 0 -2.8 0M1640.10 600.3a1.4 1.4 0 1 0 2.8 0a1.4 1.4 0 1 0 -2.8 0M1644.10 600.3a1.4 1.4 0 1 0 2.8 0a1.4 1.4 0 1 0 -2.8 0M1648.10 600.3a1.4 1.4 0 1 0 2.8 0a1.4 1.4 0 1 0 -2.8 0M1653.10 600.3a1.4 1.4 0 1 0 2.8 0a1.4 1.4 0 1 0 -2.8 0M1657.10 600.3a1.4 1.4 0 1 0 2.8 0a1.4 1.4 0 1 0 -2.8 0M1661.10 600.3a1.4 1.4 0 1 0 2.8 0a1.4 1.4 0 1 0 -2.8 0M1665.10 600.3a1.4 1.4 0 1 0 2.8 0a1.4 1.4 0 1 0 -2.8 0M1670.10 600.3a1.4 1.4 0 1 0 2.8 0a1.4 1.4 0 1 0 -2.8 0M1674.10 600.3a1.4 1.4 0 1 0 2.8 0a1.4 1.4 0 1 0 -2.8 0M1678.10 600.3a1.4 1.4 0 1 0 2.8 0a1.4 1.4 0 1 0 -2.8 0M1682.10 600.3a1.4 1.4 0 1 0 2.8 0a1.4 1.4 0 1 0 -2.8 0M1687.10 600.3a1.4 1.4 0 1 0 2.8 0a1.4 1.4 0 1 0 -2.8 0M1691.10 600.3a1.4 1.4 0 1 0 2.8 0a1.4 1.4 0 1 0 -2.8 0M1695.10 600.3a1.4 1.4 0 1 0 2.8 0a1.4 1.4 0 1 0 -2.8 0M1699.10 600.2a1.4 1.4 0 1 0 2.8 0a1.4 1.4 0 1 0 -2.8 0M1704.10 600.0a1.4 1.4 0 1 0 2.8 0a1.4 1.4 0 1 0 -2.8 0M1708.10 599.8a1.4 1.4 0 1 0 2.8 0a1.4 1.4 0 1 0 -2.8 0M1712.10 599.6a1.4 1.4 0 1 0 2.8 0a1.4 1.4 0 1 0 -2.8 0M1716.10 599.5a1.4 1.4 0 1 0 2.8 0a1.4 1.4 0 1 0 -2.8 0M1721.10 599.3a1.4 1.4 0 1 0 2.8 0a1.4 1.4 0 1 0 -2.8 0M1725.10 599.2a1.4 1.4 0 1 0 2.8 0a1.4 1.4 0 1 0 -2.8 0M1729.10 599.1a1.4 1.4 0 1 0 2.8 0a1.4 1.4 0 1 0 -2.8 0M1733.10 599.0a1.4 1.4 0 1 0 2.8 0a1.4 1.4 0 1 0 -2.8 0M1737.10 598.8a1.4 1.4 0 1 0 2.8 0a1.4 1.4 0 1 0 -2.8 0M1742.10 598.7a1.4 1.4 0 1 0 2.8 0a1.4 1.4 0 1 0 -2.8 0M1746.10 598.6a1.4 1.4 0 1 0 2.8 0a1.4 1.4 0 1 0 -2.8 0M1750.10 598.5a1.4 1.4 0 1 0 2.8 0a1.4 1.4 0 1 0 -2.8 0M1754.10 598.4a1.4 1.4 0 1 0 2.8 0a1.4 1.4 0 1 0 -2.8 0M1759.10 598.2a1.4 1.4 0 1 0 2.8 0a1.4 1.4 0 1 0 -2.8 0M1763.10 598.0a1.4 1.4 0 1 0 2.8 0a1.4 1.4 0 1 0 -2.8 0M1767.10 597.8a1.4 1.4 0 1 0 2.8 0a1.4 1.4 0 1 0 -2.8 0M1771.10 597.7a1.4 1.4 0 1 0 2.8 0a1.4 1.4 0 1 0 -2.8 0M1776.10 597.5a1.4 1.4 0 1 0 2.8 0a1.4 1.4 0 1 0 -2.8 0M1780.10 597.3a1.4 1.4 0 1 0 2.8 0a1.4 1.4 0 1 0 -2.8 0M1784.10 597.1a1.4 1.4 0 1 0 2.8 0a1.4 1.4 0 1 0 -2.8 0M1788.10 596.9a1.4 1.4 0 1 0 2.8 0a1.4 1.4 0 1 0 -2.8 0M1793.10 596.8a1.4 1.4 0 1 0 2.8 0a1.4 1.4 0 1 0 -2.8 0M1797.10 596.6a1.4 1.4 0 1 0 2.8 0a1.4 1.4 0 1 0 -2.8 0M1801.10 596.5a1.4 1.4 0 1 0 2.8 0a1.4 1.4 0 1 0 -2.8 0M1805.10 596.4a1.4 1.4 0 1 0 2.8 0a1.4 1.4 0 1 0 -2.8 0M1810.10 596.2a1.4 1.4 0 1 0 2.8 0a1.4 1.4 0 1 0 -2.8 0M1814.10 596.0a1.4 1.4 0 1 0 2.8 0a1.4 1.4 0 1 0 -2.8 0M1818.10 595.8a1.4 1.4 0 1 0 2.8 0a1.4 1.4 0 1 0 -2.8 0M1822.10 595.6a1.4 1.4 0 1 0 2.8 0a1.4 1.4 0 1 0 -2.8 0M1827.10 595.5a1.4 1.4 0 1 0 2.8 0a1.4 1.4 0 1 0 -2.8 0M1831.10 595.3a1.4 1.4 0 1 0 2.8 0a1.4 1.4 0 1 0 -2.8 0M1835.10 595.0a1.4 1.4 0 1 0 2.8 0a1.4 1.4 0 1 0 -2.8 0M1839.10 594.8a1.4 1.4 0 1 0 2.8 0a1.4 1.4 0 1 0 -2.8 0M1844.10 594.6a1.4 1.4 0 1 0 2.8 0a1.4 1.4 0 1 0 -2.8 0M1848.10 594.4a1.4 1.4 0 1 0 2.8 0a1.4 1.4 0 1 0 -2.8 0M1852.10 594.2a1.4 1.4 0 1 0 2.8 0a1.4 1.4 0 1 0 -2.8 0M1856.10 593.9a1.4 1.4 0 1 0 2.8 0a1.4 1.4 0 1 0 -2.8 0M1861.10 593.6a1.4 1.4 0 1 0 2.8 0a1.4 1.4 0 1 0 -2.8 0M1865.10 593.4a1.4 1.4 0 1 0 2.8 0a1.4 1.4 0 1 0 -2.8 0M1869.10 593.1a1.4 1.4 0 1 0 2.8 0a1.4 1.4 0 1 0 -2.8 0M1873.10 592.9a1.4 1.4 0 1 0 2.8 0a1.4 1.4 0 1 0 -2.8 0M1878.10 592.6a1.4 1.4 0 1 0 2.8 0a1.4 1.4 0 1 0 -2.8 0M1882.10 592.4a1.4 1.4 0 1 0 2.8 0a1.4 1.4 0 1 0 -2.8 0M1886.10 592.2a1.4 1.4 0 1 0 2.8 0a1.4 1.4 0 1 0 -2.8 0M1890.10 591.9a1.4 1.4 0 1 0 2.8 0a1.4 1.4 0 1 0 -2.8 0M1895.10 591.7a1.4 1.4 0 1 0 2.8 0a1.4 1.4 0 1 0 -2.8 0M1899.10 591.5a1.4 1.4 0 1 0 2.8 0a1.4 1.4 0 1 0 -2.8 0M1903.10 591.3a1.4 1.4 0 1 0 2.8 0a1.4 1.4 0 1 0 -2.8 0M1907.10 591.1a1.4 1.4 0 1 0 2.8 0a1.4 1.4 0 1 0 -2.8 0M1912.10 590.9a1.4 1.4 0 1 0 2.8 0a1.4 1.4 0 1 0 -2.8 0" fill="none" stroke="#000" stroke-width="1"/><path d="M129.5 514.8V569.2M133.5 514.8V569.2M137.5 514.7V569.2M141.5 514.7V569.2M145.5 514.6V569.2M150.5 514.6V569.2M154.5 514.5V569.2M158.5 514.4V569.2M162.5 514.3V569.2M167.5 514.2V569.2M171.5 514.1V569.2M175.5 514.0V569.2M179.5 513.9V569.2M184.5 513.9V569.2M188.5 513.9V569.2M192.5 513.8V569.2M196.5 513.8V569.2M201.5 513.8V569.2M205.5 513.8V569.2M209.5 513.7V569.2M213.5 513.7V569.2M218.5 513.7V569.2M222.5 513.7V569.2M226.5 513.8V569.2M230.5 513.8V569.2M235.5 513.9V569.2M239.5 513.9V569.2M243.5 514.0V569.2M247.5 514.0V569.2M252.5 514.1V569.2M256.5 514.1V569.2M260.5 514.2V569.2M264.5 514.2V569.2M269.5 514.3V569.2M273.5 514.3V569.2M277.5 514.4V569.2M281.5 514.5V569.2M286.5 514.5V569.2M290.5 514.6V569.2M294.5 514.7V569.2M298.5 514.7V569.2M303.5 514.8V569.2M307.5 514.9V569.2M311.5 514.9V569.2M315.5 515.0V569.2M320.5 515.2V569.2M324.5 515.3V569.2M328.5 515.4V569.2M332.5 515.6V569.2M337.5 515.7V569.2M341.5 515.9V569.2M345.5 516.0V569.2M349.5 516.2V569.2M354.5 516.3V569.2M358.5 516.5V569.2M362.5 516.6V569.2M366.5 516.8V569.2M371.5 516.9V569.2M375.5 517.1V569.2M379.5 517.2V569.2M383.5 517.4V569.2M388.5 517.7V569.2M392.5 517.9V569.2M396.5 518.1V569.2M400.5 518.3V569.2M405.5 518.6V569.2M409.5 518.8V569.2M413.5 519.1V569.2M417.5 519.4V569.2M422.5 519.7V569.2M426.5 519.9V569.2M430.5 520.1V569.2M434.5 520.3V569.2M439.5 520.5V569.2M443.5 520.7V569.2M447.5 520.9V569.2M451.5 521.1V569.2M456.5 521.3V569.2M460.5 521.5V569.2M464.5 521.7V569.2M468.5 521.9V569.2M473.5 522.1V569.2M477.5 522.3V569.2M481.5 522.5V569.2M485.5 522.7V569.2M490.5 522.8V569.2M494.5 523.0V569.2M498.5 523.2V569.2M502.5 523.5V569.2M507.5 523.8V569.2M511.5 524.1V569.2M515.5 524.4V569.2M519.5 524.7V569.2M524.5 525.0V569.2M528.5 525.3V569.2M532.5 525.6V569.2M536.5 525.9V569.2M541.5 526.2V569.2M545.5 526.5V569.2M549.5 526.8V569.2M553.5 527.1V569.2M558.5 527.4V569.2M562.5 527.7V569.2M566.5 528.0V569.2M570.5 528.3V569.2M575.5 528.6V569.2M579.5 528.9V569.2M583.5 529.3V569.2M587.5 529.6V569.2M592.5 529.9V569.2M596.5 530.2V569.2M600.5 530.6V569.2M604.5 530.9V569.2M609.5 531.2V569.2M613.5 531.6V569.2M617.5 531.9V569.2M621.5 532.2V569.2M626.5 532.6V569.2M630.5 532.9V569.2M634.5 533.2V569.2M638.5 533.5V569.2M643.5 533.9V569.2M647.5 534.2V569.2M651.5 534.6V569.2M655.5 535.0V569.2M660.5 535.3V569.2M664.5 535.7V569.2M668.5 536.1V569.2M672.5 536.5V569.2M676.5 536.9V569.2M681.5 537.3V569.2M685.5 537.7V569.2M689.5 538.1V569.2M693.5 538.5V569.2M698.5 538.9V569.2M702.5 539.3V569.2M706.5 539.7V569.2M710.5 540.1V569.2M715.5 540.5V569.2M719.5 540.9V569.2M723.5 541.3V569.2M727.5 541.6V569.2M732.5 542.0V569.2M736.5 542.4V569.2M740.5 542.8V569.2M744.5 543.2V569.2M749.5 543.5V569.2M753.5 543.9V569.2M757.5 544.3V569.2M761.5 544.7V569.2M766.5 545.0V569.2M770.5 545.4V569.2M774.5 545.8V569.2M778.5 546.2V569.2M783.5 546.6V569.2M787.5 546.9V569.2M791.5 547.3V569.2M795.5 547.7V569.2M800.5 548.1V569.2M804.5 548.4V569.2M808.5 548.9V569.2M812.5 549.4V569.2M817.5 549.8V569.2M821.5 550.3V569.2M825.5 550.7V569.2M829.5 551.2V569.2M834.5 551.7V569.2M838.5 552.1V569.2M842.5 552.6V569.2M846.5 553.0V569.2M851.5 553.5V569.2M855.5 553.9V569.2M859.5 554.4V569.2M863.5 554.8V569.2M868.5 555.3V569.2M872.5 555.7V569.2M876.5 556.1V569.2M880.5 556.6V569.2M885.5 557.0V569.2M889.5 557.5V569.2M893.5 557.9V569.2M897.5 558.3V569.2M902.5 558.7V569.2M906.5 559.1V569.2M910.5 559.5V569.2M914.5 559.8V569.2M919.5 560.2V569.2M923.5 560.5V569.2M927.5 560.9V569.2M931.5 561.2V569.2M936.5 561.6V569.2M940.5 562.0V569.2M944.5 562.3V569.2M948.5 562.7V569.2M953.5 563.1V569.2M957.5 563.5V569.2M961.5 564.0V569.2M965.5 564.4V569.2M970.5 564.9V569.2M974.5 565.3V569.2M978.5 565.7V569.2M982.5 566.2V569.2M987.5 566.6V569.2M991.5 567.1V569.2M995.5 567.5V569.2M999.5 567.9V569.2M1004.5 568.2V569.2M1008.5 568.4V569.2M1012.5 568.6V569.2M1016.5 568.8V569.2M1021.5 569.0V569.2M1025.5 569.2V569.2M1029.5 569.2V569.5M1033.5 569.2V569.8M1038.5 569.2V570.1M1042.5 569.2V570.4M1046.5 569.2V570.7M1050.5 569.2V571.0M1055.5 569.2V571.3M1059.5 569.2V571.6M1063.5 569.2V571.8M1067.5 569.2V572.1M1072.5 569.2V572.4M1076.5 569.2V572.8M1080.5 569.2V573.2M1084.5 569.2V573.5M1089.5 569.2V573.9M1093.5 569.2V574.3M1097.5 569.2V574.6M1101.5 569.2V575.0M1106.5 569.2V575.4M1110.5 569.2V575.8M1114.5 569.2V576.2M1118.5 569.2V576.6M1123.5 569.2V577.0M1127.5 569.2V577.4M1131.5 569.2V577.8M1135.5 569.2V578.2M1140.5 569.2V578.6M1144.5 569.2V579.0M1148.5 569.2V579.4M1152.5 569.2V579.8M1157.5 569.2V580.1M1161.5 569.2V580.5M1165.5 569.2V580.9M1169.5 569.2V581.2M1174.5 569.2V581.6M1178.5 569.2V582.0M1182.5 569.2V582.3M1186.5 569.2V582.7M1191.5 569.2V583.0M1195.5 569.2V583.3M1199.5 569.2V583.6M1203.5 569.2V583.8M1207.5 569.2V584.0M1212.5 569.2V584.3M1216.5 569.2V584.5M1220.5 569.2V584.7M1224.5 569.2V585.0M1229.5 569.2V585.2M1233.5 569.2V585.6M1237.5 569.2V585.9M1241.5 569.2V586.3M1246.5 569.2V586.7M1250.5 569.2V587.0M1254.5 569.2V587.4M1258.5 569.2V587.7M1263.5 569.2V588.1M1267.5 569.2V588.3M1271.5 569.2V588.5M1275.5 569.2V588.8M1280.5 569.2V589.0M1284.5 569.2V589.2M1288.5 569.2V589.5M1292.5 569.2V589.7M1297.5 569.2V589.9M1301.5 569.2V590.2M1305.5 569.2V590.4M1309.5 569.2V590.7M1314.5 569.2V591.0M1318.5 569.2V591.2M1322.5 569.2V591.5M1326.5 569.2V591.7M1331.5 569.2V592.0M1335.5 569.2V592.2M1339.5 569.2V592.4M1343.5 569.2V592.6M1348.5 569.2V592.9M1352.5 569.2V593.1M1356.5 569.2V593.3M1360.5 569.2V593.5M1365.5 569.2V593.7M1369.5 569.2V593.9M1373.5 569.2V594.1M1377.5 569.2V594.3M1382.5 569.2V594.5M1386.5 569.2V594.7M1390.5 569.2V594.9M1394.5 569.2V595.2M1399.5 569.2V595.4M1403.5 569.2V595.5M1407.5 569.2V595.6M1411.5 569.2V595.8M1416.5 569.2V595.9M1420.5 569.2V596.0M1424.5 569.2V596.2M1428.5 569.2V596.3M1433.5 569.2V596.4M1437.5 569.2V596.6M1441.5 569.2V596.7M1445.5 569.2V596.8M1450.5 569.2V597.0M1454.5 569.2V597.2M1458.5 569.2V597.4M1462.5 569.2V597.5M1467.5 569.2V597.7M1471.5 569.2V597.9M1475.5 569.2V598.1M1479.5 569.2V598.2M1484.5 569.2V598.4M1488.5 569.2V598.5M1492.5 569.2V598.6M1496.5 569.2V598.7M1501.5 569.2V598.7M1505.5 569.2V598.8M1509.5 569.2V598.9M1513.5 569.2V599.0M1518.5 569.2V599.1M1522.5 569.2V599.2M1526.5 569.2V599.3M1530.5 569.2V599.4M1535.5 569.2V599.4M1539.5 569.2V599.5M1543.5 569.2V599.6M1547.5 569.2V599.7M1552.5 569.2V599.8M1556.5 569.2V599.9M1560.5 569.2V600.0M1564.5 569.2V600.1M1569.5 569.2V600.2M1573.5 569.2V600.3M1577.5 569.2V600.3M1581.5 569.2V600.3M1586.5 569.2V600.3M1590.5 569.2V600.3M1594.5 569.2V600.3M1598.5 569.2V600.3M1603.5 569.2V600.3M1607.5 569.2V600.3M1611.5 569.2V600.3M1615.5 569.2V600.3M1620.5 569.2V600.3M1624.5 569.2V600.3M1628.5 569.2V600.3M1632.5 569.2V600.3M1637.5 569.2V600.3M1641.5 569.2V600.3M1645.5 569.2V600.3M1649.5 569.2V600.3M1654.5 569.2V600.3M1658.5 569.2V600.3M1662.5 569.2V600.3M1666.5 569.2V600.3M1671.5 569.2V600.3M1675.5 569.2V600.3M1679.5 569.2V600.3M1683.5 569.2V600.3M1688.5 569.2V600.3M1692.5 569.2V600.3M1696.5 569.2V600.3M1700.5 569.2V600.2M1705.5 569.2V600.0M1709.5 569.2V599.8M1713.5 569.2V599.6M1717.5 569.2V599.5M1722.5 569.2V599.3M1726.5 569.2V599.2M1730.5 569.2V599.1M1734.5 569.2V599.0M1738.5 569.2V598.8M1743.5 569.2V598.7M1747.5 569.2V598.6M1751.5 569.2V598.5M1755.5 569.2V598.4M1760.5 569.2V598.2M1764.5 569.2V598.0M1768.5 569.2V597.8M1772.5 569.2V597.7M1777.5 569.2V597.5M1781.5 569.2V597.3M1785.5 569.2V597.1M1789.5 569.2V596.9M1794.5 569.2V596.8M1798.5 569.2V596.6M1802.5 569.2V596.5M1806.5 569.2V596.4M1811.5 569.2V596.2M1815.5 569.2V596.0M1819.5 569.2V595.8M1823.5 569.2V595.6M1828.5 569.2V595.5M1832.5 569.2V595.3M1836.5 569.2V595.0M1840.5 569.2V594.8M1845.5 569.2V594.6M1849.5 569.2V594.4M1853.5 569.2V594.2M1857.5 569.2V593.9M1862.5 569.2V593.6M1866.5 569.2V593.4M1870.5 569.2V593.1M1874.5 569.2V592.9M1879.5 569.2V592.6M1883.5 569.2V592.4M1887.5 569.2V592.2M1891.5 569.2V591.9M1896.5 569.2V591.7M1900.5 569.2V591.5M1904.5 569.2V591.3M1908.5 569.2V591.1M1913.5 569.2V590.9" stroke="#3232c8" stroke-width="1" fill="none"/><rect x="127" y="733" width="1787" height="1" fill="#000"/><path d="M127.10 679.0a2.4 2.4 0 1 0 4.8 0a2.4 2.4 0 1 0 -4.8 0M131.10 678.9a2.4 2.4 0 1 0 4.8 0a2.4 2.4 0 1 0 -4.8 0M135.10 678.9a2.4 2.4 0 1 0 4.8 0a2.4 2.4 0 1 0 -4.8 0M139.10 678.8a2.4 2.4 0 1 0 4.8 0a2.4 2.4 0 1 0 -4.8 0M143.10 678.8a2.4 2.4 0 1 0 4.8 0a2.4 2.4 0 1 0 -4.8 0M148.10 678.7a2.4 2.4 0 1 0 4.8 0a2.4 2.4 0 1 0 -4.8 0M152.10 678.6a2.4 2.4 0 1 0 4.8 0a2.4 2.4 0 1 0 -4.8 0M156.10 678.5a2.4 2.4 0 1 0 4.8 0a2.4 2.4 0 1 0 -4.8 0M160.10 678.4a2.4 2.4 0 1 0 4.8 0a2.4 2.4 0 1 0 -4.8 0M165.10 678.3a2.4 2.4 0 1 0 4.8 0a2.4 2.4 0 1 0 -4.8 0M169.10 678.2a2.4 2.4 0 1 0 4.8 0a2.4 2.4 0 1 0 -4.8 0M173.10 678.1a2.4 2.4 0 1 0 4.8 0a2.4 2.4 0 1 0 -4.8 0M177.10 678.1a2.4 2.4 0 1 0 4.8 0a2.4 2.4 0 1 0 -4.8 0M182.10 678.0a2.4 2.4 0 1 0 4.8 0a2.4 2.4 0 1 0 -4.8 0M186.10 678.0a2.4 2.4 0 1 0 4.8 0a2.4 2.4 0 1 0 -4.8 0M190.10 678.0a2.4 2.4 0 1 0 4.8 0a2.4 2.4 0 1 0 -4.8 0M194.10 678.0a2.4 2.4 0 1 0 4.8 0a2.4 2.4 0 1 0 -4.8 0M199.10 677.9a2.4 2.4 0 1 0 4.8 0a2.4 2.4 0 1 0 -4.8 0M203.10 677.9a2.4 2.4 0 1 0 4.8 0a2.4 2.4 0 1 0 -4.8 0M207.10 677.9a2.4 2.4 0 1 0 4.8 0a2.4 2.4 0 1 0 -4.8 0M211.10 677.9a2.4 2.4 0 1 0 4.8 0a2.4 2.4 0 1 0 -4.8 0M216.10 677.8a2.4 2.4 0 1 0 4.8 0a2.4 2.4 0 1 0 -4.8 0M220.10 677.9a2.4 2.4 0 1 0 4.8 0a2.4 2.4 0 1 0 -4.8 0M224.10 677.9a2.4 2.4 0 1 0 4.8 0a2.4 2.4 0 1 0 -4.8 0M228.10 678.0a2.4 2.4 0 1 0 4.8 0a2.4 2.4 0 1 0 -4.8 0M233.10 678.0a2.4 2.4 0 1 0 4.8 0a2.4 2.4 0 1 0 -4.8 0M237.10 678.1a2.4 2.4 0 1 0 4.8 0a2.4 2.4 0 1 0 -4.8 0M241.10 678.1a2.4 2.4 0 1 0 4.8 0a2.4 2.4 0 1 0 -4.8 0M245.10 678.2a2.4 2.4 0 1 0 4.8 0a2.4 2.4 0 1 0 -4.8 0M250.10 678.2a2.4 2.4 0 1 0 4.8 0a2.4 2.4 0 1 0 -4.8 0M254.10 678.3a2.4 2.4 0 1 0 4.8 0a2.4 2.4 0 1 0 -4.8 0M258.10 678.3a2.4 2.4 0 1 0 4.8 0a2.4 2.4 0 1 0 -4.8 0M262.10 678.4a2.4 2.4 0 1 0 4.8 0a2.4 2.4 0 1 0 -4.8 0M267.10 678.4a2.4 2.4 0 1 0 4.8 0a2.4 2.4 0 1 0 -4.8 0M271.10 678.5a2.4 2.4 0 1 0 4.8 0a2.4 2.4 0 1 0 -4.8 0M275.10 678.6a2.4 2.4 0 1 0 4.8 0a2.4 2.4 0 1 0 -4.8 0M279.10 678.6a2.4 2.4 0 1 0 4.8 0a2.4 2.4 0 1 0 -4.8 0M284.10 678.7a2.4 2.4 0 1 0 4.8 0a2.4 2.4 0 1 0 -4.8 0M288.10 678.8a2.4 2.4 0 1 0 4.8 0a2.4 2.4 0 1 0 -4.8 0M292.10 678.8a2.4 2.4 0 1 0 4.8 0a2.4 2.4 0 1 0 -4.8 0M296.10 678.9a2.4 2.4 0 1 0 4.8 0a2.4 2.4 0 1 0 -4.8 0M301.10 678.9a2.4 2.4 0 1 0 4.8 0a2.4 2.4 0 1 0 -4.8 0M305.10 679.0a2.4 2.4 0 1 0 4.8 0a2.4 2.4 0 1 0 -4.8 0M309.10 679.1a2.4 2.4 0 1 0 4.8 0a2.4 2.4 0 1 0 -4.8 0M313.10 679.2a2.4 2.4 0 1 0 4.8 0a2.4 2.4 0 1 0 -4.8 0M318.10 679.3a2.4 2.4 0 1 0 4.8 0a2.4 2.4 0 1 0 -4.8 0M322.10 679.5a2.4 2.4 0 1 0 4.8 0a2.4 2.4 0 1 0 -4.8 0M326.10 679.6a2.4 2.4 0 1 0 4.8 0a2.4 2.4 0 1 0 -4.8 0M330.10 679.7a2.4 2.4 0 1 0 4.8 0a2.4 2.4 0 1 0 -4.8 0M335.10 679.9a2.4 2.4 0 1 0 4.8 0a2.4 2.4 0 1 0 -4.8 0M339.10 680.0a2.4 2.4 0 1 0 4.8 0a2.4 2.4 0 1 0 -4.8 0M343.10 680.2a2.4 2.4 0 1 0 4.8 0a2.4 2.4 0 1 0 -4.8 0M347.10 680.3a2.4 2.4 0 1 0 4.8 0a2.4 2.4 0 1 0 -4.8 0M352.10 680.5a2.4 2.4 0 1 0 4.8 0a2.4 2.4 0 1 0 -4.8 0M356.10 680.6a2.4 2.4 0 1 0 4.8 0a2.4 2.4 0 1 0 -4.8 0M360.10 680.8a2.4 2.4 0 1 0 4.8 0a2.4 2.4 0 1 0 -4.8 0M364.10 680.9a2.4 2.4 0 1 0 4.8 0a2.4 2.4 0 1 0 -4.8 0M369.10 681.1a2.4 2.4 0 1 0 4.8 0a2.4 2.4 0 1 0 -4.8 0M373.10 681.2a2.4 2.4 0 1 0 4.8 0a2.4 2.4 0 1 0 -4.8 0M377.10 681.4a2.4 2.4 0 1 0 4.8 0a2.4 2.4 0 1 0 -4.8 0M381.10 681.6a2.4 2.4 0 1 0 4.8 0a2.4 2.4 0 1 0 -4.8 0M386.10 681.8a2.4 2.4 0 1 0 4.8 0a2.4 2.4 0 1 0 -4.8 0M390.10 682.0a2.4 2.4 0 1 0 4.8 0a2.4 2.4 0 1 0 -4.8 0M394.10 682.2a2.4 2.4 0 1 0 4.8 0a2.4 2.4 0 1 0 -4.8 0M398.10 682.4a2.4 2.4 0 1 0 4.8 0a2.4 2.4 0 1 0 -4.8 0M403.10 682.7a2.4 2.4 0 1 0 4.8 0a2.4 2.4 0 1 0 -4.8 0M407.10 683.0a2.4 2.4 0 1 0 4.8 0a2.4 2.4 0 1 0 -4.8 0M411.10 683.3a2.4 2.4 0 1 0 4.8 0a2.4 2.4 0 1 0 -4.8 0M415.10 683.6a2.4 2.4 0 1 0 4.8 0a2.4 2.4 0 1 0 -4.8 0M420.10 683.8a2.4 2.4 0 1 0 4.8 0a2.4 2.4 0 1 0 -4.8 0M424.10 684.0a2.4 2.4 0 1 0 4.8 0a2.4 2.4 0 1 0 -4.8 0M428.10 684.2a2.4 2.4 0 1 0 4.8 0a2.4 2.4 0 1 0 -4.8 0M432.10 684.4a2.4 2.4 0 1 0 4.8 0a2.4 2.4 0 1 0 -4.8 0M437.10 684.6a2.4 2.4 0 1 0 4.8 0a2.4 2.4 0 1 0 -4.8 0M441.10 684.8a2.4 2.4 0 1 0 4.8 0a2.4 2.4 0 1 0 -4.8 0M445.10 685.0a2.4 2.4 0 1 0 4.8 0a2.4 2.4 0 1 0 -4.8 0M449.10 685.2a2.4 2.4 0 1 0 4.8 0a2.4 2.4 0 1 0 -4.8 0M454.10 685.4a2.4 2.4 0 1 0 4.8 0a2.4 2.4 0 1 0 -4.8 0M458.10 685.6a2.4 2.4 0 1 0 4.8 0a2.4 2.4 0 1 0 -4.8 0M462.10 685.8a2.4 2.4 0 1 0 4.8 0a2.4 2.4 0 1 0 -4.8 0M466.10 686.0a2.4 2.4 0 1 0 4.8 0a2.4 2.4 0 1 0 -4.8 0M471.10 686.2a2.4 2.4 0 1 0 4.8 0a2.4 2.4 0 1 0 -4.8 0M475.10 686.4a2.4 2.4 0 1 0 4.8 0a2.4 2.4 0 1 0 -4.8 0M479.10 686.6a2.4 2.4 0 1 0 4.8 0a2.4 2.4 0 1 0 -4.8 0M483.10 686.8a2.4 2.4 0 1 0 4.8 0a2.4 2.4 0 1 0 -4.8 0M488.10 687.0a2.4 2.4 0 1 0 4.8 0a2.4 2.4 0 1 0 -4.8 0M492.10 687.2a2.4 2.4 0 1 0 4.8 0a2.4 2.4 0 1 0 -4.8 0M496.10 687.4a2.4 2.4 0 1 0 4.8 0a2.4 2.4 0 1 0 -4.8 0M500.10 687.6a2.4 2.4 0 1 0 4.8 0a2.4 2.4 0 1 0 -4.8 0M505.10 687.9a2.4 2.4 0 1 0 4.8 0a2.4 2.4 0 1 0 -4.8 0M509.10 688.2a2.4 2.4 0 1 0 4.8 0a2.4 2.4 0 1 0 -4.8 0M513.10 688.5a2.4 2.4 0 1 0 4.8 0a2.4 2.4 0 1 0 -4.8 0M517.10 688.8a2.4 2.4 0 1 0 4.8 0a2.4 2.4 0 1 0 -4.8 0M522.10 689.1a2.4 2.4 0 1 0 4.8 0a2.4 2.4 0 1 0 -4.8 0M526.10 689.4a2.4 2.4 0 1 0 4.8 0a2.4 2.4 0 1 0 -4.8 0M530.10 689.7a2.4 2.4 0 1 0 4.8 0a2.4 2.4 0 1 0 -4.8 0M534.10 690.0a2.4 2.4 0 1 0 4.8 0a2.4 2.4 0 1 0 -4.8 0M539.10 690.3a2.4 2.4 0 1 0 4.8 0a2.4 2.4 0 1 0 -4.8 0M543.10 690.6a2.4 2.4 0 1 0 4.8 0a2.4 2.4 0 1 0 -4.8 0M547.10 690.9a2.4 2.4 0 1 0 4.8 0a2.4 2.4 0 1 0 -4.8 0M551.10 691.2a2.4 2.4 0 1 0 4.8 0a2.4 2.4 0 1 0 -4.8 0M556.10 691.5a2.4 2.4 0 1 0 4.8 0a2.4 2.4 0 1 0 -4.8 0M560.10 691.8a2.4 2.4 0 1 0 4.8 0a2.4 2.4 0 1 0 -4.8 0M564.10 692.1a2.4 2.4 0 1 0 4.8 0a2.4 2.4 0 1 0 -4.8 0M568.10 692.4a2.4 2.4 0 1 0 4.8 0a2.4 2.4 0 1 0 -4.8 0M573.10 692.7a2.4 2.4 0 1 0 4.8 0a2.4 2.4 0 1 0 -4.8 0M577.10 693.1a2.4 2.4 0 1 0 4.8 0a2.4 2.4 0 1 0 -4.8 0M581.10 693.4a2.4 2.4 0 1 0 4.8 0a2.4 2.4 0 1 0 -4.8 0M585.10 693.7a2.4 2.4 0 1 0 4.8 0a2.4 2.4 0 1 0 -4.8 0M590.10 694.1a2.4 2.4 0 1 0 4.8 0a2.4 2.4 0 1 0 -4.8 0M594.10 694.4a2.4 2.4 0 1 0 4.8 0a2.4 2.4 0 1 0 -4.8 0M598.10 694.7a2.4 2.4 0 1 0 4.8 0a2.4 2.4 0 1 0 -4.8 0M602.10 695.1a2.4 2.4 0 1 0 4.8 0a2.4 2.4 0 1 0 -4.8 0M607.10 695.4a2.4 2.4 0 1 0 4.8 0a2.4 2.4 0 1 0 -4.8 0M611.10 695.7a2.4 2.4 0 1 0 4.8 0a2.4 2.4 0 1 0 -4.8 0M615.10 696.0a2.4 2.4 0 1 0 4.8 0a2.4 2.4 0 1 0 -4.8 0M619.10 696.4a2.4 2.4 0 1 0 4.8 0a2.4 2.4 0 1 0 -4.8 0M624.10 696.7a2.4 2.4 0 1 0 4.8 0a2.4 2.4 0 1 0 -4.8 0M628.10 697.0a2.4 2.4 0 1 0 4.8 0a2.4 2.4 0 1 0 -4.8 0M632.10 697.4a2.4 2.4 0 1 0 4.8 0a2.4 2.4 0 1 0 -4.8 0M636.10 697.7a2.4 2.4 0 1 0 4.8 0a2.4 2.4 0 1 0 -4.8 0M641.10 698.0a2.4 2.4 0 1 0 4.8 0a2.4 2.4 0 1 0 -4.8 0M645.10 698.4a2.4 2.4 0 1 0 4.8 0a2.4 2.4 0 1 0 -4.8 0M649.10 698.7a2.4 2.4 0 1 0 4.8 0a2.4 2.4 0 1 0 -4.8 0M653.10 699.1a2.4 2.4 0 1 0 4.8 0a2.4 2.4 0 1 0 -4.8 0M658.10 699.5a2.4 2.4 0 1 0 4.8 0a2.4 2.4 0 1 0 -4.8 0M662.10 699.9a2.4 2.4 0 1 0 4.8 0a2.4 2.4 0 1 0 -4.8 0M666.10 700.3a2.4 2.4 0 1 0 4.8 0a2.4 2.4 0 1 0 -4.8 0M670.10 700.7a2.4 2.4 0 1 0 4.8 0a2.4 2.4 0 1 0 -4.8 0M674.10 701.1a2.4 2.4 0 1 0 4.8 0a2.4 2.4 0 1 0 -4.8 0M679.10 701.5a2.4 2.4 0 1 0 4.8 0a2.4 2.4 0 1 0 -4.8 0M683.10 701.9a2.4 2.4 0 1 0 4.8 0a2.4 2.4 0 1 0 -4.8 0M687.10 702.3a2.4 2.4 0 1 0 4.8 0a2.4 2.4 0 1 0 -4.8 0M691.10 702.7a2.4 2.4 0 1 0 4.8 0a2.4 2.4 0 1 0 -4.8 0M696.10 703.0a2.4 2.4 0 1 0 4.8 0a2.4 2.4 0 1 0 -4.8 0M700.10 703.4a2.4 2.4 0 1 0 4.8 0a2.4 2.4 0 1 0 -4.8 0M704.10 703.8a2.4 2.4 0 1 0 4.8 0a2.4 2.4 0 1 0 -4.8 0M708.10 704.2a2.4 2.4 0 1 0 4.8 0a2.4 2.4 0 1 0 -4.8 0M713.10 704.6a2.4 2.4 0 1 0 4.8 0a2.4 2.4 0 1 0 -4.8 0M717.10 705.0a2.4 2.4 0 1 0 4.8 0a2.4 2.4 0 1 0 -4.8 0M721.10 705.4a2.4 2.4 0 1 0 4.8 0a2.4 2.4 0 1 0 -4.8 0M725.10 705.8a2.4 2.4 0 1 0 4.8 0a2.4 2.4 0 1 0 -4.8 0M730.10 706.2a2.4 2.4 0 1 0 4.8 0a2.4 2.4 0 1 0 -4.8 0M734.10 706.6a2.4 2.4 0 1 0 4.8 0a2.4 2.4 0 1 0 -4.8 0M738.10 706.9a2.4 2.4 0 1 0 4.8 0a2.4 2.4 0 1 0 -4.8 0M742.10 707.3a2.4 2.4 0 1 0 4.8 0a2.4 2.4 0 1 0 -4.8 0M747.10 707.7a2.4 2.4 0 1 0 4.8 0a2.4 2.4 0 1 0 -4.8 0M751.10 708.1a2.4 2.4 0 1 0 4.8 0a2.4 2.4 0 1 0 -4.8 0M755.10 708.4a2.4 2.4 0 1 0 4.8 0a2.4 2.4 0 1 0 -4.8 0M759.10 708.8a2.4 2.4 0 1 0 4.8 0a2.4 2.4 0 1 0 -4.8 0M764.10 709.2a2.4 2.4 0 1 0 4.8 0a2.4 2.4 0 1 0 -4.8 0M768.10 709.6a2.4 2.4 0 1 0 4.8 0a2.4 2.4 0 1 0 -4.8 0M772.10 709.9a2.4 2.4 0 1 0 4.8 0a2.4 2.4 0 1 0 -4.8 0M776.10 710.3a2.4 2.4 0 1 0 4.8 0a2.4 2.4 0 1 0 -4.8 0M781.10 710.7a2.4 2.4 0 1 0 4.8 0a2.4 2.4 0 1 0 -4.8 0M785.10 711.1a2.4 2.4 0 1 0 4.8 0a2.4 2.4 0 1 0 -4.8 0M789.10 711.5a2.4 2.4 0 1 0 4.8 0a2.4 2.4 0 1 0 -4.8 0M793.10 711.8a2.4 2.4 0 1 0 4.8 0a2.4 2.4 0 1 0 -4.8 0M798.10 712.2a2.4 2.4 0 1 0 4.8 0a2.4 2.4 0 1 0 -4.8 0M802.10 712.6a2.4 2.4 0 1 0 4.8 0a2.4 2.4 0 1 0 -4.8 0M806.10 713.0a2.4 2.4 0 1 0 4.8 0a2.4 2.4 0 1 0 -4.8 0M810.10 713.5a2.4 2.4 0 1 0 4.8 0a2.4 2.4 0 1 0 -4.8 0M815.10 714.0a2.4 2.4 0 1 0 4.8 0a2.4 2.4 0 1 0 -4.8 0M819.10 714.4a2.4 2.4 0 1 0 4.8 0a2.4 2.4 0 1 0 -4.8 0M823.10 714.9a2.4 2.4 0 1 0 4.8 0a2.4 2.4 0 1 0 -4.8 0M827.10 715.3a2.4 2.4 0 1 0 4.8 0a2.4 2.4 0 1 0 -4.8 0M832.10 715.8a2.4 2.4 0 1 0 4.8 0a2.4 2.4 0 1 0 -4.8 0M836.10 716.3a2.4 2.4 0 1 0 4.8 0a2.4 2.4 0 1 0 -4.8 0M840.10 716.7a2.4 2.4 0 1 0 4.8 0a2.4 2.4 0 1 0 -4.8 0M844.10 717.2a2.4 2.4 0 1 0 4.8 0a2.4 2.4 0 1 0 -4.8 0M849.10 717.6a2.4 2.4 0 1 0 4.8 0a2.4 2.4 0 1 0 -4.8 0M853.10 718.1a2.4 2.4 0 1 0 4.8 0a2.4 2.4 0 1 0 -4.8 0M857.10 718.5a2.4 2.4 0 1 0 4.8 0a2.4 2.4 0 1 0 -4.8 0M861.10 719.0a2.4 2.4 0 1 0 4.8 0a2.4 2.4 0 1 0 -4.8 0M866.10 719.4a2.4 2.4 0 1 0 4.8 0a2.4 2.4 0 1 0 -4.8 0M870.10 719.8a2.4 2.4 0 1 0 4.8 0a2.4 2.4 0 1 0 -4.8 0M874.10 720.3a2.4 2.4 0 1 0 4.8 0a2.4 2.4 0 1 0 -4.8 0M878.10 720.7a2.4 2.4 0 1 0 4.8 0a2.4 2.4 0 1 0 -4.8 0M883.10 721.2a2.4 2.4 0 1 0 4.8 0a2.4 2.4 0 1 0 -4.8 0M887.10 721.6a2.4 2.4 0 1 0 4.8 0a2.4 2.4 0 1 0 -4.8 0M891.10 722.0a2.4 2.4 0 1 0 4.8 0a2.4 2.4 0 1 0 -4.8 0M895.10 722.5a2.4 2.4 0 1 0 4.8 0a2.4 2.4 0 1 0 -4.8 0M900.10 722.9a2.4 2.4 0 1 0 4.8 0a2.4 2.4 0 1 0 -4.8 0M904.10 723.2a2.4 2.4 0 1 0 4.8 0a2.4 2.4 0 1 0 -4.8 0M908.10 723.6a2.4 2.4 0 1 0 4.8 0a2.4 2.4 0 1 0 -4.8 0M912.10 724.0a2.4 2.4 0 1 0 4.8 0a2.4 2.4 0 1 0 -4.8 0M917.10 724.3a2.4 2.4 0 1 0 4.8 0a2.4 2.4 0 1 0 -4.8 0M921.10 724.7a2.4 2.4 0 1 0 4.8 0a2.4 2.4 0 1 0 -4.8 0M925.10 725.0a2.4 2.4 0 1 0 4.8 0a2.4 2.4 0 1 0 -4.8 0M929.10 725.4a2.4 2.4 0 1 0 4.8 0a2.4 2.4 0 1 0 -4.8 0M934.10 725.8a2.4 2.4 0 1 0 4.8 0a2.4 2.4 0 1 0 -4.8 0M938.10 726.1a2.4 2.4 0 1 0 4.8 0a2.4 2.4 0 1 0 -4.8 0M942.10 726.5a2.4 2.4 0 1 0 4.8 0a2.4 2.4 0 1 0 -4.8 0M946.10 726.8a2.4 2.4 0 1 0 4.8 0a2.4 2.4 0 1 0 -4.8 0M951.10 727.2a2.4 2.4 0 1 0 4.8 0a2.4 2.4 0 1 0 -4.8 0M955.10 727.7a2.4 2.4 0 1 0 4.8 0a2.4 2.4 0 1 0 -4.8 0M959.10 728.1a2.4 2.4 0 1 0 4.8 0a2.4 2.4 0 1 0 -4.8 0M963.10 728.6a2.4 2.4 0 1 0 4.8 0a2.4 2.4 0 1 0 -4.8 0M968.10 729.0a2.4 2.4 0 1 0 4.8 0a2.4 2.4 0 1 0 -4.8 0M972.10 729.4a2.4 2.4 0 1 0 4.8 0a2.4 2.4 0 1 0 -4.8 0M976.10 729.9a2.4 2.4 0 1 0 4.8 0a2.4 2.4 0 1 0 -4.8 0M980.10 730.3a2.4 2.4 0 1 0 4.8 0a2.4 2.4 0 1 0 -4.8 0M985.10 730.8a2.4 2.4 0 1 0 4.8 0a2.4 2.4 0 1 0 -4.8 0M989.10 731.2a2.4 2.4 0 1 0 4.8 0a2.4 2.4 0 1 0 -4.8 0M993.10 731.6a2.4 2.4 0 1 0 4.8 0a2.4 2.4 0 1 0 -4.8 0M997.10 732.1a2.4 2.4 0 1 0 4.8 0a2.4 2.4 0 1 0 -4.8 0M1002.10 732.4a2.4 2.4 0 1 0 4.8 0a2.4 2.4 0 1 0 -4.8 0M1006.10 732.6a2.4 2.4 0 1 0 4.8 0a2.4 2.4 0 1 0 -4.8 0M1010.10 732.8a2.4 2.4 0 1 0 4.8 0a2.4 2.4 0 1 0 -4.8 0M1014.10 733.0a2.4 2.4 0 1 0 4.8 0a2.4 2.4 0 1 0 -4.8 0M1019.10 733.2a2.4 2.4 0 1 0 4.8 0a2.4 2.4 0 1 0 -4.8 0M1023.10 733.4a2.4 2.4 0 1 0 4.8 0a2.4 2.4 0 1 0 -4.8 0M1027.10 733.7a2.4 2.4 0 1 0 4.8 0a2.4 2.4 0 1 0 -4.8 0M1031.10 734.0a2.4 2.4 0 1 0 4.8 0a2.4 2.4 0 1 0 -4.8 0M1036.10 734.3a2.4 2.4 0 1 0 4.8 0a2.4 2.4 0 1 0 -4.8 0M1040.10 734.6a2.4 2.4 0 1 0 4.8 0a2.4 2.4 0 1 0 -4.8 0M1044.10 734.9a2.4 2.4 0 1 0 4.8 0a2.4 2.4 0 1 0 -4.8 0M1048.10 735.2a2.4 2.4 0 1 0 4.8 0a2.4 2.4 0 1 0 -4.8 0M1053.10 735.4a2.4 2.4 0 1 0 4.8 0a2.4 2.4 0 1 0 -4.8 0M1057.10 735.7a2.4 2.4 0 1 0 4.8 0a2.4 2.4 0 1 0 -4.8 0M1061.10 736.0a2.4 2.4 0 1 0 4.8 0a2.4 2.4 0 1 0 -4.8 0M1065.10 736.3a2.4 2.4 0 1 0 4.8 0a2.4 2.4 0 1 0 -4.8 0M1070.10 736.6a2.4 2.4 0 1 0 4.8 0a2.4 2.4 0 1 0 -4.8 0M1074.10 736.9a2.4 2.4 0 1 0 4.8 0a2.4 2.4 0 1 0 -4.8 0M1078.10 737.3a2.4 2.4 0 1 0 4.8 0a2.4 2.4 0 1 0 -4.8 0M1082.10 737.7a2.4 2.4 0 1 0 4.8 0a2.4 2.4 0 1 0 -4.8 0M1087.10 738.1a2.4 2.4 0 1 0 4.8 0a2.4 2.4 0 1 0 -4.8 0M1091.10 738.4a2.4 2.4 0 1 0 4.8 0a2.4 2.4 0 1 0 -4.8 0M1095.10 738.8a2.4 2.4 0 1 0 4.8 0a2.4 2.4 0 1 0 -4.8 0M1099.10 739.2a2.4 2.4 0 1 0 4.8 0a2.4 2.4 0 1 0 -4.8 0M1104.10 739.6a2.4 2.4 0 1 0 4.8 0a2.4 2.4 0 1 0 -4.8 0M1108.10 740.0a2.4 2.4 0 1 0 4.8 0a2.4 2.4 0 1 0 -4.8 0M1112.10 740.4a2.4 2.4 0 1 0 4.8 0a2.4 2.4 0 1 0 -4.8 0M1116.10 740.8a2.4 2.4 0 1 0 4.8 0a2.4 2.4 0 1 0 -4.8 0M1121.10 741.2a2.4 2.4 0 1 0 4.8 0a2.4 2.4 0 1 0 -4.8 0M1125.10 741.6a2.4 2.4 0 1 0 4.8 0a2.4 2.4 0 1 0 -4.8 0M1129.10 742.0a2.4 2.4 0 1 0 4.8 0a2.4 2.4 0 1 0 -4.8 0M1133.10 742.3a2.4 2.4 0 1 0 4.8 0a2.4 2.4 0 1 0 -4.8 0M1138.10 742.7a2.4 2.4 0 1 0 4.8 0a2.4 2.4 0 1 0 -4.8 0M1142.10 743.1a2.4 2.4 0 1 0 4.8 0a2.4 2.4 0 1 0 -4.8 0M1146.10 743.5a2.4 2.4 0 1 0 4.8 0a2.4 2.4 0 1 0 -4.8 0M1150.10 743.9a2.4 2.4 0 1 0 4.8 0a2.4 2.4 0 1 0 -4.8 0M1155.10 744.3a2.4 2.4 0 1 0 4.8 0a2.4 2.4 0 1 0 -4.8 0M1159.10 744.7a2.4 2.4 0 1 0 4.8 0a2.4 2.4 0 1 0 -4.8 0M1163.10 745.0a2.4 2.4 0 1 0 4.8 0a2.4 2.4 0 1 0 -4.8 0M1167.10 745.4a2.4 2.4 0 1 0 4.8 0a2.4 2.4 0 1 0 -4.8 0M1172.10 745.8a2.4 2.4 0 1 0 4.8 0a2.4 2.4 0 1 0 -4.8 0M1176.10 746.1a2.4 2.4 0 1 0 4.8 0a2.4 2.4 0 1 0 -4.8 0M1180.10 746.5a2.4 2.4 0 1 0 4.8 0a2.4 2.4 0 1 0 -4.8 0M1184.10 746.8a2.4 2.4 0 1 0 4.8 0a2.4 2.4 0 1 0 -4.8 0M1189.10 747.2a2.4 2.4 0 1 0 4.8 0a2.4 2.4 0 1 0 -4.8 0M1193.10 747.5a2.4 2.4 0 1 0 4.8 0a2.4 2.4 0 1 0 -4.8 0M1197.10 747.7a2.4 2.4 0 1 0 4.8 0a2.4 2.4 0 1 0 -4.8 0M1201.10 748.0a2.4 2.4 0 1 0 4.8 0a2.4 2.4 0 1 0 -4.8 0M1205.10 748.2a2.4 2.4 0 1 0 4.8 0a2.4 2.4 0 1 0 -4.8 0M1210.10 748.4a2.4 2.4 0 1 0 4.8 0a2.4 2.4 0 1 0 -4.8 0M1214.10 748.6a2.4 2.4 0 1 0 4.8 0a2.4 2.4 0 1 0 -4.8 0M1218.10 748.9a2.4 2.4 0 1 0 4.8 0a2.4 2.4 0 1 0 -4.8 0M1222.10 749.1a2.4 2.4 0 1 0 4.8 0a2.4 2.4 0 1 0 -4.8 0M1227.10 749.4a2.4 2.4 0 1 0 4.8 0a2.4 2.4 0 1 0 -4.8 0M1231.10 749.7a2.4 2.4 0 1 0 4.8 0a2.4 2.4 0 1 0 -4.8 0M1235.10 750.1a2.4 2.4 0 1 0 4.8 0a2.4 2.4 0 1 0 -4.8 0M1239.10 750.5a2.4 2.4 0 1 0 4.8 0a2.4 2.4 0 1 0 -4.8 0M1244.10 750.8a2.4 2.4 0 1 0 4.8 0a2.4 2.4 0 1 0 -4.8 0M1248.10 751.2a2.4 2.4 0 1 0 4.8 0a2.4 2.4 0 1 0 -4.8 0M1252.10 751.5a2.4 2.4 0 1 0 4.8 0a2.4 2.4 0 1 0 -4.8 0M1256.10 751.9a2.4 2.4 0 1 0 4.8 0a2.4 2.4 0 1 0 -4.8 0M1261.10 752.2a2.4 2.4 0 1 0 4.8 0a2.4 2.4 0 1 0 -4.8 0M1265.10 752.5a2.4 2.4 0 1 0 4.8 0a2.4 2.4 0 1 0 -4.8 0M1269.10 752.7a2.4 2.4 0 1 0 4.8 0a2.4 2.4 0 1 0 -4.8 0M1273.10 752.9a2.4 2.4 0 1 0 4.8 0a2.4 2.4 0 1 0 -4.8 0M1278.10 753.2a2.4 2.4 0 1 0 4.8 0a2.4 2.4 0 1 0 -4.8 0M1282.10 753.4a2.4 2.4 0 1 0 4.8 0a2.4 2.4 0 1 0 -4.8 0M1286.10 753.6a2.4 2.4 0 1 0 4.8 0a2.4 2.4 0 1 0 -4.8 0M1290.10 753.8a2.4 2.4 0 1 0 4.8 0a2.4 2.4 0 1 0 -4.8 0M1295.10 754.1a2.4 2.4 0 1 0 4.8 0a2.4 2.4 0 1 0 -4.8 0M1299.10 754.3a2.4 2.4 0 1 0 4.8 0a2.4 2.4 0 1 0 -4.8 0M1303.10 754.6a2.4 2.4 0 1 0 4.8 0a2.4 2.4 0 1 0 -4.8 0M1307.10 754.9a2.4 2.4 0 1 0 4.8 0a2.4 2.4 0 1 0 -4.8 0M1312.10 755.1a2.4 2.4 0 1 0 4.8 0a2.4 2.4 0 1 0 -4.8 0M1316.10 755.4a2.4 2.4 0 1 0 4.8 0a2.4 2.4 0 1 0 -4.8 0M1320.10 755.6a2.4 2.4 0 1 0 4.8 0a2.4 2.4 0 1 0 -4.8 0M1324.10 755.9a2.4 2.4 0 1 0 4.8 0a2.4 2.4 0 1 0 -4.8 0M1329.10 756.1a2.4 2.4 0 1 0 4.8 0a2.4 2.4 0 1 0 -4.8 0M1333.10 756.4a2.4 2.4 0 1 0 4.8 0a2.4 2.4 0 1 0 -4.8 0M1337.10 756.6a2.4 2.4 0 1 0 4.8 0a2.4 2.4 0 1 0 -4.8 0M1341.10 756.8a2.4 2.4 0 1 0 4.8 0a2.4 2.4 0 1 0 -4.8 0M1346.10 757.0a2.4 2.4 0 1 0 4.8 0a2.4 2.4 0 1 0 -4.8 0M1350.10 757.2a2.4 2.4 0 1 0 4.8 0a2.4 2.4 0 1 0 -4.8 0M1354.10 757.4a2.4 2.4 0 1 0 4.8 0a2.4 2.4 0 1 0 -4.8 0M1358.10 757.6a2.4 2.4 0 1 0 4.8 0a2.4 2.4 0 1 0 -4.8 0M1363.10 757.8a2.4 2.4 0 1 0 4.8 0a2.4 2.4 0 1 0 -4.8 0M1367.10 758.1a2.4 2.4 0 1 0 4.8 0a2.4 2.4 0 1 0 -4.8 0M1371.10 758.3a2.4 2.4 0 1 0 4.8 0a2.4 2.4 0 1 0 -4.8 0M1375.10 758.5a2.4 2.4 0 1 0 4.8 0a2.4 2.4 0 1 0 -4.8 0M1380.10 758.7a2.4 2.4 0 1 0 4.8 0a2.4 2.4 0 1 0 -4.8 0M1384.10 758.9a2.4 2.4 0 1 0 4.8 0a2.4 2.4 0 1 0 -4.8 0M1388.10 759.1a2.4 2.4 0 1 0 4.8 0a2.4 2.4 0 1 0 -4.8 0M1392.10 759.3a2.4 2.4 0 1 0 4.8 0a2.4 2.4 0 1 0 -4.8 0M1397.10 759.5a2.4 2.4 0 1 0 4.8 0a2.4 2.4 0 1 0 -4.8 0M1401.10 759.6a2.4 2.4 0 1 0 4.8 0a2.4 2.4 0 1 0 -4.8 0M1405.10 759.8a2.4 2.4 0 1 0 4.8 0a2.4 2.4 0 1 0 -4.8 0M1409.10 759.9a2.4 2.4 0 1 0 4.8 0a2.4 2.4 0 1 0 -4.8 0M1414.10 760.0a2.4 2.4 0 1 0 4.8 0a2.4 2.4 0 1 0 -4.8 0M1418.10 760.2a2.4 2.4 0 1 0 4.8 0a2.4 2.4 0 1 0 -4.8 0M1422.10 760.3a2.4 2.4 0 1 0 4.8 0a2.4 2.4 0 1 0 -4.8 0M1426.10 760.4a2.4 2.4 0 1 0 4.8 0a2.4 2.4 0 1 0 -4.8 0M1431.10 760.6a2.4 2.4 0 1 0 4.8 0a2.4 2.4 0 1 0 -4.8 0M1435.10 760.7a2.4 2.4 0 1 0 4.8 0a2.4 2.4 0 1 0 -4.8 0M1439.10 760.9a2.4 2.4 0 1 0 4.8 0a2.4 2.4 0 1 0 -4.8 0M1443.10 761.0a2.4 2.4 0 1 0 4.8 0a2.4 2.4 0 1 0 -4.8 0M1448.10 761.2a2.4 2.4 0 1 0 4.8 0a2.4 2.4 0 1 0 -4.8 0M1452.10 761.3a2.4 2.4 0 1 0 4.8 0a2.4 2.4 0 1 0 -4.8 0M1456.10 761.5a2.4 2.4 0 1 0 4.8 0a2.4 2.4 0 1 0 -4.8 0M1460.10 761.7a2.4 2.4 0 1 0 4.8 0a2.4 2.4 0 1 0 -4.8 0M1465.10 761.9a2.4 2.4 0 1 0 4.8 0a2.4 2.4 0 1 0 -4.8 0M1469.10 762.0a2.4 2.4 0 1 0 4.8 0a2.4 2.4 0 1 0 -4.8 0M1473.10 762.2a2.4 2.4 0 1 0 4.8 0a2.4 2.4 0 1 0 -4.8 0M1477.10 762.4a2.4 2.4 0 1 0 4.8 0a2.4 2.4 0 1 0 -4.8 0M1482.10 762.6a2.4 2.4 0 1 0 4.8 0a2.4 2.4 0 1 0 -4.8 0M1486.10 762.6a2.4 2.4 0 1 0 4.8 0a2.4 2.4 0 1 0 -4.8 0M1490.10 762.7a2.4 2.4 0 1 0 4.8 0a2.4 2.4 0 1 0 -4.8 0M1494.10 762.8a2.4 2.4 0 1 0 4.8 0a2.4 2.4 0 1 0 -4.8 0M1499.10 762.9a2.4 2.4 0 1 0 4.8 0a2.4 2.4 0 1 0 -4.8 0M1503.10 763.0a2.4 2.4 0 1 0 4.8 0a2.4 2.4 0 1 0 -4.8 0M1507.10 763.1a2.4 2.4 0 1 0 4.8 0a2.4 2.4 0 1 0 -4.8 0M1511.10 763.1a2.4 2.4 0 1 0 4.8 0a2.4 2.4 0 1 0 -4.8 0M1516.10 763.2a2.4 2.4 0 1 0 4.8 0a2.4 2.4 0 1 0 -4.8 0M1520.10 763.3a2.4 2.4 0 1 0 4.8 0a2.4 2.4 0 1 0 -4.8 0M1524.10 763.4a2.4 2.4 0 1 0 4.8 0a2.4 2.4 0 1 0 -4.8 0M1528.10 763.5a2.4 2.4 0 1 0 4.8 0a2.4 2.4 0 1 0 -4.8 0M1533.10 763.6a2.4 2.4 0 1 0 4.8 0a2.4 2.4 0 1 0 -4.8 0M1537.10 763.7a2.4 2.4 0 1 0 4.8 0a2.4 2.4 0 1 0 -4.8 0M1541.10 763.8a2.4 2.4 0 1 0 4.8 0a2.4 2.4 0 1 0 -4.8 0M1545.10 763.9a2.4 2.4 0 1 0 4.8 0a2.4 2.4 0 1 0 -4.8 0M1550.10 764.0a2.4 2.4 0 1 0 4.8 0a2.4 2.4 0 1 0 -4.8 0M1554.10 764.1a2.4 2.4 0 1 0 4.8 0a2.4 2.4 0 1 0 -4.8 0M1558.10 764.2a2.4 2.4 0 1 0 4.8 0a2.4 2.4 0 1 0 -4.8 0M1562.10 764.3a2.4 2.4 0 1 0 4.8 0a2.4 2.4 0 1 0 -4.8 0M1567.10 764.4a2.4 2.4 0 1 0 4.8 0a2.4 2.4 0 1 0 -4.8 0M1571.10 764.4a2.4 2.4 0 1 0 4.8 0a2.4 2.4 0 1 0 -4.8 0M1575.10 764.4a2.4 2.4 0 1 0 4.8 0a2.4 2.4 0 1 0 -4.8 0M1579.10 764.4a2.4 2.4 0 1 0 4.8 0a2.4 2.4 0 1 0 -4.8 0M1584.10 764.4a2.4 2.4 0 1 0 4.8 0a2.4 2.4 0 1 0 -4.8 0M1588.10 764.4a2.4 2.4 0 1 0 4.8 0a2.4 2.4 0 1 0 -4.8 0M1592.10 764.4a2.4 2.4 0 1 0 4.8 0a2.4 2.4 0 1 0 -4.8 0M1596.10 764.4a2.4 2.4 0 1 0 4.8 0a2.4 2.4 0 1 0 -4.8 0M1601.10 764.4a2.4 2.4 0 1 0 4.8 0a2.4 2.4 0 1 0 -4.8 0M1605.10 764.4a2.4 2.4 0 1 0 4.8 0a2.4 2.4 0 1 0 -4.8 0M1609.10 764.4a2.4 2.4 0 1 0 4.8 0a2.4 2.4 0 1 0 -4.8 0M1613.10 764.4a2.4 2.4 0 1 0 4.8 0a2.4 2.4 0 1 0 -4.8 0M1618.10 764.4a2.4 2.4 0 1 0 4.8 0a2.4 2.4 0 1 0 -4.8 0M1622.10 764.4a2.4 2.4 0 1 0 4.8 0a2.4 2.4 0 1 0 -4.8 0M1626.10 764.4a2.4 2.4 0 1 0 4.8 0a2.4 2.4 0 1 0 -4.8 0M1630.10 764.4a2.4 2.4 0 1 0 4.8 0a2.4 2.4 0 1 0 -4.8 0M1635.10 764.4a2.4 2.4 0 1 0 4.8 0a2.4 2.4 0 1 0 -4.8 0M1639.10 764.4a2.4 2.4 0 1 0 4.8 0a2.4 2.4 0 1 0 -4.8 0M1643.10 764.4a2.4 2.4 0 1 0 4.8 0a2.4 2.4 0 1 0 -4.8 0M1647.10 764.4a2.4 2.4 0 1 0 4.8 0a2.4 2.4 0 1 0 -4.8 0M1652.10 764.4a2.4 2.4 0 1 0 4.8 0a2.4 2.4 0 1 0 -4.8 0M1656.10 764.4a2.4 2.4 0 1 0 4.8 0a2.4 2.4 0 1 0 -4.8 0M1660.10 764.4a2.4 2.4 0 1 0 4.8 0a2.4 2.4 0 1 0 -4.8 0M1664.10 764.4a2.4 2.4 0 1 0 4.8 0a2.4 2.4 0 1 0 -4.8 0M1669.10 764.4a2.4 2.4 0 1 0 4.8 0a2.4 2.4 0 1 0 -4.8 0M1673.10 764.4a2.4 2.4 0 1 0 4.8 0a2.4 2.4 0 1 0 -4.8 0M1677.10 764.4a2.4 2.4 0 1 0 4.8 0a2.4 2.4 0 1 0 -4.8 0M1681.10 764.4a2.4 2.4 0 1 0 4.8 0a2.4 2.4 0 1 0 -4.8 0M1686.10 764.4a2.4 2.4 0 1 0 4.8 0a2.4 2.4 0 1 0 -4.8 0M1690.10 764.4a2.4 2.4 0 1 0 4.8 0a2.4 2.4 0 1 0 -4.8 0M1694.10 764.4a2.4 2.4 0 1 0 4.8 0a2.4 2.4 0 1 0 -4.8 0M1698.10 764.3a2.4 2.4 0 1 0 4.8 0a2.4 2.4 0 1 0 -4.8 0M1703.10 764.1a2.4 2.4 0 1 0 4.8 0a2.4 2.4 0 1 0 -4.8 0M1707.10 764.0a2.4 2.4 0 1 0 4.8 0a2.4 2.4 0 1 0 -4.8 0M1711.10 763.8a2.4 2.4 0 1 0 4.8 0a2.4 2.4 0 1 0 -4.8 0M1715.10 763.6a2.4 2.4 0 1 0 4.8 0a2.4 2.4 0 1 0 -4.8 0M1720.10 763.5a2.4 2.4 0 1 0 4.8 0a2.4 2.4 0 1 0 -4.8 0M1724.10 763.4a2.4 2.4 0 1 0 4.8 0a2.4 2.4 0 1 0 -4.8 0M1728.10 763.2a2.4 2.4 0 1 0 4.8 0a2.4 2.4 0 1 0 -4.8 0M1732.10 763.1a2.4 2.4 0 1 0 4.8 0a2.4 2.4 0 1 0 -4.8 0M1736.10 763.0a2.4 2.4 0 1 0 4.8 0a2.4 2.4 0 1 0 -4.8 0M1741.10 762.9a2.4 2.4 0 1 0 4.8 0a2.4 2.4 0 1 0 -4.8 0M1745.10 762.8a2.4 2.4 0 1 0 4.8 0a2.4 2.4 0 1 0 -4.8 0M1749.10 762.6a2.4 2.4 0 1 0 4.8 0a2.4 2.4 0 1 0 -4.8 0M1753.10 762.5a2.4 2.4 0 1 0 4.8 0a2.4 2.4 0 1 0 -4.8 0M1758.10 762.4a2.4 2.4 0 1 0 4.8 0a2.4 2.4 0 1 0 -4.8 0M1762.10 762.2a2.4 2.4 0 1 0 4.8 0a2.4 2.4 0 1 0 -4.8 0M1766.10 762.0a2.4 2.4 0 1 0 4.8 0a2.4 2.4 0 1 0 -4.8 0M1770.10 761.8a2.4 2.4 0 1 0 4.8 0a2.4 2.4 0 1 0 -4.8 0M1775.10 761.6a2.4 2.4 0 1 0 4.8 0a2.4 2.4 0 1 0 -4.8 0M1779.10 761.4a2.4 2.4 0 1 0 4.8 0a2.4 2.4 0 1 0 -4.8 0M1783.10 761.2a2.4 2.4 0 1 0 4.8 0a2.4 2.4 0 1 0 -4.8 0M1787.10 761.0a2.4 2.4 0 1 0 4.8 0a2.4 2.4 0 1 0 -4.8 0M1792.10 760.9a2.4 2.4 0 1 0 4.8 0a2.4 2.4 0 1 0 -4.8 0M1796.10 760.8a2.4 2.4 0 1 0 4.8 0a2.4 2.4 0 1 0 -4.8 0M1800.10 760.7a2.4 2.4 0 1 0 4.8 0a2.4 2.4 0 1 0 -4.8 0M1804.10 760.5a2.4 2.4 0 1 0 4.8 0a2.4 2.4 0 1 0 -4.8 0M1809.10 760.4a2.4 2.4 0 1 0 4.8 0a2.4 2.4 0 1 0 -4.8 0M1813.10 760.2a2.4 2.4 0 1 0 4.8 0a2.4 2.4 0 1 0 -4.8 0M1817.10 760.0a2.4 2.4 0 1 0 4.8 0a2.4 2.4 0 1 0 -4.8 0M1821.10 759.8a2.4 2.4 0 1 0 4.8 0a2.4 2.4 0 1 0 -4.8 0M1826.10 759.6a2.4 2.4 0 1 0 4.8 0a2.4 2.4 0 1 0 -4.8 0M1830.10 759.4a2.4 2.4 0 1 0 4.8 0a2.4 2.4 0 1 0 -4.8 0M1834.10 759.2a2.4 2.4 0 1 0 4.8 0a2.4 2.4 0 1 0 -4.8 0M1838.10 759.0a2.4 2.4 0 1 0 4.8 0a2.4 2.4 0 1 0 -4.8 0M1843.10 758.8a2.4 2.4 0 1 0 4.8 0a2.4 2.4 0 1 0 -4.8 0M1847.10 758.5a2.4 2.4 0 1 0 4.8 0a2.4 2.4 0 1 0 -4.8 0M1851.10 758.3a2.4 2.4 0 1 0 4.8 0a2.4 2.4 0 1 0 -4.8 0M1855.10 758.0a2.4 2.4 0 1 0 4.8 0a2.4 2.4 0 1 0 -4.8 0M1860.10 757.8a2.4 2.4 0 1 0 4.8 0a2.4 2.4 0 1 0 -4.8 0M1864.10 757.5a2.4 2.4 0 1 0 4.8 0a2.4 2.4 0 1 0 -4.8 0M1868.10 757.3a2.4 2.4 0 1 0 4.8 0a2.4 2.4 0 1 0 -4.8 0M1872.10 757.0a2.4 2.4 0 1 0 4.8 0a2.4 2.4 0 1 0 -4.8 0M1877.10 756.8a2.4 2.4 0 1 0 4.8 0a2.4 2.4 0 1 0 -4.8 0M1881.10 756.6a2.4 2.4 0 1 0 4.8 0a2.4 2.4 0 1 0 -4.8 0M1885.10 756.3a2.4 2.4 0 1 0 4.8 0a2.4 2.4 0 1 0 -4.8 0M1889.10 756.1a2.4 2.4 0 1 0 4.8 0a2.4 2.4 0 1 0 -4.8 0M1894.10 755.9a2.4 2.4 0 1 0 4.8 0a2.4 2.4 0 1 0 -4.8 0M1898.10 755.7a2.4 2.4 0 1 0 4.8 0a2.4 2.4 0 1 0 -4.8 0M1902.10 755.5a2.4 2.4 0 1 0 4.8 0a2.4 2.4 0 1 0 -4.8 0M1906.10 755.3a2.4 2.4 0 1 0 4.8 0a2.4 2.4 0 1 0 -4.8 0M1911.10 755.1a2.4 2.4 0 1 0 4.8 0a2.4 2.4 0 1 0 -4.8 0" fill="#3232c8"/><path d="M128.10 679.0a1.4 1.4 0 1 0 2.8 0a1.4 1.4 0 1 0 -2.8 0M132.10 678.9a1.4 1.4 0 1 0 2.8 0a1.4 1.4 0 1 0 -2.8 0M136.10 678.9a1.4 1.4 0 1 0 2.8 0a1.4 1.4 0 1 0 -2.8 0M140.10 678.8a1.4 1.4 0 1 0 2.8 0a1.4 1.4 0 1 0 -2.8 0M144.10 678.8a1.4 1.4 0 1 0 2.8 0a1.4 1.4 0 1 0 -2.8 0M149.10 678.7a1.4 1.4 0 1 0 2.8 0a1.4 1.4 0 1 0 -2.8 0M153.10 678.6a1.4 1.4 0 1 0 2.8 0a1.4 1.4 0 1 0 -2.8 0M157.10 678.5a1.4 1.4 0 1 0 2.8 0a1.4 1.4 0 1 0 -2.8 0M161.10 678.4a1.4 1.4 0 1 0 2.8 0a1.4 1.4 0 1 0 -2.8 0M166.10 678.3a1.4 1.4 0 1 0 2.8 0a1.4 1.4 0 1 0 -2.8 0M170.10 678.2a1.4 1.4 0 1 0 2.8 0a1.4 1.4 0 1 0 -2.8 0M174.10 678.1a1.4 1.4 0 1 0 2.8 0a1.4 1.4 0 1 0 -2.8 0M178.10 678.1a1.4 1.4 0 1 0 2.8 0a1.4 1.4 0 1 0 -2.8 0M183.10 678.0a1.4 1.4 0 1 0 2.8 0a1.4 1.4 0 1 0 -2.8 0M187.10 678.0a1.4 1.4 0 1 0 2.8 0a1.4 1.4 0 1 0 -2.8 0M191.10 678.0a1.4 1.4 0 1 0 2.8 0a1.4 1.4 0 1 0 -2.8 0M195.10 678.0a1.4 1.4 0 1 0 2.8 0a1.4 1.4 0 1 0 -2.8 0M200.10 677.9a1.4 1.4 0 1 0 2.8 0a1.4 1.4 0 1 0 -2.8 0M204.10 677.9a1.4 1.4 0 1 0 2.8 0a1.4 1.4 0 1 0 -2.8 0M208.10 677.9a1.4 1.4 0 1 0 2.8 0a1.4 1.4 0 1 0 -2.8 0M212.10 677.9a1.4 1.4 0 1 0 2.8 0a1.4 1.4 0 1 0 -2.8 0M217.10 677.8a1.4 1.4 0 1 0 2.8 0a1.4 1.4 0 1 0 -2.8 0M221.10 677.9a1.4 1.4 0 1 0 2.8 0a1.4 1.4 0 1 0 -2.8 0M225.10 677.9a1.4 1.4 0 1 0 2.8 0a1.4 1.4 0 1 0 -2.8 0M229.10 678.0a1.4 1.4 0 1 0 2.8 0a1.4 1.4 0 1 0 -2.8 0M234.10 678.0a1.4 1.4 0 1 0 2.8 0a1.4 1.4 0 1 0 -2.8 0M238.10 678.1a1.4 1.4 0 1 0 2.8 0a1.4 1.4 0 1 0 -2.8 0M242.10 678.1a1.4 1.4 0 1 0 2.8 0a1.4 1.4 0 1 0 -2.8 0M246.10 678.2a1.4 1.4 0 1 0 2.8 0a1.4 1.4 0 1 0 -2.8 0M251.10 678.2a1.4 1.4 0 1 0 2.8 0a1.4 1.4 0 1 0 -2.8 0M255.10 678.3a1.4 1.4 0 1 0 2.8 0a1.4 1.4 0 1 0 -2.8 0M259.10 678.3a1.4 1.4 0 1 0 2.8 0a1.4 1.4 0 1 0 -2.8 0M263.10 678.4a1.4 1.4 0 1 0 2.8 0a1.4 1.4 0 1 0 -2.8 0M268.10 678.4a1.4 1.4 0 1 0 2.8 0a1.4 1.4 0 1 0 -2.8 0M272.10 678.5a1.4 1.4 0 1 0 2.8 0a1.4 1.4 0 1 0 -2.8 0M276.10 678.6a1.4 1.4 0 1 0 2.8 0a1.4 1.4 0 1 0 -2.8 0M280.10 678.6a1.4 1.4 0 1 0 2.8 0a1.4 1.4 0 1 0 -2.8 0M285.10 678.7a1.4 1.4 0 1 0 2.8 0a1.4 1.4 0 1 0 -2.8 0M289.10 678.8a1.4 1.4 0 1 0 2.8 0a1.4 1.4 0 1 0 -2.8 0M293.10 678.8a1.4 1.4 0 1 0 2.8 0a1.4 1.4 0 1 0 -2.8 0M297.10 678.9a1.4 1.4 0 1 0 2.8 0a1.4 1.4 0 1 0 -2.8 0M302.10 678.9a1.4 1.4 0 1 0 2.8 0a1.4 1.4 0 1 0 -2.8 0M306.10 679.0a1.4 1.4 0 1 0 2.8 0a1.4 1.4 0 1 0 -2.8 0M310.10 679.1a1.4 1.4 0 1 0 2.8 0a1.4 1.4 0 1 0 -2.8 0M314.10 679.2a1.4 1.4 0 1 0 2.8 0a1.4 1.4 0 1 0 -2.8 0M319.10 679.3a1.4 1.4 0 1 0 2.8 0a1.4 1.4 0 1 0 -2.8 0M323.10 679.5a1.4 1.4 0 1 0 2.8 0a1.4 1.4 0 1 0 -2.8 0M327.10 679.6a1.4 1.4 0 1 0 2.8 0a1.4 1.4 0 1 0 -2.8 0M331.10 679.7a1.4 1.4 0 1 0 2.8 0a1.4 1.4 0 1 0 -2.8 0M336.10 679.9a1.4 1.4 0 1 0 2.8 0a1.4 1.4 0 1 0 -2.8 0M340.10 680.0a1.4 1.4 0 1 0 2.8 0a1.4 1.4 0 1 0 -2.8 0M344.10 680.2a1.4 1.4 0 1 0 2.8 0a1.4 1.4 0 1 0 -2.8 0M348.10 680.3a1.4 1.4 0 1 0 2.8 0a1.4 1.4 0 1 0 -2.8 0M353.10 680.5a1.4 1.4 0 1 0 2.8 0a1.4 1.4 0 1 0 -2.8 0M357.10 680.6a1.4 1.4 0 1 0 2.8 0a1.4 1.4 0 1 0 -2.8 0M361.10 680.8a1.4 1.4 0 1 0 2.8 0a1.4 1.4 0 1 0 -2.8 0M365.10 680.9a1.4 1.4 0 1 0 2.8 0a1.4 1.4 0 1 0 -2.8 0M370.10 681.1a1.4 1.4 0 1 0 2.8 0a1.4 1.4 0 1 0 -2.8 0M374.10 681.2a1.4 1.4 0 1 0 2.8 0a1.4 1.4 0 1 0 -2.8 0M378.10 681.4a1.4 1.4 0 1 0 2.8 0a1.4 1.4 0 1 0 -2.8 0M382.10 681.6a1.4 1.4 0 1 0 2.8 0a1.4 1.4 0 1 0 -2.8 0M387.10 681.8a1.4 1.4 0 1 0 2.8 0a1.4 1.4 0 1 0 -2.8 0M391.10 682.0a1.4 1.4 0 1 0 2.8 0a1.4 1.4 0 1 0 -2.8 0M395.10 682.2a1.4 1.4 0 1 0 2.8 0a1.4 1.4 0 1 0 -2.8 0M399.10 682.4a1.4 1.4 0 1 0 2.8 0a1.4 1.4 0 1 0 -2.8 0M404.10 682.7a1.4 1.4 0 1 0 2.8 0a1.4 1.4 0 1 0 -2.8 0M408.10 683.0a1.4 1.4 0 1 0 2.8 0a1.4 1.4 0 1 0 -2.8 0M412.10 683.3a1.4 1.4 0 1 0 2.8 0a1.4 1.4 0 1 0 -2.8 0M416.10 683.6a1.4 1.4 0 1 0 2.8 0a1.4 1.4 0 1 0 -2.8 0M421.10 683.8a1.4 1.4 0 1 0 2.8 0a1.4 1.4 0 1 0 -2.8 0M425.10 684.0a1.4 1.4 0 1 0 2.8 0a1.4 1.4 0 1 0 -2.8 0M429.10 684.2a1.4 1.4 0 1 0 2.8 0a1.4 1.4 0 1 0 -2.8 0M433.10 684.4a1.4 1.4 0 1 0 2.8 0a1.4 1.4 0 1 0 -2.8 0M438.10 684.6a1.4 1.4 0 1 0 2.8 0a1.4 1.4 0 1 0 -2.8 0M442.10 684.8a1.4 1.4 0 1 0 2.8 0a1.4 1.4 0 1 0 -2.8 0M446.10 685.0a1.4 1.4 0 1 0 2.8 0a1.4 1.4 0 1 0 -2.8 0M450.10 685.2a1.4 1.4 0 1 0 2.8 0a1.4 1.4 0 1 0 -2.8 0M455.10 685.4a1.4 1.4 0 1 0 2.8 0a1.4 1.4 0 1 0 -2.8 0M459.10 685.6a1.4 1.4 0 1 0 2.8 0a1.4 1.4 0 1 0 -2.8 0M463.10 685.8a1.4 1.4 0 1 0 2.8 0a1.4 1.4 0 1 0 -2.8 0M467.10 686.0a1.4 1.4 0 1 0 2.8 0a1.4 1.4 0 1 0 -2.8 0M472.10 686.2a1.4 1.4 0 1 0 2.8 0a1.4 1.4 0 1 0 -2.8 0M476.10 686.4a1.4 1.4 0 1 0 2.8 0a1.4 1.4 0 1 0 -2.8 0M480.10 686.6a1.4 1.4 0 1 0 2.8 0a1.4 1.4 0 1 0 -2.8 0M484.10 686.8a1.4 1.4 0 1 0 2.8 0a1.4 1.4 0 1 0 -2.8 0M489.10 687.0a1.4 1.4 0 1 0 2.8 0a1.4 1.4 0 1 0 -2.8 0M493.10 687.2a1.4 1.4 0 1 0 2.8 0a1.4 1.4 0 1 0 -2.8 0M497.10 687.4a1.4 1.4 0 1 0 2.8 0a1.4 1.4 0 1 0 -2.8 0M501.10 687.6a1.4 1.4 0 1 0 2.8 0a1.4 1.4 0 1 0 -2.8 0M506.10 687.9a1.4 1.4 0 1 0 2.8 0a1.4 1.4 0 1 0 -2.8 0M510.10 688.2a1.4 1.4 0 1 0 2.8 0a1.4 1.4 0 1 0 -2.8 0M514.10 688.5a1.4 1.4 0 1 0 2.8 0a1.4 1.4 0 1 0 -2.8 0M518.10 688.8a1.4 1.4 0 1 0 2.8 0a1.4 1.4 0 1 0 -2.8 0M523.10 689.1a1.4 1.4 0 1 0 2.8 0a1.4 1.4 0 1 0 -2.8 0M527.10 689.4a1.4 1.4 0 1 0 2.8 0a1.4 1.4 0 1 0 -2.8 0M531.10 689.7a1.4 1.4 0 1 0 2.8 0a1.4 1.4 0 1 0 -2.8 0M535.10 690.0a1.4 1.4 0 1 0 2.8 0a1.4 1.4 0 1 0 -2.8 0M540.10 690.3a1.4 1.4 0 1 0 2.8 0a1.4 1.4 0 1 0 -2.8 0M544.10 690.6a1.4 1.4 0 1 0 2.8 0a1.4 1.4 0 1 0 -2.8 0M548.10 690.9a1.4 1.4 0 1 0 2.8 0a1.4 1.4 0 1 0 -2.8 0M552.10 691.2a1.4 1.4 0 1 0 2.8 0a1.4 1.4 0 1 0 -2.8 0M557.10 691.5a1.4 1.4 0 1 0 2.8 0a1.4 1.4 0 1 0 -2.8 0M561.10 691.8a1.4 1.4 0 1 0 2.8 0a1.4 1.4 0 1 0 -2.8 0M565.10 692.1a1.4 1.4 0 1 0 2.8 0a1.4 1.4 0 1 0 -2.8 0M569.10 692.4a1.4 1.4 0 1 0 2.8 0a1.4 1.4 0 1 0 -2.8 0M574.10 692.7a1.4 1.4 0 1 0 2.8 0a1.4 1.4 0 1 0 -2.8 0M578.10 693.1a1.4 1.4 0 1 0 2.8 0a1.4 1.4 0 1 0 -2.8 0M582.10 693.4a1.4 1.4 0 1 0 2.8 0a1.4 1.4 0 1 0 -2.8 0M586.10 693.7a1.4 1.4 0 1 0 2.8 0a1.4 1.4 0 1 0 -2.8 0M591.10 694.1a1.4 1.4 0 1 0 2.8 0a1.4 1.4 0 1 0 -2.8 0M595.10 694.4a1.4 1.4 0 1 0 2.8 0a1.4 1.4 0 1 0 -2.8 0M599.10 694.7a1.4 1.4 0 1 0 2.8 0a1.4 1.4 0 1 0 -2.8 0M603.10 695.1a1.4 1.4 0 1 0 2.8 0a1.4 1.4 0 1 0 -2.8 0M608.10 695.4a1.4 1.4 0 1 0 2.8 0a1.4 1.4 0 1 0 -2.8 0M612.10 695.7a1.4 1.4 0 1 0 2.8 0a1.4 1.4 0 1 0 -2.8 0M616.10 696.0a1.4 1.4 0 1 0 2.8 0a1.4 1.4 0 1 0 -2.8 0M620.10 696.4a1.4 1.4 0 1 0 2.8 0a1.4 1.4 0 1 0 -2.8 0M625.10 696.7a1.4 1.4 0 1 0 2.8 0a1.4 1.4 0 1 0 -2.8 0M629.10 697.0a1.4 1.4 0 1 0 2.8 0a1.4 1.4 0 1 0 -2.8 0M633.10 697.4a1.4 1.4 0 1 0 2.8 0a1.4 1.4 0 1 0 -2.8 0M637.10 697.7a1.4 1.4 0 1 0 2.8 0a1.4 1.4 0 1 0 -2.8 0M642.10 698.0a1.4 1.4 0 1 0 2.8 0a1.4 1.4 0 1 0 -2.8 0M646.10 698.4a1.4 1.4 0 1 0 2.8 0a1.4 1.4 0 1 0 -2.8 0M650.10 698.7a1.4 1.4 0 1 0 2.8 0a1.4 1.4 0 1 0 -2.8 0M654.10 699.1a1.4 1.4 0 1 0 2.8 0a1.4 1.4 0 1 0 -2.8 0M659.10 699.5a1.4 1.4 0 1 0 2.8 0a1.4 1.4 0 1 0 -2.8 0M663.10 699.9a1.4 1.4 0 1 0 2.8 0a1.4 1.4 0 1 0 -2.8 0M667.10 700.3a1.4 1.4 0 1 0 2.8 0a1.4 1.4 0 1 0 -2.8 0M671.10 700.7a1.4 1.4 0 1 0 2.8 0a1.4 1.4 0 1 0 -2.8 0M675.10 701.1a1.4 1.4 0 1 0 2.8 0a1.4 1.4 0 1 0 -2.8 0M680.10 701.5a1.4 1.4 0 1 0 2.8 0a1.4 1.4 0 1 0 -2.8 0M684.10 701.9a1.4 1.4 0 1 0 2.8 0a1.4 1.4 0 1 0 -2.8 0M688.10 702.3a1.4 1.4 0 1 0 2.8 0a1.4 1.4 0 1 0 -2.8 0M692.10 702.7a1.4 1.4 0 1 0 2.8 0a1.4 1.4 0 1 0 -2.8 0M697.10 703.0a1.4 1.4 0 1 0 2.8 0a1.4 1.4 0 1 0 -2.8 0M701.10 703.4a1.4 1.4 0 1 0 2.8 0a1.4 1.4 0 1 0 -2.8 0M705.10 703.8a1.4 1.4 0 1 0 2.8 0a1.4 1.4 0 1 0 -2.8 0M709.10 704.2a1.4 1.4 0 1 0 2.8 0a1.4 1.4 0 1 0 -2.8 0M714.10 704.6a1.4 1.4 0 1 0 2.8 0a1.4 1.4 0 1 0 -2.8 0M718.10 705.0a1.4 1.4 0 1 0 2.8 0a1.4 1.4 0 1 0 -2.8 0M722.10 705.4a1.4 1.4 0 1 0 2.8 0a1.4 1.4 0 1 0 -2.8 0M726.10 705.8a1.4 1.4 0 1 0 2.8 0a1.4 1.4 0 1 0 -2.8 0M731.10 706.2a1.4 1.4 0 1 0 2.8 0a1.4 1.4 0 1 0 -2.8 0M735.10 706.6a1.4 1.4 0 1 0 2.8 0a1.4 1.4 0 1 0 -2.8 0M739.10 706.9a1.4 1.4 0 1 0 2.8 0a1.4 1.4 0 1 0 -2.8 0M743.10 707.3a1.4 1.4 0 1 0 2.8 0a1.4 1.4 0 1 0 -2.8 0M748.10 707.7a1.4 1.4 0 1 0 2.8 0a1.4 1.4 0 1 0 -2.8 0M752.10 708.1a1.4 1.4 0 1 0 2.8 0a1.4 1.4 0 1 0 -2.8 0M756.10 708.4a1.4 1.4 0 1 0 2.8 0a1.4 1.4 0 1 0 -2.8 0M760.10 708.8a1.4 1.4 0 1 0 2.8 0a1.4 1.4 0 1 0 -2.8 0M765.10 709.2a1.4 1.4 0 1 0 2.8 0a1.4 1.4 0 1 0 -2.8 0M769.10 709.6a1.4 1.4 0 1 0 2.8 0a1.4 1.4 0 1 0 -2.8 0M773.10 709.9a1.4 1.4 0 1 0 2.8 0a1.4 1.4 0 1 0 -2.8 0M777.10 710.3a1.4 1.4 0 1 0 2.8 0a1.4 1.4 0 1 0 -2.8 0M782.10 710.7a1.4 1.4 0 1 0 2.8 0a1.4 1.4 0 1 0 -2.8 0M786.10 711.1a1.4 1.4 0 1 0 2.8 0a1.4 1.4 0 1 0 -2.8 0M790.10 711.5a1.4 1.4 0 1 0 2.8 0a1.4 1.4 0 1 0 -2.8 0M794.10 711.8a1.4 1.4 0 1 0 2.8 0a1.4 1.4 0 1 0 -2.8 0M799.10 712.2a1.4 1.4 0 1 0 2.8 0a1.4 1.4 0 1 0 -2.8 0M803.10 712.6a1.4 1.4 0 1 0 2.8 0a1.4 1.4 0 1 0 -2.8 0M807.10 713.0a1.4 1.4 0 1 0 2.8 0a1.4 1.4 0 1 0 -2.8 0M811.10 713.5a1.4 1.4 0 1 0 2.8 0a1.4 1.4 0 1 0 -2.8 0M816.10 714.0a1.4 1.4 0 1 0 2.8 0a1.4 1.4 0 1 0 -2.8 0M820.10 714.4a1.4 1.4 0 1 0 2.8 0a1.4 1.4 0 1 0 -2.8 0M824.10 714.9a1.4 1.4 0 1 0 2.8 0a1.4 1.4 0 1 0 -2.8 0M828.10 715.3a1.4 1.4 0 1 0 2.8 0a1.4 1.4 0 1 0 -2.8 0M833.10 715.8a1.4 1.4 0 1 0 2.8 0a1.4 1.4 0 1 0 -2.8 0M837.10 716.3a1.4 1.4 0 1 0 2.8 0a1.4 1.4 0 1 0 -2.8 0M841.10 716.7a1.4 1.4 0 1 0 2.8 0a1.4 1.4 0 1 0 -2.8 0M845.10 717.2a1.4 1.4 0 1 0 2.8 0a1.4 1.4 0 1 0 -2.8 0M850.10 717.6a1.4 1.4 0 1 0 2.8 0a1.4 1.4 0 1 0 -2.8 0M854.10 718.1a1.4 1.4 0 1 0 2.8 0a1.4 1.4 0 1 0 -2.8 0M858.10 718.5a1.4 1.4 0 1 0 2.8 0a1.4 1.4 0 1 0 -2.8 0M862.10 719.0a1.4 1.4 0 1 0 2.8 0a1.4 1.4 0 1 0 -2.8 0M867.10 719.4a1.4 1.4 0 1 0 2.8 0a1.4 1.4 0 1 0 -2.8 0M871.10 719.8a1.4 1.4 0 1 0 2.8 0a1.4 1.4 0 1 0 -2.8 0M875.10 720.3a1.4 1.4 0 1 0 2.8 0a1.4 1.4 0 1 0 -2.8 0M879.10 720.7a1.4 1.4 0 1 0 2.8 0a1.4 1.4 0 1 0 -2.8 0M884.10 721.2a1.4 1.4 0 1 0 2.8 0a1.4 1.4 0 1 0 -2.8 0M888.10 721.6a1.4 1.4 0 1 0 2.8 0a1.4 1.4 0 1 0 -2.8 0M892.10 722.0a1.4 1.4 0 1 0 2.8 0a1.4 1.4 0 1 0 -2.8 0M896.10 722.5a1.4 1.4 0 1 0 2.8 0a1.4 1.4 0 1 0 -2.8 0M901.10 722.9a1.4 1.4 0 1 0 2.8 0a1.4 1.4 0 1 0 -2.8 0M905.10 723.2a1.4 1.4 0 1 0 2.8 0a1.4 1.4 0 1 0 -2.8 0M909.10 723.6a1.4 1.4 0 1 0 2.8 0a1.4 1.4 0 1 0 -2.8 0M913.10 724.0a1.4 1.4 0 1 0 2.8 0a1.4 1.4 0 1 0 -2.8 0M918.10 724.3a1.4 1.4 0 1 0 2.8 0a1.4 1.4 0 1 0 -2.8 0M922.10 724.7a1.4 1.4 0 1 0 2.8 0a1.4 1.4 0 1 0 -2.8 0M926.10 725.0a1.4 1.4 0 1 0 2.8 0a1.4 1.4 0 1 0 -2.8 0M930.10 725.4a1.4 1.4 0 1 0 2.8 0a1.4 1.4 0 1 0 -2.8 0M935.10 725.8a1.4 1.4 0 1 0 2.8 0a1.4 1.4 0 1 0 -2.8 0M939.10 726.1a1.4 1.4 0 1 0 2.8 0a1.4 1.4 0 1 0 -2.8 0M943.10 726.5a1.4 1.4 0 1 0 2.8 0a1.4 1.4 0 1 0 -2.8 0M947.10 726.8a1.4 1.4 0 1 0 2.8 0a1.4 1.4 0 1 0 -2.8 0M952.10 727.2a1.4 1.4 0 1 0 2.8 0a1.4 1.4 0 1 0 -2.8 0M956.10 727.7a1.4 1.4 0 1 0 2.8 0a1.4 1.4 0 1 0 -2.8 0M960.10 728.1a1.4 1.4 0 1 0 2.8 0a1.4 1.4 0 1 0 -2.8 0M964.10 728.6a1.4 1.4 0 1 0 2.8 0a1.4 1.4 0 1 0 -2.8 0M969.10 729.0a1.4 1.4 0 1 0 2.8 0a1.4 1.4 0 1 0 -2.8 0M973.10 729.4a1.4 1.4 0 1 0 2.8 0a1.4 1.4 0 1 0 -2.8 0M977.10 729.9a1.4 1.4 0 1 0 2.8 0a1.4 1.4 0 1 0 -2.8 0M981.10 730.3a1.4 1.4 0 1 0 2.8 0a1.4 1.4 0 1 0 -2.8 0M986.10 730.8a1.4 1.4 0 1 0 2.8 0a1.4 1.4 0 1 0 -2.8 0M990.10 731.2a1.4 1.4 0 1 0 2.8 0a1.4 1.4 0 1 0 -2.8 0M994.10 731.6a1.4 1.4 0 1 0 2.8 0a1.4 1.4 0 1 0 -2.8 0M998.10 732.1a1.4 1.4 0 1 0 2.8 0a1.4 1.4 0 1 0 -2.8 0M1003.10 732.4a1.4 1.4 0 1 0 2.8 0a1.4 1.4 0 1 0 -2.8 0M1007.10 732.6a1.4 1.4 0 1 0 2.8 0a1.4 1.4 0 1 0 -2.8 0M1011.10 732.8a1.4 1.4 0 1 0 2.8 0a1.4 1.4 0 1 0 -2.8 0M1015.10 733.0a1.4 1.4 0 1 0 2.8 0a1.4 1.4 0 1 0 -2.8 0M1020.10 733.2a1.4 1.4 0 1 0 2.8 0a1.4 1.4 0 1 0 -2.8 0M1024.10 733.4a1.4 1.4 0 1 0 2.8 0a1.4 1.4 0 1 0 -2.8 0M1028.10 733.7a1.4 1.4 0 1 0 2.8 0a1.4 1.4 0 1 0 -2.8 0M1032.10 734.0a1.4 1.4 0 1 0 2.8 0a1.4 1.4 0 1 0 -2.8 0M1037.10 734.3a1.4 1.4 0 1 0 2.8 0a1.4 1.4 0 1 0 -2.8 0M1041.10 734.6a1.4 1.4 0 1 0 2.8 0a1.4 1.4 0 1 0 -2.8 0M1045.10 734.9a1.4 1.4 0 1 0 2.8 0a1.4 1.4 0 1 0 -2.8 0M1049.10 735.2a1.4 1.4 0 1 0 2.8 0a1.4 1.4 0 1 0 -2.8 0M1054.10 735.4a1.4 1.4 0 1 0 2.8 0a1.4 1.4 0 1 0 -2.8 0M1058.10 735.7a1.4 1.4 0 1 0 2.8 0a1.4 1.4 0 1 0 -2.8 0M1062.10 736.0a1.4 1.4 0 1 0 2.8 0a1.4 1.4 0 1 0 -2.8 0M1066.10 736.3a1.4 1.4 0 1 0 2.8 0a1.4 1.4 0 1 0 -2.8 0M1071.10 736.6a1.4 1.4 0 1 0 2.8 0a1.4 1.4 0 1 0 -2.8 0M1075.10 736.9a1.4 1.4 0 1 0 2.8 0a1.4 1.4 0 1 0 -2.8 0M1079.10 737.3a1.4 1.4 0 1 0 2.8 0a1.4 1.4 0 1 0 -2.8 0M1083.10 737.7a1.4 1.4 0 1 0 2.8 0a1.4 1.4 0 1 0 -2.8 0M1088.10 738.1a1.4 1.4 0 1 0 2.8 0a1.4 1.4 0 1 0 -2.8 0M1092.10 738.4a1.4 1.4 0 1 0 2.8 0a1.4 1.4 0 1 0 -2.8 0M1096.10 738.8a1.4 1.4 0 1 0 2.8 0a1.4 1.4 0 1 0 -2.8 0M1100.10 739.2a1.4 1.4 0 1 0 2.8 0a1.4 1.4 0 1 0 -2.8 0M1105.10 739.6a1.4 1.4 0 1 0 2.8 0a1.4 1.4 0 1 0 -2.8 0M1109.10 740.0a1.4 1.4 0 1 0 2.8 0a1.4 1.4 0 1 0 -2.8 0M1113.10 740.4a1.4 1.4 0 1 0 2.8 0a1.4 1.4 0 1 0 -2.8 0M1117.10 740.8a1.4 1.4 0 1 0 2.8 0a1.4 1.4 0 1 0 -2.8 0M1122.10 741.2a1.4 1.4 0 1 0 2.8 0a1.4 1.4 0 1 0 -2.8 0M1126.10 741.6a1.4 1.4 0 1 0 2.8 0a1.4 1.4 0 1 0 -2.8 0M1130.10 742.0a1.4 1.4 0 1 0 2.8 0a1.4 1.4 0 1 0 -2.8 0M1134.10 742.3a1.4 1.4 0 1 0 2.8 0a1.4 1.4 0 1 0 -2.8 0M1139.10 742.7a1.4 1.4 0 1 0 2.8 0a1.4 1.4 0 1 0 -2.8 0M1143.10 743.1a1.4 1.4 0 1 0 2.8 0a1.4 1.4 0 1 0 -2.8 0M1147.10 743.5a1.4 1.4 0 1 0 2.8 0a1.4 1.4 0 1 0 -2.8 0M1151.10 743.9a1.4 1.4 0 1 0 2.8 0a1.4 1.4 0 1 0 -2.8 0M1156.10 744.3a1.4 1.4 0 1 0 2.8 0a1.4 1.4 0 1 0 -2.8 0M1160.10 744.7a1.4 1.4 0 1 0 2.8 0a1.4 1.4 0 1 0 -2.8 0M1164.10 745.0a1.4 1.4 0 1 0 2.8 0a1.4 1.4 0 1 0 -2.8 0M1168.10 745.4a1.4 1.4 0 1 0 2.8 0a1.4 1.4 0 1 0 -2.8 0M1173.10 745.8a1.4 1.4 0 1 0 2.8 0a1.4 1.4 0 1 0 -2.8 0M1177.10 746.1a1.4 1.4 0 1 0 2.8 0a1.4 1.4 0 1 0 -2.8 0M1181.10 746.5a1.4 1.4 0 1 0 2.8 0a1.4 1.4 0 1 0 -2.8 0M1185.10 746.8a1.4 1.4 0 1 0 2.8 0a1.4 1.4 0 1 0 -2.8 0M1190.10 747.2a1.4 1.4 0 1 0 2.8 0a1.4 1.4 0 1 0 -2.8 0M1194.10 747.5a1.4 1.4 0 1 0 2.8 0a1.4 1.4 0 1 0 -2.8 0M1198.10 747.7a1.4 1.4 0 1 0 2.8 0a1.4 1.4 0 1 0 -2.8 0M1202.10 748.0a1.4 1.4 0 1 0 2.8 0a1.4 1.4 0 1 0 -2.8 0M1206.10 748.2a1.4 1.4 0 1 0 2.8 0a1.4 1.4 0 1 0 -2.8 0M1211.10 748.4a1.4 1.4 0 1 0 2.8 0a1.4 1.4 0 1 0 -2.8 0M1215.10 748.6a1.4 1.4 0 1 0 2.8 0a1.4 1.4 0 1 0 -2.8 0M1219.10 748.9a1.4 1.4 0 1 0 2.8 0a1.4 1.4 0 1 0 -2.8 0M1223.10 749.1a1.4 1.4 0 1 0 2.8 0a1.4 1.4 0 1 0 -2.8 0M1228.10 749.4a1.4 1.4 0 1 0 2.8 0a1.4 1.4 0 1 0 -2.8 0M1232.10 749.7a1.4 1.4 0 1 0 2.8 0a1.4 1.4 0 1 0 -2.8 0M1236.10 750.1a1.4 1.4 0 1 0 2.8 0a1.4 1.4 0 1 0 -2.8 0M1240.10 750.5a1.4 1.4 0 1 0 2.8 0a1.4 1.4 0 1 0 -2.8 0M1245.10 750.8a1.4 1.4 0 1 0 2.8 0a1.4 1.4 0 1 0 -2.8 0M1249.10 751.2a1.4 1.4 0 1 0 2.8 0a1.4 1.4 0 1 0 -2.8 0M1253.10 751.5a1.4 1.4 0 1 0 2.8 0a1.4 1.4 0 1 0 -2.8 0M1257.10 751.9a1.4 1.4 0 1 0 2.8 0a1.4 1.4 0 1 0 -2.8 0M1262.10 752.2a1.4 1.4 0 1 0 2.8 0a1.4 1.4 0 1 0 -2.8 0M1266.10 752.5a1.4 1.4 0 1 0 2.8 0a1.4 1.4 0 1 0 -2.8 0M1270.10 752.7a1.4 1.4 0 1 0 2.8 0a1.4 1.4 0 1 0 -2.8 0M1274.10 752.9a1.4 1.4 0 1 0 2.8 0a1.4 1.4 0 1 0 -2.8 0M1279.10 753.2a1.4 1.4 0 1 0 2.8 0a1.4 1.4 0 1 0 -2.8 0M1283.10 753.4a1.4 1.4 0 1 0 2.8 0a1.4 1.4 0 1 0 -2.8 0M1287.10 753.6a1.4 1.4 0 1 0 2.8 0a1.4 1.4 0 1 0 -2.8 0M1291.10 753.8a1.4 1.4 0 1 0 2.8 0a1.4 1.4 0 1 0 -2.8 0M1296.10 754.1a1.4 1.4 0 1 0 2.8 0a1.4 1.4 0 1 0 -2.8 0M1300.10 754.3a1.4 1.4 0 1 0 2.8 0a1.4 1.4 0 1 0 -2.8 0M1304.10 754.6a1.4 1.4 0 1 0 2.8 0a1.4 1.4 0 1 0 -2.8 0M1308.10 754.9a1.4 1.4 0 1 0 2.8 0a1.4 1.4 0 1 0 -2.8 0M1313.10 755.1a1.4 1.4 0 1 0 2.8 0a1.4 1.4 0 1 0 -2.8 0M1317.10 755.4a1.4 1.4 0 1 0 2.8 0a1.4 1.4 0 1 0 -2.8 0M1321.10 755.6a1.4 1.4 0 1 0 2.8 0a1.4 1.4 0 1 0 -2.8 0M1325.10 755.9a1.4 1.4 0 1 0 2.8 0a1.4 1.4 0 1 0 -2.8 0M1330.10 756.1a1.4 1.4 0 1 0 2.8 0a1.4 1.4 0 1 0 -2.8 0M1334.10 756.4a1.4 1.4 0 1 0 2.8 0a1.4 1.4 0 1 0 -2.8 0M1338.10 756.6a1.4 1.4 0 1 0 2.8 0a1.4 1.4 0 1 0 -2.8 0M1342.10 756.8a1.4 1.4 0 1 0 2.8 0a1.4 1.4 0 1 0 -2.8 0M1347.10 757.0a1.4 1.4 0 1 0 2.8 0a1.4 1.4 0 1 0 -2.8 0M1351.10 757.2a1.4 1.4 0 1 0 2.8 0a1.4 1.4 0 1 0 -2.8 0M1355.10 757.4a1.4 1.4 0 1 0 2.8 0a1.4 1.4 0 1 0 -2.8 0M1359.10 757.6a1.4 1.4 0 1 0 2.8 0a1.4 1.4 0 1 0 -2.8 0M1364.10 757.8a1.4 1.4 0 1 0 2.8 0a1.4 1.4 0 1 0 -2.8 0M1368.10 758.1a1.4 1.4 0 1 0 2.8 0a1.4 1.4 0 1 0 -2.8 0M1372.10 758.3a1.4 1.4 0 1 0 2.8 0a1.4 1.4 0 1 0 -2.8 0M1376.10 758.5a1.4 1.4 0 1 0 2.8 0a1.4 1.4 0 1 0 -2.8 0M1381.10 758.7a1.4 1.4 0 1 0 2.8 0a1.4 1.4 0 1 0 -2.8 0M1385.10 758.9a1.4 1.4 0 1 0 2.8 0a1.4 1.4 0 1 0 -2.8 0M1389.10 759.1a1.4 1.4 0 1 0 2.8 0a1.4 1.4 0 1 0 -2.8 0M1393.10 759.3a1.4 1.4 0 1 0 2.8 0a1.4 1.4 0 1 0 -2.8 0M1398.10 759.5a1.4 1.4 0 1 0 2.8 0a1.4 1.4 0 1 0 -2.8 0M1402.10 759.6a1.4 1.4 0 1 0 2.8 0a1.4 1.4 0 1 0 -2.8 0M1406.10 759.8a1.4 1.4 0 1 0 2.8 0a1.4 1.4 0 1 0 -2.8 0M1410.10 759.9a1.4 1.4 0 1 0 2.8 0a1.4 1.4 0 1 0 -2.8 0M1415.10 760.0a1.4 1.4 0 1 0 2.8 0a1.4 1.4 0 1 0 -2.8 0M1419.10 760.2a1.4 1.4 0 1 0 2.8 0a1.4 1.4 0 1 0 -2.8 0M1423.10 760.3a1.4 1.4 0 1 0 2.8 0a1.4 1.4 0 1 0 -2.8 0M1427.10 760.4a1.4 1.4 0 1 0 2.8 0a1.4 1.4 0 1 0 -2.8 0M1432.10 760.6a1.4 1.4 0 1 0 2.8 0a1.4 1.4 0 1 0 -2.8 0M1436.10 760.7a1.4 1.4 0 1 0 2.8 0a1.4 1.4 0 1 0 -2.8 0M1440.10 760.9a1.4 1.4 0 1 0 2.8 0a1.4 1.4 0 1 0 -2.8 0M1444.10 761.0a1.4 1.4 0 1 0 2.8 0a1.4 1.4 0 1 0 -2.8 0M1449.10 761.2a1.4 1.4 0 1 0 2.8 0a1.4 1.4 0 1 0 -2.8 0M1453.10 761.3a1.4 1.4 0 1 0 2.8 0a1.4 1.4 0 1 0 -2.8 0M1457.10 761.5a1.4 1.4 0 1 0 2.8 0a1.4 1.4 0 1 0 -2.8 0M1461.10 761.7a1.4 1.4 0 1 0 2.8 0a1.4 1.4 0 1 0 -2.8 0M1466.10 761.9a1.4 1.4 0 1 0 2.8 0a1.4 1.4 0 1 0 -2.8 0M1470.10 762.0a1.4 1.4 0 1 0 2.8 0a1.4 1.4 0 1 0 -2.8 0M1474.10 762.2a1.4 1.4 0 1 0 2.8 0a1.4 1.4 0 1 0 -2.8 0M1478.10 762.4a1.4 1.4 0 1 0 2.8 0a1.4 1.4 0 1 0 -2.8 0M1483.10 762.6a1.4 1.4 0 1 0 2.8 0a1.4 1.4 0 1 0 -2.8 0M1487.10 762.6a1.4 1.4 0 1 0 2.8 0a1.4 1.4 0 1 0 -2.8 0M1491.10 762.7a1.4 1.4 0 1 0 2.8 0a1.4 1.4 0 1 0 -2.8 0M1495.10 762.8a1.4 1.4 0 1 0 2.8 0a1.4 1.4 0 1 0 -2.8 0M1500.10 762.9a1.4 1.4 0 1 0 2.8 0a1.4 1.4 0 1 0 -2.8 0M1504.10 763.0a1.4 1.4 0 1 0 2.8 0a1.4 1.4 0 1 0 -2.8 0M1508.10 763.1a1.4 1.4 0 1 0 2.8 0a1.4 1.4 0 1 0 -2.8 0M1512.10 763.1a1.4 1.4 0 1 0 2.8 0a1.4 1.4 0 1 0 -2.8 0M1517.10 763.2a1.4 1.4 0 1 0 2.8 0a1.4 1.4 0 1 0 -2.8 0M1521.10 763.3a1.4 1.4 0 1 0 2.8 0a1.4 1.4 0 1 0 -2.8 0M1525.10 763.4a1.4 1.4 0 1 0 2.8 0a1.4 1.4 0 1 0 -2.8 0M1529.10 763.5a1.4 1.4 0 1 0 2.8 0a1.4 1.4 0 1 0 -2.8 0M1534.10 763.6a1.4 1.4 0 1 0 2.8 0a1.4 1.4 0 1 0 -2.8 0M1538.10 763.7a1.4 1.4 0 1 0 2.8 0a1.4 1.4 0 1 0 -2.8 0M1542.10 763.8a1.4 1.4 0 1 0 2.8 0a1.4 1.4 0 1 0 -2.8 0M1546.10 763.9a1.4 1.4 0 1 0 2.8 0a1.4 1.4 0 1 0 -2.8 0M1551.10 764.0a1.4 1.4 0 1 0 2.8 0a1.4 1.4 0 1 0 -2.8 0M1555.10 764.1a1.4 1.4 0 1 0 2.8 0a1.4 1.4 0 1 0 -2.8 0M1559.10 764.2a1.4 1.4 0 1 0 2.8 0a1.4 1.4 0 1 0 -2.8 0M1563.10 764.3a1.4 1.4 0 1 0 2.8 0a1.4 1.4 0 1 0 -2.8 0M1568.10 764.4a1.4 1.4 0 1 0 2.8 0a1.4 1.4 0 1 0 -2.8 0M1572.10 764.4a1.4 1.4 0 1 0 2.8 0a1.4 1.4 0 1 0 -2.8 0M1576.10 764.4a1.4 1.4 0 1 0 2.8 0a1.4 1.4 0 1 0 -2.8 0M1580.10 764.4a1.4 1.4 0 1 0 2.8 0a1.4 1.4 0 1 0 -2.8 0M1585.10 764.4a1.4 1.4 0 1 0 2.8 0a1.4 1.4 0 1 0 -2.8 0M1589.10 764.4a1.4 1.4 0 1 0 2.8 0a1.4 1.4 0 1 0 -2.8 0M1593.10 764.4a1.4 1.4 0 1 0 2.8 0a1.4 1.4 0 1 0 -2.8 0M1597.10 764.4a1.4 1.4 0 1 0 2.8 0a1.4 1.4 0 1 0 -2.8 0M1602.10 764.4a1.4 1.4 0 1 0 2.8 0a1.4 1.4 0 1 0 -2.8 0M1606.10 764.4a1.4 1.4 0 1 0 2.8 0a1.4 1.4 0 1 0 -2.8 0M1610.10 764.4a1.4 1.4 0 1 0 2.8 0a1.4 1.4 0 1 0 -2.8 0M1614.10 764.4a1.4 1.4 0 1 0 2.8 0a1.4 1.4 0 1 0 -2.8 0M1619.10 764.4a1.4 1.4 0 1 0 2.8 0a1.4 1.4 0 1 0 -2.8 0M1623.10 764.4a1.4 1.4 0 1 0 2.8 0a1.4 1.4 0 1 0 -2.8 0M1627.10 764.4a1.4 1.4 0 1 0 2.8 0a1.4 1.4 0 1 0 -2.8 0M1631.10 764.4a1.4 1.4 0 1 0 2.8 0a1.4 1.4 0 1 0 -2.8 0M1636.10 764.4a1.4 1.4 0 1 0 2.8 0a1.4 1.4 0 1 0 -2.8 0M1640.10 764.4a1.4 1.4 0 1 0 2.8 0a1.4 1.4 0 1 0 -2.8 0M1644.10 764.4a1.4 1.4 0 1 0 2.8 0a1.4 1.4 0 1 0 -2.8 0M1648.10 764.4a1.4 1.4 0 1 0 2.8 0a1.4 1.4 0 1 0 -2.8 0M1653.10 764.4a1.4 1.4 0 1 0 2.8 0a1.4 1.4 0 1 0 -2.8 0M1657.10 764.4a1.4 1.4 0 1 0 2.8 0a1.4 1.4 0 1 0 -2.8 0M1661.10 764.4a1.4 1.4 0 1 0 2.8 0a1.4 1.4 0 1 0 -2.8 0M1665.10 764.4a1.4 1.4 0 1 0 2.8 0a1.4 1.4 0 1 0 -2.8 0M1670.10 764.4a1.4 1.4 0 1 0 2.8 0a1.4 1.4 0 1 0 -2.8 0M1674.10 764.4a1.4 1.4 0 1 0 2.8 0a1.4 1.4 0 1 0 -2.8 0M1678.10 764.4a1.4 1.4 0 1 0 2.8 0a1.4 1.4 0 1 0 -2.8 0M1682.10 764.4a1.4 1.4 0 1 0 2.8 0a1.4 1.4 0 1 0 -2.8 0M1687.10 764.4a1.4 1.4 0 1 0 2.8 0a1.4 1.4 0 1 0 -2.8 0M1691.10 764.4a1.4 1.4 0 1 0 2.8 0a1.4 1.4 0 1 0 -2.8 0M1695.10 764.4a1.4 1.4 0 1 0 2.8 0a1.4 1.4 0 1 0 -2.8 0M1699.10 764.3a1.4 1.4 0 1 0 2.8 0a1.4 1.4 0 1 0 -2.8 0M1704.10 764.1a1.4 1.4 0 1 0 2.8 0a1.4 1.4 0 1 0 -2.8 0M1708.10 764.0a1.4 1.4 0 1 0 2.8 0a1.4 1.4 0 1 0 -2.8 0M1712.10 763.8a1.4 1.4 0 1 0 2.8 0a1.4 1.4 0 1 0 -2.8 0M1716.10 763.6a1.4 1.4 0 1 0 2.8 0a1.4 1.4 0 1 0 -2.8 0M1721.10 763.5a1.4 1.4 0 1 0 2.8 0a1.4 1.4 0 1 0 -2.8 0M1725.10 763.4a1.4 1.4 0 1 0 2.8 0a1.4 1.4 0 1 0 -2.8 0M1729.10 763.2a1.4 1.4 0 1 0 2.8 0a1.4 1.4 0 1 0 -2.8 0M1733.10 763.1a1.4 1.4 0 1 0 2.8 0a1.4 1.4 0 1 0 -2.8 0M1737.10 763.0a1.4 1.4 0 1 0 2.8 0a1.4 1.4 0 1 0 -2.8 0M1742.10 762.9a1.4 1.4 0 1 0 2.8 0a1.4 1.4 0 1 0 -2.8 0M1746.10 762.8a1.4 1.4 0 1 0 2.8 0a1.4 1.4 0 1 0 -2.8 0M1750.10 762.6a1.4 1.4 0 1 0 2.8 0a1.4 1.4 0 1 0 -2.8 0M1754.10 762.5a1.4 1.4 0 1 0 2.8 0a1.4 1.4 0 1 0 -2.8 0M1759.10 762.4a1.4 1.4 0 1 0 2.8 0a1.4 1.4 0 1 0 -2.8 0M1763.10 762.2a1.4 1.4 0 1 0 2.8 0a1.4 1.4 0 1 0 -2.8 0M1767.10 762.0a1.4 1.4 0 1 0 2.8 0a1.4 1.4 0 1 0 -2.8 0M1771.10 761.8a1.4 1.4 0 1 0 2.8 0a1.4 1.4 0 1 0 -2.8 0M1776.10 761.6a1.4 1.4 0 1 0 2.8 0a1.4 1.4 0 1 0 -2.8 0M1780.10 761.4a1.4 1.4 0 1 0 2.8 0a1.4 1.4 0 1 0 -2.8 0M1784.10 761.2a1.4 1.4 0 1 0 2.8 0a1.4 1.4 0 1 0 -2.8 0M1788.10 761.0a1.4 1.4 0 1 0 2.8 0a1.4 1.4 0 1 0 -2.8 0M1793.10 760.9a1.4 1.4 0 1 0 2.8 0a1.4 1.4 0 1 0 -2.8 0M1797.10 760.8a1.4 1.4 0 1 0 2.8 0a1.4 1.4 0 1 0 -2.8 0M1801.10 760.7a1.4 1.4 0 1 0 2.8 0a1.4 1.4 0 1 0 -2.8 0M1805.10 760.5a1.4 1.4 0 1 0 2.8 0a1.4 1.4 0 1 0 -2.8 0M1810.10 760.4a1.4 1.4 0 1 0 2.8 0a1.4 1.4 0 1 0 -2.8 0M1814.10 760.2a1.4 1.4 0 1 0 2.8 0a1.4 1.4 0 1 0 -2.8 0M1818.10 760.0a1.4 1.4 0 1 0 2.8 0a1.4 1.4 0 1 0 -2.8 0M1822.10 759.8a1.4 1.4 0 1 0 2.8 0a1.4 1.4 0 1 0 -2.8 0M1827.10 759.6a1.4 1.4 0 1 0 2.8 0a1.4 1.4 0 1 0 -2.8 0M1831.10 759.4a1.4 1.4 0 1 0 2.8 0a1.4 1.4 0 1 0 -2.8 0M1835.10 759.2a1.4 1.4 0 1 0 2.8 0a1.4 1.4 0 1 0 -2.8 0M1839.10 759.0a1.4 1.4 0 1 0 2.8 0a1.4 1.4 0 1 0 -2.8 0M1844.10 758.8a1.4 1.4 0 1 0 2.8 0a1.4 1.4 0 1 0 -2.8 0M1848.10 758.5a1.4 1.4 0 1 0 2.8 0a1.4 1.4 0 1 0 -2.8 0M1852.10 758.3a1.4 1.4 0 1 0 2.8 0a1.4 1.4 0 1 0 -2.8 0M1856.10 758.0a1.4 1.4 0 1 0 2.8 0a1.4 1.4 0 1 0 -2.8 0M1861.10 757.8a1.4 1.4 0 1 0 2.8 0a1.4 1.4 0 1 0 -2.8 0M1865.10 757.5a1.4 1.4 0 1 0 2.8 0a1.4 1.4 0 1 0 -2.8 0M1869.10 757.3a1.4 1.4 0 1 0 2.8 0a1.4 1.4 0 1 0 -2.8 0M1873.10 757.0a1.4 1.4 0 1 0 2.8 0a1.4 1.4 0 1 0 -2.8 0M1878.10 756.8a1.4 1.4 0 1 0 2.8 0a1.4 1.4 0 1 0 -2.8 0M1882.10 756.6a1.4 1.4 0 1 0 2.8 0a1.4 1.4 0 1 0 -2.8 0M1886.10 756.3a1.4 1.4 0 1 0 2.8 0a1.4 1.4 0 1 0 -2.8 0M1890.10 756.1a1.4 1.4 0 1 0 2.8 0a1.4 1.4 0 1 0 -2.8 0M1895.10 755.9a1.4 1.4 0 1 0 2.8 0a1.4 1.4 0 1 0 -2.8 0M1899.10 755.7a1.4 1.4 0 1 0 2.8 0a1.4 1.4 0 1 0 -2.8 0M1903.10 755.5a1.4 1.4 0 1 0 2.8 0a1.4 1.4 0 1 0 -2.8 0M1907.10 755.3a1.4 1.4 0 1 0 2.8 0a1.4 1.4 0 1 0 -2.8 0M1912.10 755.1a1.4 1.4 0 1 0 2.8 0a1.4 1.4 0 1 0 -2.8 0" fill="none" stroke="#000" stroke-width="1"/><path d="M129.5 679.0V733.4M133.5 678.9V733.4M137.5 678.9V733.4M141.5 678.8V733.4M145.5 678.8V733.4M150.5 678.7V733.4M154.5 678.6V733.4M158.5 678.5V733.4M162.5 678.4V733.4M167.5 678.3V733.4M171.5 678.2V733.4M175.5 678.1V733.4M179.5 678.1V733.4M184.5 678.0V733.4M188.5 678.0V733.4M192.5 678.0V733.4M196.5 678.0V733.4M201.5 677.9V733.4M205.5 677.9V733.4M209.5 677.9V733.4M213.5 677.9V733.4M218.5 677.8V733.4M222.5 677.9V733.4M226.5 677.9V733.4M230.5 678.0V733.4M235.5 678.0V733.4M239.5 678.1V733.4M243.5 678.1V733.4M247.5 678.2V733.4M252.5 678.2V733.4M256.5 678.3V733.4M260.5 678.3V733.4M264.5 678.4V733.4M269.5 678.4V733.4M273.5 678.5V733.4M277.5 678.6V733.4M281.5 678.6V733.4M286.5 678.7V733.4M290.5 678.8V733.4M294.5 678.8V733.4M298.5 678.9V733.4M303.5 678.9V733.4M307.5 679.0V733.4M311.5 679.1V733.4M315.5 679.2V733.4M320.5 679.3V733.4M324.5 679.5V733.4M328.5 679.6V733.4M332.5 679.7V733.4M337.5 679.9V733.4M341.5 680.0V733.4M345.5 680.2V733.4M349.5 680.3V733.4M354.5 680.5V733.4M358.5 680.6V733.4M362.5 680.8V733.4M366.5 680.9V733.4M371.5 681.1V733.4M375.5 681.2V733.4M379.5 681.4V733.4M383.5 681.6V733.4M388.5 681.8V733.4M392.5 682.0V733.4M396.5 682.2V733.4M400.5 682.4V733.4M405.5 682.7V733.4M409.5 683.0V733.4M413.5 683.3V733.4M417.5 683.6V733.4M422.5 683.8V733.4M426.5 684.0V733.4M430.5 684.2V733.4M434.5 684.4V733.4M439.5 684.6V733.4M443.5 684.8V733.4M447.5 685.0V733.4M451.5 685.2V733.4M456.5 685.4V733.4M460.5 685.6V733.4M464.5 685.8V733.4M468.5 686.0V733.4M473.5 686.2V733.4M477.5 686.4V733.4M481.5 686.6V733.4M485.5 686.8V733.4M490.5 687.0V733.4M494.5 687.2V733.4M498.5 687.4V733.4M502.5 687.6V733.4M507.5 687.9V733.4M511.5 688.2V733.4M515.5 688.5V733.4M519.5 688.8V733.4M524.5 689.1V733.4M528.5 689.4V733.4M532.5 689.7V733.4M536.5 690.0V733.4M541.5 690.3V733.4M545.5 690.6V733.4M549.5 690.9V733.4M553.5 691.2V733.4M558.5 691.5V733.4M562.5 691.8V733.4M566.5 692.1V733.4M570.5 692.4V733.4M575.5 692.7V733.4M579.5 693.1V733.4M583.5 693.4V733.4M587.5 693.7V733.4M592.5 694.1V733.4M596.5 694.4V733.4M600.5 694.7V733.4M604.5 695.1V733.4M609.5 695.4V733.4M613.5 695.7V733.4M617.5 696.0V733.4M621.5 696.4V733.4M626.5 696.7V733.4M630.5 697.0V733.4M634.5 697.4V733.4M638.5 697.7V733.4M643.5 698.0V733.4M647.5 698.4V733.4M651.5 698.7V733.4M655.5 699.1V733.4M660.5 699.5V733.4M664.5 699.9V733.4M668.5 700.3V733.4M672.5 700.7V733.4M676.5 701.1V733.4M681.5 701.5V733.4M685.5 701.9V733.4M689.5 702.3V733.4M693.5 702.7V733.4M698.5 703.0V733.4M702.5 703.4V733.4M706.5 703.8V733.4M710.5 704.2V733.4M715.5 704.6V733.4M719.5 705.0V733.4M723.5 705.4V733.4M727.5 705.8V733.4M732.5 706.2V733.4M736.5 706.6V733.4M740.5 706.9V733.4M744.5 707.3V733.4M749.5 707.7V733.4M753.5 708.1V733.4M757.5 708.4V733.4M761.5 708.8V733.4M766.5 709.2V733.4M770.5 709.6V733.4M774.5 709.9V733.4M778.5 710.3V733.4M783.5 710.7V733.4M787.5 711.1V733.4M791.5 711.5V733.4M795.5 711.8V733.4M800.5 712.2V733.4M804.5 712.6V733.4M808.5 713.0V733.4M812.5 713.5V733.4M817.5 714.0V733.4M821.5 714.4V733.4M825.5 714.9V733.4M829.5 715.3V733.4M834.5 715.8V733.4M838.5 716.3V733.4M842.5 716.7V733.4M846.5 717.2V733.4M851.5 717.6V733.4M855.5 718.1V733.4M859.5 718.5V733.4M863.5 719.0V733.4M868.5 719.4V733.4M872.5 719.8V733.4M876.5 720.3V733.4M880.5 720.7V733.4M885.5 721.2V733.4M889.5 721.6V733.4M893.5 722.0V733.4M897.5 722.5V733.4M902.5 722.9V733.4M906.5 723.2V733.4M910.5 723.6V733.4M914.5 724.0V733.4M919.5 724.3V733.4M923.5 724.7V733.4M927.5 725.0V733.4M931.5 725.4V733.4M936.5 725.8V733.4M940.5 726.1V733.4M944.5 726.5V733.4M948.5 726.8V733.4M953.5 727.2V733.4M957.5 727.7V733.4M961.5 728.1V733.4M965.5 728.6V733.4M970.5 729.0V733.4M974.5 729.4V733.4M978.5 729.9V733.4M982.5 730.3V733.4M987.5 730.8V733.4M991.5 731.2V733.4M995.5 731.6V733.4M999.5 732.1V733.4M1004.5 732.4V733.4M1008.5 732.6V733.4M1012.5 732.8V733.4M1016.5 733.0V733.4M1021.5 733.2V733.4M1025.5 733.4V733.4M1029.5 733.4V733.7M1033.5 733.4V734.0M1038.5 733.4V734.3M1042.5 733.4V734.6M1046.5 733.4V734.9M1050.5 733.4V735.2M1055.5 733.4V735.4M1059.5 733.4V735.7M1063.5 733.4V736.0M1067.5 733.4V736.3M1072.5 733.4V736.6M1076.5 733.4V736.9M1080.5 733.4V737.3M1084.5 733.4V737.7M1089.5 733.4V738.1M1093.5 733.4V738.4M1097.5 733.4V738.8M1101.5 733.4V739.2M1106.5 733.4V739.6M1110.5 733.4V740.0M1114.5 733.4V740.4M1118.5 733.4V740.8M1123.5 733.4V741.2M1127.5 733.4V741.6M1131.5 733.4V742.0M1135.5 733.4V742.3M1140.5 733.4V742.7M1144.5 733.4V743.1M1148.5 733.4V743.5M1152.5 733.4V743.9M1157.5 733.4V744.3M1161.5 733.4V744.7M1165.5 733.4V745.0M1169.5 733.4V745.4M1174.5 733.4V745.8M1178.5 733.4V746.1M1182.5 733.4V746.5M1186.5 733.4V746.8M1191.5 733.4V747.2M1195.5 733.4V747.5M1199.5 733.4V747.7M1203.5 733.4V748.0M1207.5 733.4V748.2M1212.5 733.4V748.4M1216.5 733.4V748.6M1220.5 733.4V748.9M1224.5 733.4V749.1M1229.5 733.4V749.4M1233.5 733.4V749.7M1237.5 733.4V750.1M1241.5 733.4V750.5M1246.5 733.4V750.8M1250.5 733.4V751.2M1254.5 733.4V751.5M1258.5 733.4V751.9M1263.5 733.4V752.2M1267.5 733.4V752.5M1271.5 733.4V752.7M1275.5 733.4V752.9M1280.5 733.4V753.2M1284.5 733.4V753.4M1288.5 733.4V753.6M1292.5 733.4V753.8M1297.5 733.4V754.1M1301.5 733.4V754.3M1305.5 733.4V754.6M1309.5 733.4V754.9M1314.5 733.4V755.1M1318.5 733.4V755.4M1322.5 733.4V755.6M1326.5 733.4V755.9M1331.5 733.4V756.1M1335.5 733.4V756.4M1339.5 733.4V756.6M1343.5 733.4V756.8M1348.5 733.4V757.0M1352.5 733.4V757.2M1356.5 733.4V757.4M1360.5 733.4V757.6M1365.5 733.4V757.8M1369.5 733.4V758.1M1373.5 733.4V758.3M1377.5 733.4V758.5M1382.5 733.4V758.7M1386.5 733.4V758.9M1390.5 733.4V759.1M1394.5 733.4V759.3M1399.5 733.4V759.5M1403.5 733.4V759.6M1407.5 733.4V759.8M1411.5 733.4V759.9M1416.5 733.4V760.0M1420.5 733.4V760.2M1424.5 733.4V760.3M1428.5 733.4V760.4M1433.5 733.4V760.6M1437.5 733.4V760.7M1441.5 733.4V760.9M1445.5 733.4V761.0M1450.5 733.4V761.2M1454.5 733.4V761.3M1458.5 733.4V761.5M1462.5 733.4V761.7M1467.5 733.4V761.9M1471.5 733.4V762.0M1475.5 733.4V762.2M1479.5 733.4V762.4M1484.5 733.4V762.6M1488.5 733.4V762.6M1492.5 733.4V762.7M1496.5 733.4V762.8M1501.5 733.4V762.9M1505.5 733.4V763.0M1509.5 733.4V763.1M1513.5 733.4V763.1M1518.5 733.4V763.2M1522.5 733.4V763.3M1526.5 733.4V763.4M1530.5 733.4V763.5M1535.5 733.4V763.6M1539.5 733.4V763.7M1543.5 733.4V763.8M1547.5 733.4V763.9M1552.5 733.4V764.0M1556.5 733.4V764.1M1560.5 733.4V764.2M1564.5 733.4V764.3M1569.5 733.4V764.4M1573.5 733.4V764.4M1577.5 733.4V764.4M1581.5 733.4V764.4M1586.5 733.4V764.4M1590.5 733.4V764.4M1594.5 733.4V764.4M1598.5 733.4V764.4M1603.5 733.4V764.4M1607.5 733.4V764.4M1611.5 733.4V764.4M1615.5 733.4V764.4M1620.5 733.4V764.4M1624.5 733.4V764.4M1628.5 733.4V764.4M1632.5 733.4V764.4M1637.5 733.4V764.4M1641.5 733.4V764.4M1645.5 733.4V764.4M1649.5 733.4V764.4M1654.5 733.4V764.4M1658.5 733.4V764.4M1662.5 733.4V764.4M1666.5 733.4V764.4M1671.5 733.4V764.4M1675.5 733.4V764.4M1679.5 733.4V764.4M1683.5 733.4V764.4M1688.5 733.4V764.4M1692.5 733.4V764.4M1696.5 733.4V764.4M1700.5 733.4V764.3M1705.5 733.4V764.1M1709.5 733.4V764.0M1713.5 733.4V763.8M1717.5 733.4V763.6M1722.5 733.4V763.5M1726.5 733.4V763.4M1730.5 733.4V763.2M1734.5 733.4V763.1M1738.5 733.4V763.0M1743.5 733.4V762.9M1747.5 733.4V762.8M1751.5 733.4V762.6M1755.5 733.4V762.5M1760.5 733.4V762.4M1764.5 733.4V762.2M1768.5 733.4V762.0M1772.5 733.4V761.8M1777.5 733.4V761.6M1781.5 733.4V761.4M1785.5 733.4V761.2M1789.5 733.4V761.0M1794.5 733.4V760.9M1798.5 733.4V760.8M1802.5 733.4V760.7M1806.5 733.4V760.5M1811.5 733.4V760.4M1815.5 733.4V760.2M1819.5 733.4V760.0M1823.5 733.4V759.8M1828.5 733.4V759.6M1832.5 733.4V759.4M1836.5 733.4V759.2M1840.5 733.4V759.0M1845.5 733.4V758.8M1849.5 733.4V758.5M1853.5 733.4V758.3M1857.5 733.4V758.0M1862.5 733.4V757.8M1866.5 733.4V757.5M1870.5 733.4V757.3M1874.5 733.4V757.0M1879.5 733.4V756.8M1883.5 733.4V756.6M1887.5 733.4V756.3M1891.5 733.4V756.1M1896.5 733.4V755.9M1900.5 733.4V755.7M1904.5 733.4V755.5M1908.5 733.4V755.3M1913.5 733.4V755.1" stroke="#3232c8" stroke-width="1" fill="none"/></g></svg>
<div style="left:0px;top:1091px;width:1920px;height:85px;background:#f8f9fd"></div>
<div style="left:0px;top:1091px;width:1920px;height:1px;background:#b4b4bc"></div>
<div style="left:0px;top:1092px;width:1px;height:83px;background:#c8c8c8"></div>
<div style="left:4px;top:1097px;width:5px;height:1px;background:#bdbdbd"></div><div style="left:4px;top:1101px;width:5px;height:1px;background:#bdbdbd"></div><div style="left:4px;top:1105px;width:5px;height:1px;background:#bdbdbd"></div><div style="left:4px;top:1109px;width:5px;height:1px;background:#bdbdbd"></div><div style="left:4px;top:1113px;width:5px;height:1px;background:#bdbdbd"></div><div style="left:4px;top:1117px;width:5px;height:1px;background:#bdbdbd"></div><div style="left:4px;top:1121px;width:5px;height:1px;background:#bdbdbd"></div><div style="left:4px;top:1125px;width:5px;height:1px;background:#bdbdbd"></div><div style="left:4px;top:1129px;width:5px;height:1px;background:#bdbdbd"></div><div style="left:4px;top:1133px;width:5px;height:1px;background:#bdbdbd"></div><div style="left:4px;top:1137px;width:5px;height:1px;background:#bdbdbd"></div><div style="left:4px;top:1141px;width:5px;height:1px;background:#bdbdbd"></div><div style="left:4px;top:1145px;width:5px;height:1px;background:#bdbdbd"></div><div style="left:4px;top:1149px;width:5px;height:1px;background:#bdbdbd"></div><div style="left:4px;top:1153px;width:5px;height:1px;background:#bdbdbd"></div><div style="left:4px;top:1157px;width:5px;height:1px;background:#bdbdbd"></div><div style="left:4px;top:1161px;width:5px;height:1px;background:#bdbdbd"></div><div style="left:4px;top:1165px;width:5px;height:1px;background:#bdbdbd"></div><div style="left:4px;top:1169px;width:5px;height:1px;background:#bdbdbd"></div>
<div style="left:10px;top:1092px;width:1px;height:83px;background:#d8d8d8"></div>
<div class="t" style="left:17px;top:1105px;font-size:15px;color:#111;height:18px;line-height:18px;">Tempo</div>
<div class="t" style="left:83px;top:1105px;font-size:15px;color:#111;height:18px;line-height:18px;">Time Signature</div>
<div style="left:17px;top:1129px;width:44px;height:34px;background:#323232;border-radius:5px;border:1px solid #1c1c1c;box-sizing:border-box;"></div>
<div class="t" style="left:17px;top:1129px;font-size:15px;color:#eee;width:43px;height:34px;line-height:34px;text-align:center">120</div>
<div style="left:61px;top:1129px;width:17px;height:18px;background:#323232;border-radius:5px;border:1px solid #1c1c1c;box-sizing:border-box;"></div>
<div style="left:61px;top:1145px;width:17px;height:18px;background:#323232;border-radius:5px;border:1px solid #1c1c1c;box-sizing:border-box;"></div>
<div style="left:83px;top:1129px;width:44px;height:34px;background:#323232;border-radius:5px;border:1px solid #1c1c1c;box-sizing:border-box;"></div>
<div class="t" style="left:92px;top:1129px;font-size:15px;color:#eee;height:34px;line-height:34px;">4</div>
<div style="left:127px;top:1129px;width:17px;height:18px;background:#323232;border-radius:5px;border:1px solid #1c1c1c;box-sizing:border-box;"></div>
<div style="left:127px;top:1145px;width:17px;height:18px;background:#323232;border-radius:5px;border:1px solid #1c1c1c;box-sizing:border-box;"></div>
<svg style="position:absolute;left:0;top:1125px" width="240" height="40"><path d="M60.3 19.6 L62 21 L60.3 22.4 Z M126.3 19.6 L128 21 L126.3 22.4 Z" fill="#eee"/><path d="M148.3 28.6 L155 13.2" stroke="#111" stroke-width="1.3"/></svg>
<div style="left:161px;top:1129px;width:61px;height:34px;background:#323232;border-radius:5px;border:1px solid #1c1c1c;box-sizing:border-box;"></div>
<div style="left:186px;top:1130px;width:1px;height:32px;background:#1e1e1e"></div>
<div class="t" style="left:168px;top:1129px;font-size:15px;color:#eee;height:34px;line-height:34px;">4</div>
<svg style="position:absolute;left:196px;top:1142px" width="14" height="8"><path d="M1 1 H12 L6.5 6.5 Z" fill="#eee"/></svg>
<div style="left:231px;top:1092px;width:1px;height:83px;background:#c8c8c8"></div>
<div style="left:232px;top:1092px;width:1px;height:55px;background:#c8c8c8"></div>
<div style="left:236px;top:1097px;width:5px;height:1px;background:#bdbdbd"></div><div style="left:236px;top:1101px;width:5px;height:1px;background:#bdbdbd"></div><div style="left:236px;top:1105px;width:5px;height:1px;background:#bdbdbd"></div><div style="left:236px;top:1109px;width:5px;height:1px;background:#bdbdbd"></div><div style="left:236px;top:1113px;width:5px;height:1px;background:#bdbdbd"></div><div style="left:236px;top:1117px;width:5px;height:1px;background:#bdbdbd"></div><div style="left:236px;top:1121px;width:5px;height:1px;background:#bdbdbd"></div><div style="left:236px;top:1125px;width:5px;height:1px;background:#bdbdbd"></div><div style="left:236px;top:1129px;width:5px;height:1px;background:#bdbdbd"></div><div style="left:236px;top:1133px;width:5px;height:1px;background:#bdbdbd"></div><div style="left:236px;top:1137px;width:5px;height:1px;background:#bdbdbd"></div><div style="left:236px;top:1141px;width:5px;height:1px;background:#bdbdbd"></div>
<div style="left:241px;top:1092px;width:1px;height:55px;background:#d8d8d8"></div>
<div style="left:248px;top:1094px;width:16px;height:16px;background:#323232;border-radius:3px"></div>
<div class="t" style="left:264px;top:1093px;font-size:15px;color:#111;height:18px;line-height:18px;">Snap</div>
<div style="left:248px;top:1119px;width:131px;height:28px;background:#323232;border-radius:5px"></div>
<div class="t" style="left:257px;top:1119px;font-size:14px;color:#8c8c8c;height:28px;line-height:28px;">Milliseconds</div>
<div style="left:381px;top:1119px;width:17px;height:28px;background:#323232;border-radius:5px"></div>
<svg style="position:absolute;left:383px;top:1128px" width="13" height="9"><path d="M2 2 L6.5 6.5 L11 2" fill="none" stroke="#aaa" stroke-width="1.3"/></svg>
<div style="left:403px;top:1092px;width:1px;height:55px;background:#c8c8c8"></div>
<div style="left:404px;top:1092px;width:1px;height:55px;background:#c8c8c8"></div>
<div style="left:408px;top:1097px;width:5px;height:1px;background:#bdbdbd"></div><div style="left:408px;top:1101px;width:5px;height:1px;background:#bdbdbd"></div><div style="left:408px;top:1105px;width:5px;height:1px;background:#bdbdbd"></div><div style="left:408px;top:1109px;width:5px;height:1px;background:#bdbdbd"></div><div style="left:408px;top:1113px;width:5px;height:1px;background:#bdbdbd"></div><div style="left:408px;top:1117px;width:5px;height:1px;background:#bdbdbd"></div><div style="left:408px;top:1121px;width:5px;height:1px;background:#bdbdbd"></div><div style="left:408px;top:1125px;width:5px;height:1px;background:#bdbdbd"></div><div style="left:408px;top:1129px;width:5px;height:1px;background:#bdbdbd"></div><div style="left:408px;top:1133px;width:5px;height:1px;background:#bdbdbd"></div><div style="left:408px;top:1137px;width:5px;height:1px;background:#bdbdbd"></div><div style="left:408px;top:1141px;width:5px;height:1px;background:#bdbdbd"></div>
<div style="left:413px;top:1092px;width:1px;height:55px;background:#d8d8d8"></div>
<div style="left:415px;top:1098px;width:229px;height:42px;background:#d2d2d2;border:1.5px solid #222;border-radius:6px;box-sizing:border-box"></div>
<div style="left:463px;top:1100px;width:27px;height:38px;background:#b8bcc4"></div>
<div style="left:536px;top:1100px;width:34px;height:38px;background:#b8bcc4"></div>
<div style="left:616px;top:1100px;width:18px;height:38px;background:#b8bcc4"></div>
<div style="left:634px;top:1100px;width:9px;height:38px;background:#b8bcc4"></div>
<div style="left:634px;top:1100px;width:1px;height:38px;background:#fff"></div>
<div class="t" style="left:421px;top:1102px;font-size:25px;color:#0000b0;height:38px;line-height:38px;">0</div>
<div class="t" style="left:444px;top:1102px;font-size:25px;color:#0000b0;height:38px;line-height:38px;">0</div>
<div class="t" style="left:470px;top:1102px;font-size:25px;color:#0000b0;height:38px;line-height:38px;">h</div>
<div class="t" style="left:495px;top:1102px;font-size:25px;color:#0000b0;height:38px;line-height:38px;">0</div>
<div class="t" style="left:517px;top:1102px;font-size:25px;color:#0000b0;height:38px;line-height:38px;">0</div>
<div class="t" style="left:543px;top:1102px;font-size:25px;color:#0000b0;height:38px;line-height:38px;">m</div>
<div class="t" style="left:574px;top:1102px;font-size:25px;color:#0000b0;height:38px;line-height:38px;">0</div>
<div class="t" style="left:597px;top:1102px;font-size:25px;color:#0000b0;height:38px;line-height:38px;">0</div>
<div class="t" style="left:622px;top:1102px;font-size:25px;color:#0000b0;height:38px;line-height:38px;">s</div>
<svg style="position:absolute;left:633px;top:1114px" width="10" height="8"><path d="M1 1 H9 L5 6 Z" fill="#000"/></svg>
<div style="left:651px;top:1092px;width:1px;height:55px;background:#c8c8c8"></div>
<div style="left:654px;top:1092px;width:1px;height:55px;background:#c8c8c8"></div>
<div style="left:654px;top:1092px;width:1px;height:55px;background:#c8c8c8"></div>
<div style="left:658px;top:1097px;width:5px;height:1px;background:#bdbdbd"></div><div style="left:658px;top:1101px;width:5px;height:1px;background:#bdbdbd"></div><div style="left:658px;top:1105px;width:5px;height:1px;background:#bdbdbd"></div><div style="left:658px;top:1109px;width:5px;height:1px;background:#bdbdbd"></div><div style="left:658px;top:1113px;width:5px;height:1px;background:#bdbdbd"></div><div style="left:658px;top:1117px;width:5px;height:1px;background:#bdbdbd"></div><div style="left:658px;top:1121px;width:5px;height:1px;background:#bdbdbd"></div><div style="left:658px;top:1125px;width:5px;height:1px;background:#bdbdbd"></div><div style="left:658px;top:1129px;width:5px;height:1px;background:#bdbdbd"></div><div style="left:658px;top:1133px;width:5px;height:1px;background:#bdbdbd"></div><div style="left:658px;top:1137px;width:5px;height:1px;background:#bdbdbd"></div><div style="left:658px;top:1141px;width:5px;height:1px;background:#bdbdbd"></div>
<div style="left:664px;top:1092px;width:1px;height:55px;background:#d8d8d8"></div>
<div style="left:888px;top:1092px;width:1px;height:55px;background:#c8c8c8"></div>
<div class="t" style="left:671px;top:1097px;font-size:15px;color:#111;height:20px;line-height:20px;">Selection</div>
<div style="left:739px;top:1096px;width:145px;height:21px;background:#d2d2d2;border:1.5px solid #222;border-radius:5px;box-sizing:border-box"></div>
<div style="left:763px;top:1098px;width:10px;height:17px;background:#b8bcc4"></div>
<div style="left:795px;top:1098px;width:12px;height:17px;background:#b8bcc4"></div>
<div style="left:830px;top:1098px;width:3px;height:17px;background:#b8bcc4"></div>
<div style="left:867px;top:1098px;width:7px;height:17px;background:#b8bcc4"></div>
<div style="left:874px;top:1098px;width:7px;height:17px;background:#b8bcc4"></div>
<div class="t" style="left:744px;top:1097px;font-size:13px;color:#0000c8;height:19px;line-height:19px;">0</div>
<div class="t" style="left:755px;top:1097px;font-size:13px;color:#0000c8;height:19px;line-height:19px;">0</div>
<div class="t" style="left:765px;top:1100px;font-size:10px;color:#0000c8;height:19px;line-height:19px;">h</div>
<div class="t" style="left:776px;top:1097px;font-size:13px;color:#0000c8;height:19px;line-height:19px;">0</div>
<div class="t" style="left:787px;top:1097px;font-size:13px;color:#0000c8;height:19px;line-height:19px;">0</div>
<div class="t" style="left:797px;top:1100px;font-size:10px;color:#0000c8;height:19px;line-height:19px;">m</div>
<div class="t" style="left:809px;top:1097px;font-size:13px;color:#0000c8;height:19px;line-height:19px;">0</div>
<div class="t" style="left:820px;top:1097px;font-size:13px;color:#0000c8;height:19px;line-height:19px;">0</div>
<div class="t" style="left:830px;top:1100px;font-size:10px;color:#0000c8;height:19px;line-height:19px;">.</div>
<div class="t" style="left:835px;top:1097px;font-size:13px;color:#0000c8;height:19px;line-height:19px;">4</div>
<div class="t" style="left:846px;top:1097px;font-size:13px;color:#0000c8;height:19px;line-height:19px;">0</div>
<div class="t" style="left:858px;top:1097px;font-size:13px;color:#0000c8;height:19px;line-height:19px;">8</div>
<div class="t" style="left:867px;top:1100px;font-size:10px;color:#0000c8;height:19px;line-height:19px;">s</div>
<svg style="position:absolute;left:873px;top:1102px" width="10" height="8"><path d="M1 1 H9 L5 6 Z" fill="#000"/></svg>
<div style="left:739px;top:1118px;width:145px;height:21px;background:#d2d2d2;border:1.5px solid #222;border-radius:5px;box-sizing:border-box"></div>
<div style="left:763px;top:1120px;width:10px;height:17px;background:#b8bcc4"></div>
<div style="left:795px;top:1120px;width:12px;height:17px;background:#b8bcc4"></div>
<div style="left:830px;top:1120px;width:3px;height:17px;background:#b8bcc4"></div>
<div style="left:867px;top:1120px;width:7px;height:17px;background:#b8bcc4"></div>
<div style="left:874px;top:1120px;width:7px;height:17px;background:#b8bcc4"></div>
<div class="t" style="left:744px;top:1119px;font-size:13px;color:#0000c8;height:19px;line-height:19px;">0</div>
<div class="t" style="left:755px;top:1119px;font-size:13px;color:#0000c8;height:19px;line-height:19px;">0</div>
<div class="t" style="left:765px;top:1122px;font-size:10px;color:#0000c8;height:19px;line-height:19px;">h</div>
<div class="t" style="left:776px;top:1119px;font-size:13px;color:#0000c8;height:19px;line-height:19px;">0</div>
<div class="t" style="left:787px;top:1119px;font-size:13px;color:#0000c8;height:19px;line-height:19px;">0</div>
<div class="t" style="left:797px;top:1122px;font-size:10px;color:#0000c8;height:19px;line-height:19px;">m</div>
<div class="t" style="left:809px;top:1119px;font-size:13px;color:#0000c8;height:19px;line-height:19px;">0</div>
<div class="t" style="left:820px;top:1119px;font-size:13px;color:#0000c8;height:19px;line-height:19px;">0</div>
<div class="t" style="left:830px;top:1122px;font-size:10px;color:#0000c8;height:19px;line-height:19px;">.</div>
<div class="t" style="left:835px;top:1119px;font-size:13px;color:#0000c8;height:19px;line-height:19px;">4</div>
<div class="t" style="left:846px;top:1119px;font-size:13px;color:#0000c8;height:19px;line-height:19px;">3</div>
<div class="t" style="left:858px;top:1119px;font-size:13px;color:#0000c8;height:19px;line-height:19px;">6</div>
<div class="t" style="left:867px;top:1122px;font-size:10px;color:#0000c8;height:19px;line-height:19px;">s</div>
<svg style="position:absolute;left:873px;top:1124px" width="10" height="8"><path d="M1 1 H9 L5 6 Z" fill="#000"/></svg>
<div style="left:713px;top:1119px;width:20px;height:19px;background:#e8eefa;box-shadow:inset -1px -1px 0 #b9c0cc"></div>
<svg style="position:absolute;left:713px;top:1119px" width="20" height="19"><path d="M13.90 8.23 L15.51 8.51 L15.51 10.49 L13.90 10.77 L13.05 12.24 L13.61 13.78 L11.90 14.77 L10.85 13.51 L9.15 13.51 L8.10 14.77 L6.39 13.78 L6.95 12.24 L6.10 10.77 L4.49 10.49 L4.49 8.51 L6.10 8.23 L6.95 6.76 L6.39 5.22 L8.10 4.23 L9.15 5.49 L10.85 5.49 L11.90 4.23 L13.61 5.22 L13.05 6.76 Z" fill="none" stroke="#2a2a2a" stroke-width="1.05" stroke-linejoin="round"/><circle cx="10" cy="9.5" r="1.6" fill="none" stroke="#2a2a2a" stroke-width="1.05"/></svg>
<div style="left:889px;top:1092px;width:1px;height:27px;background:#c8c8c8"></div>
<div style="left:893px;top:1097px;width:5px;height:1px;background:#bdbdbd"></div><div style="left:893px;top:1101px;width:5px;height:1px;background:#bdbdbd"></div><div style="left:893px;top:1105px;width:5px;height:1px;background:#bdbdbd"></div><div style="left:893px;top:1109px;width:5px;height:1px;background:#bdbdbd"></div><div style="left:893px;top:1113px;width:5px;height:1px;background:#bdbdbd"></div>
<div style="left:898px;top:1092px;width:1px;height:27px;background:#d8d8d8"></div>
<div style="left:900px;top:1093px;width:27px;height:25px;background:#e8eefa;box-shadow:inset -1px -1px 0 #b9c0cc"></div>
<svg style="position:absolute;left:900px;top:1093px" width="27" height="25"><path d="M6.3 5.3 V18.8 L20 12 Z" fill="#3f8a5f" stroke="#3f8a5f" stroke-width="0.5" stroke-linejoin="round"/></svg>
<div class="t" style="left:931px;top:1093px;font-size:11px;color:#222;height:12px;line-height:12px;">&minus;</div>
<div class="t" style="left:1061.5px;top:1094px;font-size:12px;color:#111;height:12px;line-height:12px;">+</div>
<div style="left:932px;top:1109px;width:138px;height:2px;background:#a3a3a3"></div>
<div style="left:933.0px;top:1104px;width:1px;height:4px;background:#a8a8a8"></div><div style="left:942.8px;top:1104px;width:1px;height:4px;background:#a8a8a8"></div><div style="left:952.6px;top:1104px;width:1px;height:4px;background:#a8a8a8"></div><div style="left:962.4px;top:1104px;width:1px;height:4px;background:#a8a8a8"></div><div style="left:972.2px;top:1104px;width:1px;height:4px;background:#a8a8a8"></div><div style="left:982.0px;top:1104px;width:1px;height:4px;background:#a8a8a8"></div><div style="left:991.8px;top:1104px;width:1px;height:4px;background:#a8a8a8"></div><div style="left:1001.6px;top:1104px;width:1px;height:4px;background:#a8a8a8"></div><div style="left:1011.4px;top:1104px;width:1px;height:4px;background:#a8a8a8"></div><div style="left:1021.2px;top:1104px;width:1px;height:4px;background:#a8a8a8"></div><div style="left:1031.0px;top:1104px;width:1px;height:4px;background:#a8a8a8"></div><div style="left:1040.8px;top:1104px;width:1px;height:4px;background:#a8a8a8"></div><div style="left:1050.6px;top:1104px;width:1px;height:4px;background:#a8a8a8"></div><div style="left:1060.4px;top:1104px;width:1px;height:4px;background:#a8a8a8"></div><div style="left:1070.2px;top:1104px;width:1px;height:4px;background:#a8a8a8"></div>
<div style="left:973px;top:1100px;width:10px;height:18px;background:#f4f6fb;border:1px solid #333;border-radius:2px;box-sizing:border-box"></div>
<div style="left:977px;top:1106px;width:2px;height:5px;background:#777"></div>
<div style="left:1076px;top:1092px;width:1px;height:27px;background:#c8c8c8"></div>
<div style="left:1079px;top:1092px;width:1px;height:27px;background:#c8c8c8"></div>
<div style="left:232px;top:1147px;width:1688px;height:1px;background:#c8c8c8"></div>
<div style="left:889px;top:1119px;width:1031px;height:1px;background:#c8c8c8"></div>
<div style="left:0px;top:1176px;width:1920px;height:24px;background:#333333"></div>
<div class="t" style="left:5px;top:1177px;font-size:13.3px;color:#e6e6e6;height:23px;line-height:23px;">Stopped.</div>
<div class="t" style="left:188px;top:1177px;font-size:13.3px;color:#e6e6e6;height:23px;line-height:23px;">Click and drag to edit the samples (Esc to cancel)</div>
</body></html>
